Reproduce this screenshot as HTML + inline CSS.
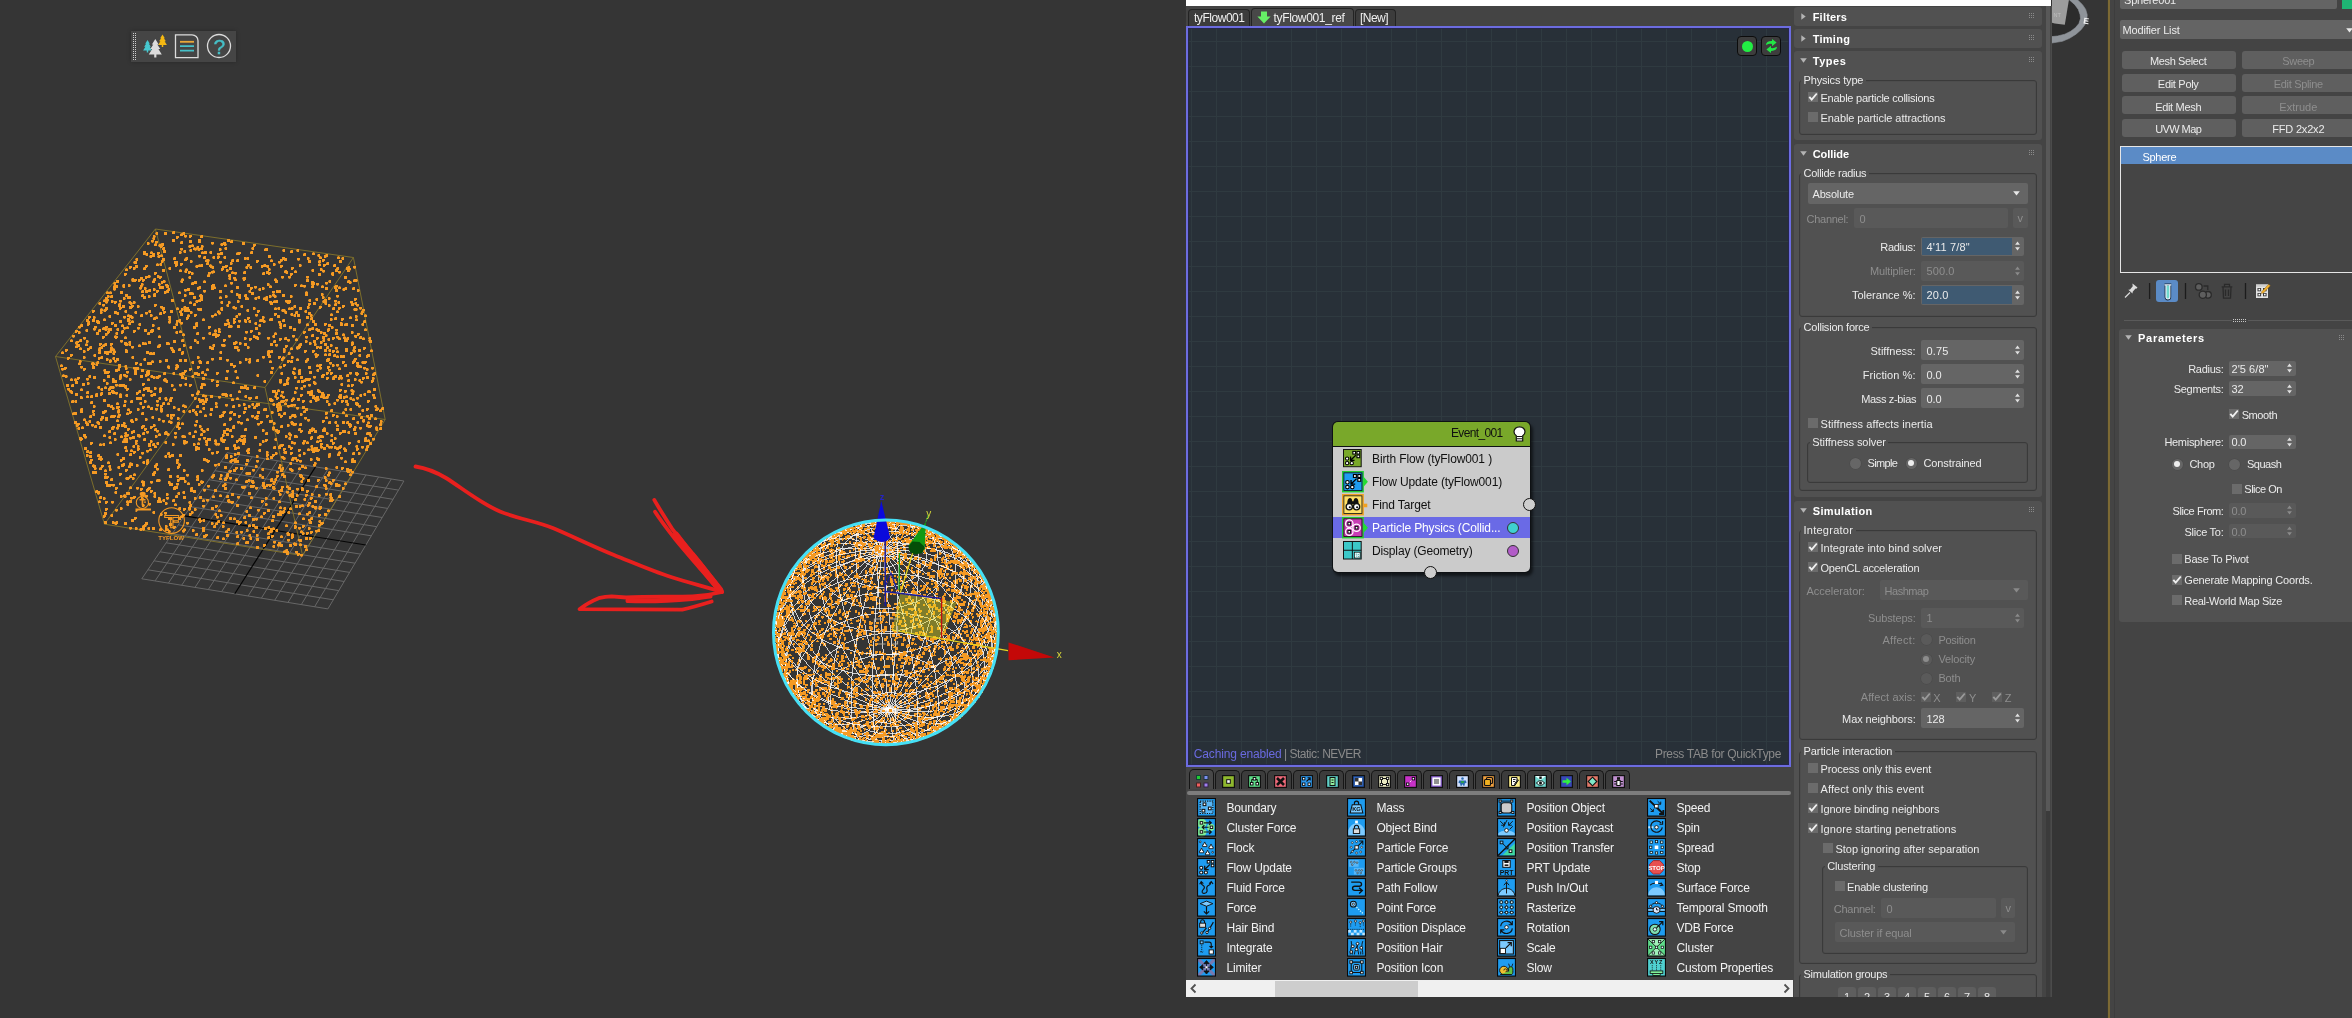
<!DOCTYPE html>
<html><head><meta charset="utf-8"><title>tyFlow</title>
<style>
html,body{margin:0;padding:0}
body{width:2352px;height:1018px;background:#353535;position:relative;overflow:hidden;font-family:"Liberation Sans",sans-serif}
body div,body span.t,body svg{position:absolute}
span.t{white-space:pre;display:block}
#w{left:0;top:0;width:2352px;height:1018px;will-change:transform}
svg{overflow:visible}
</style></head><body><div id="w">
<svg style="left:0;top:0" width="1186" height="1018" viewBox="0 0 1186 1018"><path d="M227.1 452.7L141.8 578.8M227.1 452.7L403.9 481.0M239.7 454.7L155.1 580.9M221.0 461.7L398.5 490.1M252.4 456.7L168.4 583.1M214.9 470.7L393.0 499.3M265.0 458.8L181.7 585.2M208.8 479.7L387.6 508.4M277.6 460.8L195.0 587.4M202.7 488.7L382.2 517.5M290.2 462.8L208.3 589.5M196.6 497.7L376.8 526.7M302.9 464.8L221.6 591.7M190.5 506.7L371.3 535.8M328.1 468.9L248.1 596.0M178.4 524.8L360.5 554.1M340.8 470.9L261.4 598.1M172.3 533.8L355.0 563.2M353.4 472.9L274.7 600.3M166.2 542.8L349.6 572.4M366.0 474.9L288.0 602.4M160.1 551.8L344.2 581.5M378.6 477.0L301.3 604.6M154.0 560.8L338.8 590.6M391.3 479.0L314.6 606.8M147.9 569.8L333.3 599.8M403.9 481.0L327.9 608.9M141.8 578.8L327.9 608.9" stroke="#676767" stroke-width="1" fill="none"/><path d="M315.5 466.9L234.8 593.8M184.4 515.8L365.9 545.0" stroke="#050505" stroke-width="1.200" fill="none"/><path d="M155.4 229.0L353.4 257.5M353.4 257.5L385.2 419.5M385.2 419.5L302.6 555.6M302.6 555.6L104.5 524.2M104.5 524.2L55.5 356.5M55.5 356.5L155.4 229.0M155.4 229.0L198.6 394.1M385.2 419.5L198.6 394.1M104.5 524.2L198.6 394.1M353.4 257.5L265.0 387.5M55.5 356.5L265.0 387.5M302.6 555.6L265.0 387.5" stroke="#85752a" stroke-width=".9" fill="none"/><path d="M307 306h2l1 1.500-1 1.500h-2zM181 376h3v3h-3zM173 406h2l1 1.500-1 1.500h-2zM254 436h3v3h-3zM156 468h3v2l-1.500 1-1.500-1zM226 534h3v3h-3zM271 399h2l1 1.500-1 1.500h-2zM334 300h3v2l-1.500 1-1.500-1zM191 282m1 0h2v3h-3v-2zM120 459h3v2h-1v1h-2zM317 389h2l1 1.500-1 1.500h-2zM175 264h3v2h-1v1h-2zM251 292h3v3h-3zM243 435h3v2l-1.500 1-1.500-1zM221 393m1 0h2v3h-2l-1-1.500zM265 298m0 1l1.500-1 1.500 1v2h-3zM268 255h3v3h-3zM197 442m0 1l1.500-1 1.500 1v2h-3zM142 481m1 0h2v3h-3v-2zM300 387m1 0h2v3h-2l-1-1.500zM237 325h3v3h-3zM202 407m1 0h2v3h-2l-1-1.500zM322 420h3v2h-1v1h-2zM146 462h3v2h-1v1h-2zM216 451h3v2h-1v1h-2zM113 288h3v2l-1.500 1-1.500-1zM180 241m1 0h2v3h-3v-2zM156 263m0 1l1.500-1 1.500 1v2h-3zM171 454h3v3h-3zM256 359m1 0h2v3h-3v-2zM226 304m1 0h2v3h-2l-1-1.500zM277 544h3v2l-1.500 1-1.500-1zM139 287h3v2l-1.500 1-1.500-1zM118 384m1 0h2v3h-2l-1-1.500zM113 282m1 0h2v3h-2l-1-1.500zM302 400h3v2h-1v1h-2zM364 361h3v2h-1v1h-2zM89 415m1 0h2v3h-3v-2zM237 446m0 1l1.500-1 1.500 1v2h-3zM158 479h2l1 1.500-1 1.500h-2zM336 295h3v2l-1.500 1-1.500-1zM164 291h2l1 1.500-1 1.500h-2zM189 249m1 0h2v3h-2l-1-1.500zM197 373h3v3h-3zM202 430m1 0h2v3h-2l-1-1.500zM231 259m1 0h2v3h-3v-2zM344 482m0 1l1.500-1 1.500 1v2h-3zM161 243m1 0h2v3h-2l-1-1.500zM148 503h3v2l-1.500 1-1.500-1zM200 386h3v3h-3zM130 302h2l1 1.500-1 1.500h-2zM239 342h2l1 1.500-1 1.500h-2zM252 469h3v2l-1.500 1-1.500-1zM259 319m1 0h2v3h-3v-2zM228 274m1 0h2v3h-3v-2zM310 497h3v2h-1v1h-2zM316 354h3v2h-1v1h-2zM123 494m0 1l1.500-1 1.500 1v2h-3zM134 311m1 0h2v3h-2l-1-1.500zM287 511m1 0h2v3h-2l-1-1.500zM160 243m0 1l1.500-1 1.500 1v2h-3zM321 375h3v3h-3zM112 391m1 0h2v3h-3v-2zM104 469m0 1l1.500-1 1.500 1v2h-3zM231 459h3v2l-1.500 1-1.500-1zM317 458m1 0h2v3h-3v-2zM155 435h2l1 1.500-1 1.500h-2zM135 527h2l1 1.500-1 1.500h-2zM332 414h3v2h-1v1h-2zM321 435m0 1l1.500-1 1.500 1v2h-3zM257 411h3v3h-3zM283 364h3v2h-1v1h-2zM112 484h3v2l-1.500 1-1.500-1zM366 445m1 0h2v3h-3v-2zM335 289h3v3h-3zM349 424h3v3h-3zM348 423h3v2h-1v1h-2zM273 340m1 0h2v3h-3v-2zM273 390h3v3h-3zM325 412h2l1 1.500-1 1.500h-2zM291 495m1 0h2v3h-3v-2zM316 346h3v2h-1v1h-2zM147 362h3v3h-3zM293 372h2l1 1.500-1 1.500h-2zM174 261h2l1 1.500-1 1.500h-2zM122 384m1 0h2v3h-3v-2zM114 380h3v3h-3zM282 356m0 1l1.500-1 1.500 1v2h-3zM278 321h3v2l-1.500 1-1.500-1zM202 519m1 0h2v3h-2l-1-1.500zM338 286m0 1l1.500-1 1.500 1v2h-3zM332 376m1 0h2v3h-2l-1-1.500zM142 394h3v2l-1.500 1-1.500-1zM124 385m1 0h2v3h-3v-2zM329 496m1 0h2v3h-2l-1-1.500zM349 316m0 1l1.500-1 1.500 1v2h-3zM368 390m0 1l1.500-1 1.500 1v2h-3zM315 530h3v2l-1.500 1-1.500-1zM168 455m1 0h2v3h-2l-1-1.500zM205 440h3v2h-1v1h-2zM103 299m0 1l1.500-1 1.500 1v2h-3zM74 412h3v3h-3zM250 251m1 0h2v3h-3v-2zM375 428m1 0h2v3h-2l-1-1.500zM85 329m1 0h2v3h-2l-1-1.500zM307 504h3v2h-1v1h-2zM184 309h3v3h-3zM265 296m1 0h2v3h-2l-1-1.500zM171 384h2l1 1.500-1 1.500h-2zM284 337m1 0h2v3h-3v-2zM86 340h2l1 1.500-1 1.500h-2zM284 311m1 0h2v3h-2l-1-1.500zM272 390h3v3h-3zM291 356h2l1 1.500-1 1.500h-2zM345 323m1 0h2v3h-2l-1-1.500zM153 492m1 0h2v3h-2l-1-1.500zM275 429m1 0h2v3h-2l-1-1.500zM194 397h2l1 1.500-1 1.500h-2zM203 535h3v3h-3zM203 458h3v2h-1v1h-2zM167 452m1 0h2v3h-3v-2zM353 460h3v2l-1.500 1-1.500-1zM291 422h3v2h-1v1h-2zM205 443m1 0h2v3h-2l-1-1.500zM189 368h3v2h-1v1h-2zM256 455h2l1 1.500-1 1.500h-2zM147 387h3v3h-3zM281 486h3v2h-1v1h-2zM145 253m1 0h2v3h-2l-1-1.500zM164 441m1 0h2v3h-2l-1-1.500zM220 243m1 0h2v3h-2l-1-1.500zM364 314m0 1l1.500-1 1.500 1v2h-3zM126 371h3v2l-1.500 1-1.500-1zM368 339m1 0h2v3h-2l-1-1.500zM102 327m0 1l1.500-1 1.500 1v2h-3zM106 358h2l1 1.500-1 1.500h-2zM372 394h3v2l-1.500 1-1.500-1zM272 515h3v3h-3zM279 510m0 1l1.500-1 1.500 1v2h-3zM308 384h3v2l-1.500 1-1.500-1zM122 457h3v3h-3zM175 486h3v3h-3zM319 506h3v3h-3zM135 440h3v2h-1v1h-2zM279 493h2l1 1.500-1 1.500h-2zM93 316h2l1 1.500-1 1.500h-2zM306 490h3v2h-1v1h-2zM116 419m0 1l1.500-1 1.500 1v2h-3zM75 330h3v2h-1v1h-2zM335 269h3v3h-3zM141 412m1 0h2v3h-3v-2zM169 398m1 0h2v3h-3v-2zM303 379m0 1l1.500-1 1.500 1v2h-3zM349 425h3v2h-1v1h-2zM250 330h3v2h-1v1h-2zM342 288m1 0h2v3h-2l-1-1.500zM223 430h3v3h-3zM347 266m1 0h2v3h-2l-1-1.500zM86 395m0 1l1.500-1 1.500 1v2h-3zM269 285m0 1l1.500-1 1.500 1v2h-3zM256 546h3v3h-3zM355 318m0 1l1.500-1 1.500 1v2h-3zM159 286h3v3h-3zM351 471h3v2l-1.500 1-1.500-1zM166 342h3v3h-3zM331 272m1 0h2v3h-3v-2zM199 520h3v2h-1v1h-2zM113 350m0 1l1.500-1 1.500 1v2h-3zM202 394m0 1l1.500-1 1.500 1v2h-3zM162 420h3v2l-1.500 1-1.500-1zM233 444m1 0h2v3h-3v-2zM80 324m1 0h2v3h-3v-2zM134 517h3v2h-1v1h-2zM166 414m1 0h2v3h-2l-1-1.500zM74 421h3v3h-3zM128 343m1 0h2v3h-2l-1-1.500zM161 281h3v2h-1v1h-2zM266 265m1 0h2v3h-2l-1-1.500zM276 431m1 0h2v3h-2l-1-1.500zM294 526h3v2h-1v1h-2zM289 544h3v3h-3zM371 380h3v2h-1v1h-2zM215 505h3v2h-1v1h-2zM165 359h3v3h-3zM322 339m1 0h2v3h-2l-1-1.500zM133 330h3v2h-1v1h-2zM212 270m0 1l1.500-1 1.500 1v2h-3zM291 267h3v2h-1v1h-2zM311 334m1 0h2v3h-3v-2zM261 468m1 0h2v3h-2l-1-1.500zM229 477h3v2l-1.500 1-1.500-1zM107 328m1 0h2v3h-2l-1-1.500zM294 423h3v2l-1.500 1-1.500-1zM147 405m0 1l1.500-1 1.500 1v2h-3zM181 435m1 0h2v3h-2l-1-1.500zM120 384m1 0h2v3h-2l-1-1.500zM330 439m1 0h2v3h-3v-2zM277 389m0 1l1.500-1 1.500 1v2h-3zM281 467m1 0h2v3h-2l-1-1.500zM118 303m1 0h2v3h-3v-2zM338 484h2l1 1.500-1 1.500h-2zM294 543h3v3h-3zM358 452h2l1 1.500-1 1.500h-2zM312 350h3v2h-1v1h-2zM127 477h3v2h-1v1h-2zM141 497h2l1 1.500-1 1.500h-2zM280 415h3v2h-1v1h-2zM124 386m1 0h2v3h-2l-1-1.500zM305 360h2l1 1.500-1 1.500h-2zM105 307h3v3h-3zM345 349h3v3h-3zM125 268m0 1l1.500-1 1.500 1v2h-3zM287 339h3v2l-1.500 1-1.500-1zM248 479h2l1 1.500-1 1.500h-2zM303 452h2l1 1.500-1 1.500h-2zM311 427m0 1l1.500-1 1.500 1v2h-3zM100 356m1 0h2v3h-2l-1-1.500zM309 429h3v2h-1v1h-2zM230 455h2l1 1.500-1 1.500h-2zM255 314h3v2l-1.500 1-1.500-1zM353 460m1 0h2v3h-3v-2zM340 323m1 0h2v3h-3v-2zM114 311h3v3h-3zM341 467h3v2h-1v1h-2zM182 404m0 1l1.500-1 1.500 1v2h-3zM67 388h3v2l-1.500 1-1.500-1zM202 402m0 1l1.500-1 1.500 1v2h-3zM291 536h3v2h-1v1h-2zM110 514m1 0h2v3h-2l-1-1.500zM277 409h3v2h-1v1h-2zM141 480m0 1l1.500-1 1.500 1v2h-3zM310 314h2l1 1.500-1 1.500h-2zM150 251m0 1l1.500-1 1.500 1v2h-3zM105 418m0 1l1.500-1 1.500 1v2h-3zM278 290m1 0h2v3h-3v-2zM148 487h3v2l-1.500 1-1.500-1zM220 301m1 0h2v3h-2l-1-1.500zM257 310h3v2h-1v1h-2zM187 482m0 1l1.500-1 1.500 1v2h-3zM125 350m1 0h2v3h-3v-2zM92 366h3v3h-3zM194 281h3v3h-3zM95 363m1 0h2v3h-2l-1-1.500zM144 329h3v3h-3zM255 396m1 0h2v3h-3v-2zM293 367m0 1l1.500-1 1.500 1v2h-3zM267 536m1 0h2v3h-3v-2zM176 461h2l1 1.500-1 1.500h-2zM150 481h3v2l-1.500 1-1.500-1zM236 376m0 1l1.500-1 1.500 1v2h-3zM255 327h3v3h-3zM351 341m0 1l1.500-1 1.500 1v2h-3zM136 397h3v3h-3zM144 287h2l1 1.500-1 1.500h-2zM158 283h2l1 1.500-1 1.500h-2zM228 500m0 1l1.500-1 1.500 1v2h-3zM324 349h3v3h-3zM129 453m1 0h2v3h-3v-2zM245 510m1 0h2v3h-2l-1-1.500zM184 270m1 0h2v3h-2l-1-1.500zM129 437h3v2l-1.500 1-1.500-1zM335 332h3v3h-3zM329 362h3v2l-1.500 1-1.500-1zM283 349h2l1 1.500-1 1.500h-2zM153 376h2l1 1.500-1 1.500h-2zM343 447m0 1l1.500-1 1.500 1v2h-3zM133 267h2l1 1.500-1 1.500h-2zM66 384h3v3h-3zM351 458m1 0h2v3h-3v-2zM344 364m1 0h2v3h-3v-2zM257 403h3v3h-3zM194 411m1 0h2v3h-2l-1-1.500zM162 258m1 0h2v3h-2l-1-1.500zM117 411h3v2l-1.500 1-1.500-1zM151 416m1 0h2v3h-2l-1-1.500zM366 368h2l1 1.500-1 1.500h-2zM294 415h2l1 1.500-1 1.500h-2zM308 431h3v3h-3zM144 387m1 0h2v3h-2l-1-1.500zM327 509m0 1l1.500-1 1.500 1v2h-3zM112 352m1 0h2v3h-2l-1-1.500zM198 518m1 0h2v3h-3v-2zM246 297m0 1l1.500-1 1.500 1v2h-3zM346 468h3v2l-1.500 1-1.500-1zM210 408h3v3h-3zM230 262h2l1 1.500-1 1.500h-2zM116 402m0 1l1.500-1 1.500 1v2h-3zM90 442h3v2h-1v1h-2zM203 290h3v2l-1.500 1-1.500-1zM191 244m0 1l1.500-1 1.500 1v2h-3zM271 519m1 0h2v3h-3v-2zM289 416h2l1 1.500-1 1.500h-2zM201 481h3v2h-1v1h-2zM147 488h3v2h-1v1h-2zM300 475h3v3h-3zM295 435m0 1l1.500-1 1.500 1v2h-3zM367 354h3v3h-3zM354 335h3v2l-1.500 1-1.500-1zM233 413h3v3h-3zM103 497h2l1 1.500-1 1.500h-2zM262 482h3v2h-1v1h-2zM254 286h3v2l-1.500 1-1.500-1zM237 452h3v3h-3zM231 398m0 1l1.500-1 1.500 1v2h-3zM172 499m1 0h2v3h-3v-2zM285 524m0 1l1.500-1 1.500 1v2h-3zM122 285m1 0h2v3h-2l-1-1.500zM141 426h3v2h-1v1h-2zM143 251h3v2h-1v1h-2zM262 316h2l1 1.500-1 1.500h-2zM353 359m1 0h2v3h-3v-2zM347 269h3v3h-3zM204 395h3v2l-1.500 1-1.500-1zM178 507m1 0h2v3h-3v-2zM313 464h3v2l-1.500 1-1.500-1zM132 445m1 0h2v3h-2l-1-1.500zM310 390m1 0h2v3h-3v-2zM178 463m0 1l1.500-1 1.500 1v2h-3zM319 435h3v2l-1.500 1-1.500-1zM209 264m0 1l1.500-1 1.500 1v2h-3zM349 397m1 0h2v3h-2l-1-1.500zM157 500h2l1 1.500-1 1.500h-2zM201 371m1 0h2v3h-3v-2zM250 485h2l1 1.500-1 1.500h-2zM295 338m0 1l1.500-1 1.500 1v2h-3zM232 425m1 0h2v3h-2l-1-1.500zM197 287h2l1 1.500-1 1.500h-2zM184 480h2l1 1.500-1 1.500h-2zM294 284h3v2h-1v1h-2zM367 400h3v2h-1v1h-2zM165 380m1 0h2v3h-2l-1-1.500zM293 314m1 0h2v3h-2l-1-1.500zM138 279h3v2h-1v1h-2zM155 232m1 0h2v3h-2l-1-1.500zM140 277h3v2l-1.500 1-1.500-1zM255 487h3v2l-1.500 1-1.500-1zM234 307h3v2l-1.500 1-1.500-1zM172 414h3v2l-1.500 1-1.500-1zM156 479m1 0h2v3h-3v-2zM234 447m1 0h2v3h-2l-1-1.500zM75 342m1 0h2v3h-2l-1-1.500zM298 319h3v3h-3zM165 398h2l1 1.500-1 1.500h-2zM155 241h3v2l-1.500 1-1.500-1zM278 402h2l1 1.500-1 1.500h-2zM118 414h3v2l-1.500 1-1.500-1zM321 392h3v2h-1v1h-2zM297 314h3v3h-3zM363 347h3v2h-1v1h-2zM129 486m0 1l1.500-1 1.500 1v2h-3zM183 435m0 1l1.500-1 1.500 1v2h-3zM249 397h3v2h-1v1h-2zM139 528m1 0h2v3h-2l-1-1.500zM362 377h3v2h-1v1h-2zM262 429h2l1 1.500-1 1.500h-2zM217 334h3v2h-1v1h-2zM356 304h3v2l-1.500 1-1.500-1zM191 375m1 0h2v3h-2l-1-1.500zM362 420h3v2l-1.500 1-1.500-1zM254 416m0 1l1.500-1 1.500 1v2h-3zM238 294m1 0h2v3h-3v-2zM285 549m1 0h2v3h-3v-2zM279 379h3v2h-1v1h-2zM150 426h3v2h-1v1h-2zM344 390h3v2l-1.500 1-1.500-1zM307 419h3v2l-1.500 1-1.500-1zM344 276h3v3h-3zM351 331h2l1 1.500-1 1.500h-2zM87 323h3v2h-1v1h-2zM114 438h2l1 1.500-1 1.500h-2zM312 282m1 0h2v3h-3v-2zM333 264m1 0h2v3h-3v-2zM256 403h3v2l-1.500 1-1.500-1zM353 279m1 0h2v3h-3v-2zM109 484h3v2h-1v1h-2zM236 259m1 0h2v3h-3v-2zM112 415m0 1l1.500-1 1.500 1v2h-3zM133 261m1 0h2v3h-2l-1-1.500zM150 394m1 0h2v3h-2l-1-1.500zM286 382h3v3h-3zM81 426m0 1l1.500-1 1.500 1v2h-3zM319 306h3v2h-1v1h-2zM157 345m1 0h2v3h-3v-2zM151 360m0 1l1.500-1 1.500 1v2h-3zM149 352m1 0h2v3h-3v-2zM106 291m0 1l1.500-1 1.500 1v2h-3zM229 411m0 1l1.500-1 1.500 1v2h-3zM256 374m1 0h2v3h-2l-1-1.500zM350 301h3v2l-1.500 1-1.500-1zM111 390h3v2h-1v1h-2zM79 437h3v3h-3zM147 378m0 1l1.500-1 1.500 1v2h-3zM302 517m0 1l1.500-1 1.500 1v2h-3zM70 391m1 0h2v3h-2l-1-1.500zM324 484m0 1l1.500-1 1.500 1v2h-3zM125 440h3v3h-3zM330 372h3v2h-1v1h-2zM137 327h3v2l-1.500 1-1.500-1zM257 509h3v2l-1.500 1-1.500-1zM211 507h3v3h-3zM316 337h3v2h-1v1h-2zM346 374m1 0h2v3h-3v-2zM252 485h3v2h-1v1h-2zM324 513h3v3h-3zM233 277h3v2l-1.500 1-1.500-1zM283 350h2l1 1.500-1 1.500h-2zM375 426m0 1l1.500-1 1.500 1v2h-3zM318 524h3v2h-1v1h-2zM222 266h3v2h-1v1h-2zM80 388m0 1l1.500-1 1.500 1v2h-3zM70 339m0 1l1.500-1 1.500 1v2h-3zM147 527m1 0h2v3h-2l-1-1.500zM178 427h3v2h-1v1h-2zM176 425m1 0h2v3h-3v-2zM278 490h3v2h-1v1h-2zM299 505h3v2h-1v1h-2zM236 520h3v2h-1v1h-2zM334 421m1 0h2v3h-2l-1-1.500zM270 259m0 1l1.500-1 1.500 1v2h-3zM317 479h3v2h-1v1h-2zM324 353m0 1l1.500-1 1.500 1v2h-3zM142 383h3v2h-1v1h-2zM256 415h3v2h-1v1h-2zM273 300m0 1l1.500-1 1.500 1v2h-3zM102 304h3v2l-1.500 1-1.500-1zM256 538h3v3h-3zM118 304h3v3h-3zM332 442h3v2h-1v1h-2zM219 296m0 1l1.500-1 1.500 1v2h-3zM369 442h3v3h-3zM127 428h3v2h-1v1h-2zM128 319h2l1 1.500-1 1.500h-2zM67 357h3v2h-1v1h-2zM220 474h2l1 1.500-1 1.500h-2zM327 358h3v3h-3zM305 548m0 1l1.500-1 1.500 1v2h-3zM276 405h2l1 1.500-1 1.500h-2zM125 469h3v2h-1v1h-2zM366 408h3v2h-1v1h-2zM260 515m0 1l1.500-1 1.500 1v2h-3zM321 522h3v2h-1v1h-2zM338 446m1 0h2v3h-3v-2zM328 349m1 0h2v3h-2l-1-1.500zM283 475m1 0h2v3h-3v-2zM236 440h3v2h-1v1h-2zM171 299h3v3h-3zM115 509h3v2l-1.500 1-1.500-1zM318 260m1 0h2v3h-3v-2zM360 381h3v2l-1.500 1-1.500-1zM340 355h2l1 1.500-1 1.500h-2zM103 515h3v2h-1v1h-2zM194 248h3v2l-1.500 1-1.500-1zM319 346m1 0h2v3h-3v-2zM324 343h3v3h-3zM313 447m1 0h2v3h-3v-2zM97 454m1 0h2v3h-3v-2zM238 415h3v2h-1v1h-2zM306 441m0 1l1.500-1 1.500 1v2h-3zM261 476m1 0h2v3h-2l-1-1.500zM229 417m0 1l1.500-1 1.500 1v2h-3zM186 307h3v2l-1.500 1-1.500-1zM179 454h3v3h-3zM325 254m1 0h2v3h-3v-2zM194 314h3v2h-1v1h-2zM287 301m0 1l1.500-1 1.500 1v2h-3zM101 465h3v2h-1v1h-2zM90 459h3v2h-1v1h-2zM262 440h2l1 1.500-1 1.500h-2zM279 366h3v2l-1.500 1-1.500-1zM123 316h3v2l-1.500 1-1.500-1zM108 315m1 0h2v3h-2l-1-1.500zM296 488h3v2l-1.500 1-1.500-1zM200 295h3v3h-3zM162 402m1 0h2v3h-3v-2zM228 470m1 0h2v3h-2l-1-1.500zM231 271m0 1l1.500-1 1.500 1v2h-3zM138 323m1 0h2v3h-2l-1-1.500zM317 436m1 0h2v3h-3v-2zM118 365m0 1l1.500-1 1.500 1v2h-3zM283 309h2l1 1.500-1 1.500h-2zM75 341m0 1l1.500-1 1.500 1v2h-3zM308 260h3v3h-3zM298 346h3v2h-1v1h-2zM225 477h3v2h-1v1h-2zM98 348m0 1l1.500-1 1.500 1v2h-3zM218 396h3v2l-1.500 1-1.500-1zM163 311h3v2h-1v1h-2zM90 395m1 0h2v3h-3v-2zM242 277m1 0h2v3h-2l-1-1.500zM338 367m0 1l1.500-1 1.500 1v2h-3zM315 399h2l1 1.500-1 1.500h-2zM300 413h2l1 1.500-1 1.500h-2zM225 530m0 1l1.500-1 1.500 1v2h-3zM116 280h3v3h-3zM278 466m0 1l1.500-1 1.500 1v2h-3zM202 337h3v2l-1.500 1-1.500-1zM336 415h2l1 1.500-1 1.500h-2zM236 542m1 0h2v3h-3v-2zM152 280m0 1l1.500-1 1.500 1v2h-3zM110 346m0 1l1.500-1 1.500 1v2h-3zM248 534m1 0h2v3h-2l-1-1.500zM239 521h3v2h-1v1h-2zM112 348m0 1l1.500-1 1.500 1v2h-3zM246 529h2l1 1.500-1 1.500h-2zM64 367h3v2h-1v1h-2zM229 394m1 0h2v3h-2l-1-1.500zM284 270m1 0h2v3h-3v-2zM284 451h3v3h-3zM176 483h3v2l-1.500 1-1.500-1zM107 371h3v2h-1v1h-2zM218 509m0 1l1.500-1 1.500 1v2h-3zM258 324m1 0h2v3h-2l-1-1.500zM70 354h3v2h-1v1h-2zM244 337h2l1 1.500-1 1.500h-2zM345 395m0 1l1.500-1 1.500 1v2h-3zM305 408h3v3h-3zM354 426h2l1 1.500-1 1.500h-2zM166 290h3v3h-3zM153 294m1 0h2v3h-3v-2zM224 393m1 0h2v3h-3v-2zM322 396m1 0h2v3h-2l-1-1.500zM195 322m1 0h2v3h-3v-2zM166 497h3v2l-1.500 1-1.500-1zM212 333m0 1l1.500-1 1.500 1v2h-3zM110 405m1 0h2v3h-3v-2zM145 418h2l1 1.500-1 1.500h-2zM340 377h3v2l-1.500 1-1.500-1zM227 528m1 0h2v3h-3v-2zM238 320h3v2l-1.500 1-1.500-1zM351 303m1 0h2v3h-3v-2zM142 461m1 0h2v3h-2l-1-1.500zM270 528h3v2l-1.500 1-1.500-1zM148 444m1 0h2v3h-3v-2zM125 349h2l1 1.500-1 1.500h-2zM360 312m1 0h2v3h-2l-1-1.500zM278 261h3v2l-1.500 1-1.500-1zM272 335m1 0h2v3h-2l-1-1.500zM149 362m1 0h2v3h-3v-2zM349 408m1 0h2v3h-2l-1-1.500zM72 412m0 1l1.500-1 1.500 1v2h-3zM152 237m1 0h2v3h-2l-1-1.500zM192 529h2l1 1.500-1 1.500h-2zM314 397h3v2h-1v1h-2zM110 343h3v2h-1v1h-2zM133 473m0 1l1.500-1 1.500 1v2h-3zM353 350h3v2l-1.500 1-1.500-1zM103 369m1 0h2v3h-2l-1-1.500zM111 300h2l1 1.500-1 1.500h-2zM115 336h3v2h-1v1h-2zM234 460h2l1 1.500-1 1.500h-2zM362 309h3v2l-1.500 1-1.500-1zM235 478m0 1l1.500-1 1.500 1v2h-3zM92 413m1 0h2v3h-2l-1-1.500zM176 459h3v2l-1.500 1-1.500-1zM229 418h3v2h-1v1h-2zM86 423m1 0h2v3h-3v-2zM79 360h2l1 1.500-1 1.500h-2zM356 397h3v2l-1.500 1-1.500-1zM299 543m0 1l1.500-1 1.500 1v2h-3zM138 390m1 0h2v3h-2l-1-1.500zM274 313h3v2h-1v1h-2zM161 260h2l1 1.500-1 1.500h-2zM328 446h3v2l-1.500 1-1.500-1zM338 451m0 1l1.500-1 1.500 1v2h-3zM334 317m1 0h2v3h-3v-2zM205 259m0 1l1.500-1 1.500 1v2h-3zM80 396h2l1 1.500-1 1.500h-2zM379 423m1 0h2v3h-3v-2zM270 478m1 0h2v3h-3v-2zM104 328m1 0h2v3h-2l-1-1.500zM300 554h3v2l-1.500 1-1.500-1zM131 346h3v2l-1.500 1-1.500-1zM97 492h3v2l-1.500 1-1.500-1zM97 491m1 0h2v3h-2l-1-1.500zM182 232m1 0h2v3h-3v-2zM225 295h2l1 1.500-1 1.500h-2zM186 474h3v2l-1.500 1-1.500-1zM349 372h3v2l-1.500 1-1.500-1zM301 465h3v3h-3zM170 417h3v2l-1.500 1-1.500-1zM312 450m1 0h2v3h-3v-2zM354 378h2l1 1.500-1 1.500h-2zM225 447h3v2h-1v1h-2zM143 358m1 0h2v3h-2l-1-1.500zM255 465h2l1 1.500-1 1.500h-2zM328 481m1 0h2v3h-3v-2zM119 395m1 0h2v3h-3v-2zM92 319h3v3h-3zM336 310m0 1l1.500-1 1.500 1v2h-3zM184 289h3v2l-1.500 1-1.500-1zM230 363h3v3h-3zM156 290h3v2h-1v1h-2zM279 408m1 0h2v3h-3v-2zM191 272h2l1 1.500-1 1.500h-2zM358 379m1 0h2v3h-2l-1-1.500zM175 367h2l1 1.500-1 1.500h-2zM125 477m1 0h2v3h-2l-1-1.500zM130 449m0 1l1.500-1 1.500 1v2h-3zM220 308m1 0h2v3h-2l-1-1.500zM181 352h2l1 1.500-1 1.500h-2zM245 472m1 0h2v3h-2l-1-1.500zM119 300h3v2l-1.500 1-1.500-1zM303 385h3v2l-1.500 1-1.500-1zM206 499h3v2l-1.500 1-1.500-1zM158 433m0 1l1.500-1 1.500 1v2h-3zM338 337m0 1l1.500-1 1.500 1v2h-3zM156 400h3v2l-1.500 1-1.500-1zM219 357h3v3h-3zM239 361h2l1 1.500-1 1.500h-2zM167 366m1 0h2v3h-2l-1-1.500zM325 487h2l1 1.500-1 1.500h-2zM157 255m1 0h2v3h-2l-1-1.500zM174 486h3v2l-1.500 1-1.500-1zM332 377m0 1l1.500-1 1.500 1v2h-3zM112 521h2l1 1.500-1 1.500h-2zM133 451h3v2h-1v1h-2zM230 325h2l1 1.500-1 1.500h-2zM179 251h2l1 1.500-1 1.500h-2zM238 404h2l1 1.500-1 1.500h-2zM207 259h2l1 1.500-1 1.500h-2zM374 405m1 0h2v3h-2l-1-1.500zM123 374h3v2l-1.500 1-1.500-1zM209 413m1 0h2v3h-2l-1-1.500zM281 444h3v2h-1v1h-2zM159 387m0 1l1.500-1 1.500 1v2h-3zM300 284m0 1l1.500-1 1.500 1v2h-3zM339 394h3v3h-3zM232 306m1 0h2v3h-2l-1-1.500zM143 296h3v3h-3zM253 335h2l1 1.500-1 1.500h-2zM93 354m1 0h2v3h-2l-1-1.500zM230 282h3v2l-1.500 1-1.500-1zM164 232h3v3h-3zM147 373h3v2h-1v1h-2zM96 421m1 0h2v3h-2l-1-1.500zM235 467h3v2h-1v1h-2zM266 454h3v2h-1v1h-2zM162 258h3v3h-3zM270 318h3v2h-1v1h-2zM286 551m1 0h2v3h-2l-1-1.500zM240 531h3v2l-1.500 1-1.500-1zM360 416m1 0h2v3h-3v-2zM289 326h3v3h-3zM298 428m1 0h2v3h-3v-2zM288 307m0 1l1.500-1 1.500 1v2h-3zM182 491m1 0h2v3h-2l-1-1.500zM179 310m0 1l1.500-1 1.500 1v2h-3zM158 498m1 0h2v3h-3v-2zM242 442h3v3h-3zM274 307m0 1l1.500-1 1.500 1v2h-3zM234 370m1 0h2v3h-2l-1-1.500zM292 335h3v2l-1.500 1-1.500-1zM153 288h2l1 1.500-1 1.500h-2zM100 308m0 1l1.500-1 1.500 1v2h-3zM268 355h3v3h-3zM369 340h3v3h-3zM214 442m1 0h2v3h-2l-1-1.500zM146 371h2l1 1.500-1 1.500h-2zM80 396m0 1l1.500-1 1.500 1v2h-3zM193 326h3v3h-3zM300 530m0 1l1.500-1 1.500 1v2h-3zM224 487h3v3h-3zM223 344h2l1 1.500-1 1.500h-2zM332 364h2l1 1.500-1 1.500h-2zM246 257m1 0h2v3h-2l-1-1.500zM169 523h3v3h-3zM270 479m1 0h2v3h-3v-2zM232 381m0 1l1.500-1 1.500 1v2h-3zM305 340h2l1 1.500-1 1.500h-2zM208 326h3v2h-1v1h-2zM183 344h2l1 1.500-1 1.500h-2zM244 320m1 0h2v3h-2l-1-1.500zM305 494h3v2h-1v1h-2zM114 324h3v3h-3zM233 342h3v3h-3zM370 349m0 1l1.500-1 1.500 1v2h-3zM185 257m1 0h2v3h-3v-2zM180 248h3v2l-1.500 1-1.500-1zM269 318m0 1l1.500-1 1.500 1v2h-3zM117 424h3v3h-3zM159 263m1 0h2v3h-2l-1-1.500zM298 344m1 0h2v3h-3v-2zM175 261h3v3h-3zM181 422m0 1l1.500-1 1.500 1v2h-3zM307 257h2l1 1.500-1 1.500h-2zM211 271h3v2l-1.500 1-1.500-1zM334 303m1 0h2v3h-3v-2zM200 480m0 1l1.500-1 1.500 1v2h-3zM127 318h3v2h-1v1h-2zM211 285h3v2h-1v1h-2zM120 507h2l1 1.500-1 1.500h-2zM325 334h2l1 1.500-1 1.500h-2zM198 286m1 0h2v3h-2l-1-1.500zM338 307h3v2h-1v1h-2zM156 442m1 0h2v3h-2l-1-1.500zM211 266m1 0h2v3h-2l-1-1.500zM198 239h3v2h-1v1h-2zM154 304h3v2h-1v1h-2zM332 307m1 0h2v3h-3v-2zM330 409m1 0h2v3h-3v-2zM327 329h3v2h-1v1h-2zM182 530h3v2l-1.500 1-1.500-1zM298 321h3v2l-1.500 1-1.500-1zM242 537m1 0h2v3h-2l-1-1.500zM352 349m1 0h2v3h-2l-1-1.500zM228 335h3v2l-1.500 1-1.500-1zM370 414h3v3h-3zM152 352m1 0h2v3h-3v-2zM136 487h3v2l-1.500 1-1.500-1zM86 319h3v2h-1v1h-2zM358 413h3v2l-1.500 1-1.500-1zM244 395m1 0h2v3h-2l-1-1.500zM311 281h3v2h-1v1h-2zM143 267m1 0h2v3h-3v-2zM154 428m1 0h2v3h-3v-2zM267 532m1 0h2v3h-3v-2zM368 432m1 0h2v3h-2l-1-1.500zM250 496m0 1l1.500-1 1.500 1v2h-3zM116 427h3v2l-1.500 1-1.500-1zM207 485h3v2l-1.500 1-1.500-1zM87 348h3v2h-1v1h-2zM372 377h2l1 1.500-1 1.500h-2zM195 265m1 0h2v3h-2l-1-1.500zM361 323m1 0h2v3h-2l-1-1.500zM196 405m1 0h2v3h-3v-2zM310 445m1 0h2v3h-2l-1-1.500zM273 487h2l1 1.500-1 1.500h-2zM117 466m1 0h2v3h-2l-1-1.500zM137 448h3v2h-1v1h-2zM132 477h2l1 1.500-1 1.500h-2zM107 351h3v2h-1v1h-2zM100 393h3v2h-1v1h-2zM328 297h2l1 1.500-1 1.500h-2zM304 310m1 0h2v3h-2l-1-1.500zM190 487m1 0h2v3h-3v-2zM207 460h3v2h-1v1h-2zM129 475m1 0h2v3h-3v-2zM352 361h3v2h-1v1h-2zM228 325m1 0h2v3h-3v-2zM116 406h2l1 1.500-1 1.500h-2zM328 369h3v2l-1.500 1-1.500-1zM126 388h3v2h-1v1h-2zM302 442h3v2l-1.500 1-1.500-1zM134 370h3v2h-1v1h-2zM280 265h3v2h-1v1h-2zM351 384h3v2h-1v1h-2zM105 417h3v2l-1.500 1-1.500-1zM219 477m0 1l1.500-1 1.500 1v2h-3zM343 430m1 0h2v3h-2l-1-1.500zM150 314h2l1 1.500-1 1.500h-2zM204 251m1 0h2v3h-2l-1-1.500zM364 439m0 1l1.500-1 1.500 1v2h-3zM278 446h3v3h-3zM110 295m1 0h2v3h-3v-2zM146 489h3v2h-1v1h-2zM233 342m0 1l1.500-1 1.500 1v2h-3zM183 469h2l1 1.500-1 1.500h-2zM279 338h3v2h-1v1h-2zM361 361m1 0h2v3h-2l-1-1.500zM112 386h2l1 1.500-1 1.500h-2zM108 465m1 0h2v3h-2l-1-1.500zM129 315m1 0h2v3h-3v-2zM127 492m1 0h2v3h-3v-2zM272 291h3v2l-1.500 1-1.500-1zM240 435m1 0h2v3h-2l-1-1.500zM338 395m1 0h2v3h-3v-2zM198 240h3v3h-3zM286 552m0 1l1.500-1 1.500 1v2h-3zM149 448m0 1l1.500-1 1.500 1v2h-3zM102 411h3v3h-3zM104 473h3v2l-1.500 1-1.500-1zM283 457h2l1 1.500-1 1.500h-2zM146 431h3v2l-1.500 1-1.500-1zM134 372h3v3h-3zM250 287h3v2h-1v1h-2zM136 367m1 0h2v3h-2l-1-1.500zM109 386m1 0h2v3h-3v-2zM367 425m1 0h2v3h-2l-1-1.500zM119 374m1 0h2v3h-2l-1-1.500zM197 248m1 0h2v3h-2l-1-1.500zM282 400h3v2h-1v1h-2zM304 545h3v3h-3zM184 370h3v2h-1v1h-2zM247 284h3v3h-3zM335 483h3v2h-1v1h-2zM332 350h3v2h-1v1h-2zM170 397h3v2h-1v1h-2zM314 430h3v3h-3zM176 365m1 0h2v3h-2l-1-1.500zM220 307m1 0h2v3h-2l-1-1.500zM69 390h3v2l-1.500 1-1.500-1zM311 285m1 0h2v3h-3v-2zM266 271h3v2h-1v1h-2zM274 278m0 1l1.500-1 1.500 1v2h-3zM310 437h3v2h-1v1h-2zM353 346m1 0h2v3h-3v-2zM255 518h3v2l-1.500 1-1.500-1zM290 360m1 0h2v3h-3v-2zM89 455h3v3h-3zM108 392h3v3h-3zM367 439m0 1l1.500-1 1.500 1v2h-3zM83 350h2l1 1.500-1 1.500h-2zM208 448h2l1 1.500-1 1.500h-2zM188 410m1 0h2v3h-2l-1-1.500zM144 400h2l1 1.500-1 1.500h-2zM357 289h2l1 1.500-1 1.500h-2zM243 411h3v2h-1v1h-2zM247 346h2l1 1.500-1 1.500h-2zM142 279h3v2h-1v1h-2zM365 372h2l1 1.500-1 1.500h-2zM238 296m1 0h2v3h-2l-1-1.500zM216 384h3v2h-1v1h-2zM344 323m0 1l1.500-1 1.500 1v2h-3zM135 442h2l1 1.500-1 1.500h-2zM168 318m1 0h2v3h-2l-1-1.500zM276 403m1 0h2v3h-3v-2zM229 517h3v3h-3zM196 332m1 0h2v3h-3v-2zM341 257m1 0h2v3h-2l-1-1.500zM326 400h2l1 1.500-1 1.500h-2zM96 320h3v2h-1v1h-2zM216 516h3v2l-1.500 1-1.500-1zM247 448m1 0h2v3h-3v-2zM270 302h3v3h-3zM351 324h3v3h-3zM83 368h3v2h-1v1h-2zM217 463m1 0h2v3h-2l-1-1.500zM98 302m1 0h2v3h-2l-1-1.500zM312 320h3v3h-3zM112 426h3v2l-1.500 1-1.500-1zM224 247m1 0h2v3h-2l-1-1.500zM218 312h3v2l-1.500 1-1.500-1zM89 451m1 0h2v3h-3v-2zM119 473h3v2h-1v1h-2zM293 305m1 0h2v3h-2l-1-1.500zM302 525h3v2h-1v1h-2zM93 376h3v2h-1v1h-2zM195 324m1 0h2v3h-2l-1-1.500zM308 303h3v2h-1v1h-2zM206 361m1 0h2v3h-3v-2zM213 525m1 0h2v3h-3v-2zM372 438h3v2l-1.500 1-1.500-1zM129 462m0 1l1.500-1 1.500 1v2h-3zM202 505h3v2l-1.500 1-1.500-1zM180 280m1 0h2v3h-2l-1-1.500zM248 320m1 0h2v3h-2l-1-1.500zM139 456h2l1 1.500-1 1.500h-2zM214 329m0 1l1.500-1 1.500 1v2h-3zM285 345h3v2h-1v1h-2zM160 408h3v2l-1.500 1-1.500-1zM283 324m1 0h2v3h-3v-2zM352 390h2l1 1.500-1 1.500h-2zM314 323h3v3h-3zM267 337h3v2l-1.500 1-1.500-1zM295 505h3v3h-3zM77 344h3v3h-3zM296 249m1 0h2v3h-2l-1-1.500zM282 249m1 0h2v3h-2l-1-1.500zM131 305h3v2h-1v1h-2zM143 388h3v2h-1v1h-2zM104 343m1 0h2v3h-3v-2zM97 321m1 0h2v3h-3v-2zM349 473m0 1l1.500-1 1.500 1v2h-3zM124 273h3v2h-1v1h-2zM105 308h3v2h-1v1h-2zM184 235h3v2l-1.500 1-1.500-1zM298 454m1 0h2v3h-2l-1-1.500zM187 309h3v3h-3zM225 394h3v3h-3zM140 314m1 0h2v3h-3v-2zM156 376h3v2h-1v1h-2zM233 318h3v2h-1v1h-2zM270 456h3v3h-3zM180 233m0 1l1.500-1 1.500 1v2h-3zM108 436m1 0h2v3h-2l-1-1.500zM365 448m1 0h2v3h-3v-2zM136 464h2l1 1.500-1 1.500h-2zM158 344m1 0h2v3h-3v-2zM308 378h3v2h-1v1h-2zM309 521m1 0h2v3h-3v-2zM339 389h3v2h-1v1h-2zM293 442h3v2l-1.500 1-1.500-1zM280 535m0 1l1.500-1 1.500 1v2h-3zM165 502h2l1 1.500-1 1.500h-2zM181 339m1 0h2v3h-3v-2zM272 497m1 0h2v3h-2l-1-1.500zM127 314m0 1l1.500-1 1.500 1v2h-3zM195 413m1 0h2v3h-2l-1-1.500zM123 327h3v2l-1.500 1-1.500-1zM121 331h3v2h-1v1h-2zM118 364h3v2l-1.500 1-1.500-1zM327 328m1 0h2v3h-3v-2zM331 273m1 0h2v3h-2l-1-1.500zM172 231m1 0h2v3h-3v-2zM298 372h3v3h-3zM232 405m1 0h2v3h-3v-2zM318 494h2l1 1.500-1 1.500h-2zM152 511m1 0h2v3h-2l-1-1.500zM65 375h2l1 1.500-1 1.500h-2zM369 425h3v2h-1v1h-2zM157 252h3v2h-1v1h-2zM183 440h3v2h-1v1h-2zM153 424h2l1 1.500-1 1.500h-2zM233 365h3v2h-1v1h-2zM106 299h3v2l-1.500 1-1.500-1zM244 257h2l1 1.500-1 1.500h-2zM167 433h2l1 1.500-1 1.500h-2zM104 512h3v3h-3zM177 422h3v3h-3zM326 432h2l1 1.500-1 1.500h-2zM244 319h2l1 1.500-1 1.500h-2zM271 367h3v2l-1.500 1-1.500-1zM104 476h2l1 1.500-1 1.500h-2zM114 360h3v2l-1.500 1-1.500-1zM198 360m1 0h2v3h-2l-1-1.500zM88 316h3v2h-1v1h-2zM251 480h3v2h-1v1h-2zM309 537h3v2h-1v1h-2zM203 280m0 1l1.500-1 1.500 1v2h-3zM347 470m0 1l1.500-1 1.500 1v2h-3zM271 535h3v2h-1v1h-2zM115 332m1 0h2v3h-2l-1-1.500zM198 438h3v2l-1.500 1-1.500-1zM366 376h3v3h-3zM189 384h3v2h-1v1h-2zM244 343h3v3h-3zM165 528h2l1 1.500-1 1.500h-2zM264 527h3v3h-3zM179 373h3v2l-1.500 1-1.500-1zM255 526m1 0h2v3h-2l-1-1.500zM115 521m1 0h2v3h-2l-1-1.500zM314 382h2l1 1.500-1 1.500h-2zM248 492h3v3h-3zM125 343m1 0h2v3h-3v-2zM154 465h3v3h-3zM379 427m1 0h2v3h-3v-2zM234 272h3v2l-1.500 1-1.500-1zM185 257m1 0h2v3h-3v-2zM179 477m1 0h2v3h-3v-2zM238 390m0 1l1.500-1 1.500 1v2h-3zM245 358h2l1 1.500-1 1.500h-2zM203 430h2l1 1.500-1 1.500h-2zM148 341h3v3h-3zM236 252m0 1l1.500-1 1.500 1v2h-3zM290 347m0 1l1.500-1 1.500 1v2h-3zM189 504m1 0h2v3h-3v-2zM212 344m1 0h2v3h-2l-1-1.500zM274 438m1 0h2v3h-2l-1-1.500zM237 300h2l1 1.500-1 1.500h-2zM218 328h2l1 1.500-1 1.500h-2zM219 351m1 0h2v3h-2l-1-1.500zM179 269m0 1l1.500-1 1.500 1v2h-3zM129 378h2l1 1.500-1 1.500h-2zM272 403m1 0h2v3h-2l-1-1.500zM341 400h3v2h-1v1h-2zM264 408m1 0h2v3h-3v-2zM308 312h3v3h-3zM187 288h3v3h-3zM366 432m1 0h2v3h-3v-2zM179 384h3v2l-1.500 1-1.500-1zM318 263m0 1l1.500-1 1.500 1v2h-3zM234 458h3v2h-1v1h-2zM103 318m0 1l1.500-1 1.500 1v2h-3zM247 451m0 1l1.500-1 1.500 1v2h-3zM344 460m0 1l1.500-1 1.500 1v2h-3zM298 449h3v2h-1v1h-2zM342 430h2l1 1.500-1 1.500h-2zM131 420m0 1l1.500-1 1.500 1v2h-3zM199 425h2l1 1.500-1 1.500h-2zM320 268h2l1 1.500-1 1.500h-2zM366 355h3v2h-1v1h-2zM334 437h2l1 1.500-1 1.500h-2zM306 316h3v3h-3zM317 529m1 0h2v3h-3v-2zM101 416h3v3h-3zM109 328h3v3h-3zM134 279h3v2h-1v1h-2zM217 310m0 1l1.500-1 1.500 1v2h-3zM80 408m1 0h2v3h-3v-2zM275 529m1 0h2v3h-2l-1-1.500zM189 240h3v3h-3zM154 445m0 1l1.500-1 1.500 1v2h-3zM192 435m1 0h2v3h-3v-2zM104 351h3v3h-3zM80 410h3v3h-3zM117 368m1 0h2v3h-2l-1-1.500zM88 375m1 0h2v3h-2l-1-1.500zM307 479h3v3h-3zM280 394m0 1l1.500-1 1.500 1v2h-3zM376 407m0 1l1.500-1 1.500 1v2h-3zM87 382h2l1 1.500-1 1.500h-2zM253 244h3v2h-1v1h-2zM306 276h3v2l-1.500 1-1.500-1zM236 504m1 0h2v3h-3v-2zM356 364m1 0h2v3h-3v-2zM103 379h2l1 1.500-1 1.500h-2zM298 512m0 1l1.500-1 1.500 1v2h-3zM352 398m0 1l1.500-1 1.500 1v2h-3zM182 514h3v2h-1v1h-2zM280 372m1 0h2v3h-2l-1-1.500zM314 506h3v2h-1v1h-2zM308 299m1 0h2v3h-2l-1-1.500zM243 271m1 0h2v3h-3v-2zM275 452h2l1 1.500-1 1.500h-2zM168 321h3v2l-1.500 1-1.500-1zM173 388m0 1l1.500-1 1.500 1v2h-3zM339 432h3v2h-1v1h-2zM142 504h2l1 1.500-1 1.500h-2zM286 552h3v3h-3zM190 311h2l1 1.500-1 1.500h-2zM287 539h3v2l-1.500 1-1.500-1zM222 440h3v3h-3zM311 282m0 1l1.500-1 1.500 1v2h-3zM237 349h3v2l-1.500 1-1.500-1zM339 260h3v3h-3zM164 432h3v2l-1.500 1-1.500-1zM125 394m1 0h2v3h-2l-1-1.500zM258 449m1 0h2v3h-2l-1-1.500zM283 383m1 0h2v3h-3v-2zM142 406h3v2h-1v1h-2zM184 258m0 1l1.500-1 1.500 1v2h-3zM201 399h3v3h-3zM104 386m0 1l1.500-1 1.500 1v2h-3zM323 264h3v2h-1v1h-2zM223 439h3v2h-1v1h-2zM86 391m1 0h2v3h-3v-2zM231 435h2l1 1.500-1 1.500h-2zM313 340h3v3h-3zM197 308h3v2l-1.500 1-1.500-1zM279 326m1 0h2v3h-2l-1-1.500zM313 376h3v2l-1.500 1-1.500-1zM330 446h3v2l-1.500 1-1.500-1zM61 351m0 1l1.500-1 1.500 1v2h-3zM203 489h3v2l-1.500 1-1.500-1zM172 372m1 0h2v3h-2l-1-1.500zM112 378h2l1 1.500-1 1.500h-2zM256 260h3v2h-1v1h-2zM207 274m1 0h2v3h-3v-2zM297 258h3v2l-1.500 1-1.500-1zM86 454h2l1 1.500-1 1.500h-2zM313 449m1 0h2v3h-3v-2zM144 342m0 1l1.500-1 1.500 1v2h-3zM337 256m0 1l1.500-1 1.500 1v2h-3zM130 497h3v2l-1.500 1-1.500-1zM169 399m1 0h2v3h-3v-2zM288 276h3v2l-1.500 1-1.500-1zM168 530h2l1 1.500-1 1.500h-2zM155 463m1 0h2v3h-2l-1-1.500zM126 434h3v2l-1.500 1-1.500-1zM83 418m0 1l1.500-1 1.500 1v2h-3zM89 461h3v3h-3zM337 453m1 0h2v3h-3v-2zM170 414h3v2h-1v1h-2zM267 350m1 0h2v3h-3v-2zM197 447m1 0h2v3h-3v-2zM254 526m1 0h2v3h-2l-1-1.500zM276 475h3v2h-1v1h-2zM79 339m1 0h2v3h-3v-2zM226 359h3v2l-1.500 1-1.500-1zM323 427m0 1l1.500-1 1.500 1v2h-3zM357 365h3v2h-1v1h-2zM95 393m1 0h2v3h-3v-2zM236 535m1 0h2v3h-3v-2zM266 415h3v2h-1v1h-2zM243 438h3v3h-3zM345 414m0 1l1.500-1 1.500 1v2h-3zM162 247m1 0h2v3h-3v-2zM222 484m0 1l1.500-1 1.500 1v2h-3zM345 339m1 0h2v3h-2l-1-1.500zM303 498m1 0h2v3h-2l-1-1.500zM145 265h3v2h-1v1h-2zM226 475h3v2l-1.500 1-1.500-1zM102 344m0 1l1.500-1 1.500 1v2h-3zM336 364h3v2l-1.500 1-1.500-1zM153 278m1 0h2v3h-3v-2zM361 409m1 0h2v3h-2l-1-1.500zM178 517m1 0h2v3h-3v-2zM226 370h3v2l-1.500 1-1.500-1zM296 407h3v2l-1.500 1-1.500-1zM152 443m1 0h2v3h-3v-2zM123 422h2l1 1.500-1 1.500h-2zM326 372h3v2h-1v1h-2zM153 495m1 0h2v3h-2l-1-1.500zM164 455m1 0h2v3h-2l-1-1.500zM220 439m1 0h2v3h-2l-1-1.500zM231 493h3v3h-3zM99 467m0 1l1.500-1 1.500 1v2h-3zM290 250m1 0h2v3h-3v-2zM97 422m1 0h2v3h-2l-1-1.500zM355 372h3v2h-1v1h-2zM174 436h3v2l-1.500 1-1.500-1zM111 501h3v2l-1.500 1-1.500-1zM322 429h2l1 1.500-1 1.500h-2zM176 475m1 0h2v3h-2l-1-1.500zM226 428h3v3h-3zM77 423h3v2h-1v1h-2zM125 449m0 1l1.500-1 1.500 1v2h-3zM318 514h3v2h-1v1h-2zM138 344m0 1l1.500-1 1.500 1v2h-3zM156 404h3v2l-1.500 1-1.500-1zM294 457h3v2l-1.500 1-1.500-1zM285 271m1 0h2v3h-2l-1-1.500zM86 450m1 0h2v3h-3v-2zM328 280m1 0h2v3h-2l-1-1.500zM205 440m0 1l1.500-1 1.500 1v2h-3zM194 430m0 1l1.500-1 1.500 1v2h-3zM139 363m1 0h2v3h-2l-1-1.500zM74 378m0 1l1.500-1 1.500 1v2h-3zM342 355m1 0h2v3h-3v-2zM135 265h3v3h-3zM248 524m0 1l1.500-1 1.500 1v2h-3zM131 320m0 1l1.500-1 1.500 1v2h-3zM344 390h2l1 1.500-1 1.500h-2zM242 242h3v3h-3zM188 432m1 0h2v3h-2l-1-1.500zM270 371h3v3h-3zM122 440m0 1l1.500-1 1.500 1v2h-3zM92 410h3v2h-1v1h-2zM331 499h3v2h-1v1h-2zM150 407m1 0h2v3h-3v-2zM246 449m0 1l1.500-1 1.500 1v2h-3zM206 262m1 0h2v3h-3v-2zM325 412h3v2h-1v1h-2zM148 275h2l1 1.500-1 1.500h-2zM210 395h3v3h-3zM124 435h3v2l-1.500 1-1.500-1zM326 377h3v2h-1v1h-2zM298 369m1 0h2v3h-3v-2zM292 457h2l1 1.500-1 1.500h-2zM293 542m0 1l1.500-1 1.500 1v2h-3zM111 322h3v2h-1v1h-2zM288 445h2l1 1.500-1 1.500h-2zM293 328h3v3h-3zM355 445m1 0h2v3h-2l-1-1.500zM211 522h2l1 1.500-1 1.500h-2zM107 295h2l1 1.500-1 1.500h-2zM153 293m1 0h2v3h-3v-2zM323 396m0 1l1.500-1 1.500 1v2h-3zM294 376h2l1 1.500-1 1.500h-2zM322 270h3v2l-1.500 1-1.500-1zM248 290m1 0h2v3h-2l-1-1.500zM275 280m1 0h2v3h-3v-2zM277 430h3v3h-3zM303 285h3v2l-1.500 1-1.500-1zM164 397m1 0h2v3h-2l-1-1.500zM170 421h2l1 1.500-1 1.500h-2zM193 296h3v3h-3zM160 513h2l1 1.500-1 1.500h-2zM315 298m1 0h2v3h-2l-1-1.500zM127 408m0 1l1.500-1 1.500 1v2h-3zM305 537h3v3h-3zM177 479h2l1 1.500-1 1.500h-2zM158 497h2l1 1.500-1 1.500h-2zM243 386m1 0h2v3h-3v-2zM315 485m1 0h2v3h-3v-2zM121 330m1 0h2v3h-3v-2zM216 372h3v2h-1v1h-2zM184 377m1 0h2v3h-2l-1-1.500zM294 435h3v2h-1v1h-2zM233 469h3v3h-3zM226 319m1 0h2v3h-2l-1-1.500zM211 242h3v2l-1.500 1-1.500-1zM169 517m1 0h2v3h-3v-2zM154 387h2l1 1.500-1 1.500h-2zM288 432m0 1l1.500-1 1.500 1v2h-3zM119 482m0 1l1.500-1 1.500 1v2h-3zM335 466m1 0h2v3h-2l-1-1.500zM245 297h3v2h-1v1h-2zM177 408m1 0h2v3h-2l-1-1.500zM269 360m0 1l1.500-1 1.500 1v2h-3zM308 502h3v2l-1.500 1-1.500-1zM334 286h3v3h-3zM230 240m1 0h2v3h-3v-2zM170 310h3v3h-3zM363 393m1 0h2v3h-2l-1-1.500zM282 319m1 0h2v3h-3v-2zM244 385h3v2l-1.500 1-1.500-1zM220 252h3v3h-3zM346 469h3v3h-3zM359 365m0 1l1.500-1 1.500 1v2h-3zM110 415m1 0h2v3h-3v-2zM169 483m1 0h2v3h-3v-2zM289 507m0 1l1.500-1 1.500 1v2h-3zM263 485h2l1 1.500-1 1.500h-2zM304 417h3v2l-1.500 1-1.500-1zM303 331h3v2h-1v1h-2zM310 458h2l1 1.500-1 1.500h-2zM270 399m1 0h2v3h-3v-2zM151 240h3v2l-1.500 1-1.500-1zM373 388h3v3h-3zM193 443h2l1 1.500-1 1.500h-2zM326 396h2l1 1.500-1 1.500h-2zM82 383h3v3h-3zM345 400h3v3h-3zM368 417m1 0h2v3h-3v-2zM99 426h3v3h-3zM299 343m1 0h2v3h-3v-2zM172 239h3v3h-3zM228 301h2l1 1.500-1 1.500h-2zM303 253m1 0h2v3h-3v-2zM331 326h2l1 1.500-1 1.500h-2zM199 410m0 1l1.500-1 1.500 1v2h-3zM173 340h3v3h-3zM280 259h3v2l-1.500 1-1.500-1zM131 278m1 0h2v3h-2l-1-1.500zM124 310m1 0h2v3h-2l-1-1.500zM346 267h2l1 1.500-1 1.500h-2zM224 478h3v3h-3zM246 459h3v3h-3zM316 396h3v2h-1v1h-2zM115 487h3v2h-1v1h-2zM94 471m1 0h2v3h-3v-2zM342 421h3v3h-3zM175 331m1 0h2v3h-2l-1-1.500zM319 256m0 1l1.500-1 1.500 1v2h-3zM145 276h3v2h-1v1h-2zM279 513m1 0h2v3h-3v-2zM185 268m0 1l1.500-1 1.500 1v2h-3zM168 267m1 0h2v3h-2l-1-1.500zM78 326h3v2l-1.500 1-1.500-1zM263 320h2l1 1.500-1 1.500h-2zM160 405h3v2h-1v1h-2zM176 307m0 1l1.500-1 1.500 1v2h-3zM354 298h3v2h-1v1h-2zM240 386h3v3h-3zM243 486h3v2h-1v1h-2zM294 391h2l1 1.500-1 1.500h-2zM142 484h3v2l-1.500 1-1.500-1zM267 353h3v2h-1v1h-2zM132 430m1 0h2v3h-2l-1-1.500zM336 267m1 0h2v3h-3v-2zM320 443h3v2h-1v1h-2zM215 402h2l1 1.500-1 1.500h-2zM184 294h2l1 1.500-1 1.500h-2zM135 418h2l1 1.500-1 1.500h-2zM114 301h3v2h-1v1h-2zM274 478m1 0h2v3h-2l-1-1.500zM222 411m1 0h2v3h-2l-1-1.500zM212 495m0 1l1.500-1 1.500 1v2h-3zM272 527m0 1l1.500-1 1.500 1v2h-3zM198 264m0 1l1.500-1 1.500 1v2h-3zM337 301m1 0h2v3h-2l-1-1.500zM153 471m1 0h2v3h-3v-2zM347 280m1 0h2v3h-3v-2zM206 428m1 0h2v3h-2l-1-1.500zM311 327m1 0h2v3h-3v-2zM107 375h3v3h-3zM201 245h2l1 1.500-1 1.500h-2zM311 269m1 0h2v3h-2l-1-1.500zM245 266m1 0h2v3h-2l-1-1.500zM124 425h3v3h-3zM90 401m1 0h2v3h-3v-2zM328 353m1 0h2v3h-3v-2zM145 290h3v2l-1.500 1-1.500-1zM336 447m0 1l1.500-1 1.500 1v2h-3zM322 259h3v2h-1v1h-2zM334 446h2l1 1.500-1 1.500h-2zM269 420m0 1l1.500-1 1.500 1v2h-3zM299 264h2l1 1.500-1 1.500h-2zM272 428h3v2l-1.500 1-1.500-1zM269 420h2l1 1.500-1 1.500h-2zM181 299m1 0h2v3h-2l-1-1.500zM187 314m0 1l1.500-1 1.500 1v2h-3zM128 465m1 0h2v3h-3v-2zM131 519h3v3h-3zM148 289m1 0h2v3h-3v-2zM188 245m1 0h2v3h-2l-1-1.500zM332 479h3v2h-1v1h-2zM315 328m1 0h2v3h-2l-1-1.500zM98 347m1 0h2v3h-2l-1-1.500zM62 374m0 1l1.500-1 1.500 1v2h-3zM189 235h3v2h-1v1h-2zM354 358h3v2h-1v1h-2zM93 465m1 0h2v3h-3v-2zM310 429m1 0h2v3h-2l-1-1.500zM288 437m1 0h2v3h-2l-1-1.500zM105 501h3v2h-1v1h-2zM103 399h3v3h-3zM359 427h3v2l-1.500 1-1.500-1zM71 400m1 0h2v3h-3v-2zM335 347h3v2l-1.500 1-1.500-1zM106 382h2l1 1.500-1 1.500h-2zM321 285m0 1l1.500-1 1.500 1v2h-3zM167 365m0 1l1.500-1 1.500 1v2h-3zM286 491h3v2l-1.500 1-1.500-1zM362 419m1 0h2v3h-3v-2zM159 528m1 0h2v3h-3v-2zM143 252m0 1l1.500-1 1.500 1v2h-3zM226 473m1 0h2v3h-3v-2zM287 405h3v2l-1.500 1-1.500-1zM336 350m0 1l1.500-1 1.500 1v2h-3zM277 307m1 0h2v3h-2l-1-1.500zM347 384m0 1l1.500-1 1.500 1v2h-3zM298 539h3v2l-1.500 1-1.500-1zM248 361h3v2l-1.500 1-1.500-1zM359 336m1 0h2v3h-3v-2zM323 447h3v3h-3zM108 388h3v2h-1v1h-2zM283 348h2l1 1.500-1 1.500h-2zM93 405h2l1 1.500-1 1.500h-2zM94 326h3v2l-1.500 1-1.500-1zM320 395m1 0h2v3h-3v-2zM255 336h3v3h-3zM188 271h3v2h-1v1h-2zM300 376h3v3h-3zM196 246m1 0h2v3h-2l-1-1.500zM263 380m1 0h2v3h-2l-1-1.500zM121 424h3v3h-3zM282 257h3v2h-1v1h-2zM136 392h3v2h-1v1h-2zM312 252m0 1l1.500-1 1.500 1v2h-3zM223 339h3v2h-1v1h-2zM339 375h3v2l-1.500 1-1.500-1zM124 522h3v3h-3zM260 421h3v2h-1v1h-2zM303 410m0 1l1.500-1 1.500 1v2h-3zM174 432h3v2l-1.500 1-1.500-1zM112 407h2l1 1.500-1 1.500h-2zM198 299m0 1l1.500-1 1.500 1v2h-3zM99 456m1 0h2v3h-2l-1-1.500zM275 300m1 0h2v3h-3v-2zM183 508h3v2h-1v1h-2zM109 441m0 1l1.500-1 1.500 1v2h-3zM116 312m1 0h2v3h-2l-1-1.500zM304 350h3v2h-1v1h-2zM352 287m1 0h2v3h-3v-2zM268 268h2l1 1.500-1 1.500h-2zM270 350m1 0h2v3h-3v-2zM202 377h3v3h-3zM258 332h2l1 1.500-1 1.500h-2zM109 468h2l1 1.500-1 1.500h-2zM115 392h3v2l-1.500 1-1.500-1zM262 356h3v2l-1.500 1-1.500-1zM147 242h2l1 1.500-1 1.500h-2zM328 324h3v3h-3zM178 291m0 1l1.500-1 1.500 1v2h-3zM131 356m1 0h2v3h-2l-1-1.500zM355 308h2l1 1.500-1 1.500h-2zM263 408m1 0h2v3h-3v-2zM146 450h3v2l-1.500 1-1.500-1zM288 487m1 0h2v3h-3v-2zM107 461m0 1l1.500-1 1.500 1v2h-3zM251 403m1 0h2v3h-2l-1-1.500zM180 373h3v3h-3zM297 380m1 0h2v3h-3v-2zM326 444h2l1 1.500-1 1.500h-2zM172 443h2l1 1.500-1 1.500h-2zM364 437m1 0h2v3h-3v-2zM183 496h3v3h-3zM266 451h2l1 1.500-1 1.500h-2zM162 269h3v3h-3zM126 326m0 1l1.500-1 1.500 1v2h-3zM200 264m1 0h2v3h-2l-1-1.500zM248 405h2l1 1.500-1 1.500h-2zM338 377h3v2h-1v1h-2zM226 495m1 0h2v3h-3v-2zM183 306m1 0h2v3h-2l-1-1.500zM158 397m1 0h2v3h-2l-1-1.500zM145 312h3v2l-1.500 1-1.500-1zM256 460h3v2l-1.500 1-1.500-1zM128 296h3v3h-3zM246 309m1 0h2v3h-2l-1-1.500zM152 254m0 1l1.500-1 1.500 1v2h-3zM265 439h3v2h-1v1h-2zM211 287m0 1l1.500-1 1.500 1v2h-3zM173 487h3v3h-3zM281 511m1 0h2v3h-2l-1-1.500zM197 356h2l1 1.500-1 1.500h-2zM253 406m1 0h2v3h-3v-2zM199 308h3v3h-3zM161 286m1 0h2v3h-3v-2zM234 453h2l1 1.500-1 1.500h-2zM357 333h3v2h-1v1h-2zM65 349h3v2h-1v1h-2zM310 436m1 0h2v3h-2l-1-1.500zM328 471m0 1l1.500-1 1.500 1v2h-3zM326 346m1 0h2v3h-3v-2zM299 460h3v2l-1.500 1-1.500-1zM369 434m1 0h2v3h-2l-1-1.500zM279 506m0 1l1.500-1 1.500 1v2h-3zM223 423m1 0h2v3h-3v-2zM269 301h3v2l-1.500 1-1.500-1zM249 506m0 1l1.500-1 1.500 1v2h-3zM143 438m1 0h2v3h-3v-2zM308 328m1 0h2v3h-3v-2zM126 503m1 0h2v3h-2l-1-1.500zM116 328m1 0h2v3h-2l-1-1.500zM113 432m1 0h2v3h-3v-2zM137 445h2l1 1.500-1 1.500h-2zM191 361m1 0h2v3h-2l-1-1.500zM311 505m1 0h2v3h-2l-1-1.500zM155 316m0 1l1.500-1 1.500 1v2h-3zM165 525h2l1 1.500-1 1.500h-2zM169 475h3v3h-3zM324 476h2l1 1.500-1 1.500h-2zM97 386m1 0h2v3h-2l-1-1.500zM224 284m0 1l1.500-1 1.500 1v2h-3zM128 301m1 0h2v3h-2l-1-1.500zM240 439m1 0h2v3h-3v-2zM306 513h3v2l-1.500 1-1.500-1zM259 474h2l1 1.500-1 1.500h-2zM379 409m0 1l1.500-1 1.500 1v2h-3zM270 530h3v2l-1.500 1-1.500-1zM137 408h2l1 1.500-1 1.500h-2zM166 285m1 0h2v3h-3v-2zM157 275h2l1 1.500-1 1.500h-2zM319 439m0 1l1.500-1 1.500 1v2h-3zM174 503m0 1l1.500-1 1.500 1v2h-3zM199 361h3v3h-3zM226 447m1 0h2v3h-3v-2zM269 295h2l1 1.500-1 1.500h-2zM301 380h3v3h-3zM135 362h3v2h-1v1h-2zM327 338m1 0h2v3h-2l-1-1.500zM205 398h3v3h-3zM119 377h2l1 1.500-1 1.500h-2zM129 527h3v2l-1.500 1-1.500-1zM233 321h3v2h-1v1h-2zM96 332h3v3h-3zM77 377h3v2h-1v1h-2zM168 481h2l1 1.500-1 1.500h-2zM208 438m1 0h2v3h-2l-1-1.500zM306 279h3v3h-3zM194 372h3v3h-3zM338 495m1 0h2v3h-3v-2zM279 406h3v3h-3zM158 418h2l1 1.500-1 1.500h-2zM291 458m1 0h2v3h-3v-2zM280 544h3v3h-3zM325 493h3v2l-1.500 1-1.500-1zM304 466m0 1l1.500-1 1.500 1v2h-3zM350 389m1 0h2v3h-2l-1-1.500zM322 393m0 1l1.500-1 1.500 1v2h-3zM158 244m1 0h2v3h-2l-1-1.500zM126 492h3v3h-3zM120 340h3v2l-1.500 1-1.500-1zM225 377h3v3h-3zM236 504h3v2h-1v1h-2zM305 293m1 0h2v3h-3v-2zM366 424h2l1 1.500-1 1.500h-2zM287 533m1 0h2v3h-3v-2zM294 270m0 1l1.500-1 1.500 1v2h-3zM288 494m1 0h2v3h-2l-1-1.500zM320 446h3v2l-1.500 1-1.500-1zM322 336h3v3h-3zM240 422h3v2l-1.500 1-1.500-1zM195 420m1 0h2v3h-2l-1-1.500zM158 335m0 1l1.500-1 1.500 1v2h-3zM291 492m0 1l1.500-1 1.500 1v2h-3zM229 267h3v3h-3zM190 260h2l1 1.500-1 1.500h-2zM204 373m0 1l1.500-1 1.500 1v2h-3zM128 341m1 0h2v3h-2l-1-1.500zM215 443h3v2l-1.500 1-1.500-1zM311 493h2l1 1.500-1 1.500h-2zM122 463m1 0h2v3h-2l-1-1.500zM312 396m0 1l1.500-1 1.500 1v2h-3zM300 430h3v2h-1v1h-2zM211 379h3v2h-1v1h-2zM315 449m0 1l1.500-1 1.500 1v2h-3zM208 332m1 0h2v3h-2l-1-1.500zM336 399h3v2l-1.500 1-1.500-1zM89 346m1 0h2v3h-3v-2zM103 434m0 1l1.500-1 1.500 1v2h-3zM201 469h2l1 1.500-1 1.500h-2zM189 346m1 0h2v3h-2l-1-1.500zM255 404m1 0h2v3h-2l-1-1.500zM262 484m1 0h2v3h-3v-2zM78 331h2l1 1.500-1 1.500h-2zM258 332h2l1 1.500-1 1.500h-2zM305 291m0 1l1.500-1 1.500 1v2h-3zM351 460h2l1 1.500-1 1.500h-2zM295 387h3v2l-1.500 1-1.500-1zM343 336m0 1l1.500-1 1.500 1v2h-3zM83 356h2l1 1.500-1 1.500h-2zM291 469h2l1 1.500-1 1.500h-2zM350 352h3v2h-1v1h-2zM325 467h2l1 1.500-1 1.500h-2zM267 509h3v3h-3zM380 420h2l1 1.500-1 1.500h-2zM354 279h3v2h-1v1h-2zM191 394h3v2l-1.500 1-1.500-1zM102 336h3v2h-1v1h-2zM279 444m0 1l1.500-1 1.500 1v2h-3zM208 272h3v2l-1.500 1-1.500-1zM297 553h3v2h-1v1h-2zM280 400m1 0h2v3h-3v-2zM218 330m0 1l1.500-1 1.500 1v2h-3zM310 393m1 0h2v3h-3v-2zM222 525h2l1 1.500-1 1.500h-2zM277 407h3v2h-1v1h-2zM238 313h3v2l-1.500 1-1.500-1zM141 452h3v2l-1.500 1-1.500-1zM195 448h3v2h-1v1h-2zM95 490m1 0h2v3h-3v-2zM163 372m1 0h2v3h-3v-2zM173 326h3v3h-3zM298 467m0 1l1.500-1 1.500 1v2h-3zM358 354m1 0h2v3h-2l-1-1.500zM142 528h3v2l-1.500 1-1.500-1zM252 518h3v3h-3zM152 473h3v3h-3zM282 294h3v3h-3zM262 287h2l1 1.500-1 1.500h-2zM308 519h3v2l-1.500 1-1.500-1zM291 490m1 0h2v3h-2l-1-1.500zM281 358h2l1 1.500-1 1.500h-2zM167 342m0 1l1.500-1 1.500 1v2h-3zM274 332m0 1l1.500-1 1.500 1v2h-3zM294 525h2l1 1.500-1 1.500h-2zM165 431h2l1 1.500-1 1.500h-2zM328 455h2l1 1.500-1 1.500h-2zM145 495h3v2l-1.500 1-1.500-1zM374 417m0 1l1.500-1 1.500 1v2h-3zM314 353m1 0h2v3h-2l-1-1.500zM290 452h3v2h-1v1h-2zM159 390h3v2h-1v1h-2zM353 428h3v3h-3zM333 402m1 0h2v3h-2l-1-1.500zM267 526m1 0h2v3h-2l-1-1.500zM181 308h2l1 1.500-1 1.500h-2zM106 484h2l1 1.500-1 1.500h-2zM327 394h3v2h-1v1h-2zM153 393h3v3h-3zM329 499m1 0h2v3h-3v-2zM102 443m1 0h2v3h-2l-1-1.500zM98 349h3v2l-1.500 1-1.500-1zM339 445m1 0h2v3h-2l-1-1.500zM75 381h3v3h-3zM278 356h3v2h-1v1h-2zM222 521m0 1l1.500-1 1.500 1v2h-3zM275 392m1 0h2v3h-3v-2zM221 344h3v2l-1.500 1-1.500-1zM188 508h3v2l-1.500 1-1.500-1zM119 320h3v3h-3zM219 261h3v2l-1.500 1-1.500-1zM202 529h3v3h-3zM125 294h3v3h-3zM100 346m1 0h2v3h-2l-1-1.500zM295 551h3v2l-1.500 1-1.500-1zM222 537m0 1l1.500-1 1.500 1v2h-3zM274 295h2l1 1.500-1 1.500h-2zM183 250m1 0h2v3h-2l-1-1.500zM266 484h3v2h-1v1h-2zM173 526h3v2h-1v1h-2zM296 459h3v2h-1v1h-2zM312 395m1 0h2v3h-2l-1-1.500zM325 287h3v3h-3zM152 324h2l1 1.500-1 1.500h-2zM312 428m1 0h2v3h-3v-2zM316 457h2l1 1.500-1 1.500h-2zM314 462h2l1 1.500-1 1.500h-2zM122 284m1 0h2v3h-2l-1-1.500zM270 343h3v3h-3zM199 496h3v3h-3zM335 285h3v2l-1.500 1-1.500-1zM274 395m1 0h2v3h-2l-1-1.500zM346 337m1 0h2v3h-2l-1-1.500zM272 454h3v2h-1v1h-2zM75 345m0 1l1.500-1 1.500 1v2h-3zM105 481h3v3h-3zM291 441h2l1 1.500-1 1.500h-2zM104 521h3v3h-3zM290 273h3v2h-1v1h-2zM230 290m1 0h2v3h-2l-1-1.500zM247 264h3v2l-1.500 1-1.500-1zM286 379h2l1 1.500-1 1.500h-2zM313 381h2l1 1.500-1 1.500h-2zM270 318m1 0h2v3h-3v-2zM163 379h3v2l-1.500 1-1.500-1zM381 407m1 0h2v3h-3v-2zM193 247m0 1l1.500-1 1.500 1v2h-3zM244 294m1 0h2v3h-3v-2zM98 351m1 0h2v3h-3v-2zM125 367h2l1 1.500-1 1.500h-2zM344 287m1 0h2v3h-2l-1-1.500zM116 453m1 0h2v3h-2l-1-1.500zM107 484h2l1 1.500-1 1.500h-2zM324 323h3v2h-1v1h-2zM320 341h2l1 1.500-1 1.500h-2zM202 527h3v3h-3zM80 438h3v2h-1v1h-2zM243 516m1 0h2v3h-3v-2zM163 280h2l1 1.500-1 1.500h-2zM104 410h3v2l-1.500 1-1.500-1zM243 277h3v2l-1.500 1-1.500-1zM205 459h3v2l-1.500 1-1.500-1zM177 422m0 1l1.500-1 1.500 1v2h-3zM154 272h3v2h-1v1h-2zM322 300m1 0h2v3h-2l-1-1.500zM204 414m0 1l1.500-1 1.500 1v2h-3zM289 468h3v2l-1.500 1-1.500-1zM103 309m1 0h2v3h-2l-1-1.500zM99 443m0 1l1.500-1 1.500 1v2h-3zM127 319m0 1l1.500-1 1.500 1v2h-3zM324 299h3v3h-3zM215 405m0 1l1.500-1 1.500 1v2h-3zM371 367h3v2l-1.500 1-1.500-1zM372 373m1 0h2v3h-3v-2zM223 393m1 0h2v3h-3v-2zM180 263h3v2h-1v1h-2zM157 327m1 0h2v3h-2l-1-1.500zM307 448m0 1l1.500-1 1.500 1v2h-3zM219 415h3v3h-3zM155 408h3v2l-1.500 1-1.500-1zM265 503h2l1 1.500-1 1.500h-2zM194 424h3v2l-1.500 1-1.500-1zM184 383m1 0h2v3h-2l-1-1.500zM253 386m1 0h2v3h-3v-2zM345 348h3v2h-1v1h-2zM272 294h3v2l-1.500 1-1.500-1zM323 429m1 0h2v3h-2l-1-1.500zM302 406h3v3h-3zM273 263h2l1 1.500-1 1.500h-2zM224 483h2l1 1.500-1 1.500h-2zM217 256h3v2h-1v1h-2zM164 432m0 1l1.500-1 1.500 1v2h-3zM301 488h3v3h-3zM273 446m1 0h2v3h-3v-2zM74 400m1 0h2v3h-2l-1-1.500zM227 499m1 0h2v3h-3v-2zM253 307h2l1 1.500-1 1.500h-2zM281 276h3v2l-1.500 1-1.500-1zM261 500h3v2h-1v1h-2zM267 283h2l1 1.500-1 1.500h-2zM223 242h3v3h-3zM359 394m1 0h2v3h-2l-1-1.500zM322 374h3v2h-1v1h-2zM229 460m1 0h2v3h-2l-1-1.500zM319 364h3v2h-1v1h-2zM310 517m1 0h2v3h-3v-2zM237 421h3v2l-1.500 1-1.500-1zM100 388m1 0h2v3h-2l-1-1.500zM114 491m1 0h2v3h-2l-1-1.500zM107 484m0 1l1.500-1 1.500 1v2h-3zM162 499m1 0h2v3h-2l-1-1.500zM216 380m0 1l1.500-1 1.500 1v2h-3zM256 337m1 0h2v3h-2l-1-1.500zM153 317m1 0h2v3h-3v-2zM175 364m1 0h2v3h-2l-1-1.500zM176 236h3v2h-1v1h-2zM308 366h3v3h-3zM204 251h3v2h-1v1h-2zM309 371h3v3h-3zM122 305h3v3h-3zM236 397m0 1l1.500-1 1.500 1v2h-3zM121 324m0 1l1.500-1 1.500 1v2h-3zM135 258m1 0h2v3h-2l-1-1.500zM164 512h3v2l-1.500 1-1.500-1zM236 293h2l1 1.500-1 1.500h-2zM340 383m1 0h2v3h-2l-1-1.500zM302 477h2l1 1.500-1 1.500h-2zM139 397h3v3h-3zM214 332m0 1l1.500-1 1.500 1v2h-3zM349 281h2l1 1.500-1 1.500h-2zM236 346h2l1 1.500-1 1.500h-2zM226 269h2l1 1.500-1 1.500h-2zM149 255m1 0h2v3h-2l-1-1.500zM124 365m1 0h2v3h-2l-1-1.500zM144 428h3v2h-1v1h-2zM309 342h2l1 1.500-1 1.500h-2zM160 306h3v2l-1.500 1-1.500-1zM234 447h3v3h-3zM276 290h2l1 1.500-1 1.500h-2zM355 315h2l1 1.500-1 1.500h-2zM235 315m1 0h2v3h-2l-1-1.500zM290 421m1 0h2v3h-2l-1-1.500zM283 451m1 0h2v3h-2l-1-1.500zM351 343h3v2h-1v1h-2zM336 424m0 1l1.500-1 1.500 1v2h-3zM124 336m0 1l1.500-1 1.500 1v2h-3zM348 442h3v2h-1v1h-2zM134 261m1 0h2v3h-2l-1-1.500zM140 375h3v3h-3zM301 487h2l1 1.500-1 1.500h-2zM100 392m1 0h2v3h-3v-2zM190 489m1 0h2v3h-3v-2zM300 480m1 0h2v3h-2l-1-1.500zM287 360h3v2h-1v1h-2zM188 276m1 0h2v3h-2l-1-1.500zM142 525m1 0h2v3h-3v-2zM342 361h3v2h-1v1h-2zM196 341m1 0h2v3h-2l-1-1.500zM195 533m1 0h2v3h-3v-2zM172 350h3v3h-3zM201 383h3v3h-3zM124 495h2l1 1.500-1 1.500h-2zM302 532h2l1 1.500-1 1.500h-2zM159 360h2l1 1.500-1 1.500h-2zM160 410h3v2l-1.500 1-1.500-1zM307 391h3v3h-3zM123 297h2l1 1.500-1 1.500h-2zM170 347h3v2l-1.500 1-1.500-1zM129 411h3v2h-1v1h-2zM98 500m0 1l1.500-1 1.500 1v2h-3zM322 296h2l1 1.500-1 1.500h-2zM164 378h2l1 1.500-1 1.500h-2zM196 475m1 0h2v3h-3v-2zM318 390m0 1l1.500-1 1.500 1v2h-3zM273 541h3v2l-1.500 1-1.500-1zM116 358h3v3h-3zM330 318h2l1 1.500-1 1.500h-2zM317 329m1 0h2v3h-3v-2zM213 286m0 1l1.500-1 1.500 1v2h-3zM108 430m1 0h2v3h-3v-2zM139 402m1 0h2v3h-2l-1-1.500zM278 500m0 1l1.500-1 1.500 1v2h-3zM356 362h3v2l-1.500 1-1.500-1zM361 446h3v2l-1.500 1-1.500-1zM220 437m1 0h2v3h-3v-2zM131 316h2l1 1.500-1 1.500h-2zM196 478m1 0h2v3h-3v-2zM293 414m1 0h2v3h-3v-2zM124 342h3v3h-3zM296 347h3v2l-1.500 1-1.500-1zM229 429m1 0h2v3h-3v-2zM124 446m1 0h2v3h-3v-2zM219 494m0 1l1.500-1 1.500 1v2h-3zM366 415h3v2l-1.500 1-1.500-1zM342 305h3v2h-1v1h-2zM257 423h3v2l-1.500 1-1.500-1zM184 405m0 1l1.500-1 1.500 1v2h-3zM277 315h3v3h-3zM352 417m1 0h2v3h-3v-2zM290 447h3v2h-1v1h-2zM193 303m1 0h2v3h-3v-2zM224 323h3v3h-3zM342 411m0 1l1.500-1 1.500 1v2h-3zM182 410m1 0h2v3h-2l-1-1.500zM290 404m1 0h2v3h-3v-2zM100 311h2l1 1.500-1 1.500h-2zM353 308m1 0h2v3h-2l-1-1.500zM148 295h2l1 1.500-1 1.500h-2zM316 283h3v2l-1.500 1-1.500-1zM175 495m1 0h2v3h-3v-2zM85 343m0 1l1.500-1 1.500 1v2h-3zM158 375h3v2l-1.500 1-1.500-1zM336 355m0 1l1.500-1 1.500 1v2h-3zM273 481h3v2l-1.500 1-1.500-1zM178 319m1 0h2v3h-3v-2zM326 359h3v3h-3zM335 329h3v2l-1.500 1-1.500-1zM298 527h3v2l-1.500 1-1.500-1zM75 393h3v3h-3zM342 487h2l1 1.500-1 1.500h-2zM98 457m0 1l1.500-1 1.500 1v2h-3zM92 310h3v2h-1v1h-2zM340 457h3v2l-1.500 1-1.500-1zM180 322h3v2l-1.500 1-1.500-1zM317 449h3v2h-1v1h-2zM115 285m1 0h2v3h-2l-1-1.500zM285 300h3v2l-1.500 1-1.500-1zM156 376m1 0h2v3h-3v-2zM162 307m1 0h2v3h-3v-2zM292 371h2l1 1.500-1 1.500h-2zM87 321m1 0h2v3h-2l-1-1.500zM111 427h3v3h-3zM147 389h3v3h-3zM166 528m0 1l1.500-1 1.500 1v2h-3zM151 329h3v2l-1.500 1-1.500-1zM182 333m0 1l1.500-1 1.500 1v2h-3zM245 480m1 0h2v3h-3v-2zM117 409m1 0h2v3h-2l-1-1.500zM323 332h3v3h-3zM168 316h3v2l-1.500 1-1.500-1zM200 433m1 0h2v3h-3v-2zM355 279h2l1 1.500-1 1.500h-2zM117 415m1 0h2v3h-3v-2zM295 311m1 0h2v3h-3v-2zM79 347m0 1l1.500-1 1.500 1v2h-3zM178 348m1 0h2v3h-3v-2zM194 508h2l1 1.500-1 1.500h-2zM105 297h3v2h-1v1h-2zM137 434h3v3h-3zM181 278m0 1l1.500-1 1.500 1v2h-3zM223 431m1 0h2v3h-3v-2zM84 447h3v3h-3zM167 468m1 0h2v3h-3v-2zM152 253h3v2h-1v1h-2zM310 448m1 0h2v3h-2l-1-1.500zM167 402m0 1l1.500-1 1.500 1v2h-3zM109 350m1 0h2v3h-2l-1-1.500zM235 341h2l1 1.500-1 1.500h-2zM142 425h3v2l-1.500 1-1.500-1zM127 296h3v3h-3zM263 297m0 1l1.500-1 1.500 1v2h-3zM248 397h3v2l-1.500 1-1.500-1zM352 452m1 0h2v3h-3v-2zM318 273h3v3h-3zM120 495h2l1 1.500-1 1.500h-2zM96 361m1 0h2v3h-2l-1-1.500zM206 368m0 1l1.500-1 1.500 1v2h-3zM170 483m1 0h2v3h-2l-1-1.500zM230 411h3v2h-1v1h-2zM183 442h3v2l-1.500 1-1.500-1zM233 459m1 0h2v3h-2l-1-1.500zM231 501h3v2h-1v1h-2zM180 313h3v3h-3zM145 522h3v3h-3zM310 317m1 0h2v3h-3v-2zM92 363h3v2h-1v1h-2zM367 390m1 0h2v3h-3v-2zM290 313m1 0h2v3h-2l-1-1.500zM182 372m1 0h2v3h-3v-2zM323 484h3v2l-1.500 1-1.500-1zM105 326h3v2l-1.500 1-1.500-1zM251 415h3v2l-1.500 1-1.500-1zM356 403m1 0h2v3h-3v-2zM321 293h2l1 1.500-1 1.500h-2zM106 352m0 1l1.500-1 1.500 1v2h-3zM363 320m1 0h2v3h-3v-2zM133 367h3v2l-1.500 1-1.500-1zM243 403h2l1 1.500-1 1.500h-2zM280 489h3v3h-3zM137 305h2l1 1.500-1 1.500h-2zM265 248m1 0h2v3h-3v-2zM131 431h3v2h-1v1h-2zM215 522m0 1l1.500-1 1.500 1v2h-3zM200 298h3v3h-3zM211 452h3v2l-1.500 1-1.500-1zM130 419m1 0h2v3h-3v-2zM211 476h3v2l-1.500 1-1.500-1zM236 286h3v3h-3zM251 247m1 0h2v3h-2l-1-1.500zM249 537m1 0h2v3h-2l-1-1.500zM132 436h3v3h-3zM240 467h3v3h-3zM275 344h3v2l-1.500 1-1.500-1zM98 357h3v2h-1v1h-2zM341 318h3v2h-1v1h-2zM159 276h3v2h-1v1h-2zM283 412m1 0h2v3h-3v-2zM373 396m0 1l1.500-1 1.500 1v2h-3zM154 243m0 1l1.500-1 1.500 1v2h-3zM183 528m0 1l1.500-1 1.500 1v2h-3zM314 500h3v3h-3zM214 439m0 1l1.500-1 1.500 1v2h-3zM214 489h3v3h-3zM109 359m0 1l1.500-1 1.500 1v2h-3zM273 422h2l1 1.500-1 1.500h-2zM110 478m1 0h2v3h-3v-2zM245 541m1 0h2v3h-3v-2zM124 400h2l1 1.500-1 1.500h-2zM279 464h2l1 1.500-1 1.500h-2zM266 457m0 1l1.500-1 1.500 1v2h-3zM162 308h3v2h-1v1h-2zM296 494h2l1 1.500-1 1.500h-2zM217 520m1 0h2v3h-3v-2zM76 341h3v2h-1v1h-2zM246 387m1 0h2v3h-3v-2zM344 449h3v3h-3zM242 442m1 0h2v3h-3v-2zM288 300h3v3h-3zM335 484h3v3h-3zM83 434h3v3h-3zM246 541h3v3h-3zM182 477h3v3h-3zM94 467h2l1 1.500-1 1.500h-2zM287 424h2l1 1.500-1 1.500h-2zM296 346m1 0h2v3h-3v-2zM165 284h3v2l-1.500 1-1.500-1zM224 466h3v3h-3zM263 264m1 0h2v3h-3v-2zM114 335m0 1l1.500-1 1.500 1v2h-3zM141 290m1 0h2v3h-3v-2zM354 302m1 0h2v3h-2l-1-1.500zM100 418h2l1 1.500-1 1.500h-2zM78 362m0 1l1.500-1 1.500 1v2h-3zM316 369m1 0h2v3h-2l-1-1.500zM131 279m1 0h2v3h-2l-1-1.500zM314 343h2l1 1.500-1 1.500h-2zM280 425m1 0h2v3h-3v-2zM71 384m1 0h2v3h-3v-2zM200 235m1 0h2v3h-3v-2zM98 329m1 0h2v3h-3v-2zM244 521m1 0h2v3h-2l-1-1.500zM356 448h3v2h-1v1h-2zM252 524h3v3h-3zM226 433h3v3h-3zM281 391h3v2l-1.500 1-1.500-1zM373 372m1 0h2v3h-3v-2zM133 301h2l1 1.500-1 1.500h-2zM147 332m1 0h2v3h-3v-2zM188 507h3v2l-1.500 1-1.500-1zM185 441h3v2l-1.500 1-1.500-1zM278 413h2l1 1.500-1 1.500h-2zM156 430h3v2l-1.500 1-1.500-1zM362 337m0 1l1.500-1 1.500 1v2h-3zM150 375m1 0h2v3h-2l-1-1.500zM291 399h3v2h-1v1h-2zM261 319h3v2h-1v1h-2zM375 408m0 1l1.500-1 1.500 1v2h-3zM201 251m0 1l1.500-1 1.500 1v2h-3zM225 265h3v2h-1v1h-2zM198 483h2l1 1.500-1 1.500h-2zM119 375m1 0h2v3h-3v-2zM222 434h2l1 1.500-1 1.500h-2zM303 440h3v2l-1.500 1-1.500-1zM278 403m0 1l1.500-1 1.500 1v2h-3zM272 545m1 0h2v3h-2l-1-1.500zM269 484h3v2h-1v1h-2zM91 424h3v2l-1.500 1-1.500-1zM223 256m1 0h2v3h-2l-1-1.500zM328 453m1 0h2v3h-3v-2zM285 399h3v2l-1.500 1-1.500-1zM329 493m1 0h2v3h-3v-2zM76 424h2l1 1.500-1 1.500h-2zM248 358m1 0h2v3h-2l-1-1.500zM364 328m0 1l1.500-1 1.500 1v2h-3zM133 496h3v2h-1v1h-2zM61 368h3v2l-1.500 1-1.500-1zM189 292h3v3h-3zM278 542h3v2h-1v1h-2zM256 417h2l1 1.500-1 1.500h-2zM202 318m0 1l1.500-1 1.500 1v2h-3zM272 486h3v2h-1v1h-2zM305 378h3v3h-3zM361 310m0 1l1.500-1 1.500 1v2h-3zM288 352h2l1 1.500-1 1.500h-2zM285 435h2l1 1.500-1 1.500h-2zM328 304h2l1 1.500-1 1.500h-2zM292 397m0 1l1.500-1 1.500 1v2h-3zM238 252h3v2h-1v1h-2zM141 283h2l1 1.500-1 1.500h-2zM177 466h3v2h-1v1h-2zM212 256m1 0h2v3h-2l-1-1.500zM150 390h2l1 1.500-1 1.500h-2zM180 515m0 1l1.500-1 1.500 1v2h-3zM222 440h3v2l-1.500 1-1.500-1zM173 257m1 0h2v3h-3v-2zM299 539m1 0h2v3h-3v-2zM316 440m0 1l1.500-1 1.500 1v2h-3zM180 280m1 0h2v3h-2l-1-1.500zM123 404m1 0h2v3h-3v-2zM141 369h3v3h-3zM113 285m1 0h2v3h-3v-2zM282 510m1 0h2v3h-2l-1-1.500zM177 492m1 0h2v3h-2l-1-1.500zM346 421m1 0h2v3h-3v-2zM233 517m0 1l1.500-1 1.500 1v2h-3zM196 392m1 0h2v3h-3v-2zM113 415h3v2h-1v1h-2zM130 400m1 0h2v3h-3v-2zM202 499m0 1l1.500-1 1.500 1v2h-3zM88 420m1 0h2v3h-2l-1-1.500zM283 507m1 0h2v3h-2l-1-1.500zM204 400m1 0h2v3h-3v-2zM294 498m1 0h2v3h-3v-2zM319 367h3v2l-1.500 1-1.500-1zM283 550m0 1l1.500-1 1.500 1v2h-3zM129 266h3v2h-1v1h-2zM356 373h3v2h-1v1h-2zM103 327h3v2l-1.500 1-1.500-1zM93 376m0 1l1.500-1 1.500 1v2h-3zM240 305m1 0h2v3h-2l-1-1.500zM235 531m1 0h2v3h-2l-1-1.500zM195 372h3v2h-1v1h-2zM141 294m1 0h2v3h-3v-2zM356 421m1 0h2v3h-2l-1-1.500zM124 432m1 0h2v3h-2l-1-1.500zM84 436h3v2l-1.500 1-1.500-1zM309 400m1 0h2v3h-2l-1-1.500zM135 367h2l1 1.500-1 1.500h-2zM354 335m1 0h2v3h-2l-1-1.500zM287 377h2l1 1.500-1 1.500h-2zM178 320m1 0h2v3h-2l-1-1.500zM211 315h3v2l-1.500 1-1.500-1zM330 482h2l1 1.500-1 1.500h-2zM308 527h2l1 1.500-1 1.500h-2zM355 402h3v3h-3zM243 440m0 1l1.500-1 1.500 1v2h-3zM268 272h3v2h-1v1h-2zM281 456h3v2l-1.500 1-1.500-1zM181 351m1 0h2v3h-2l-1-1.500zM163 250h3v3h-3zM330 497h3v3h-3zM199 294m1 0h2v3h-2l-1-1.500zM343 396h2l1 1.500-1 1.500h-2zM225 454m1 0h2v3h-3v-2zM109 291m0 1l1.500-1 1.500 1v2h-3zM315 355h2l1 1.500-1 1.500h-2zM263 512h3v2h-1v1h-2zM363 367h3v2l-1.500 1-1.500-1zM107 331h3v2h-1v1h-2zM219 248h2l1 1.500-1 1.500h-2zM203 383m0 1l1.500-1 1.500 1v2h-3zM214 513m1 0h2v3h-2l-1-1.500zM325 282h3v2l-1.500 1-1.500-1zM129 306h3v3h-3zM166 493h2l1 1.500-1 1.500h-2zM106 476h3v2h-1v1h-2zM179 330m0 1l1.500-1 1.500 1v2h-3zM318 507m1 0h2v3h-2l-1-1.500zM299 307h3v3h-3zM234 278m0 1l1.500-1 1.500 1v2h-3zM358 405h3v2l-1.500 1-1.500-1zM130 463h3v3h-3zM140 285h2l1 1.500-1 1.500h-2zM271 411h2l1 1.500-1 1.500h-2zM306 532h3v2h-1v1h-2zM159 312m1 0h2v3h-3v-2zM159 500m0 1l1.500-1 1.500 1v2h-3zM289 462m1 0h2v3h-2l-1-1.500zM160 245h3v2h-1v1h-2zM184 359h3v3h-3zM293 404h3v2l-1.500 1-1.500-1zM324 302m1 0h2v3h-2l-1-1.500zM320 331h2l1 1.500-1 1.500h-2zM148 443h3v2h-1v1h-2zM246 418m0 1l1.500-1 1.500 1v2h-3zM245 331h3v2l-1.500 1-1.500-1zM306 323m0 1l1.500-1 1.500 1v2h-3zM305 336h3v2l-1.500 1-1.500-1zM338 271h3v2l-1.500 1-1.500-1zM150 490h3v2h-1v1h-2zM211 347h3v3h-3zM300 394h3v2h-1v1h-2zM126 412m0 1l1.500-1 1.500 1v2h-3zM324 343h3v2l-1.500 1-1.500-1zM199 294m0 1l1.500-1 1.500 1v2h-3zM339 396m0 1l1.500-1 1.500 1v2h-3zM334 375h3v3h-3zM142 342h2l1 1.500-1 1.500h-2zM275 429h2l1 1.500-1 1.500h-2zM105 301h3v2l-1.500 1-1.500-1zM168 420m0 1l1.500-1 1.500 1v2h-3zM125 375h3v2l-1.500 1-1.500-1zM117 406h3v2h-1v1h-2zM270 420h3v2l-1.500 1-1.500-1zM119 307h3v2h-1v1h-2zM256 534h2l1 1.500-1 1.500h-2zM328 421m1 0h2v3h-3v-2zM281 473m1 0h2v3h-3v-2zM209 346h2l1 1.500-1 1.500h-2zM229 470h3v2h-1v1h-2zM286 485m0 1l1.500-1 1.500 1v2h-3zM110 349h2l1 1.500-1 1.500h-2zM238 522h3v2h-1v1h-2zM205 534h3v2h-1v1h-2zM109 360h2l1 1.500-1 1.500h-2zM176 320h3v2h-1v1h-2zM224 243h2l1 1.500-1 1.500h-2zM249 266m1 0h2v3h-2l-1-1.500zM309 393h3v3h-3zM148 310m1 0h2v3h-2l-1-1.500zM330 434m1 0h2v3h-2l-1-1.500zM186 522h3v2l-1.500 1-1.500-1zM198 255h3v2l-1.500 1-1.500-1zM142 432m1 0h2v3h-3v-2zM189 301m0 1l1.500-1 1.500 1v2h-3zM301 504m0 1l1.500-1 1.500 1v2h-3zM152 527h3v3h-3zM254 297m1 0h2v3h-2l-1-1.500zM276 397h3v2h-1v1h-2zM241 486h3v2l-1.500 1-1.500-1zM290 493m1 0h2v3h-3v-2zM234 346h3v2h-1v1h-2zM144 524h2l1 1.500-1 1.500h-2zM330 313m0 1l1.500-1 1.500 1v2h-3zM181 372m1 0h2v3h-3v-2zM249 338h3v2h-1v1h-2zM100 458h3v2h-1v1h-2zM80 366h3v2l-1.500 1-1.500-1zM227 322m1 0h2v3h-3v-2zM195 446h3v2l-1.500 1-1.500-1zM318 520m1 0h2v3h-2l-1-1.500zM114 522m1 0h2v3h-2l-1-1.500zM95 394m1 0h2v3h-3v-2zM217 253h3v2l-1.500 1-1.500-1zM306 358m1 0h2v3h-2l-1-1.500zM200 247m1 0h2v3h-3v-2zM120 291h3v3h-3zM344 408m1 0h2v3h-2l-1-1.500zM299 474h3v2h-1v1h-2zM262 272m1 0h2v3h-3v-2zM175 323m1 0h2v3h-2l-1-1.500zM261 265h3v2h-1v1h-2zM325 479h2l1 1.500-1 1.500h-2zM317 254m1 0h2v3h-2l-1-1.500zM348 268h3v2l-1.500 1-1.500-1zM291 414m1 0h2v3h-3v-2zM276 471h3v2l-1.500 1-1.500-1zM272 482m1 0h2v3h-2l-1-1.500zM145 290m0 1l1.500-1 1.500 1v2h-3zM203 437h3v2l-1.500 1-1.500-1zM228 277m1 0h2v3h-2l-1-1.500zM119 393m0 1l1.500-1 1.500 1v2h-3zM277 513h3v3h-3zM330 344h2l1 1.500-1 1.500h-2zM209 251m1 0h2v3h-2l-1-1.500zM324 255h2l1 1.500-1 1.500h-2zM70 378m0 1l1.500-1 1.500 1v2h-3zM203 256m1 0h2v3h-3v-2zM257 296m1 0h2v3h-2l-1-1.500zM126 500m0 1l1.500-1 1.500 1v2h-3zM238 438m1 0h2v3h-2l-1-1.500zM194 497h2l1 1.500-1 1.500h-2zM247 317h3v2h-1v1h-2zM254 322m1 0h2v3h-2l-1-1.500zM168 517m1 0h2v3h-3v-2zM215 335h3v2h-1v1h-2zM129 500h3v3h-3zM214 313m0 1l1.500-1 1.500 1v2h-3zM266 265h3v2l-1.500 1-1.500-1zM92 464m0 1l1.500-1 1.500 1v2h-3zM220 514h2l1 1.500-1 1.500h-2zM353 266h3v2l-1.500 1-1.500-1zM289 434h3v2l-1.500 1-1.500-1zM308 511m1 0h2v3h-3v-2zM216 536m1 0h2v3h-3v-2zM72 335h3v2l-1.500 1-1.500-1zM146 459m1 0h2v3h-3v-2zM367 421m0 1l1.500-1 1.500 1v2h-3zM336 428h3v3h-3zM332 337h3v2h-1v1h-2zM92 471h3v2h-1v1h-2zM252 481h2l1 1.500-1 1.500h-2zM171 348m0 1l1.500-1 1.500 1v2h-3zM264 248m0 1l1.500-1 1.500 1v2h-3zM150 440h2l1 1.500-1 1.500h-2zM243 278h3v2h-1v1h-2zM280 469h3v3h-3zM358 349h3v3h-3zM279 323m1 0h2v3h-3v-2zM120 435m0 1l1.500-1 1.500 1v2h-3zM107 404h3v3h-3zM314 507h3v2l-1.500 1-1.500-1zM340 322h2l1 1.500-1 1.500h-2zM244 407h3v3h-3zM193 490h3v3h-3zM283 448h3v2h-1v1h-2zM316 364m0 1l1.500-1 1.500 1v2h-3zM259 443h2l1 1.500-1 1.500h-2zM115 384h3v2l-1.500 1-1.500-1zM269 530m1 0h2v3h-3v-2zM245 463h3v2l-1.500 1-1.500-1zM297 398h3v3h-3zM112 357m1 0h2v3h-2l-1-1.500zM299 423m1 0h2v3h-3v-2zM151 329m1 0h2v3h-3v-2zM105 333h2l1 1.500-1 1.500h-2zM351 392m0 1l1.500-1 1.500 1v2h-3zM359 307h3v2l-1.500 1-1.500-1zM191 292m0 1l1.500-1 1.500 1v2h-3zM219 290h3v3h-3zM105 308h3v2h-1v1h-2zM284 258h3v3h-3zM286 532m1 0h2v3h-2l-1-1.500zM167 288m1 0h2v3h-2l-1-1.500zM153 235h2l1 1.500-1 1.500h-2zM325 416m0 1l1.500-1 1.500 1v2h-3zM147 370h3v3h-3zM112 380h2l1 1.500-1 1.500h-2zM294 521m0 1l1.500-1 1.500 1v2h-3zM263 544h3v2h-1v1h-2zM346 403m1 0h2v3h-2l-1-1.500zM188 501m1 0h2v3h-2l-1-1.500zM263 486m1 0h2v3h-3v-2zM269 398h3v3h-3zM326 262m1 0h2v3h-3v-2zM225 456m1 0h2v3h-3v-2zM221 268h3v2h-1v1h-2zM138 435h3v2l-1.500 1-1.500-1zM186 317h3v2h-1v1h-2zM91 362m1 0h2v3h-3v-2zM145 374h2l1 1.500-1 1.500h-2zM150 330h3v3h-3zM177 417h2l1 1.500-1 1.500h-2zM204 395h3v2l-1.500 1-1.500-1zM77 427m1 0h2v3h-2l-1-1.500zM214 464h3v2l-1.500 1-1.500-1zM272 426m0 1l1.500-1 1.500 1v2h-3zM223 411h3v2h-1v1h-2zM85 421h2l1 1.500-1 1.500h-2zM123 438m1 0h2v3h-2l-1-1.500zM296 358m0 1l1.500-1 1.500 1v2h-3zM349 469h3v2l-1.500 1-1.500-1zM342 333m0 1l1.500-1 1.500 1v2h-3zM179 359h3v3h-3zM344 339h3v2h-1v1h-2zM125 438m1 0h2v3h-3v-2zM248 472h3v3h-3zM225 404h3v2l-1.500 1-1.500-1zM290 295h2l1 1.500-1 1.500h-2zM160 254m0 1l1.500-1 1.500 1v2h-3zM291 533m0 1l1.500-1 1.500 1v2h-3zM115 369h3v3h-3zM142 527h3v2h-1v1h-2zM284 402m0 1l1.500-1 1.500 1v2h-3zM313 302h3v3h-3zM347 379m1 0h2v3h-3v-2zM105 508h3v2h-1v1h-2zM194 339h2l1 1.500-1 1.500h-2zM328 403h2l1 1.500-1 1.500h-2zM310 531h3v2h-1v1h-2zM189 513h2l1 1.500-1 1.500h-2zM237 496h3v2l-1.500 1-1.500-1zM197 366h3v2h-1v1h-2zM200 428m1 0h2v3h-2l-1-1.500zM258 288m1 0h2v3h-2l-1-1.500zM60 364m0 1l1.500-1 1.500 1v2h-3zM94 425m1 0h2v3h-3v-2zM191 511h2l1 1.500-1 1.500h-2zM128 322m1 0h2v3h-3v-2zM336 336h3v2l-1.500 1-1.500-1zM347 431m1 0h2v3h-2l-1-1.500zM197 390m0 1l1.500-1 1.500 1v2h-3zM248 514h3v3h-3zM320 522h3v2h-1v1h-2zM83 337h3v2l-1.500 1-1.500-1zM333 354m1 0h2v3h-3v-2zM104 371h3v3h-3zM207 438h2l1 1.500-1 1.500h-2zM327 366h3v2h-1v1h-2zM252 530m1 0h2v3h-2l-1-1.500zM121 464h3v3h-3zM317 398h2l1 1.500-1 1.500h-2zM128 284h2l1 1.500-1 1.500h-2zM140 488h3v2h-1v1h-2zM192 409h3v2h-1v1h-2zM327 474h3v2l-1.500 1-1.500-1zM281 309m1 0h2v3h-2l-1-1.500zM99 343h3v2h-1v1h-2zM357 440m1 0h2v3h-2l-1-1.500zM279 381h3v2l-1.500 1-1.500-1zM212 284h3v3h-3zM212 474m1 0h2v3h-3v-2zM227 239h3v3h-3zM86 378h3v2l-1.500 1-1.500-1zM198 398h2l1 1.500-1 1.500h-2zM368 337m1 0h2v3h-2l-1-1.500zM210 265h2l1 1.500-1 1.500h-2zM211 358h3v2l-1.500 1-1.500-1zM217 443h3v2l-1.500 1-1.500-1zM146 351h3v3h-3zM265 497h2l1 1.500-1 1.500h-2zM265 432m1 0h2v3h-3v-2zM354 432h3v3h-3zM292 423m1 0h2v3h-2l-1-1.500zM315 447h3v2h-1v1h-2zM291 307h2l1 1.500-1 1.500h-2zM99 496m1 0h2v3h-3v-2zM93 328h3v2l-1.500 1-1.500-1zM244 428m1 0h2v3h-3v-2zM232 426m0 1l1.500-1 1.500 1v2h-3zM195 300m1 0h2v3h-2l-1-1.500zM236 460h3v3h-3zM282 396h3v2l-1.500 1-1.500-1zM199 400m1 0h2v3h-3v-2zM221 414h3v3h-3z" fill="#f59a23"/><g fill="none" stroke="#f59a23" stroke-width="1.100"><circle cx="171.600" cy="520.600" r="12.800"/><path d="M164.700 515.500h14v2h-5.800v10.300h-2.200v-10.300h-6zM173.800 520.700h4.600v1.500h-4.600z"/><circle cx="142.400" cy="502.400" r="6.100"/></g><path d="M139.500 499h6v1.600h-2.200v4.800h-1.700v-4.800h-2.100zM144 501.500h2v1.200h-2z" fill="#f59a23"/><ellipse cx="142.700" cy="494" rx="3" ry="2.300" fill="#f59a23"/><path d="M135.500 508.500h15.500v2h-13l-1.500 1.500h-1z" fill="#f59a23"/><text x="158.200" y="539.900" font-family="Liberation Sans,sans-serif" font-size="6" font-weight="bold" fill="#f59a23" textLength="25.800" lengthAdjust="spacingAndGlyphs">TYFLOW</text><g fill="none" stroke="#e8201e" stroke-width="3.800" stroke-linecap="round" stroke-linejoin="round"><path d="M415.500 466.500C425 468 436 472 446 478C462 488 480 503 500 511.500C518 519 536 521 554 528.500C574 537 594 547 614 555C634 563 652 571 671 577C690 583 706 587 722 592"/><path d="M654.300 499.900C660 510 666 519 672 528.600C679 538 686 546 692.600 553.600C699 561 705 569 710.200 575.700C715 582 719 587 722 592"/><path d="M655 511.700C661 521 668 530 674.900 538.900C683 549 692 559 700 568.400C707 576 713 584 719 590.500"/><path d="M722 592C712 594.500 702 596 692.600 596.400C670 597 648 596 626 597.500L611.600 596.400C607 596.500 603 597 599.800 597.800C592 601 585 605 579.500 609.200L682.300 609.600C692 607.500 702 604.500 711.700 601.500"/><path d="M628 600.500C650 601.500 670 600.500 692 598.500C700 597.500 706 596.500 710 596" stroke-width="5"/><path d="M676 535C688 551 700 565 708 575C713 581 717 586 720 590" stroke-width="6.500"/></g><path d="M854 732m1 0h1v1h1v1h-3v-1h1zM981 618h3v3h-3zM983 628h3v3h-3zM995 616h3v2h-3zM859 552h2v2h-2zM902 610h2v3h-2zM898 658h3v3h-3zM984 587h3v3h-3zM838 611h3v2h-1v1h-2zM844 704h2v2h-2zM843 560h2v2h-1v1h-1zM962 704h2v2h-2zM878 589h3v2h-1v1h-2zM937 627h2v3h-2zM843 735h3v2h-3zM787 610h2v2h-2zM932 548m1 0h1v1h1v1h-3v-1h1zM950 649h2v2h-2zM840 597h2v2h-1v1h-1zM794 683h3v2h-3zM906 566h2v3h-2zM960 566h2v2h-1v1h-1zM939 657m1 0h1v1h1v1h-3v-1h1zM941 641h3v2h-1v1h-2zM865 575h2v3h-2zM950 554h2v2h-1v1h-1zM919 675h3v2h-3zM960 553m1 0h1v1h1v1h-3v-1h1zM842 729h3v3h-3zM928 717h2v2h-2zM840 553h2v2h-2zM849 702h2v2h-2zM931 533h2v2h-2zM809 639h2v2h-2zM940 608h3v2h-1v1h-2zM830 658h2v2h-2zM936 586m1 0h1v1h1v1h-3v-1h1zM834 624h2v2h-2zM873 596h3v3h-3zM991 663h3v3h-3zM927 546h3v2h-1v1h-2zM937 723h3v2h-3zM958 712h2v2h-1v1h-1zM884 598h2v2h-2zM967 706h3v2h-1v1h-2zM903 740h2v2h-1v1h-1zM824 609h3v2h-1v1h-2zM990 665h2v2h-2zM996 630m1 0h1v1h1v1h-3v-1h1zM989 596h3v2h-1v1h-2zM828 673h3v2h-3zM932 536h2v2h-2zM902 630h3v2h-3zM925 665h3v3h-3zM985 668h3v2h-3zM870 521h3v2h-3zM831 600h2v3h-2zM981 651h2v2h-1v1h-1zM972 654h2v2h-2zM893 520h2v2h-2zM837 575h2v3h-2zM857 626h3v2h-3zM965 709h3v2h-1v1h-2zM784 629h2v2h-2zM884 728h2v2h-2zM816 709h2v2h-2zM876 700h3v3h-3zM960 704h2v2h-1v1h-1zM968 603h2v2h-2zM948 555h2v2h-1v1h-1zM973 634h2v2h-2zM800 599m1 0h1v1h1v1h-3v-1h1zM990 658h2v2h-2zM869 622h3v2h-1v1h-2zM830 614h3v2h-3zM786 580h3v2h-3zM899 554h2v2h-2zM948 588h2v3h-2zM778 665h2v2h-1v1h-1zM972 600h2v2h-2zM866 708h2v3h-2zM964 553h2v3h-2zM859 670h3v2h-1v1h-2zM906 522h3v2h-3zM831 701h3v2h-1v1h-2zM842 723h2v2h-2zM956 591h2v3h-2zM911 534h3v2h-3zM912 721m1 0h1v1h1v1h-3v-1h1zM934 651h2v2h-1v1h-1zM991 621h2v2h-2zM888 523h3v3h-3zM900 636h2v2h-2zM800 693h3v2h-1v1h-2zM979 572h2v2h-1v1h-1zM844 528h3v2h-1v1h-2zM864 711h2v2h-2zM890 578h3v3h-3zM867 725h2v2h-2zM791 683h2v2h-2zM808 589h2v2h-2zM975 695h2v2h-2zM922 712h3v2h-3zM959 592h3v3h-3zM829 593h3v2h-1v1h-2zM836 732h2v2h-1v1h-1zM789 666h3v2h-3zM972 676h2v3h-2zM850 652h2v2h-2zM828 684h2v2h-1v1h-1zM865 723h3v2h-1v1h-2zM970 580h2v2h-2zM930 625m1 0h1v1h1v1h-3v-1h1zM816 547h2v2h-2zM919 713m1 0h1v1h1v1h-3v-1h1zM958 607h2v2h-1v1h-1zM895 687h3v3h-3zM981 594h2v2h-1v1h-1zM783 673h3v2h-1v1h-2zM803 588h2v2h-2zM795 648h2v2h-2zM932 535h3v2h-1v1h-2zM886 636h2v3h-2zM902 522m1 0h1v1h1v1h-3v-1h1zM834 536h3v3h-3zM777 614h2v2h-1v1h-1zM846 735h2v2h-1v1h-1zM785 600h2v2h-2zM794 695m1 0h1v1h1v1h-3v-1h1zM843 592h3v2h-1v1h-2zM799 563h2v3h-2zM932 536h2v2h-2zM926 717h2v3h-2zM962 708m1 0h1v1h1v1h-3v-1h1zM940 537h2v2h-2zM878 546m1 0h1v1h1v1h-3v-1h1zM867 580m1 0h1v1h1v1h-3v-1h1zM836 706h2v2h-1v1h-1zM862 586h3v2h-3zM837 533h2v2h-2zM842 732m1 0h1v1h1v1h-3v-1h1zM861 542h3v2h-1v1h-2zM922 529m1 0h1v1h1v1h-3v-1h1zM862 638h2v2h-2zM779 665h2v2h-2zM963 639h2v2h-2zM911 570h2v2h-1v1h-1zM893 520h2v3h-2zM788 595h2v2h-2zM841 561h2v2h-2zM842 530h2v2h-2zM863 724h2v3h-2zM973 563h3v2h-3zM932 601h2v2h-2zM890 580h3v3h-3zM887 521h3v2h-3zM805 694h3v2h-3zM904 681m1 0h1v1h1v1h-3v-1h1zM989 665h2v3h-2zM994 643h2v2h-2zM879 735h3v3h-3zM810 550h2v2h-2zM851 687h2v2h-2zM983 608h3v2h-1v1h-2zM947 540m1 0h1v1h1v1h-3v-1h1zM824 718h3v2h-1v1h-2zM804 707h2v3h-2zM984 666h2v3h-2zM812 632h3v2h-3zM825 673h3v3h-3zM952 718h3v2h-3zM869 653h2v2h-1v1h-1zM880 553h3v3h-3zM895 651h2v2h-2zM951 548h2v2h-2zM973 572m1 0h1v1h1v1h-3v-1h1zM989 640h3v2h-3zM857 547h2v2h-2zM838 676h2v2h-2zM821 682m1 0h1v1h1v1h-3v-1h1zM931 580h3v2h-3zM777 649h2v2h-1v1h-1zM985 629h2v2h-2zM885 586h3v2h-1v1h-2zM813 553h3v2h-1v1h-2zM900 700h2v3h-2zM791 594h3v3h-3zM785 582h3v2h-3zM976 642h3v3h-3zM827 630h2v2h-2zM873 561h3v2h-3zM791 591h3v2h-1v1h-2zM822 593h2v2h-2zM841 655h3v3h-3zM868 661m1 0h1v1h1v1h-3v-1h1zM908 602m1 0h1v1h1v1h-3v-1h1zM950 606h2v3h-2zM813 707h2v2h-1v1h-1zM787 681h2v3h-2zM841 529h2v3h-2zM834 729h2v2h-2zM842 538h2v2h-2zM969 703h2v2h-1v1h-1zM820 674h2v2h-1v1h-1zM900 669m1 0h1v1h1v1h-3v-1h1zM878 540m1 0h1v1h1v1h-3v-1h1zM979 572h3v2h-1v1h-2zM871 722h3v3h-3zM962 576h3v2h-3zM996 625h2v2h-2zM906 541h3v3h-3zM777 616h3v2h-3zM825 630m1 0h1v1h1v1h-3v-1h1zM860 548m1 0h1v1h1v1h-3v-1h1zM843 667h2v2h-1v1h-1zM948 668h2v3h-2zM925 541h2v2h-1v1h-1zM873 714m1 0h1v1h1v1h-3v-1h1zM784 586h2v2h-1v1h-1zM944 593h2v3h-2zM973 635h2v2h-1v1h-1zM942 707h3v2h-3zM901 741h3v2h-3zM810 550h2v2h-2zM961 662h3v2h-3zM891 551h2v2h-2zM968 706h2v2h-1v1h-1zM989 657h2v2h-2zM884 741m1 0h1v1h1v1h-3v-1h1zM905 581m1 0h1v1h1v1h-3v-1h1zM916 655h3v2h-1v1h-2zM816 714m1 0h1v1h1v1h-3v-1h1zM790 689h2v2h-2zM788 661h2v3h-2zM928 650h3v2h-3zM796 679m1 0h1v1h1v1h-3v-1h1zM802 613h3v2h-1v1h-2zM812 660h3v2h-1v1h-2zM813 562h2v3h-2zM929 534m1 0h1v1h1v1h-3v-1h1zM960 593h2v2h-2zM814 566h2v2h-1v1h-1zM912 638h3v2h-1v1h-2zM955 634h3v2h-1v1h-2zM989 592m1 0h1v1h1v1h-3v-1h1zM878 602m1 0h1v1h1v1h-3v-1h1zM804 561h3v3h-3zM974 578h2v2h-2zM788 614m1 0h1v1h1v1h-3v-1h1zM824 542h2v2h-2zM967 679h3v2h-3zM882 742h3v2h-3zM873 733h3v2h-3zM820 718h2v2h-2zM935 533h2v2h-2zM819 543m1 0h1v1h1v1h-3v-1h1zM777 612h3v3h-3zM932 706h2v3h-2zM923 713h3v2h-1v1h-2zM903 558h2v3h-2zM798 659h3v2h-1v1h-2zM889 739h2v2h-2zM883 592m1 0h1v1h1v1h-3v-1h1zM861 652h3v2h-1v1h-2zM995 626h2v2h-2zM786 647h2v2h-2zM917 623h2v2h-2zM875 548h2v3h-2zM943 577m1 0h1v1h1v1h-3v-1h1zM961 562m1 0h1v1h1v1h-3v-1h1zM970 578h3v3h-3zM884 545h2v2h-2zM850 619h2v2h-2zM914 582h3v2h-1v1h-2zM858 542h2v2h-2zM808 600h3v2h-1v1h-2zM844 731h2v2h-1v1h-1zM953 658h2v2h-1v1h-1zM855 687h3v2h-3zM868 734h2v2h-2zM845 584h3v2h-1v1h-2zM938 542m1 0h1v1h1v1h-3v-1h1zM989 666h2v2h-1v1h-1zM915 538h3v2h-3zM869 521h2v2h-1v1h-1zM789 576h2v2h-2zM854 717h3v2h-3zM806 708h3v3h-3zM791 618h2v2h-2zM835 539h2v2h-2zM858 531h2v2h-1v1h-1zM961 553h2v2h-2zM959 697h3v2h-1v1h-2zM988 672h3v3h-3zM781 592h3v2h-3zM955 590h2v3h-2zM951 589h3v2h-1v1h-2zM950 560h2v2h-2zM860 526h3v3h-3zM931 716h3v3h-3zM991 651h2v3h-2zM873 548h2v2h-2zM781 609h3v3h-3zM839 720m1 0h1v1h1v1h-3v-1h1zM931 665h3v2h-1v1h-2zM968 669h2v2h-2zM892 630h3v2h-3zM885 593h3v2h-3zM963 626m1 0h1v1h1v1h-3v-1h1zM813 712h3v2h-3zM795 569h2v2h-2zM806 674h3v2h-1v1h-2zM883 535h2v2h-1v1h-1zM953 546h2v2h-2zM854 730h3v2h-3zM956 615h2v2h-1v1h-1zM780 657h2v3h-2zM791 627h2v3h-2zM778 606h3v3h-3zM847 594h2v3h-2zM844 735h3v2h-1v1h-2zM932 570m1 0h1v1h1v1h-3v-1h1zM905 662h2v2h-1v1h-1zM782 673h2v2h-2zM861 719h2v2h-1v1h-1zM782 654h2v2h-2zM819 662h2v2h-1v1h-1zM805 569h2v2h-1v1h-1zM850 728h2v2h-2zM816 594h2v2h-2zM812 699m1 0h1v1h1v1h-3v-1h1zM840 599h3v2h-3zM787 637h2v3h-2zM976 586h2v2h-2zM806 652h2v2h-2zM957 692h3v2h-1v1h-2zM995 651h2v2h-2zM786 605h2v3h-2zM918 529h2v2h-2zM942 714m1 0h1v1h1v1h-3v-1h1zM932 708h2v2h-2zM938 570h3v2h-1v1h-2zM832 698h2v2h-2zM946 638h2v2h-2zM964 639h2v2h-2zM929 606h2v2h-2zM799 702h2v2h-2zM871 664h2v2h-2zM838 595h3v2h-3zM874 532h2v2h-1v1h-1zM847 686h2v2h-1v1h-1zM989 636m1 0h1v1h1v1h-3v-1h1zM779 598h2v3h-2zM808 712h2v2h-2zM824 713h3v2h-3zM990 612h2v2h-2zM945 724h3v3h-3zM952 637h3v2h-1v1h-2zM821 688h2v2h-2zM789 688h2v2h-2zM991 613h2v3h-2zM927 725h2v2h-2zM786 678m1 0h1v1h1v1h-3v-1h1zM823 633h2v2h-2zM876 554h3v2h-1v1h-2zM798 695h2v2h-2zM867 525m1 0h1v1h1v1h-3v-1h1zM811 711h2v3h-2zM810 556h2v3h-2zM843 645h2v2h-2zM872 562h2v3h-2zM881 671h3v2h-1v1h-2zM971 700h2v2h-1v1h-1zM897 634h3v2h-3zM980 682h2v2h-1v1h-1zM873 741h2v2h-2zM875 658h2v2h-2zM939 677h3v2h-1v1h-2zM964 699h2v2h-1v1h-1zM908 695h3v2h-1v1h-2zM869 675h2v2h-2zM921 722h3v3h-3zM782 602h2v2h-1v1h-1zM796 576h3v3h-3zM783 659h3v2h-3zM947 668h3v3h-3zM987 598m1 0h1v1h1v1h-3v-1h1zM802 573h3v3h-3zM979 680h2v3h-2zM849 737m1 0h1v1h1v1h-3v-1h1zM822 658h3v3h-3zM825 538h3v3h-3zM829 665m1 0h1v1h1v1h-3v-1h1zM939 534h2v2h-2zM986 586h3v3h-3zM894 712h3v2h-1v1h-2zM875 586h3v2h-1v1h-2zM917 736h2v2h-1v1h-1zM843 578h2v3h-2zM805 562h2v2h-2zM964 563h2v2h-2zM891 529h2v2h-2zM868 536h3v3h-3zM859 736m1 0h1v1h1v1h-3v-1h1zM842 530h2v2h-2zM971 639h2v2h-2zM846 731h2v3h-2zM804 577h3v2h-3zM941 709h2v3h-2zM859 693m1 0h1v1h1v1h-3v-1h1zM824 622h2v2h-2zM778 617h3v2h-1v1h-2zM927 540h2v3h-2zM934 727h3v3h-3zM947 723h3v2h-1v1h-2zM949 691h2v3h-2zM913 731h2v2h-2zM800 561m1 0h1v1h1v1h-3v-1h1zM882 720h3v2h-3zM984 582h2v2h-2zM960 633h2v2h-2zM835 574h3v2h-1v1h-2zM909 557h2v2h-2zM866 647m1 0h1v1h1v1h-3v-1h1zM857 683m1 0h1v1h1v1h-3v-1h1zM844 532h3v2h-1v1h-2zM895 520h3v2h-3zM800 687h2v2h-2zM795 685h2v2h-2zM894 526h3v3h-3zM816 700m1 0h1v1h1v1h-3v-1h1zM922 561h3v2h-1v1h-2zM849 550h2v2h-2zM906 523h2v2h-2zM918 526h2v2h-1v1h-1zM797 683h2v3h-2zM811 641h2v2h-1v1h-1zM886 526h3v3h-3zM977 688h3v2h-1v1h-2zM876 546h2v3h-2zM953 585h3v3h-3zM800 605h3v3h-3zM797 689h2v3h-2zM910 716h2v2h-2zM903 738m1 0h1v1h1v1h-3v-1h1zM831 560m1 0h1v1h1v1h-3v-1h1zM806 677h3v2h-1v1h-2zM892 717h2v2h-2zM870 627h3v3h-3zM878 637h2v2h-1v1h-1zM786 664h2v2h-2zM949 715m1 0h1v1h1v1h-3v-1h1zM818 614h2v2h-2zM955 667h2v2h-2zM865 572h2v2h-2zM945 723h3v2h-1v1h-2zM989 613h2v2h-2zM797 634h2v2h-2zM876 739h2v2h-1v1h-1zM970 595h2v2h-2zM878 720h2v3h-2zM963 563h3v2h-1v1h-2zM776 640h3v3h-3zM857 567h2v2h-2zM790 689h2v2h-2zM895 740h3v3h-3zM813 546h3v3h-3zM826 696m1 0h1v1h1v1h-3v-1h1zM902 609h2v2h-2zM962 653h2v2h-1v1h-1zM835 556h2v3h-2zM815 661h3v3h-3zM877 667h3v2h-1v1h-2zM892 722h2v3h-2zM989 599h2v2h-2zM916 678h3v2h-3zM855 525h2v2h-2zM899 655h3v2h-3zM993 606h3v2h-1v1h-2zM929 599h3v2h-1v1h-2zM846 615h3v2h-1v1h-2zM933 544h2v3h-2zM889 687h3v3h-3zM910 725h2v2h-2zM971 566h3v2h-3zM887 604m1 0h1v1h1v1h-3v-1h1zM813 597h3v2h-3zM942 675h3v2h-1v1h-2zM941 565h3v2h-3zM820 711h2v2h-2zM907 740h3v2h-3zM881 583h2v2h-2zM812 697h3v2h-3zM935 686h2v2h-1v1h-1zM892 539h2v3h-2zM984 580m1 0h1v1h1v1h-3v-1h1zM883 708h3v2h-1v1h-2zM891 524h3v2h-3zM927 675h2v2h-2zM817 557h2v2h-2zM822 597h2v3h-2zM791 687h2v2h-2zM821 709h2v3h-2zM870 666h2v2h-2zM922 529h3v2h-3zM859 556h3v2h-3zM939 627h2v3h-2zM810 713m1 0h1v1h1v1h-3v-1h1zM962 555h2v2h-2zM826 536h2v3h-2zM896 736h3v2h-3zM882 678m1 0h1v1h1v1h-3v-1h1zM895 654h2v2h-1v1h-1zM854 667h2v2h-2zM982 646h3v2h-3zM943 668h3v2h-1v1h-2zM789 659h2v2h-2zM834 550m1 0h1v1h1v1h-3v-1h1zM812 562h2v2h-2zM777 653h2v3h-2zM911 581m1 0h1v1h1v1h-3v-1h1zM865 667h3v3h-3zM930 655h3v2h-3zM996 630m1 0h1v1h1v1h-3v-1h1zM839 573h2v3h-2zM941 723h2v2h-2zM782 592h3v3h-3zM915 525h2v3h-2zM975 677h2v2h-2zM834 684h2v2h-2zM878 712h2v2h-2zM779 663m1 0h1v1h1v1h-3v-1h1zM774 621m1 0h1v1h1v1h-3v-1h1zM985 608h2v2h-2zM852 724h3v3h-3zM877 572h2v2h-2zM932 575h3v3h-3zM906 584h2v2h-2zM939 681h2v2h-2zM804 554h3v2h-3zM850 578h2v2h-1v1h-1zM876 602h2v3h-2zM979 687h2v2h-2zM917 733h2v3h-2zM858 548h2v3h-2zM956 646h3v2h-1v1h-2zM812 557h2v2h-2zM858 738h3v3h-3zM970 564h3v3h-3zM877 636h2v2h-2zM781 673h2v2h-2zM965 707h3v2h-1v1h-2zM843 530h3v2h-1v1h-2zM917 712m1 0h1v1h1v1h-3v-1h1zM960 710h2v2h-1v1h-1zM819 675h2v2h-2zM914 660m1 0h1v1h1v1h-3v-1h1zM783 600h2v2h-2zM892 711m1 0h1v1h1v1h-3v-1h1zM990 599h3v3h-3zM902 617h3v2h-3zM996 621h2v3h-2zM967 582h2v2h-1v1h-1zM975 697h3v2h-3zM899 739h2v2h-2zM934 704h3v2h-3zM977 656h2v2h-1v1h-1zM891 695m1 0h1v1h1v1h-3v-1h1zM933 713h3v2h-1v1h-2zM901 730h3v2h-3zM910 620h2v3h-2zM845 537h3v2h-1v1h-2zM854 542h3v3h-3zM919 725h2v2h-1v1h-1zM902 715h3v2h-3zM949 547h3v2h-3zM969 558h3v2h-3zM958 552h2v2h-2zM942 700h2v2h-1v1h-1zM895 676h3v2h-3zM971 562h3v2h-1v1h-2zM777 606h3v2h-3zM975 626h2v2h-2zM929 588h2v2h-2zM808 594h3v2h-1v1h-2zM871 742h2v2h-2zM930 550h2v2h-2zM965 706h2v3h-2zM840 632h3v2h-3zM828 700h3v2h-3zM987 640h2v3h-2zM837 629h3v2h-3zM922 651m1 0h1v1h1v1h-3v-1h1zM950 569h3v2h-3zM794 696h2v3h-2zM789 610h3v3h-3zM930 717h2v3h-2zM848 526h3v3h-3zM908 717h3v2h-3zM777 608h3v2h-1v1h-2zM937 730h3v2h-1v1h-2zM825 599h2v3h-2zM919 614h2v2h-1v1h-1zM913 551h3v2h-3zM856 678h2v2h-2zM806 708h2v2h-2zM891 718h3v3h-3zM845 693h2v2h-2zM799 694h2v2h-2zM973 644h3v2h-1v1h-2zM826 726h3v2h-1v1h-2zM907 558h2v2h-1v1h-1zM873 524m1 0h1v1h1v1h-3v-1h1zM933 649h2v2h-1v1h-1zM976 696h2v3h-2zM928 696m1 0h1v1h1v1h-3v-1h1zM855 688h3v2h-1v1h-2zM801 643h2v3h-2zM967 572h2v2h-1v1h-1zM957 622h2v2h-2zM788 672h2v2h-1v1h-1zM807 698h3v2h-1v1h-2zM995 620h2v2h-2zM851 738h2v3h-2zM823 703h2v2h-2zM966 645h2v3h-2zM820 678h2v2h-2zM820 583m1 0h1v1h1v1h-3v-1h1zM777 639h3v2h-1v1h-2zM888 699h2v3h-2zM829 633h3v2h-3zM994 648h3v2h-1v1h-2zM973 571h2v3h-2zM847 672h2v2h-2zM821 687h3v2h-3zM875 521h2v2h-1v1h-1zM892 730h2v2h-2zM807 701h3v3h-3zM820 635h2v2h-1v1h-1zM949 719m1 0h1v1h1v1h-3v-1h1zM780 665h2v2h-2zM867 703h3v3h-3zM970 585h3v2h-1v1h-2zM947 707h2v2h-2zM907 635h3v3h-3zM891 550h2v3h-2zM889 689h3v3h-3zM782 674h3v3h-3zM991 598h3v2h-1v1h-2zM919 646h2v3h-2zM800 569h2v3h-2zM804 613h2v2h-2zM933 665h3v3h-3zM958 703h3v2h-1v1h-2zM980 643h2v3h-2zM835 632m1 0h1v1h1v1h-3v-1h1zM798 653h2v2h-2zM970 657h2v3h-2zM773 632h2v2h-1v1h-1zM844 570h2v2h-2zM872 549h2v2h-1v1h-1zM996 641h2v3h-2zM907 525m1 0h1v1h1v1h-3v-1h1zM881 615h3v2h-3zM949 722m1 0h1v1h1v1h-3v-1h1zM928 662m1 0h1v1h1v1h-3v-1h1zM959 572h3v2h-1v1h-2zM858 576h3v2h-1v1h-2zM845 692h2v2h-1v1h-1zM897 724h2v2h-1v1h-1zM925 695h2v3h-2zM893 682h2v2h-1v1h-1zM919 590h2v2h-2zM988 634m1 0h1v1h1v1h-3v-1h1zM932 549h2v2h-1v1h-1zM894 579h2v2h-2zM892 521h2v2h-1v1h-1zM972 682h3v3h-3zM895 526h2v2h-2zM903 741m1 0h1v1h1v1h-3v-1h1zM926 534h2v2h-1v1h-1zM991 657h3v3h-3zM791 692h2v2h-2zM932 694h2v3h-2zM944 652h2v3h-2zM840 698m1 0h1v1h1v1h-3v-1h1zM778 645h3v2h-3zM839 617h2v2h-1v1h-1zM913 665h2v3h-2zM988 601h3v2h-3zM780 594h2v3h-2zM879 542h3v2h-1v1h-2zM781 665m1 0h1v1h1v1h-3v-1h1zM829 721m1 0h1v1h1v1h-3v-1h1zM982 620h3v2h-3zM898 623h3v2h-3zM776 613h3v2h-3zM951 602h2v2h-2zM796 688h2v2h-1v1h-1zM908 637h3v2h-3zM994 623h2v2h-1v1h-1zM944 547h2v2h-2zM851 718h2v3h-2zM797 586h2v2h-1v1h-1zM866 693m1 0h1v1h1v1h-3v-1h1zM995 647h2v3h-2zM852 735h2v3h-2zM937 546h3v2h-3zM801 667h3v3h-3zM986 659h2v2h-1v1h-1zM798 650h3v3h-3zM856 542h2v2h-2zM796 647h3v2h-1v1h-2zM894 581h2v2h-1v1h-1zM916 701h3v2h-1v1h-2zM827 578h2v3h-2zM957 560h2v2h-2zM930 558h2v2h-1v1h-1zM843 652m1 0h1v1h1v1h-3v-1h1zM918 667h2v2h-2zM884 573m1 0h1v1h1v1h-3v-1h1zM836 561h2v2h-2zM845 656h2v2h-2zM973 671h2v2h-1v1h-1zM963 691h2v2h-2zM864 612m1 0h1v1h1v1h-3v-1h1zM892 652h3v3h-3zM944 700h3v2h-1v1h-2zM933 731h2v2h-2zM913 732h2v2h-2zM925 706h2v2h-1v1h-1zM787 587h3v2h-1v1h-2zM925 535h2v2h-2zM866 599h2v2h-1v1h-1zM859 537m1 0h1v1h1v1h-3v-1h1zM830 538h3v3h-3zM852 683h2v3h-2zM877 628m1 0h1v1h1v1h-3v-1h1zM826 689h2v3h-2zM854 678m1 0h1v1h1v1h-3v-1h1zM821 559h3v3h-3zM946 573h3v2h-1v1h-2zM914 663h3v3h-3zM927 678h2v3h-2zM784 667h2v3h-2zM911 727h2v2h-1v1h-1zM914 713h2v2h-1v1h-1zM797 578h3v2h-3zM897 728h2v2h-2zM863 530h2v2h-2zM814 628h2v2h-2zM941 573h3v2h-3zM839 733h3v2h-1v1h-2zM826 718h2v2h-2zM826 615h2v2h-2zM897 537h2v3h-2zM961 551h2v2h-2zM896 523h3v3h-3zM961 678h3v2h-1v1h-2zM888 680h2v2h-2zM777 620h3v3h-3zM808 561h2v3h-2zM885 693m1 0h1v1h1v1h-3v-1h1zM967 698h3v3h-3zM926 582h3v2h-1v1h-2zM776 653h2v3h-2zM892 656h2v2h-2zM920 616h3v2h-3zM907 739m1 0h1v1h1v1h-3v-1h1zM816 719h2v3h-2zM955 606h2v2h-2zM967 559h2v2h-2zM992 659h2v3h-2zM947 566h2v2h-2zM816 654h3v2h-1v1h-2zM959 619h3v2h-1v1h-2zM975 685h3v2h-3zM812 553h2v2h-2zM805 565h2v2h-2zM936 686h2v2h-2zM858 721h2v3h-2zM873 727h3v3h-3zM815 545h3v2h-1v1h-2zM878 589h2v2h-2zM901 643h3v3h-3zM817 548h3v3h-3zM796 681h2v2h-2zM935 710h2v3h-2zM828 564h2v2h-2zM854 736h2v3h-2zM982 686h2v2h-1v1h-1zM949 594h2v3h-2zM895 614h2v3h-2zM879 720h2v2h-1v1h-1zM849 542h2v2h-2zM858 665m1 0h1v1h1v1h-3v-1h1zM905 660h3v2h-3zM811 599h2v2h-1v1h-1zM912 587m1 0h1v1h1v1h-3v-1h1zM856 739h2v2h-2zM933 722h2v2h-1v1h-1zM962 572h3v2h-1v1h-2zM854 595h3v3h-3zM883 739h2v2h-1v1h-1zM830 550h3v3h-3zM931 541m1 0h1v1h1v1h-3v-1h1zM854 688h2v2h-2zM980 610h2v3h-2zM978 588h2v2h-2zM984 628h3v2h-3zM903 739m1 0h1v1h1v1h-3v-1h1zM954 657h3v2h-1v1h-2zM799 620h3v2h-1v1h-2zM804 666h2v3h-2zM908 662h3v2h-1v1h-2zM830 588h2v2h-2zM793 681h2v3h-2zM953 620h3v2h-1v1h-2zM815 615h3v3h-3zM896 543h2v3h-2zM930 710h2v2h-1v1h-1zM914 643m1 0h1v1h1v1h-3v-1h1zM928 669h2v2h-2zM927 596h3v3h-3zM885 665h3v3h-3zM871 553h2v2h-2zM801 705h3v3h-3zM847 722h3v3h-3zM884 596h3v2h-3zM903 544h3v2h-1v1h-2zM884 722h3v2h-3zM961 603h2v3h-2zM996 621m1 0h1v1h1v1h-3v-1h1zM972 697h2v2h-1v1h-1zM953 549h3v3h-3zM961 647m1 0h1v1h1v1h-3v-1h1zM950 565h2v2h-1v1h-1zM818 707h2v2h-2zM804 676h3v2h-1v1h-2zM974 630h2v2h-2zM854 554h2v2h-2zM873 666h3v3h-3zM990 637h2v2h-1v1h-1zM966 656h3v3h-3zM818 620h3v2h-1v1h-2zM909 561h2v2h-2zM987 593h2v3h-2zM969 698h2v2h-2zM927 573h2v3h-2zM913 692h3v3h-3zM788 617h2v2h-1v1h-1zM847 647h2v2h-2zM783 676m1 0h1v1h1v1h-3v-1h1zM892 711h2v2h-2zM782 654h3v3h-3zM995 639m1 0h1v1h1v1h-3v-1h1zM924 718h2v2h-1v1h-1zM900 562h2v3h-2zM861 630h3v2h-3zM955 561h2v3h-2zM990 669h2v2h-2zM981 642h2v2h-1v1h-1zM835 731h3v3h-3zM915 672h2v2h-2zM776 607h2v2h-1v1h-1zM949 661h3v2h-1v1h-2zM908 530h2v2h-1v1h-1zM821 718h2v3h-2zM816 640m1 0h1v1h1v1h-3v-1h1zM800 689h2v2h-1v1h-1zM936 726h3v2h-1v1h-2zM964 704h3v2h-1v1h-2zM870 742h2v2h-2zM861 522h3v2h-1v1h-2zM958 610h2v2h-2zM883 568h3v2h-1v1h-2zM819 720h3v2h-1v1h-2zM897 686h2v2h-1v1h-1zM826 726m1 0h1v1h1v1h-3v-1h1zM826 691h2v2h-1v1h-1zM782 673h2v2h-2zM804 558h3v2h-1v1h-2zM788 683h2v2h-1v1h-1zM983 585m1 0h1v1h1v1h-3v-1h1zM880 697h3v3h-3zM912 571h3v2h-1v1h-2zM970 631h2v2h-2zM888 738m1 0h1v1h1v1h-3v-1h1zM821 682h3v2h-3zM922 549h3v3h-3zM869 725h2v2h-2zM811 588h2v2h-2zM776 649m1 0h1v1h1v1h-3v-1h1zM925 706h2v3h-2zM959 551h3v2h-1v1h-2zM778 662h2v2h-1v1h-1zM788 654h3v2h-3zM785 596h3v3h-3zM961 585h2v3h-2zM956 716h3v3h-3zM865 593h2v2h-1v1h-1zM994 637h3v3h-3zM886 740h3v3h-3zM848 735h2v2h-1v1h-1zM881 718h2v3h-2zM784 639h2v2h-2zM949 613h2v2h-1v1h-1zM987 602h2v2h-1v1h-1zM843 660h2v2h-2zM847 662h2v2h-2zM872 556h3v2h-3zM786 609h3v2h-3zM838 531h3v2h-1v1h-2zM988 636h2v2h-1v1h-1zM815 560h3v2h-3zM980 644h3v2h-3zM839 551h3v2h-3zM879 539h2v3h-2zM961 599h2v2h-2zM878 632h2v2h-2zM862 738h2v3h-2zM856 694m1 0h1v1h1v1h-3v-1h1zM981 626h2v2h-2zM850 729h3v3h-3zM833 724h3v3h-3zM808 689h2v2h-2zM954 559m1 0h1v1h1v1h-3v-1h1zM935 581h2v3h-2zM874 599m1 0h1v1h1v1h-3v-1h1zM773 625h2v3h-2zM854 702h2v3h-2zM923 529h3v2h-1v1h-2zM905 674h3v2h-3zM946 564h2v2h-1v1h-1zM915 662h2v3h-2zM914 591h3v3h-3zM884 638h3v3h-3zM877 733h2v2h-2zM835 683m1 0h1v1h1v1h-3v-1h1zM964 653h3v2h-3zM820 634h2v3h-2zM973 576h3v2h-1v1h-2zM931 655h2v2h-2zM920 735h2v2h-2zM850 629h3v2h-1v1h-2zM783 663m1 0h1v1h1v1h-3v-1h1zM870 698h2v2h-2zM944 629h2v2h-1v1h-1zM984 635h3v3h-3zM874 705h3v2h-3zM927 735h2v2h-1v1h-1zM858 556h2v2h-1v1h-1zM994 608h2v2h-2zM897 633h2v3h-2zM892 557h3v3h-3zM870 735h3v2h-3zM823 643h3v3h-3zM816 566h3v2h-3zM886 568h2v2h-2zM961 695h2v2h-2zM915 670h3v2h-3zM783 677m1 0h1v1h1v1h-3v-1h1zM804 555h3v3h-3zM842 556h3v2h-3zM792 678m1 0h1v1h1v1h-3v-1h1zM933 648h3v2h-3zM891 743h3v2h-3zM819 713h2v2h-1v1h-1zM851 570h2v2h-1v1h-1zM945 679h2v3h-2zM776 609h2v2h-2zM995 648h2v2h-2zM781 642h3v3h-3zM985 594h2v3h-2zM949 674m1 0h1v1h1v1h-3v-1h1zM946 674h3v2h-3zM778 657m1 0h1v1h1v1h-3v-1h1zM934 712m1 0h1v1h1v1h-3v-1h1zM806 556h2v3h-2zM925 533m1 0h1v1h1v1h-3v-1h1zM800 687h3v2h-1v1h-2zM851 598h3v2h-3zM803 706h3v3h-3zM818 606h3v2h-3zM892 612h3v3h-3zM817 652m1 0h1v1h1v1h-3v-1h1zM897 671h2v2h-2zM843 552h3v2h-1v1h-2zM833 533h3v2h-1v1h-2zM819 570m1 0h1v1h1v1h-3v-1h1zM916 564h3v2h-1v1h-2zM774 624h3v2h-1v1h-2zM991 667m1 0h1v1h1v1h-3v-1h1zM985 626h3v2h-1v1h-2zM830 614h2v2h-1v1h-1zM812 715h2v2h-2zM846 630m1 0h1v1h1v1h-3v-1h1zM905 628h3v2h-3zM926 588h2v2h-1v1h-1zM888 521h3v3h-3zM907 644h3v2h-1v1h-2zM843 564h2v2h-1v1h-1zM813 626h2v2h-2zM909 690h2v2h-1v1h-1zM893 520h2v2h-1v1h-1zM828 726h3v2h-1v1h-2zM886 522h2v3h-2zM869 546h3v3h-3zM944 666h2v2h-1v1h-1zM817 680h3v2h-1v1h-2zM833 590h2v2h-2zM938 536h2v2h-2zM819 688h2v3h-2zM897 707h2v2h-2zM779 605h3v2h-1v1h-2zM947 566h2v3h-2zM912 599h2v3h-2zM856 635h3v2h-3zM966 663h3v2h-3zM981 640h3v2h-1v1h-2zM832 728m1 0h1v1h1v1h-3v-1h1zM813 680h2v2h-1v1h-1zM839 661h2v2h-1v1h-1zM825 560h3v2h-3zM789 576h2v2h-2zM904 701h2v3h-2zM787 685h3v2h-3zM808 704m1 0h1v1h1v1h-3v-1h1zM900 580h3v2h-3zM780 619h2v2h-2zM917 738h2v2h-2zM905 592h2v2h-1v1h-1zM978 685h2v2h-1v1h-1zM915 539h3v3h-3zM779 621m1 0h1v1h1v1h-3v-1h1zM880 540h2v3h-2zM935 726m1 0h1v1h1v1h-3v-1h1zM925 692h3v2h-3zM962 702h2v2h-2zM818 606h2v2h-2zM954 581h2v2h-1v1h-1zM956 589h2v3h-2zM885 674h3v2h-3zM922 723h3v3h-3zM907 714h3v2h-1v1h-2zM785 636h2v3h-2zM774 620h3v2h-3zM880 553h3v3h-3zM967 565h3v3h-3zM971 602h2v3h-2zM930 675m1 0h1v1h1v1h-3v-1h1zM918 736h3v3h-3zM961 557h3v2h-3zM989 617h2v3h-2zM843 713h2v3h-2zM792 669h2v2h-2zM946 539h3v3h-3zM943 723m1 0h1v1h1v1h-3v-1h1zM900 705h2v3h-2zM882 543h2v2h-1v1h-1zM795 651m1 0h1v1h1v1h-3v-1h1zM926 591h2v2h-2zM943 566h2v2h-2zM894 575h2v2h-2zM932 538h2v2h-1v1h-1zM821 642h2v2h-2zM913 626h3v3h-3zM852 738h3v2h-3zM889 680h2v2h-2zM809 554h3v2h-3zM901 562h2v3h-2zM774 638h2v2h-2zM951 608m1 0h1v1h1v1h-3v-1h1zM968 701h3v2h-1v1h-2zM890 658m1 0h1v1h1v1h-3v-1h1zM899 576h3v3h-3zM778 635h3v3h-3zM799 676h3v2h-3zM874 742h2v2h-2zM839 550h2v2h-1v1h-1zM923 585h3v3h-3zM853 701h2v2h-2zM835 571h2v2h-1v1h-1zM821 718h2v2h-1v1h-1zM886 674h2v2h-2zM917 573h2v2h-1v1h-1zM958 552h2v2h-1v1h-1zM775 620h2v2h-2zM834 533h2v2h-1v1h-1zM777 618h2v2h-2zM910 740h2v2h-1v1h-1zM881 731h2v2h-2zM948 542h3v2h-3zM934 549h2v3h-2zM918 708h3v3h-3zM922 534h3v2h-3zM931 626h2v2h-2zM865 614h3v2h-3zM943 647h2v2h-1v1h-1zM896 522h3v3h-3zM946 589h2v2h-1v1h-1zM980 621h3v2h-1v1h-2zM976 686h3v3h-3zM973 657h2v2h-2zM960 662h2v2h-2zM884 535h2v3h-2zM781 652h2v3h-2zM911 697m1 0h1v1h1v1h-3v-1h1zM892 719h3v2h-3zM967 610h2v3h-2zM857 725h3v3h-3zM803 691h3v2h-1v1h-2zM834 621h2v2h-2zM806 558m1 0h1v1h1v1h-3v-1h1zM926 648h2v2h-1v1h-1zM898 532h2v2h-2zM797 572h3v3h-3zM894 581h3v2h-3zM843 732h2v2h-2zM863 536h3v2h-3zM991 648h3v3h-3zM904 538h2v3h-2zM983 629h2v2h-1v1h-1zM992 649h3v2h-1v1h-2zM914 607h2v2h-1v1h-1zM838 703h2v2h-2zM894 738h2v2h-2zM788 611h2v3h-2zM924 534h2v2h-2zM790 634h2v2h-2zM815 677m1 0h1v1h1v1h-3v-1h1zM979 587h2v3h-2zM901 657m1 0h1v1h1v1h-3v-1h1zM972 564h2v2h-1v1h-1zM884 587m1 0h1v1h1v1h-3v-1h1zM852 665h2v2h-2zM804 686m1 0h1v1h1v1h-3v-1h1zM792 590m1 0h1v1h1v1h-3v-1h1zM883 534h2v2h-2zM797 694h3v3h-3zM910 734h3v2h-1v1h-2zM882 731h2v2h-2zM798 647h3v3h-3zM936 723h2v2h-2zM977 686h3v3h-3zM913 524h2v2h-1v1h-1zM993 610h2v2h-2zM855 545h2v2h-2zM933 706h2v2h-2zM890 520h3v2h-3zM953 571h3v2h-1v1h-2zM906 682h2v2h-1v1h-1zM870 597h3v2h-1v1h-2zM898 651h2v2h-2zM963 657h3v2h-1v1h-2zM924 535h2v2h-2zM791 580h2v2h-2zM988 669h3v2h-1v1h-2zM948 616h3v2h-1v1h-2zM855 661h3v2h-3zM956 613h2v2h-1v1h-1zM881 670h3v3h-3zM912 624h2v2h-1v1h-1zM923 542m1 0h1v1h1v1h-3v-1h1zM984 641m1 0h1v1h1v1h-3v-1h1zM983 580h3v3h-3zM989 654h3v3h-3zM840 573h3v2h-1v1h-2zM804 606h2v3h-2zM802 609h3v2h-1v1h-2zM832 606h3v2h-3zM932 534h2v3h-2zM794 624m1 0h1v1h1v1h-3v-1h1zM916 633h2v2h-2zM776 624h2v2h-1v1h-1zM822 717h3v3h-3zM989 605h3v2h-3zM779 661h3v2h-1v1h-2zM957 684h2v3h-2zM993 628m1 0h1v1h1v1h-3v-1h1zM921 705h3v2h-1v1h-2zM961 637h2v2h-1v1h-1zM876 629h3v3h-3zM978 643m1 0h1v1h1v1h-3v-1h1zM836 532h3v2h-1v1h-2zM969 559h2v2h-2zM893 632m1 0h1v1h1v1h-3v-1h1zM979 689h2v3h-2zM987 619h2v2h-1v1h-1zM791 633h2v3h-2zM931 628h2v3h-2zM837 655h2v2h-2zM971 613h2v2h-1v1h-1zM980 691h3v2h-3zM872 725h3v2h-1v1h-2zM846 693m1 0h1v1h1v1h-3v-1h1zM902 730h2v3h-2zM789 687h2v2h-1v1h-1zM774 623h2v2h-2zM979 638h3v2h-1v1h-2zM881 686h3v2h-3zM798 697h2v2h-2zM989 597h3v3h-3zM893 552h3v2h-3zM901 540h2v2h-2zM944 561h2v3h-2zM940 706h3v3h-3zM873 523m1 0h1v1h1v1h-3v-1h1zM928 684h3v3h-3zM893 681h3v3h-3zM982 674h2v3h-2zM980 659h3v2h-3zM788 638h2v3h-2zM886 571h3v2h-1v1h-2zM779 618h3v3h-3zM814 617h2v2h-2zM949 708h2v3h-2zM907 740h2v3h-2zM833 536h2v3h-2zM789 589m1 0h1v1h1v1h-3v-1h1zM823 723h2v3h-2zM940 568h3v2h-1v1h-2zM849 529h2v3h-2zM797 628h3v2h-3zM963 710h3v2h-1v1h-2zM879 732h2v3h-2zM894 684h2v2h-2zM917 661h3v3h-3zM811 569h3v3h-3zM976 691m1 0h1v1h1v1h-3v-1h1zM956 714h2v2h-1v1h-1zM885 594h3v2h-1v1h-2zM875 568h2v3h-2zM968 690h2v2h-2zM892 659h2v2h-2zM946 640h2v2h-2zM839 584h2v3h-2zM870 628h3v2h-1v1h-2zM943 720h3v3h-3zM941 681m1 0h1v1h1v1h-3v-1h1zM829 584h2v2h-2zM942 632h3v3h-3zM871 572h2v2h-1v1h-1zM913 623h2v2h-2zM948 615h2v3h-2zM797 680h2v2h-1v1h-1zM865 550h2v2h-1v1h-1zM971 690h2v2h-1v1h-1zM947 539h2v2h-2zM990 650h2v2h-2zM812 554h2v2h-2zM957 674h3v3h-3zM847 596h3v2h-1v1h-2zM915 604h2v3h-2zM821 722h3v2h-1v1h-2zM988 638h2v2h-2zM947 539h3v3h-3zM821 709h3v2h-1v1h-2zM887 735h2v2h-1v1h-1zM921 736h2v2h-1v1h-1zM974 650h2v2h-2zM804 707h2v2h-1v1h-1zM898 678h2v2h-2zM886 708h2v3h-2zM864 599m1 0h1v1h1v1h-3v-1h1zM863 553h2v2h-2zM923 604h2v2h-2zM965 706h2v2h-2zM807 709h3v2h-3zM930 681h2v2h-2zM782 592h2v2h-2zM962 708h2v3h-2zM873 583m1 0h1v1h1v1h-3v-1h1zM881 652m1 0h1v1h1v1h-3v-1h1zM820 590h2v2h-1v1h-1zM886 742h2v3h-2zM809 707h2v3h-2zM913 538h2v2h-2zM907 637h2v2h-2zM885 734h2v2h-2zM815 679h2v2h-1v1h-1zM846 611h3v3h-3zM831 706h2v2h-2zM888 534h2v2h-1v1h-1zM826 537h2v2h-2zM857 619m1 0h1v1h1v1h-3v-1h1zM837 535h2v2h-2zM988 663h3v2h-3zM934 539h3v3h-3zM820 541h2v3h-2zM964 675h2v3h-2zM825 724h2v2h-1v1h-1zM776 649m1 0h1v1h1v1h-3v-1h1zM941 545h2v3h-2zM822 552h2v2h-2zM816 606h3v2h-1v1h-2zM965 616h2v2h-1v1h-1zM841 704m1 0h1v1h1v1h-3v-1h1zM975 639h2v2h-2zM777 656h2v3h-2zM788 576h2v2h-1v1h-1zM839 665h2v2h-2zM881 683h3v2h-3zM920 667h2v2h-1v1h-1zM794 592m1 0h1v1h1v1h-3v-1h1zM814 588h3v2h-1v1h-2zM803 678h3v2h-1v1h-2zM868 531m1 0h1v1h1v1h-3v-1h1zM824 694h2v3h-2zM993 627h2v2h-2zM899 741h2v2h-1v1h-1zM960 621h2v2h-1v1h-1zM812 657h3v2h-1v1h-2zM782 633h3v2h-3zM844 701h3v3h-3zM977 570h2v3h-2zM805 675h3v2h-3zM823 575h3v3h-3zM952 674h3v2h-1v1h-2zM991 636h2v2h-2zM802 641h3v2h-3zM808 674h2v2h-2zM878 674h2v3h-2zM990 608h2v2h-2zM827 620h2v2h-1v1h-1zM858 722h2v3h-2zM818 703h3v2h-1v1h-2zM819 679h3v3h-3zM977 645h2v2h-1v1h-1zM840 584m1 0h1v1h1v1h-3v-1h1zM830 625h2v2h-1v1h-1zM982 579h2v2h-1v1h-1zM965 592h2v2h-2zM980 624h3v3h-3zM836 670h2v2h-2zM773 625h2v2h-2zM821 719h3v3h-3zM816 552h2v2h-1v1h-1zM870 577h3v2h-3zM846 556h2v3h-2zM784 677m1 0h1v1h1v1h-3v-1h1zM905 598h3v3h-3zM801 580h3v3h-3zM797 598h2v2h-2zM938 658h3v2h-3zM776 621m1 0h1v1h1v1h-3v-1h1zM971 561h2v3h-2zM825 672h2v2h-1v1h-1zM890 526h3v3h-3zM886 740h2v2h-2zM904 740h3v2h-1v1h-2zM831 628h2v2h-1v1h-1zM844 637h2v2h-2zM884 626h3v3h-3zM778 662h2v2h-2zM825 676h2v2h-2zM817 692h3v3h-3zM954 715h2v2h-2zM774 617h3v2h-1v1h-2zM836 687h3v2h-3zM807 710h2v2h-1v1h-1zM912 729m1 0h1v1h1v1h-3v-1h1zM899 701h3v2h-1v1h-2zM909 676h3v2h-1v1h-2zM951 679h2v2h-2zM918 738h2v2h-2zM987 652m1 0h1v1h1v1h-3v-1h1zM887 684h3v2h-1v1h-2zM991 639h2v3h-2zM959 548h3v3h-3zM806 569h3v3h-3zM845 733h2v3h-2zM849 566h2v3h-2zM845 527h3v2h-1v1h-2zM784 607h3v3h-3zM812 580h3v2h-1v1h-2zM802 698h2v3h-2zM969 620h3v3h-3zM774 645h2v2h-1v1h-1zM939 727h3v2h-3zM836 548h2v2h-2zM911 576h3v2h-1v1h-2zM952 671h3v2h-3zM978 572h2v2h-2zM871 742h3v2h-3zM909 695m1 0h1v1h1v1h-3v-1h1zM899 580m1 0h1v1h1v1h-3v-1h1zM784 632h2v3h-2zM833 621h3v3h-3zM859 634h3v2h-3zM964 586h2v3h-2zM880 658h2v3h-2zM864 724h3v2h-3zM893 521h3v2h-1v1h-2zM909 739h3v2h-3zM876 730h2v2h-2zM852 585h2v2h-2zM946 584h2v3h-2zM795 635h2v3h-2zM800 686h2v2h-1v1h-1zM929 564h3v2h-1v1h-2zM794 579m1 0h1v1h1v1h-3v-1h1zM805 571h3v2h-3zM829 536h2v2h-2zM913 738h2v2h-2zM876 543h2v3h-2zM843 726h2v3h-2zM898 602h2v2h-2zM832 665h3v2h-3zM965 698h2v3h-2zM889 576h2v2h-2zM974 585h2v2h-2zM984 679h3v2h-1v1h-2zM853 560h2v2h-2zM891 644m1 0h1v1h1v1h-3v-1h1zM797 682h3v3h-3zM881 656h3v3h-3zM799 703h2v2h-2zM871 742h3v2h-3zM902 739h3v2h-3zM893 723h3v3h-3zM886 570m1 0h1v1h1v1h-3v-1h1zM882 684m1 0h1v1h1v1h-3v-1h1zM885 701h3v2h-3zM812 560h3v2h-3zM918 541h2v3h-2zM834 701h2v2h-2zM988 673h3v2h-1v1h-2zM836 587h3v3h-3zM792 630h2v2h-1v1h-1zM963 604h2v2h-2zM943 594m1 0h1v1h1v1h-3v-1h1zM857 536h2v2h-2zM919 545h3v3h-3zM849 717m1 0h1v1h1v1h-3v-1h1zM872 533h2v2h-2zM879 540h2v2h-2zM956 547h2v3h-2zM949 696h3v3h-3zM847 531h2v2h-2zM973 697h3v2h-1v1h-2zM993 614h3v2h-1v1h-2zM875 553h2v2h-2zM933 616h2v2h-2zM872 599h2v2h-2zM855 610h2v3h-2zM993 656m1 0h1v1h1v1h-3v-1h1zM786 615h3v2h-1v1h-2zM937 533h3v2h-3zM933 611h2v3h-2zM805 666h2v2h-2zM910 523h2v2h-1v1h-1zM852 738h3v2h-3zM974 591h2v2h-2zM791 665h3v2h-1v1h-2zM995 647h3v2h-1v1h-2zM881 540h3v2h-1v1h-2zM945 642h2v2h-2zM774 631m1 0h1v1h1v1h-3v-1h1zM916 570h3v2h-1v1h-2zM904 736h3v3h-3zM926 528m1 0h1v1h1v1h-3v-1h1zM830 727h2v2h-2zM843 551h2v2h-1v1h-1zM776 622h3v2h-3zM960 683m1 0h1v1h1v1h-3v-1h1zM987 675h2v2h-1v1h-1zM889 540h2v2h-1v1h-1zM977 615m1 0h1v1h1v1h-3v-1h1zM967 705h3v2h-3zM928 604h3v2h-1v1h-2zM812 593h3v2h-3zM869 585m1 0h1v1h1v1h-3v-1h1zM805 677h2v3h-2zM944 581m1 0h1v1h1v1h-3v-1h1zM964 585h3v3h-3zM901 526h2v3h-2zM966 693h2v2h-1v1h-1zM953 547h2v3h-2zM845 735m1 0h1v1h1v1h-3v-1h1zM782 659h2v3h-2zM823 538h2v2h-1v1h-1zM855 710h2v2h-2zM899 652h3v3h-3zM975 620m1 0h1v1h1v1h-3v-1h1zM939 710m1 0h1v1h1v1h-3v-1h1zM850 531h2v2h-2zM796 692h2v2h-1v1h-1zM879 693h2v2h-2zM934 555h3v3h-3zM875 526h2v2h-2zM912 689h3v2h-1v1h-2zM924 539h2v3h-2zM974 696h2v2h-2zM864 528h3v3h-3zM906 532h2v3h-2zM801 632h3v2h-1v1h-2zM895 678h3v2h-3zM919 695h2v2h-1v1h-1zM936 707h2v2h-2zM944 544h3v2h-3zM823 591h2v2h-2zM784 639h2v2h-2zM828 561m1 0h1v1h1v1h-3v-1h1zM783 673h3v2h-1v1h-2zM924 648h3v3h-3zM798 674h3v2h-1v1h-2zM982 595h3v2h-3zM922 718h2v2h-2zM974 569h3v2h-1v1h-2zM801 650h2v2h-2zM867 537h2v3h-2zM910 602h2v3h-2zM971 703m1 0h1v1h1v1h-3v-1h1zM889 546h3v2h-3zM824 709h3v3h-3zM834 682h2v2h-2zM878 576h2v2h-1v1h-1zM789 604h2v3h-2zM864 547h3v2h-1v1h-2zM908 709h2v2h-1v1h-1zM901 523h2v2h-1v1h-1zM983 672h3v2h-3zM920 548h2v3h-2zM847 555h3v2h-3zM787 680h2v2h-2zM898 532m1 0h1v1h1v1h-3v-1h1zM858 530h2v3h-2zM778 616h3v3h-3zM799 667h2v2h-2zM963 676h3v2h-1v1h-2zM910 540h3v3h-3zM830 574h2v2h-1v1h-1zM848 693h2v2h-2zM852 529h2v3h-2zM801 558h3v2h-3zM879 549h3v2h-3zM955 554h2v2h-2zM984 620h2v2h-2zM848 629h3v2h-3zM850 737h3v3h-3zM789 579h2v2h-2zM831 700h3v2h-1v1h-2zM883 574m1 0h1v1h1v1h-3v-1h1zM876 521m1 0h1v1h1v1h-3v-1h1zM779 651h2v2h-2zM874 680h2v2h-2zM897 531h3v3h-3zM822 583h3v2h-1v1h-2zM940 572h2v2h-2zM935 680h3v3h-3zM872 606h2v3h-2zM910 682h2v3h-2zM996 629h2v3h-2zM893 527h2v3h-2zM944 541h3v3h-3zM858 652h3v2h-1v1h-2zM801 667h3v3h-3zM821 616h2v2h-2zM978 595h3v2h-1v1h-2zM815 682h2v2h-2zM971 629h2v2h-1v1h-1zM929 688h2v2h-2zM927 693h3v3h-3zM846 583h2v3h-2zM852 600h3v2h-1v1h-2zM956 700h2v3h-2zM951 600h2v2h-2zM984 683h2v3h-2zM819 555h2v2h-2zM908 608h3v2h-3zM820 553h3v2h-1v1h-2zM777 635m1 0h1v1h1v1h-3v-1h1zM901 738h2v2h-2zM919 549h2v2h-2zM822 576h2v3h-2zM795 690h3v2h-1v1h-2zM900 741h3v2h-3zM838 721h3v3h-3zM961 710h2v3h-2zM808 558h2v2h-1v1h-1zM815 565h2v2h-2zM904 684m1 0h1v1h1v1h-3v-1h1zM854 644h3v2h-1v1h-2zM950 554h2v2h-1v1h-1zM933 713h2v3h-2zM793 568m1 0h1v1h1v1h-3v-1h1zM841 733h3v3h-3zM923 700h2v2h-2zM967 703h2v2h-2zM822 547h3v2h-1v1h-2zM830 548m1 0h1v1h1v1h-3v-1h1zM856 533h3v2h-1v1h-2zM818 719h3v2h-3zM989 664h3v2h-1v1h-2zM926 564h3v2h-3zM862 740h3v2h-3zM854 654h2v2h-1v1h-1zM905 712h2v2h-2zM948 722m1 0h1v1h1v1h-3v-1h1zM856 638h2v3h-2zM874 522h2v2h-2zM822 692h3v2h-1v1h-2zM876 692h2v2h-2zM972 607h2v3h-2zM905 633h2v2h-2zM892 735h3v3h-3zM846 711h2v2h-2zM798 590h3v3h-3zM791 577m1 0h1v1h1v1h-3v-1h1zM778 662h3v3h-3zM833 568h3v3h-3zM987 657h3v2h-3zM787 634h3v2h-3zM882 533h2v2h-1v1h-1zM852 581m1 0h1v1h1v1h-3v-1h1zM925 703h3v2h-1v1h-2zM966 685h3v2h-1v1h-2zM946 567h2v2h-1v1h-1zM780 594h3v2h-1v1h-2zM791 586h3v2h-3zM773 628h2v2h-1v1h-1zM867 741h3v2h-3zM931 559h2v3h-2zM814 699m1 0h1v1h1v1h-3v-1h1zM987 673h2v3h-2zM893 525h2v2h-2zM794 695h2v2h-2zM849 717m1 0h1v1h1v1h-3v-1h1zM942 599h3v2h-1v1h-2zM906 683m1 0h1v1h1v1h-3v-1h1zM993 659h2v3h-2zM834 723h3v2h-3zM885 715m1 0h1v1h1v1h-3v-1h1zM865 674h2v2h-1v1h-1zM802 705m1 0h1v1h1v1h-3v-1h1zM991 621h3v2h-3zM859 739h3v2h-3zM774 644h3v2h-1v1h-2zM836 533h3v2h-1v1h-2zM893 719h3v3h-3zM911 654m1 0h1v1h1v1h-3v-1h1zM811 571h2v2h-2zM931 666h2v2h-2zM884 627m1 0h1v1h1v1h-3v-1h1zM902 714h3v3h-3zM870 592h2v2h-2zM986 612h2v3h-2zM922 596h3v2h-1v1h-2zM880 582h3v2h-3zM911 523h3v2h-1v1h-2zM925 678h2v2h-2zM870 523h3v2h-1v1h-2zM875 734m1 0h1v1h1v1h-3v-1h1zM984 612h2v2h-1v1h-1zM846 598h2v2h-2zM875 736h2v2h-2zM787 664h2v2h-1v1h-1zM956 714h3v2h-1v1h-2zM846 716h3v2h-3zM976 688h2v2h-2zM917 602h3v2h-3zM848 678h2v2h-2zM854 727h2v2h-2zM903 637h2v2h-2zM817 670h2v2h-1v1h-1zM831 553h3v2h-3zM953 615h2v3h-2zM884 611h3v2h-3zM861 530h3v2h-1v1h-2zM983 584h2v2h-2zM927 727h2v2h-1v1h-1zM821 628h3v2h-1v1h-2zM975 682h3v2h-1v1h-2zM979 602h3v3h-3zM787 579h2v3h-2zM884 729m1 0h1v1h1v1h-3v-1h1zM869 650h3v3h-3zM880 520h2v3h-2zM799 579h3v2h-3zM826 576h2v2h-1v1h-1zM980 652h3v2h-1v1h-2zM910 649h3v2h-1v1h-2zM990 659h2v3h-2zM876 725h2v2h-1v1h-1zM789 575h3v2h-1v1h-2zM942 584h3v2h-3zM812 716h2v2h-2zM830 538h2v2h-2zM846 594h3v3h-3zM807 701h3v3h-3zM911 523m1 0h1v1h1v1h-3v-1h1zM956 717h3v2h-3zM798 568m1 0h1v1h1v1h-3v-1h1zM801 586h2v2h-1v1h-1zM868 559h2v3h-2zM925 527h2v2h-2zM873 736h3v2h-3zM801 705h2v2h-2zM880 672h3v2h-3zM964 626h2v2h-2zM782 674h2v2h-2zM826 663h2v2h-1v1h-1zM910 734h2v2h-2zM828 610h2v3h-2zM862 677h3v2h-3zM843 588h2v3h-2zM829 678h3v2h-3zM783 588h3v3h-3zM890 736h2v2h-2zM844 716h2v2h-1v1h-1zM910 737h2v2h-2zM958 716h3v3h-3zM861 715h2v2h-2zM859 704m1 0h1v1h1v1h-3v-1h1zM897 548h2v3h-2zM897 716h2v2h-1v1h-1zM979 572h2v2h-1v1h-1zM865 528h2v2h-2zM955 616h3v2h-1v1h-2zM963 569m1 0h1v1h1v1h-3v-1h1zM807 658m1 0h1v1h1v1h-3v-1h1zM893 520h2v2h-1v1h-1zM812 715h3v3h-3zM945 538m1 0h1v1h1v1h-3v-1h1zM859 631h3v2h-1v1h-2zM939 577h2v2h-2zM951 700h3v2h-3zM791 575h3v2h-3zM996 625h3v2h-3zM996 630h2v3h-2zM928 610h2v3h-2zM774 624h2v2h-2zM902 527h2v2h-2zM877 526h3v2h-1v1h-2zM798 659h2v2h-2zM991 662h2v2h-2zM894 592h3v2h-1v1h-2zM781 662h3v3h-3zM951 687h2v3h-2zM936 730h2v2h-2zM984 625h2v2h-2zM780 597h3v2h-1v1h-2zM776 634h3v2h-1v1h-2zM869 715h2v3h-2zM827 634m1 0h1v1h1v1h-3v-1h1zM983 580h2v2h-2zM875 742h2v2h-2zM873 726h2v2h-2zM928 534h3v2h-1v1h-2zM794 577h2v2h-2zM891 553m1 0h1v1h1v1h-3v-1h1zM818 678h2v2h-2zM871 581h2v3h-2zM933 586m1 0h1v1h1v1h-3v-1h1zM992 600h3v2h-3zM797 632h2v3h-2zM943 602h2v2h-2zM797 639m1 0h1v1h1v1h-3v-1h1zM826 546h3v3h-3zM853 542h2v3h-2zM840 678h3v2h-1v1h-2zM883 737h2v2h-2zM824 681h3v2h-3zM780 634h3v2h-1v1h-2zM854 543h2v2h-1v1h-1zM845 692h3v2h-3zM981 668h2v3h-2zM848 698h2v2h-2zM951 695h2v3h-2zM820 577h2v3h-2zM799 678h3v2h-1v1h-2zM822 669h2v2h-2zM937 598h3v3h-3zM986 589h2v2h-2zM986 600m1 0h1v1h1v1h-3v-1h1zM936 599h3v2h-1v1h-2zM965 594m1 0h1v1h1v1h-3v-1h1zM839 595h2v2h-1v1h-1zM788 580h2v2h-1v1h-1zM803 560h3v3h-3zM894 539h2v2h-2zM861 671m1 0h1v1h1v1h-3v-1h1zM848 736m1 0h1v1h1v1h-3v-1h1zM917 539h2v3h-2zM940 695h2v2h-2zM795 567h3v3h-3zM938 724h2v2h-1v1h-1zM907 728m1 0h1v1h1v1h-3v-1h1zM851 730h2v3h-2zM856 558h2v2h-1v1h-1zM959 563h3v3h-3zM897 551h3v3h-3zM883 539h2v2h-1v1h-1zM837 685h2v2h-1v1h-1zM953 562h2v2h-2zM979 600h2v2h-2zM833 631h3v2h-1v1h-2zM786 649h2v2h-2zM833 705h2v3h-2zM934 731m1 0h1v1h1v1h-3v-1h1zM977 638h3v2h-1v1h-2zM815 710h3v2h-1v1h-2zM992 599h2v2h-2zM985 633m1 0h1v1h1v1h-3v-1h1zM807 702h2v2h-1v1h-1zM962 711h2v2h-2zM841 642h3v2h-3zM928 702h2v2h-2zM876 622h3v2h-3zM907 711m1 0h1v1h1v1h-3v-1h1zM991 629h3v2h-3zM799 702m1 0h1v1h1v1h-3v-1h1zM839 594h3v2h-3zM825 563h2v2h-1v1h-1zM795 669h2v2h-2zM786 610h3v2h-1v1h-2zM847 587h3v3h-3zM786 673h2v2h-2zM918 657h2v3h-2zM963 692h2v2h-2zM977 576h3v2h-1v1h-2zM866 652h2v2h-1v1h-1zM803 683h2v2h-2zM960 571h2v3h-2zM799 591h3v2h-1v1h-2zM933 670m1 0h1v1h1v1h-3v-1h1zM957 562h2v2h-2zM953 597h3v2h-3zM812 691h3v3h-3zM774 624h2v2h-2zM880 528m1 0h1v1h1v1h-3v-1h1zM995 647h2v3h-2zM791 685h2v2h-1v1h-1zM885 543h3v3h-3zM869 633h3v2h-1v1h-2zM966 671h3v3h-3zM973 700h3v3h-3zM828 540m1 0h1v1h1v1h-3v-1h1zM870 540h3v2h-3zM952 720h2v3h-2zM779 651h2v2h-1v1h-1zM788 664h2v2h-1v1h-1zM990 607h3v3h-3zM962 556h2v3h-2zM910 693h3v2h-3zM782 596h2v2h-1v1h-1zM885 704h3v2h-3zM828 682h2v2h-2zM865 665h3v2h-1v1h-2zM844 638h2v2h-1v1h-1zM993 657h3v3h-3zM931 560h2v2h-2zM881 522h2v2h-1v1h-1zM785 664m1 0h1v1h1v1h-3v-1h1zM802 585h2v2h-2zM958 628h2v3h-2zM875 686m1 0h1v1h1v1h-3v-1h1zM976 668h2v3h-2zM943 597h2v2h-2zM828 687h3v2h-1v1h-2zM886 531h2v2h-2zM941 535h3v2h-1v1h-2zM874 708h3v2h-3zM790 586m1 0h1v1h1v1h-3v-1h1zM923 531h3v2h-3zM782 620m1 0h1v1h1v1h-3v-1h1zM773 632h2v2h-1v1h-1zM799 578h2v2h-2zM828 660h2v3h-2zM983 679h3v3h-3zM956 550h3v2h-3zM828 543h2v2h-1v1h-1zM787 579h3v2h-1v1h-2zM885 713h3v2h-1v1h-2zM806 552h2v2h-2zM945 582h3v3h-3zM774 624h3v2h-1v1h-2zM836 601h2v3h-2zM879 570h2v2h-1v1h-1zM823 567h2v3h-2zM884 568h2v3h-2zM902 733h3v2h-3zM834 613h3v3h-3zM834 535h2v2h-1v1h-1zM871 537h3v2h-1v1h-2zM967 594h2v2h-2zM853 532h2v2h-2zM842 552h2v3h-2zM775 614h3v2h-3zM974 654h3v2h-1v1h-2zM829 535h3v2h-1v1h-2zM801 624h2v2h-2zM906 716h3v3h-3zM873 691h3v3h-3zM854 524h3v2h-3zM886 520h2v3h-2zM879 651h2v3h-2zM840 533h3v3h-3zM983 667h3v3h-3zM799 594h3v2h-3zM943 600h2v2h-2zM900 522h2v2h-2zM966 625h2v3h-2zM787 577h2v2h-2zM841 622h2v2h-1v1h-1zM985 619h2v2h-1v1h-1zM816 635h3v2h-3zM850 661m1 0h1v1h1v1h-3v-1h1zM968 679h2v3h-2zM803 556h2v2h-2zM876 697h3v2h-3zM983 657h3v2h-1v1h-2zM930 596h3v2h-3zM885 700h2v3h-2zM813 547m1 0h1v1h1v1h-3v-1h1zM876 520h2v3h-2zM801 568h2v3h-2zM869 621h2v2h-2zM854 585h2v2h-2zM911 702m1 0h1v1h1v1h-3v-1h1zM953 580h2v2h-2zM856 524h3v2h-3zM883 730m1 0h1v1h1v1h-3v-1h1zM780 624h2v3h-2zM866 680h3v2h-1v1h-2zM994 625m1 0h1v1h1v1h-3v-1h1zM866 616h3v2h-3zM857 731h2v2h-1v1h-1zM855 722h2v2h-2zM892 634h3v3h-3zM979 580m1 0h1v1h1v1h-3v-1h1zM929 733m1 0h1v1h1v1h-3v-1h1zM929 576h2v2h-1v1h-1zM828 665h2v3h-2zM808 569h2v2h-1v1h-1zM872 740h3v2h-3zM799 689h2v2h-2zM993 660h2v2h-2zM811 571h2v2h-1v1h-1zM976 678h3v3h-3zM937 690h2v2h-1v1h-1zM875 722h2v2h-1v1h-1zM853 582h2v2h-2zM830 557h3v2h-3zM836 712h3v3h-3zM876 639h3v2h-3zM893 593h2v2h-2zM952 546h2v2h-1v1h-1zM867 670h2v2h-1v1h-1zM792 608h2v3h-2zM951 573h3v2h-1v1h-2zM788 594h3v3h-3zM912 619h2v2h-1v1h-1zM958 690h2v2h-2zM960 682h2v3h-2zM945 555m1 0h1v1h1v1h-3v-1h1zM902 584h2v2h-2zM856 599h2v3h-2zM882 629h2v2h-2zM864 581h3v2h-3zM911 591h3v3h-3zM921 733h3v2h-3zM821 656m1 0h1v1h1v1h-3v-1h1zM989 617m1 0h1v1h1v1h-3v-1h1zM945 577h2v2h-1v1h-1zM841 698h2v2h-2zM802 706m1 0h1v1h1v1h-3v-1h1zM983 622m1 0h1v1h1v1h-3v-1h1zM974 699h2v2h-2zM781 670h2v2h-2zM859 602h2v2h-1v1h-1zM952 545m1 0h1v1h1v1h-3v-1h1zM888 720m1 0h1v1h1v1h-3v-1h1zM791 649h3v2h-3zM811 713h2v2h-1v1h-1zM854 705h2v2h-2zM973 605h3v2h-1v1h-2zM861 530h2v2h-1v1h-1zM831 539h2v2h-2zM985 678h2v2h-2zM871 545h2v2h-1v1h-1zM975 637h2v3h-2zM829 715h2v2h-2zM872 567h2v2h-2zM996 623h2v2h-1v1h-1zM789 582h3v3h-3zM828 587m1 0h1v1h1v1h-3v-1h1zM986 637m1 0h1v1h1v1h-3v-1h1zM848 696m1 0h1v1h1v1h-3v-1h1zM911 567h2v2h-1v1h-1zM940 721h3v2h-1v1h-2zM936 540m1 0h1v1h1v1h-3v-1h1zM943 576h2v3h-2zM951 582h2v2h-2zM884 520h3v2h-3zM794 694h2v2h-1v1h-1zM901 734h3v3h-3zM876 523h3v2h-1v1h-2zM838 693h2v2h-1v1h-1zM792 582h2v2h-2zM866 736h3v2h-1v1h-2zM901 625h3v2h-3zM897 523h2v3h-2zM859 728h2v2h-2zM826 608h3v3h-3zM990 595h2v3h-2zM870 704h3v3h-3zM907 711h2v2h-2zM973 569h2v2h-2zM806 553h3v2h-3zM972 668h3v2h-3zM870 644m1 0h1v1h1v1h-3v-1h1zM885 528h3v3h-3zM839 646h2v2h-1v1h-1zM956 601h3v2h-1v1h-2zM884 557m1 0h1v1h1v1h-3v-1h1zM984 585m1 0h1v1h1v1h-3v-1h1zM948 667m1 0h1v1h1v1h-3v-1h1zM930 638h3v2h-1v1h-2zM961 671h3v2h-1v1h-2zM895 676h3v2h-3zM994 637m1 0h1v1h1v1h-3v-1h1zM871 530m1 0h1v1h1v1h-3v-1h1zM980 671h2v2h-2zM977 596h2v2h-2zM959 701h2v2h-1v1h-1zM938 704h2v2h-2zM808 555h2v2h-2zM817 713h3v3h-3zM816 696h2v3h-2zM835 729m1 0h1v1h1v1h-3v-1h1zM898 616h2v2h-2zM814 553h2v2h-2zM849 528h3v2h-1v1h-2zM852 538h2v2h-2zM836 676h2v2h-1v1h-1zM809 558h3v3h-3zM966 588h2v3h-2zM966 617h3v2h-3zM941 678h2v2h-2zM881 520h3v2h-3zM970 578h2v2h-2zM945 537h2v2h-2zM887 656h3v2h-1v1h-2zM792 569h2v3h-2zM932 730h2v3h-2zM960 650h3v3h-3zM969 699m1 0h1v1h1v1h-3v-1h1zM804 557m1 0h1v1h1v1h-3v-1h1zM859 623h2v3h-2zM963 567h2v2h-1v1h-1zM825 719h2v2h-1v1h-1zM994 654h3v2h-1v1h-2zM957 690h3v2h-1v1h-2zM964 555h2v2h-2zM783 588h2v2h-1v1h-1zM917 736h2v2h-2zM977 571h3v2h-3zM864 740m1 0h1v1h1v1h-3v-1h1zM779 620h3v3h-3zM856 534h3v2h-3zM797 601h3v3h-3zM891 741h3v2h-3zM929 721h2v2h-1v1h-1zM985 680h2v2h-2zM991 655h2v2h-2zM894 546m1 0h1v1h1v1h-3v-1h1zM827 699h2v2h-2zM804 587h2v3h-2zM917 738h3v2h-1v1h-2zM845 543h2v2h-2zM962 619h3v2h-3zM803 692h3v2h-1v1h-2zM791 600h2v2h-1v1h-1zM917 636h2v2h-2zM817 549h2v2h-1v1h-1zM963 663h3v3h-3zM961 695m1 0h1v1h1v1h-3v-1h1zM791 574h2v2h-2zM843 717h3v3h-3zM823 708h2v2h-2zM777 643h3v3h-3zM885 692h2v2h-2zM950 680h2v2h-2zM937 546h3v2h-3zM808 551h2v2h-1v1h-1zM824 687h3v3h-3zM909 658h3v3h-3zM958 604h3v2h-1v1h-2zM865 541h2v3h-2zM878 560h3v2h-3zM880 522h3v3h-3zM958 708h2v2h-2zM852 603h3v3h-3zM915 556h3v2h-3zM985 620m1 0h1v1h1v1h-3v-1h1zM850 536h2v2h-2zM806 626h2v3h-2zM996 641h2v2h-2zM952 701h2v2h-2zM910 616h3v2h-3zM933 542h2v2h-2zM795 696h2v3h-2zM968 573h3v2h-1v1h-2zM844 588h2v2h-2zM977 571h3v2h-3zM800 640m1 0h1v1h1v1h-3v-1h1zM936 536h2v3h-2zM782 663m1 0h1v1h1v1h-3v-1h1zM840 534h3v2h-1v1h-2zM984 683h2v2h-2zM779 657h3v2h-3zM928 732h3v3h-3zM913 527h2v2h-1v1h-1zM969 701h3v2h-3zM875 596m1 0h1v1h1v1h-3v-1h1zM859 666m1 0h1v1h1v1h-3v-1h1zM972 616h2v2h-1v1h-1zM904 624h3v2h-1v1h-2zM840 709m1 0h1v1h1v1h-3v-1h1zM951 721h2v2h-2zM942 585h2v2h-2zM806 561h2v2h-1v1h-1zM963 601h3v2h-1v1h-2zM787 616h2v2h-2zM970 560h3v3h-3zM838 696m1 0h1v1h1v1h-3v-1h1zM805 709h2v3h-2zM978 571h2v2h-1v1h-1zM940 570h2v2h-2zM956 596h3v2h-1v1h-2zM912 614h2v2h-2zM947 642m1 0h1v1h1v1h-3v-1h1zM936 679h3v3h-3zM977 634h2v3h-2zM775 628h2v2h-1v1h-1zM865 715h2v2h-2zM835 621m1 0h1v1h1v1h-3v-1h1zM961 638h2v2h-2zM957 634h2v2h-2zM920 624m1 0h1v1h1v1h-3v-1h1zM790 592h3v2h-1v1h-2zM883 733h3v2h-1v1h-2zM906 732h3v3h-3zM811 677h2v2h-2zM871 622h2v2h-1v1h-1zM844 616h3v2h-3zM800 692h3v2h-1v1h-2zM859 528h3v3h-3zM984 604h3v2h-1v1h-2zM909 541h2v3h-2zM983 674h2v2h-2zM854 701h3v3h-3zM995 620h2v3h-2zM775 648h2v2h-1v1h-1zM965 658h3v2h-1v1h-2zM881 721h2v2h-2zM801 575h2v2h-1v1h-1zM996 638h2v2h-2zM779 639h3v2h-3zM830 569h3v2h-3zM781 668h2v2h-2zM974 599h2v2h-2zM922 632h3v3h-3zM908 685m1 0h1v1h1v1h-3v-1h1zM928 531h3v3h-3zM816 698h2v2h-2zM984 581h2v2h-2zM980 676h2v3h-2zM908 540h2v2h-1v1h-1zM933 636h3v2h-1v1h-2zM985 672h3v3h-3zM875 625h3v2h-1v1h-2zM946 617h3v3h-3zM816 554h3v2h-1v1h-2zM986 666h2v2h-2zM858 663h2v2h-1v1h-1zM932 538h2v3h-2zM868 553m1 0h1v1h1v1h-3v-1h1zM953 632h2v2h-2zM824 666h3v2h-1v1h-2zM992 658h3v3h-3zM780 635h2v2h-1v1h-1zM874 738h2v2h-2zM832 663h3v3h-3zM857 544m1 0h1v1h1v1h-3v-1h1zM959 579h3v3h-3zM938 719m1 0h1v1h1v1h-3v-1h1zM860 546h2v2h-2zM846 705h3v2h-1v1h-2zM875 721h3v2h-1v1h-2zM791 628h2v2h-1v1h-1zM858 542h2v3h-2zM860 661m1 0h1v1h1v1h-3v-1h1zM779 616h2v2h-2zM964 553h2v2h-2zM935 540h2v2h-1v1h-1zM982 627h3v2h-1v1h-2zM939 540h2v3h-2zM953 598h2v2h-2zM894 603h3v2h-3zM883 577h3v3h-3zM840 574h2v2h-2zM827 695m1 0h1v1h1v1h-3v-1h1zM774 627m1 0h1v1h1v1h-3v-1h1zM994 618h3v3h-3zM817 720h3v2h-1v1h-2zM971 639h2v2h-2zM956 579h2v3h-2zM929 727m1 0h1v1h1v1h-3v-1h1zM903 617h2v2h-2zM978 691h2v2h-2zM917 528h2v3h-2zM894 708h2v2h-2zM965 684h2v2h-2zM891 571h2v3h-2zM953 692m1 0h1v1h1v1h-3v-1h1zM805 568h2v2h-2zM994 615h3v2h-3zM840 733h2v3h-2zM774 632h3v2h-3zM903 639h2v2h-1v1h-1zM924 563h3v3h-3zM855 695h3v2h-3zM849 551h2v2h-2zM959 549h3v3h-3zM918 716h2v3h-2zM800 573h3v3h-3zM843 634h2v2h-2zM846 736h2v2h-1v1h-1zM967 702m1 0h1v1h1v1h-3v-1h1zM793 576h2v3h-2zM956 552m1 0h1v1h1v1h-3v-1h1zM807 656h3v3h-3zM944 685h3v3h-3zM915 632h3v3h-3zM824 596h2v2h-2zM858 558h3v3h-3zM841 663h2v3h-2zM866 721h3v2h-1v1h-2zM926 687h2v2h-2zM898 521m1 0h1v1h1v1h-3v-1h1zM841 731h2v3h-2zM887 522h3v2h-1v1h-2zM793 571h2v3h-2zM957 609h2v2h-2zM805 641h2v2h-1v1h-1zM920 656h3v2h-3zM979 679m1 0h1v1h1v1h-3v-1h1zM784 615m1 0h1v1h1v1h-3v-1h1zM937 726m1 0h1v1h1v1h-3v-1h1zM816 589h2v3h-2zM995 617m1 0h1v1h1v1h-3v-1h1zM885 740h3v3h-3zM992 651h2v2h-1v1h-1zM990 613h2v2h-2zM937 572h3v2h-3zM886 541h3v2h-1v1h-2zM781 616h3v2h-3zM880 536h3v2h-1v1h-2zM925 694h3v3h-3zM787 685h3v3h-3zM872 537h2v2h-2zM913 724h2v2h-2zM907 694h3v2h-1v1h-2zM830 545h3v2h-3zM810 628h2v2h-2zM919 620h3v2h-1v1h-2zM865 522h2v2h-2zM987 587h3v2h-1v1h-2zM881 683h2v2h-1v1h-1zM985 666h2v2h-1v1h-1zM823 720h3v3h-3zM824 544h2v2h-2zM906 522h2v2h-2zM932 550h3v2h-3zM846 730h3v2h-3zM932 550h2v2h-2zM774 624h2v2h-2zM965 706h2v2h-1v1h-1zM824 597h3v3h-3zM877 526h3v2h-3z" fill="#f59a23"/><path d="M909.9 709.1L909.1 712.0L907.4 714.8L905.1 717.4L902.2 719.5L898.7 721.3L894.8 722.5L890.7 723.1L886.6 723.1L882.5 722.6L878.7 721.5L875.3 719.8L872.4 717.7L870.2 715.2L868.7 712.4L867.9 709.5L868.0 706.5L868.9 703.6L870.5 700.8L872.9 698.3L875.8 696.2L879.3 694.5L883.1 693.3L887.1 692.7L891.2 692.6L895.3 693.2L899.0 694.3L902.4 695.9L905.3 698.0L907.6 700.4L909.1 703.2L909.9 706.1L909.9 709.1M930.0 706.1L928.4 711.9L925.3 717.4L920.7 722.4L914.9 726.7L908.0 730.1L900.4 732.5L892.3 733.7L884.1 733.8L876.1 732.7L868.6 730.5L861.8 727.2L856.2 723.1L851.8 718.1L848.9 712.7L847.5 706.9L847.7 701.0L849.4 695.3L852.7 689.9L857.3 685.0L863.1 680.8L869.9 677.6L877.4 675.3L885.3 674.1L893.3 674.0L901.1 675.0L908.5 677.2L915.2 680.3L920.8 684.3L925.3 689.1L928.4 694.5L930.0 700.2L930.0 706.1M948.6 700.3L946.3 708.7L941.8 716.8L935.2 724.1L926.7 730.4L916.7 735.4L905.6 738.8L893.7 740.7L881.7 740.8L869.9 739.2L858.9 735.9L849.1 731.1L840.9 725.0L834.5 717.9L830.3 709.9L828.3 701.5L828.7 693.0L831.3 684.6L836.2 676.8L842.9 669.8L851.4 663.8L861.2 659.1L872.0 655.8L883.4 654.1L895.0 654.0L906.4 655.5L917.1 658.5L926.8 663.0L935.0 668.8L941.6 675.7L946.1 683.5L948.5 691.7L948.6 700.3M964.9 691.9L962.1 702.7L956.4 713.0L948.0 722.3L937.1 730.3L924.3 736.7L910.0 741.2L894.8 743.6L879.4 743.7L864.3 741.7L850.2 737.5L837.6 731.3L827.1 723.5L819.0 714.3L813.7 704.2L811.2 693.5L811.8 682.6L815.2 672.0L821.4 662.1L830.1 653.2L840.9 645.7L853.4 639.7L867.1 635.6L881.7 633.4L896.4 633.2L910.9 635.1L924.5 638.9L936.9 644.6L947.4 651.9L955.8 660.7L961.7 670.5L964.8 681.0L964.9 691.9M978.5 681.2L975.2 693.9L968.5 706.0L958.5 717.0L945.7 726.5L930.6 734.1L913.6 739.4L895.6 742.2L877.3 742.4L859.4 739.9L842.7 735.0L827.8 727.7L815.4 718.5L805.9 707.6L799.6 695.7L796.8 683.0L797.5 670.3L801.6 657.9L809.0 646.2L819.3 635.8L832.0 627.0L846.8 620.0L863.0 615.2L880.1 612.7L897.4 612.5L914.5 614.6L930.5 619.1L945.1 625.7L957.6 634.3L967.5 644.5L974.5 656.0L978.2 668.4L978.5 681.2M988.6 668.4L985.0 682.6L977.5 696.1L966.5 708.4L952.1 719.0L935.2 727.4L916.2 733.3L896.0 736.5L875.5 736.7L855.4 733.9L836.7 728.4L820.1 720.3L806.2 710.0L795.6 697.9L788.7 684.6L785.6 670.6L786.4 656.4L791.1 642.6L799.4 629.7L810.9 618.2L825.1 608.4L841.6 600.7L859.7 595.4L878.7 592.6L898.0 592.3L917.0 594.7L934.9 599.7L951.2 607.0L965.1 616.5L976.3 627.8L984.1 640.5L988.3 654.2L988.6 668.4M995.0 654.2L991.1 669.2L983.2 683.5L971.3 696.6L956.0 707.9L937.9 716.9L917.6 723.2L896.0 726.5L874.1 726.8L852.6 723.9L832.6 718.0L814.9 709.3L800.0 698.4L788.7 685.6L781.3 671.4L778.1 656.5L779.0 641.4L784.1 626.8L792.9 613.2L805.2 600.9L820.4 590.6L838.0 582.5L857.3 576.8L877.6 573.8L898.2 573.6L918.4 576.1L937.5 581.3L954.9 589.0L969.8 599.1L981.7 611.0L990.1 624.5L994.6 639.1L995.0 654.2M997.2 638.9L993.2 654.2L985.1 668.8L972.9 682.2L957.2 693.7L938.6 702.9L917.8 709.3L895.7 712.7L873.1 713.0L851.1 710.0L830.6 704.0L812.3 695.2L797.1 684.0L785.5 670.9L778.0 656.5L774.6 641.3L775.6 626.0L780.8 611.1L789.9 597.1L802.5 584.7L818.1 574.1L836.1 565.9L855.9 560.1L876.7 557.0L897.9 556.8L918.6 559.4L938.3 564.6L956.0 572.5L971.3 582.7L983.5 594.9L992.1 608.7L996.8 623.5L997.2 638.9M995.1 623.2L991.2 638.2L983.1 652.5L971.1 665.6L955.6 676.9L937.2 685.9L916.7 692.2L894.9 695.6L872.6 695.8L851.0 692.9L830.7 687.0L812.7 678.4L797.7 667.5L786.3 654.6L778.8 640.5L775.5 625.6L776.4 610.6L781.5 595.9L790.5 582.3L802.9 570.0L818.4 559.7L836.2 551.6L855.7 545.9L876.3 542.9L897.1 542.6L917.6 545.1L937.0 550.3L954.5 558.1L969.6 568.1L981.6 580.0L990.1 593.5L994.7 608.1L995.1 623.2M988.7 607.6L984.9 621.7L977.3 635.2L965.9 647.6L951.2 658.2L933.8 666.6L914.4 672.6L893.7 675.7L872.7 675.9L852.2 673.2L833.0 667.7L816.0 659.6L801.8 649.3L790.9 637.3L783.8 624.0L780.7 610.0L781.5 595.8L786.3 582.0L794.8 569.1L806.6 557.6L821.2 547.8L838.1 540.1L856.6 534.8L876.1 531.9L896.0 531.7L915.4 534.0L933.8 538.9L950.4 546.2L964.7 555.7L976.1 567.0L984.1 579.7L988.3 593.4L988.7 607.6M978.1 592.9L974.7 605.6L967.7 617.7L957.4 628.7L944.1 638.3L928.4 645.8L910.9 651.1L892.3 654.0L873.3 654.2L854.8 651.8L837.5 646.8L822.1 639.6L809.2 630.4L799.4 619.6L792.9 607.6L790.0 595.0L790.7 582.3L795.0 569.9L802.7 558.2L813.3 547.8L826.5 539.0L841.8 532.0L858.6 527.2L876.4 524.6L894.4 524.4L912.0 526.5L928.7 530.9L943.7 537.5L956.6 546.1L966.9 556.3L974.1 567.7L977.9 580.1L978.1 592.9M963.9 579.6L960.9 590.3L954.9 600.6L946.1 610.0L934.7 618.0L921.3 624.4L906.4 628.9L890.5 631.3L874.4 631.5L858.6 629.4L843.9 625.3L830.8 619.2L819.8 611.4L811.3 602.2L805.7 592.1L803.2 581.4L803.8 570.6L807.4 560.0L813.9 550.1L822.9 541.2L834.2 533.6L847.3 527.7L861.8 523.5L877.0 521.3L892.4 521.1L907.5 522.9L921.8 526.7L934.7 532.4L945.7 539.7L954.5 548.4L960.6 558.2L963.8 568.7L963.9 579.6M946.5 568.2L944.1 576.7L939.3 584.7L932.3 592.0L923.4 598.3L912.8 603.3L901.1 606.8L888.6 608.7L875.9 608.8L863.6 607.3L852.0 604.0L841.7 599.3L833.0 593.2L826.3 586.0L821.9 578.1L819.8 569.7L820.2 561.2L823.0 552.9L828.1 545.0L835.2 538.0L844.1 532.0L854.5 527.3L865.9 524.0L877.9 522.3L890.2 522.1L902.2 523.6L913.5 526.6L923.6 531.1L932.3 536.8L939.2 543.7L944.0 551.4L946.4 559.7L946.5 568.2M926.6 559.4L924.9 565.2L921.5 570.7L916.7 575.7L910.5 580.0L903.2 583.4L895.2 585.8L886.6 587.1L877.9 587.2L869.4 586.1L861.4 583.9L854.3 580.7L848.3 576.5L843.7 571.6L840.6 566.2L839.1 560.4L839.3 554.6L841.2 548.8L844.7 543.4L849.6 538.5L855.8 534.4L862.9 531.1L870.9 528.8L879.2 527.6L887.7 527.5L896.1 528.5L903.9 530.6L910.9 533.7L916.9 537.7L921.7 542.5L924.9 547.8L926.6 553.5L926.6 559.4M905.0 553.4L904.1 556.4L902.4 559.2L899.9 561.7L896.7 563.9L893.0 565.6L888.9 566.8L884.6 567.5L880.2 567.5L875.8 567.0L871.8 565.9L868.1 564.2L865.1 562.1L862.7 559.6L861.1 556.9L860.3 553.9L860.4 551.0L861.4 548.0L863.1 545.2L865.6 542.7L868.8 540.6L872.4 538.9L876.5 537.7L880.8 537.1L885.2 537.1L889.4 537.6L893.5 538.7L897.1 540.3L900.1 542.3L902.5 544.8L904.2 547.5L905.0 550.4L905.0 553.4M889.0 709.2L909.9 709.1L930.0 706.1L948.6 700.3L964.9 691.9L978.5 681.2L988.6 668.4L995.0 654.2L997.2 638.9L995.1 623.2L988.7 607.6L978.1 592.9L963.9 579.6L946.5 568.2L926.6 559.4L905.0 553.4L882.6 550.6M889.0 709.2L909.1 712.0L928.4 711.9L946.3 708.7L962.1 702.7L975.2 693.9L985.0 682.6L991.1 669.2L993.2 654.2L991.2 638.2L984.9 621.7L974.7 605.6L960.9 590.3L944.1 576.7L924.9 565.2L904.1 556.4L882.6 550.6M889.0 709.2L907.4 714.8L925.3 717.4L941.8 716.8L956.4 713.0L968.5 706.0L977.5 696.1L983.2 683.5L985.1 668.8L983.1 652.5L977.3 635.2L967.7 617.7L954.9 600.6L939.3 584.7L921.5 570.7L902.4 559.2L882.6 550.6M889.0 709.2L905.1 717.4L920.7 722.4L935.2 724.1L948.0 722.3L958.5 717.0L966.5 708.4L971.3 696.6L972.9 682.2L971.1 665.6L965.9 647.6L957.4 628.7L946.1 610.0L932.3 592.0L916.7 575.7L899.9 561.7L882.6 550.6M889.0 709.2L902.2 719.5L914.9 726.7L926.7 730.4L937.1 730.3L945.7 726.5L952.1 719.0L956.0 707.9L957.2 693.7L955.6 676.9L951.2 658.2L944.1 638.3L934.7 618.0L923.4 598.3L910.5 580.0L896.7 563.9L882.6 550.6M889.0 709.2L898.7 721.3L908.0 730.1L916.7 735.4L924.3 736.7L930.6 734.1L935.2 727.4L937.9 716.9L938.6 702.9L937.2 685.9L933.8 666.6L928.4 645.8L921.3 624.4L912.8 603.3L903.2 583.4L893.0 565.6L882.6 550.6M889.0 709.2L894.8 722.5L900.4 732.5L905.6 738.8L910.0 741.2L913.6 739.4L916.2 733.3L917.6 723.2L917.8 709.3L916.7 692.2L914.4 672.6L910.9 651.1L906.4 628.9L901.1 606.8L895.2 585.8L888.9 566.8L882.6 550.6M889.0 709.2L890.7 723.1L892.3 733.7L893.7 740.7L894.8 743.6L895.6 742.2L896.0 736.5L896.0 726.5L895.7 712.7L894.9 695.6L893.7 675.7L892.3 654.0L890.5 631.3L888.6 608.7L886.6 587.1L884.6 567.5L882.6 550.6M889.0 709.2L886.6 723.1L884.1 733.8L881.7 740.8L879.4 743.7L877.3 742.4L875.5 736.7L874.1 726.8L873.1 713.0L872.6 695.8L872.7 675.9L873.3 654.2L874.4 631.5L875.9 608.8L877.9 587.2L880.2 567.5L882.6 550.6M889.0 709.2L882.5 722.6L876.1 732.7L869.9 739.2L864.3 741.7L859.4 739.9L855.4 733.9L852.6 723.9L851.1 710.0L851.0 692.9L852.2 673.2L854.8 651.8L858.6 629.4L863.6 607.3L869.4 586.1L875.8 567.0L882.6 550.6M889.0 709.2L878.7 721.5L868.6 730.5L858.9 735.9L850.2 737.5L842.7 735.0L836.7 728.4L832.6 718.0L830.6 704.0L830.7 687.0L833.0 667.7L837.5 646.8L843.9 625.3L852.0 604.0L861.4 583.9L871.8 565.9L882.6 550.6M889.0 709.2L875.3 719.8L861.8 727.2L849.1 731.1L837.6 731.3L827.8 727.7L820.1 720.3L814.9 709.3L812.3 695.2L812.7 678.4L816.0 659.6L822.1 639.6L830.8 619.2L841.7 599.3L854.3 580.7L868.1 564.2L882.6 550.6M889.0 709.2L872.4 717.7L856.2 723.1L840.9 725.0L827.1 723.5L815.4 718.5L806.2 710.0L800.0 698.4L797.1 684.0L797.7 667.5L801.8 649.3L809.2 630.4L819.8 611.4L833.0 593.2L848.3 576.5L865.1 562.1L882.6 550.6M889.0 709.2L870.2 715.2L851.8 718.1L834.5 717.9L819.0 714.3L805.9 707.6L795.6 697.9L788.7 685.6L785.5 670.9L786.3 654.6L790.9 637.3L799.4 619.6L811.3 602.2L826.3 586.0L843.7 571.6L862.7 559.6L882.6 550.6M889.0 709.2L868.7 712.4L848.9 712.7L830.3 709.9L813.7 704.2L799.6 695.7L788.7 684.6L781.3 671.4L778.0 656.5L778.8 640.5L783.8 624.0L792.9 607.6L805.7 592.1L821.9 578.1L840.6 566.2L861.1 556.9L882.6 550.6M889.0 709.2L867.9 709.5L847.5 706.9L828.3 701.5L811.2 693.5L796.8 683.0L785.6 670.6L778.1 656.5L774.6 641.3L775.5 625.6L780.7 610.0L790.0 595.0L803.2 581.4L819.8 569.7L839.1 560.4L860.3 553.9L882.6 550.6M889.0 709.2L868.0 706.5L847.7 701.0L828.7 693.0L811.8 682.6L797.5 670.3L786.4 656.4L779.0 641.4L775.6 626.0L776.4 610.6L781.5 595.8L790.7 582.3L803.8 570.6L820.2 561.2L839.3 554.6L860.4 551.0L882.6 550.6M889.0 709.2L868.9 703.6L849.4 695.3L831.3 684.6L815.2 672.0L801.6 657.9L791.1 642.6L784.1 626.8L780.8 611.1L781.5 595.9L786.3 582.0L795.0 569.9L807.4 560.0L823.0 552.9L841.2 548.8L861.4 548.0L882.6 550.6M889.0 709.2L870.5 700.8L852.7 689.9L836.2 676.8L821.4 662.1L809.0 646.2L799.4 629.7L792.9 613.2L789.9 597.1L790.5 582.3L794.8 569.1L802.7 558.2L813.9 550.1L828.1 545.0L844.7 543.4L863.1 545.2L882.6 550.6M889.0 709.2L872.9 698.3L857.3 685.0L842.9 669.8L830.1 653.2L819.3 635.8L810.9 618.2L805.2 600.9L802.5 584.7L802.9 570.0L806.6 557.6L813.3 547.8L822.9 541.2L835.2 538.0L849.6 538.5L865.6 542.7L882.6 550.6M889.0 709.2L875.8 696.2L863.1 680.8L851.4 663.8L840.9 645.7L832.0 627.0L825.1 608.4L820.4 590.6L818.1 574.1L818.4 559.7L821.2 547.8L826.5 539.0L834.2 533.6L844.1 532.0L855.8 534.4L868.8 540.6L882.6 550.6M889.0 709.2L879.3 694.5L869.9 677.6L861.2 659.1L853.4 639.7L846.8 620.0L841.6 600.7L838.0 582.5L836.1 565.9L836.2 551.6L838.1 540.1L841.8 532.0L847.3 527.7L854.5 527.3L862.9 531.1L872.4 538.9L882.6 550.6M889.0 709.2L883.1 693.3L877.4 675.3L872.0 655.8L867.1 635.6L863.0 615.2L859.7 595.4L857.3 576.8L855.9 560.1L855.7 545.9L856.6 534.8L858.6 527.2L861.8 523.5L865.9 524.0L870.9 528.8L876.5 537.7L882.6 550.6M889.0 709.2L887.1 692.7L885.3 674.1L883.4 654.1L881.7 633.4L880.1 612.7L878.7 592.6L877.6 573.8L876.7 557.0L876.3 542.9L876.1 531.9L876.4 524.6L877.0 521.3L877.9 522.3L879.2 527.6L880.8 537.1L882.6 550.6M889.0 709.2L891.2 692.6L893.3 674.0L895.0 654.0L896.4 633.2L897.4 612.5L898.0 592.3L898.2 573.6L897.9 556.8L897.1 542.6L896.0 531.7L894.4 524.4L892.4 521.1L890.2 522.1L887.7 527.5L885.2 537.1L882.6 550.6M889.0 709.2L895.3 693.2L901.1 675.0L906.4 655.5L910.9 635.1L914.5 614.6L917.0 594.7L918.4 576.1L918.6 559.4L917.6 545.1L915.4 534.0L912.0 526.5L907.5 522.9L902.2 523.6L896.1 528.5L889.4 537.6L882.6 550.6M889.0 709.2L899.0 694.3L908.5 677.2L917.1 658.5L924.5 638.9L930.5 619.1L934.9 599.7L937.5 581.3L938.3 564.6L937.0 550.3L933.8 538.9L928.7 530.9L921.8 526.7L913.5 526.6L903.9 530.6L893.5 538.7L882.6 550.6M889.0 709.2L902.4 695.9L915.2 680.3L926.8 663.0L936.9 644.6L945.1 625.7L951.2 607.0L954.9 589.0L956.0 572.5L954.5 558.1L950.4 546.2L943.7 537.5L934.7 532.4L923.6 531.1L910.9 533.7L897.1 540.3L882.6 550.6M889.0 709.2L905.3 698.0L920.8 684.3L935.0 668.8L947.4 651.9L957.6 634.3L965.1 616.5L969.8 599.1L971.3 582.7L969.6 568.1L964.7 555.7L956.6 546.1L945.7 539.7L932.3 536.8L916.9 537.7L900.1 542.3L882.6 550.6M889.0 709.2L907.6 700.4L925.3 689.1L941.6 675.7L955.8 660.7L967.5 644.5L976.3 627.8L981.7 611.0L983.5 594.9L981.6 580.0L976.1 567.0L966.9 556.3L954.5 548.4L939.2 543.7L921.7 542.5L902.5 544.8L882.6 550.6M889.0 709.2L909.1 703.2L928.4 694.5L946.1 683.5L961.7 670.5L974.5 656.0L984.1 640.5L990.1 624.5L992.1 608.7L990.1 593.5L984.1 579.7L974.1 567.7L960.6 558.2L944.0 551.4L924.9 547.8L904.2 547.5L882.6 550.6M889.0 709.2L909.9 706.1L930.0 700.2L948.5 691.7L964.8 681.0L978.2 668.4L988.3 654.2L994.6 639.1L996.8 623.5L994.7 608.1L988.3 593.4L977.9 580.1L963.8 568.7L946.4 559.7L926.6 553.5L905.0 550.4L882.6 550.6" stroke="#ffffff" stroke-width=".85" fill="none" stroke-opacity=".9" shape-rendering="crispEdges"/><path d="M896 589h3v2h-3zM901 739h2v2h-2zM829 678h2v2h-2zM907 656h3v3h-3zM925 633h2v2h-1v1h-1zM988 664h3v2h-3zM848 730h3v2h-3zM798 702h3v2h-1v1h-2zM969 702h3v2h-1v1h-2zM950 543h3v2h-3zM810 696h3v2h-1v1h-2zM803 563h3v2h-1v1h-2zM894 721m1 0h1v1h1v1h-3v-1h1zM846 725h3v2h-1v1h-2zM946 538h2v2h-2zM993 610h3v2h-1v1h-2zM873 742h3v3h-3zM978 654h2v2h-2zM894 603h2v2h-2zM963 648h2v2h-2zM793 680h2v3h-2zM916 733h2v2h-1v1h-1zM798 577h2v2h-2zM811 712h2v2h-2zM987 633h2v3h-2zM800 609h3v3h-3zM838 692h3v2h-1v1h-2zM938 643h2v2h-1v1h-1zM907 705h3v2h-1v1h-2zM993 620h2v2h-1v1h-1zM839 574h3v2h-3zM978 581h3v2h-1v1h-2zM948 698h3v2h-1v1h-2zM941 727h3v3h-3zM799 562h2v2h-2zM938 572h3v2h-3zM945 658h3v2h-3zM966 573h2v2h-2zM844 574h3v2h-3zM815 683h2v2h-2zM800 704h2v3h-2zM821 721h3v3h-3zM933 638h2v2h-1v1h-1zM927 732h2v2h-1v1h-1zM925 528h2v3h-2zM951 589m1 0h1v1h1v1h-3v-1h1zM961 712h2v2h-1v1h-1zM991 606h2v3h-2zM891 694h2v3h-2zM865 698h2v3h-2zM874 547h3v2h-3zM833 705h2v3h-2zM795 566h3v2h-3zM988 596h2v3h-2zM914 557h3v3h-3zM948 561h3v3h-3zM857 565m1 0h1v1h1v1h-3v-1h1zM868 676m1 0h1v1h1v1h-3v-1h1zM929 540h2v3h-2zM866 706h3v2h-1v1h-2zM807 609h3v3h-3zM786 676m1 0h1v1h1v1h-3v-1h1zM841 632m1 0h1v1h1v1h-3v-1h1zM878 530h2v2h-1v1h-1zM802 587m1 0h1v1h1v1h-3v-1h1zM812 710h2v2h-1v1h-1zM804 565h3v3h-3zM829 555h3v2h-1v1h-2zM989 622h2v2h-2zM783 587m1 0h1v1h1v1h-3v-1h1zM958 659h2v3h-2zM927 703h2v2h-2zM815 689h3v2h-1v1h-2zM872 533h2v2h-2zM994 647m1 0h1v1h1v1h-3v-1h1zM862 671h2v2h-2zM962 567h2v2h-2zM778 600h2v2h-2zM943 536h2v2h-2zM928 574h2v2h-2zM837 679h2v3h-2zM858 727h2v3h-2zM946 554h3v2h-3zM795 697h2v3h-2zM959 698h2v3h-2zM848 530h3v2h-3zM844 735h2v3h-2zM950 608h3v3h-3zM970 699h2v3h-2zM934 582h3v2h-3zM914 611h3v2h-3zM883 653h3v2h-3zM814 622h3v3h-3zM871 658h3v2h-3zM954 710h2v2h-2zM981 590h2v2h-2zM784 662h3v2h-3zM784 600h2v2h-2zM930 535h3v2h-3zM909 733h2v3h-2zM880 590h2v3h-2zM978 581h3v2h-3zM881 697h2v3h-2zM787 590h3v2h-1v1h-2zM946 538h2v2h-1v1h-1zM833 723h2v2h-2zM887 739h3v2h-3zM907 524h3v2h-3zM865 570h2v2h-2zM887 718h2v2h-2zM938 711h2v2h-2zM996 638h2v2h-2zM876 681h3v2h-3zM991 633h2v2h-1v1h-1zM885 520h2v2h-2zM877 536h2v2h-2zM966 566h2v2h-1v1h-1zM981 688h2v3h-2zM898 713h2v2h-1v1h-1zM795 687h2v3h-2zM868 539h3v2h-3zM886 557h2v2h-1v1h-1zM914 706h2v2h-2zM925 538h3v2h-3zM986 659h2v2h-1v1h-1zM953 716h3v3h-3zM959 703m1 0h1v1h1v1h-3v-1h1zM864 621h2v2h-1v1h-1zM905 611h3v2h-3zM979 685h2v2h-2zM962 584h2v2h-2zM904 576h3v2h-3zM837 640h2v2h-2zM967 677h2v3h-2zM914 533h2v2h-2zM810 674h2v2h-2zM859 679h3v2h-1v1h-2zM995 645h3v2h-1v1h-2zM906 645h3v2h-1v1h-2zM781 604h2v2h-2zM818 665h3v2h-3zM967 616h2v2h-1v1h-1zM926 637h3v3h-3zM824 582h2v2h-2zM928 723h3v2h-3zM787 655h2v3h-2zM856 650h3v3h-3zM981 677h3v2h-1v1h-2zM777 633h3v3h-3zM811 644h2v3h-2zM802 650h3v2h-3zM927 587h2v2h-2zM949 577h2v2h-2zM835 677m1 0h1v1h1v1h-3v-1h1zM828 692h3v3h-3zM992 601h2v2h-1v1h-1zM845 536h2v3h-2zM936 728h3v2h-1v1h-2zM858 679m1 0h1v1h1v1h-3v-1h1zM947 647m1 0h1v1h1v1h-3v-1h1zM957 688m1 0h1v1h1v1h-3v-1h1zM831 619h2v2h-1v1h-1zM957 619h3v3h-3zM798 643h3v2h-1v1h-2zM943 641h2v2h-2zM821 722h3v2h-3zM988 647h2v2h-2zM841 706h2v3h-2zM789 683h3v2h-3zM872 637h3v2h-1v1h-2zM835 601h2v2h-2zM960 692h3v2h-3zM992 600m1 0h1v1h1v1h-3v-1h1zM821 718h3v3h-3zM862 618h2v3h-2zM876 743h3v2h-3zM810 682h2v2h-2zM860 540h2v2h-2zM876 740h3v2h-3zM931 591h2v2h-2zM896 522h3v3h-3zM837 602h3v2h-1v1h-2zM882 524h3v3h-3zM798 635h2v2h-2zM778 642h2v2h-2zM979 572h3v2h-3zM882 553h2v2h-2zM775 619h3v2h-3zM775 644m1 0h1v1h1v1h-3v-1h1zM914 715m1 0h1v1h1v1h-3v-1h1zM861 715h3v2h-1v1h-2zM814 705h2v2h-2zM931 606h3v2h-3zM812 673m1 0h1v1h1v1h-3v-1h1zM813 623h2v3h-2zM798 562h3v2h-1v1h-2zM983 584h3v2h-1v1h-2zM928 535h3v3h-3zM849 729h2v2h-2zM848 712h2v2h-1v1h-1zM873 559h3v2h-1v1h-2zM817 636h3v3h-3zM877 530h2v2h-2zM862 530h3v2h-1v1h-2zM910 540h3v2h-3zM855 683m1 0h1v1h1v1h-3v-1h1zM964 631h2v3h-2zM829 603h3v3h-3zM971 628h3v2h-3zM982 683h2v2h-2zM833 634h2v3h-2zM920 737h2v2h-2zM936 714m1 0h1v1h1v1h-3v-1h1zM950 663h2v2h-2zM977 677h2v2h-2zM952 542m1 0h1v1h1v1h-3v-1h1zM796 691h2v3h-2zM871 522h3v2h-1v1h-2zM831 667h2v3h-2zM982 585h2v2h-1v1h-1zM781 593h2v2h-2zM917 533h2v2h-2zM857 524h2v2h-1v1h-1zM864 671h2v2h-2zM807 654h2v2h-2zM996 639h2v2h-1v1h-1zM885 729h2v2h-2zM986 596h3v2h-3zM989 639h2v2h-2zM933 604h3v3h-3zM875 684h3v2h-3zM947 711h2v2h-2zM915 725h3v3h-3zM947 620h2v2h-2zM950 600h2v2h-1v1h-1zM778 642h2v2h-2zM871 525m1 0h1v1h1v1h-3v-1h1zM844 531h3v2h-3zM964 700h2v2h-2zM841 659h2v3h-2zM853 738h2v2h-2zM934 710h2v2h-1v1h-1zM793 583h2v2h-2zM949 722h2v2h-2zM789 684h3v2h-1v1h-2zM953 599m1 0h1v1h1v1h-3v-1h1zM881 734h3v3h-3zM970 683h3v2h-1v1h-2zM889 523m1 0h1v1h1v1h-3v-1h1zM965 562h2v3h-2zM841 550h2v2h-1v1h-1zM847 527h2v2h-2zM797 697h3v2h-1v1h-2zM906 724h2v2h-2zM976 665h3v2h-3zM817 654h3v2h-3zM859 605h3v2h-3zM995 650h2v2h-2zM953 589h2v3h-2zM882 617h2v2h-2zM944 693m1 0h1v1h1v1h-3v-1h1zM832 702h3v3h-3zM858 530h3v3h-3zM795 572h2v2h-2zM936 535h3v2h-1v1h-2zM809 556h2v2h-2zM985 611h2v2h-2zM780 662m1 0h1v1h1v1h-3v-1h1zM854 731h2v2h-1v1h-1zM870 640h2v3h-2zM879 630m1 0h1v1h1v1h-3v-1h1zM799 677m1 0h1v1h1v1h-3v-1h1zM955 555h3v2h-1v1h-2zM788 642h3v2h-1v1h-2zM803 573h3v2h-3zM818 552h2v2h-2zM788 582m1 0h1v1h1v1h-3v-1h1zM787 637h2v2h-1v1h-1zM915 525h3v2h-1v1h-2zM814 700h2v2h-1v1h-1zM855 689h3v3h-3zM887 559h3v2h-1v1h-2zM897 736h3v3h-3zM970 704h2v2h-1v1h-1zM843 528h2v2h-1v1h-1zM840 710h3v3h-3zM991 607h3v3h-3zM915 618h3v3h-3zM898 740h3v2h-1v1h-2zM914 648m1 0h1v1h1v1h-3v-1h1zM930 714h2v2h-2zM873 528h2v2h-2zM848 686h2v2h-2zM930 541h2v3h-2zM951 705h3v2h-1v1h-2zM967 558h2v2h-1v1h-1zM892 580h2v2h-1v1h-1zM929 541h3v2h-3zM814 608h3v3h-3zM810 648h3v3h-3zM826 714h3v3h-3zM958 552h2v3h-2zM865 669h2v2h-2zM810 636h2v2h-1v1h-1zM876 548h3v2h-3zM929 631m1 0h1v1h1v1h-3v-1h1zM839 618h3v2h-3zM949 687h3v2h-1v1h-2zM808 552h3v3h-3zM809 706h2v2h-1v1h-1zM983 598h2v3h-2zM950 717m1 0h1v1h1v1h-3v-1h1zM976 632m1 0h1v1h1v1h-3v-1h1zM892 608h2v2h-2zM879 573m1 0h1v1h1v1h-3v-1h1zM853 700h3v2h-1v1h-2zM808 669h3v2h-1v1h-2zM839 689h3v2h-1v1h-2zM810 683h2v2h-1v1h-1zM826 718h3v2h-3zM836 628h2v3h-2zM900 547h2v2h-2zM786 580h3v3h-3zM923 594h3v3h-3zM966 634h3v3h-3zM857 660h3v3h-3zM869 607h2v2h-2zM896 540h2v2h-2zM902 653h3v3h-3zM902 602h2v2h-2zM793 622m1 0h1v1h1v1h-3v-1h1zM882 610h2v2h-1v1h-1zM975 596h2v2h-2zM883 666h2v2h-2zM777 626h2v2h-2zM922 573h2v2h-2zM991 597m1 0h1v1h1v1h-3v-1h1zM920 537h2v2h-1v1h-1zM833 641h3v3h-3zM820 721h2v2h-1v1h-1zM903 522h3v3h-3zM858 677h2v2h-1v1h-1zM914 613h3v3h-3zM803 588h3v2h-1v1h-2zM857 575h2v3h-2zM932 640h2v3h-2zM906 601m1 0h1v1h1v1h-3v-1h1zM966 647h2v2h-1v1h-1zM987 588h3v3h-3zM861 578m1 0h1v1h1v1h-3v-1h1zM988 659h2v2h-2zM788 591h3v3h-3zM825 572m1 0h1v1h1v1h-3v-1h1zM957 652h2v2h-2zM851 719h2v2h-2zM859 710h2v2h-2zM947 635h3v3h-3zM977 685h3v2h-1v1h-2zM977 694h2v3h-2zM882 741h3v3h-3zM920 546h2v2h-2zM787 636m1 0h1v1h1v1h-3v-1h1zM895 648h2v2h-1v1h-1zM793 609h2v2h-2zM798 563m1 0h1v1h1v1h-3v-1h1zM858 602h2v2h-2zM827 603h2v2h-2zM780 638h2v3h-2zM808 712h3v2h-1v1h-2zM911 729h3v3h-3zM853 693h2v2h-2zM858 612h2v3h-2zM848 736h2v2h-1v1h-1zM778 651m1 0h1v1h1v1h-3v-1h1zM885 560h2v3h-2zM813 693m1 0h1v1h1v1h-3v-1h1zM856 620h3v2h-3zM811 595h3v2h-1v1h-2zM956 645h2v3h-2zM895 734h3v3h-3zM826 537h2v2h-1v1h-1zM992 602h3v2h-1v1h-2zM898 538h3v2h-3zM852 604h2v2h-2zM839 703h2v2h-2zM842 613h3v2h-1v1h-2zM834 535m1 0h1v1h1v1h-3v-1h1zM862 716h3v2h-3zM838 727h3v2h-1v1h-2zM822 679m1 0h1v1h1v1h-3v-1h1zM841 668m1 0h1v1h1v1h-3v-1h1zM961 676h3v2h-1v1h-2zM837 566h3v3h-3zM996 642h3v3h-3zM902 540h2v3h-2zM981 576h3v3h-3zM934 537h2v2h-1v1h-1zM977 694h3v2h-3zM779 657h2v3h-2zM824 717h2v3h-2zM946 663h3v2h-1v1h-2zM828 535h2v2h-2zM860 558h3v3h-3zM896 606h3v3h-3zM979 633h2v2h-1v1h-1zM807 624h3v2h-1v1h-2zM863 681h3v2h-3zM787 662m1 0h1v1h1v1h-3v-1h1zM825 610h2v2h-1v1h-1zM885 665m1 0h1v1h1v1h-3v-1h1zM847 682h2v3h-2zM840 534h3v2h-3zM827 677h2v2h-1v1h-1zM850 727h2v3h-2zM915 613h2v2h-2zM839 731h3v2h-3zM907 524h2v2h-1v1h-1zM958 703h2v3h-2zM829 727h2v3h-2zM930 729h2v2h-2zM933 690h2v2h-2zM857 525h3v2h-3zM788 686h3v2h-1v1h-2zM847 733h2v3h-2zM984 668h2v2h-2zM789 605m1 0h1v1h1v1h-3v-1h1zM816 570m1 0h1v1h1v1h-3v-1h1zM915 529h3v2h-3zM990 624h2v2h-2zM983 588h2v2h-2zM941 575h2v2h-1v1h-1zM913 739h3v2h-1v1h-2zM937 616h3v2h-3zM883 734m1 0h1v1h1v1h-3v-1h1zM849 578m1 0h1v1h1v1h-3v-1h1zM870 698h3v3h-3zM977 614h3v2h-1v1h-2zM952 636h2v2h-2zM983 658h2v2h-1v1h-1zM920 639h3v2h-3zM879 610h2v2h-2zM830 659h3v2h-1v1h-2zM905 522h3v3h-3zM851 533h2v2h-2zM928 646h3v2h-1v1h-2zM860 547h3v2h-3zM886 658h3v2h-3zM793 580h2v2h-2zM852 527m1 0h1v1h1v1h-3v-1h1zM916 546h2v2h-2zM929 531h3v2h-3zM862 558h2v2h-1v1h-1zM867 711h2v2h-1v1h-1zM886 581h2v2h-2zM900 731m1 0h1v1h1v1h-3v-1h1zM965 708h2v2h-2zM869 644h2v2h-2zM970 671m1 0h1v1h1v1h-3v-1h1zM787 666h2v2h-1v1h-1zM906 707h2v2h-2zM982 686h2v2h-1v1h-1zM904 694h2v2h-1v1h-1zM941 645h2v2h-1v1h-1zM774 628h2v2h-2zM843 732h2v2h-1v1h-1zM816 550h2v2h-2zM819 558h3v2h-1v1h-2zM949 646h3v3h-3zM885 700h2v2h-2zM979 688h3v2h-3zM878 526h2v2h-2zM958 613h2v2h-2zM987 616h2v3h-2zM886 740h3v3h-3zM950 541h2v2h-1v1h-1zM833 706h3v2h-3zM940 658h2v2h-1v1h-1zM817 711h2v3h-2zM894 687h3v3h-3zM951 704h3v2h-1v1h-2zM943 711h2v2h-2zM915 713h2v2h-1v1h-1zM792 586h2v2h-2zM804 676h3v3h-3zM838 664h2v3h-2zM884 559h2v2h-1v1h-1zM974 690m1 0h1v1h1v1h-3v-1h1zM904 739h2v3h-2zM965 555h2v2h-1v1h-1zM911 532h2v2h-1v1h-1zM911 547h2v2h-1v1h-1zM837 589h2v3h-2zM966 630h2v3h-2zM801 571h3v3h-3zM860 616h3v3h-3zM985 589h2v2h-1v1h-1zM951 719h2v2h-2zM965 572h3v3h-3zM890 593h2v2h-2zM954 612h2v3h-2zM911 544h2v2h-1v1h-1zM883 589h2v2h-2zM850 735h2v2h-1v1h-1zM892 592m1 0h1v1h1v1h-3v-1h1zM968 657h3v2h-3zM905 556h2v3h-2zM945 689h3v2h-1v1h-2zM944 560h2v2h-2zM810 586h3v2h-3zM989 650h2v2h-2zM904 553h3v3h-3zM972 701h3v2h-1v1h-2zM945 633m1 0h1v1h1v1h-3v-1h1zM909 649h2v2h-2zM887 643h3v3h-3zM911 529h2v2h-2zM857 711h3v3h-3zM995 611h3v3h-3zM906 674h2v2h-2zM833 667h2v3h-2zM975 697h3v2h-1v1h-2zM940 572h2v3h-2zM896 520h2v2h-1v1h-1zM963 612m1 0h1v1h1v1h-3v-1h1zM974 577h2v2h-2zM957 688h2v2h-2zM878 691h3v2h-3zM889 575h3v2h-3zM851 527m1 0h1v1h1v1h-3v-1h1zM835 725h3v3h-3zM987 608h2v2h-1v1h-1zM844 630h3v2h-3zM811 551h2v2h-1v1h-1zM836 732h3v3h-3zM783 618h2v2h-1v1h-1zM835 713h3v3h-3zM855 544h3v3h-3zM991 664h2v2h-1v1h-1zM779 628h2v3h-2zM869 588m1 0h1v1h1v1h-3v-1h1zM868 543h2v2h-2zM837 599h3v2h-1v1h-2zM891 742h2v2h-2zM791 660h2v3h-2zM986 660h2v2h-1v1h-1zM866 689h3v2h-3zM915 722h2v3h-2zM981 630h2v2h-2zM905 672h3v3h-3zM849 541h2v2h-1v1h-1zM867 714h2v2h-2zM887 695h2v2h-2zM875 520m1 0h1v1h1v1h-3v-1h1zM785 666h2v2h-1v1h-1zM882 552h3v2h-1v1h-2zM822 549m1 0h1v1h1v1h-3v-1h1zM829 715h2v3h-2zM828 621h3v2h-3zM891 625h2v3h-2zM908 537h2v2h-2zM928 662h2v2h-1v1h-1zM891 628m1 0h1v1h1v1h-3v-1h1zM874 540h3v2h-3zM899 739h2v2h-2zM908 672h2v2h-2zM827 635h3v2h-3zM880 546h2v2h-2zM933 726h3v2h-3zM913 638h2v2h-2zM982 632h2v2h-2zM830 689h2v2h-1v1h-1zM832 677h3v2h-1v1h-2zM879 535h2v2h-1v1h-1zM898 550m1 0h1v1h1v1h-3v-1h1zM894 631m1 0h1v1h1v1h-3v-1h1zM867 527h3v2h-3zM966 706h2v2h-1v1h-1zM937 713h3v3h-3zM860 531h3v3h-3zM984 595h3v3h-3zM791 631h3v2h-3zM963 570h3v2h-1v1h-2zM829 549h2v2h-1v1h-1zM966 690h3v2h-3zM996 639h3v2h-1v1h-2zM875 643h3v2h-1v1h-2zM880 520h3v2h-3zM957 637h2v2h-2zM841 657m1 0h1v1h1v1h-3v-1h1zM823 607h2v2h-2zM987 595m1 0h1v1h1v1h-3v-1h1zM979 687h2v2h-2zM780 623h3v2h-3zM790 580h2v2h-1v1h-1zM784 666h2v2h-1v1h-1zM919 526h3v2h-1v1h-2zM947 607h2v2h-1v1h-1zM993 631h2v2h-2zM816 633h2v2h-2zM938 647h2v2h-1v1h-1zM905 658h2v3h-2zM856 664h2v2h-2zM825 557h2v2h-2zM963 699h3v3h-3zM905 586h2v2h-2zM857 583h2v2h-2zM793 625h3v3h-3zM803 556h2v2h-1v1h-1zM892 662h2v3h-2zM805 642h3v3h-3zM777 651h3v2h-1v1h-2zM904 639h2v2h-2zM812 577h3v2h-1v1h-2zM864 676h2v3h-2zM781 622h3v3h-3zM929 575h3v2h-3zM938 609h3v3h-3zM993 618h3v3h-3zM931 534h2v2h-2zM937 570h3v2h-1v1h-2zM980 585h3v2h-1v1h-2zM985 583h2v2h-1v1h-1zM974 582h3v3h-3zM862 523h3v3h-3zM875 734h3v2h-3zM935 701h2v3h-2zM988 668h2v3h-2zM940 708h3v2h-3zM908 724h2v2h-2zM865 579h2v2h-2zM887 537h3v2h-3zM908 733h3v3h-3zM820 595h3v2h-3zM808 587h3v2h-3zM968 557h3v3h-3zM893 521h2v2h-2zM906 539h3v2h-1v1h-2zM842 712h3v2h-3zM876 735h3v3h-3zM857 564h2v2h-2zM819 576h2v2h-2zM919 571h2v2h-2zM785 648h2v3h-2zM832 542h2v2h-1v1h-1zM964 623m1 0h1v1h1v1h-3v-1h1zM855 559h3v2h-1v1h-2zM817 705m1 0h1v1h1v1h-3v-1h1zM832 726h2v2h-2zM869 695m1 0h1v1h1v1h-3v-1h1zM802 672m1 0h1v1h1v1h-3v-1h1zM872 551h2v3h-2zM944 702h2v3h-2zM836 533h3v2h-1v1h-2zM796 591h2v2h-2zM830 561m1 0h1v1h1v1h-3v-1h1zM856 560h3v2h-1v1h-2zM916 594h3v2h-3zM792 637h3v2h-1v1h-2zM922 662h2v3h-2zM916 736h3v2h-1v1h-2zM910 728h3v2h-1v1h-2zM811 695h2v2h-1v1h-1zM885 549h3v3h-3zM958 700h2v2h-1v1h-1zM892 537m1 0h1v1h1v1h-3v-1h1zM788 632h3v2h-1v1h-2zM838 540h2v3h-2zM774 631h3v2h-3zM890 675h2v3h-2zM886 598h2v2h-2zM851 591m1 0h1v1h1v1h-3v-1h1zM954 687h2v3h-2zM994 656h2v2h-1v1h-1zM983 629h3v2h-1v1h-2zM821 634m1 0h1v1h1v1h-3v-1h1zM807 691h2v2h-2zM786 646h2v2h-2zM863 741h2v2h-2zM918 636h2v3h-2zM979 630m1 0h1v1h1v1h-3v-1h1zM926 528h3v2h-1v1h-2zM814 718h2v3h-2zM900 654h3v3h-3zM934 705m1 0h1v1h1v1h-3v-1h1zM936 539h3v2h-3zM856 739h2v2h-2zM850 582h2v2h-2zM980 574h2v2h-1v1h-1zM884 559h3v2h-1v1h-2zM919 564h2v2h-2zM832 549h2v2h-2zM782 619h2v3h-2zM844 734h2v3h-2zM796 639h2v2h-1v1h-1zM880 726h3v3h-3zM836 658h2v2h-1v1h-1zM875 678h3v2h-1v1h-2zM880 621h3v2h-1v1h-2zM777 646h2v2h-2zM908 596h3v3h-3zM854 582h2v2h-1v1h-1zM996 643h3v2h-1v1h-2zM991 630h3v3h-3zM993 652h2v2h-2zM829 724h3v3h-3zM889 605h2v2h-2zM848 664h2v3h-2zM996 636h2v2h-1v1h-1zM864 585h3v2h-1v1h-2zM882 619h2v2h-2zM944 650h2v2h-2zM854 575h3v3h-3zM901 662h3v2h-3zM851 730h3v2h-3zM893 548h2v3h-2zM956 707h2v2h-1v1h-1zM830 708m1 0h1v1h1v1h-3v-1h1zM811 582h2v3h-2zM941 638h2v2h-2zM984 677h3v2h-1v1h-2zM785 598m1 0h1v1h1v1h-3v-1h1zM973 689h2v2h-2zM958 555h2v2h-2zM983 611h3v3h-3zM947 562h2v2h-2zM994 631h2v2h-2zM906 670h2v2h-2zM781 620h2v3h-2zM869 717h2v3h-2zM800 596h3v3h-3zM955 598h2v2h-1v1h-1zM908 699h3v2h-1v1h-2zM779 644h3v3h-3zM941 558h3v2h-1v1h-2zM918 608h2v3h-2zM983 591h2v3h-2zM962 704h2v2h-1v1h-1zM929 562h3v3h-3zM972 646h2v3h-2zM868 543h3v3h-3zM944 604m1 0h1v1h1v1h-3v-1h1zM958 578h2v2h-2zM904 523h2v2h-2zM856 630h2v2h-2zM969 637h2v3h-2zM981 605h3v3h-3zM832 715h2v2h-2zM777 620h3v2h-3zM974 695h2v3h-2zM974 592h3v2h-1v1h-2zM787 684h2v2h-2zM812 556h3v2h-3zM916 736h3v2h-3zM778 619h2v3h-2zM822 554h2v2h-2zM856 712h2v2h-1v1h-1zM904 557h2v2h-1v1h-1zM918 566h3v2h-3zM838 558h3v2h-1v1h-2zM976 613h2v2h-2zM920 734h3v2h-3zM865 595m1 0h1v1h1v1h-3v-1h1zM980 612h3v2h-1v1h-2zM977 572h2v2h-1v1h-1zM867 587h3v2h-1v1h-2zM854 709h3v2h-1v1h-2zM919 610h3v2h-1v1h-2zM887 525h2v2h-2zM805 637h2v2h-2zM920 528h3v2h-1v1h-2zM879 735m1 0h1v1h1v1h-3v-1h1zM875 710h3v3h-3zM996 640h3v2h-1v1h-2zM881 704m1 0h1v1h1v1h-3v-1h1zM921 526h3v2h-1v1h-2zM943 724h2v2h-1v1h-1zM861 706h2v2h-2zM894 556h2v2h-2zM948 708h2v2h-2zM906 529h2v2h-2zM936 532h3v2h-1v1h-2zM941 702h2v2h-2zM884 541h3v3h-3zM804 675h2v3h-2zM821 564h2v3h-2zM897 607h2v3h-2zM860 665h2v2h-1v1h-1zM896 739m1 0h1v1h1v1h-3v-1h1zM920 535h2v3h-2zM799 692h2v2h-2zM810 706h3v2h-3zM960 655m1 0h1v1h1v1h-3v-1h1zM879 537h2v2h-2zM990 626h3v2h-3zM899 727h3v2h-3zM894 706h2v2h-2zM831 719h2v2h-1v1h-1zM926 642h2v3h-2zM869 701h2v3h-2zM985 660h3v2h-3zM995 634m1 0h1v1h1v1h-3v-1h1zM935 696h2v2h-2zM851 663h2v2h-2zM839 719h2v2h-2zM927 733h2v2h-1v1h-1zM996 639h2v3h-2zM953 562h2v2h-2zM887 604h3v2h-1v1h-2zM961 667h3v2h-1v1h-2zM804 608h2v2h-1v1h-1zM878 523h3v2h-3zM945 543h3v2h-3zM895 673h2v3h-2zM829 573h2v2h-2zM908 526m1 0h1v1h1v1h-3v-1h1zM921 589h2v2h-2zM818 575h2v2h-2zM883 678h2v2h-2zM936 679m1 0h1v1h1v1h-3v-1h1zM989 628h3v3h-3zM837 682h3v2h-3zM816 716h2v2h-2zM937 534h2v3h-2zM818 720h3v2h-1v1h-2zM791 595h3v2h-3zM846 695h2v3h-2zM798 667m1 0h1v1h1v1h-3v-1h1zM828 566h3v3h-3zM781 666h3v3h-3zM954 545h3v3h-3zM881 581h2v2h-2zM919 533m1 0h1v1h1v1h-3v-1h1zM904 670h2v2h-2zM987 633h2v2h-2zM813 546h2v2h-2zM973 679h3v2h-3zM836 538h3v2h-3zM805 695h2v2h-1v1h-1zM977 571h2v2h-2zM919 594h2v2h-2zM882 739h2v2h-1v1h-1zM795 576h2v3h-2zM813 606h2v3h-2zM822 616h2v2h-1v1h-1zM860 705h3v3h-3zM821 665h3v3h-3zM879 597h2v2h-2zM897 576h2v2h-2zM965 681h3v2h-1v1h-2zM871 594h2v2h-2zM963 556m1 0h1v1h1v1h-3v-1h1zM942 537h3v3h-3zM882 717h3v2h-3zM892 521h2v2h-2zM988 598h3v2h-3zM928 540h2v2h-1v1h-1zM935 584h3v2h-3zM786 583h3v2h-1v1h-2zM921 729h3v3h-3zM891 589h2v2h-1v1h-1zM907 528h3v3h-3zM838 703h2v2h-1v1h-1zM867 685h2v2h-2zM926 686h2v2h-2zM914 729m1 0h1v1h1v1h-3v-1h1zM993 641m1 0h1v1h1v1h-3v-1h1zM814 554h2v2h-1v1h-1zM981 575m1 0h1v1h1v1h-3v-1h1zM819 609h2v2h-1v1h-1zM968 574m1 0h1v1h1v1h-3v-1h1zM955 572h3v2h-1v1h-2zM801 631h2v2h-2zM805 675h2v2h-1v1h-1zM844 584m1 0h1v1h1v1h-3v-1h1zM978 628h3v3h-3zM842 576h2v2h-2zM883 549h3v2h-3zM943 576h2v2h-2zM856 573h2v3h-2zM915 726h2v2h-2zM884 705h2v2h-2zM834 729m1 0h1v1h1v1h-3v-1h1zM886 522h3v3h-3zM814 702h2v2h-2zM986 614h2v2h-2zM809 709h2v2h-2zM818 720h3v2h-3zM858 588h2v2h-1v1h-1zM855 657h3v3h-3zM849 526m1 0h1v1h1v1h-3v-1h1zM957 590h3v2h-1v1h-2zM904 672m1 0h1v1h1v1h-3v-1h1zM979 611h2v2h-2zM797 608m1 0h1v1h1v1h-3v-1h1zM776 613h3v2h-1v1h-2zM922 716h2v2h-2zM832 673m1 0h1v1h1v1h-3v-1h1zM774 638m1 0h1v1h1v1h-3v-1h1zM810 696h2v3h-2zM994 654h2v2h-1v1h-1zM778 605h2v3h-2zM781 597m1 0h1v1h1v1h-3v-1h1zM775 632h2v2h-2zM900 586h3v3h-3zM795 697h2v2h-2zM785 669h3v2h-1v1h-2zM807 601h3v2h-3zM988 663h3v2h-3zM897 522m1 0h1v1h1v1h-3v-1h1zM945 725h3v2h-1v1h-2zM806 674h2v2h-2zM776 652h2v2h-2zM808 602h2v2h-1v1h-1zM930 699h3v3h-3zM975 581h3v2h-1v1h-2zM895 637h3v2h-3zM912 589m1 0h1v1h1v1h-3v-1h1zM893 646m1 0h1v1h1v1h-3v-1h1zM975 570h3v2h-1v1h-2zM801 649h2v3h-2zM855 647h2v2h-2zM971 639m1 0h1v1h1v1h-3v-1h1zM916 584h2v2h-2zM870 577h2v3h-2zM787 599h3v3h-3zM931 726h3v3h-3zM898 721h3v2h-3zM926 543h3v2h-1v1h-2zM982 587h2v3h-2zM780 624h3v2h-3zM802 696h3v2h-3zM869 570h3v2h-1v1h-2zM961 668h2v3h-2zM816 633h3v2h-3zM936 596h2v2h-2zM801 601m1 0h1v1h1v1h-3v-1h1zM850 622m1 0h1v1h1v1h-3v-1h1zM832 549m1 0h1v1h1v1h-3v-1h1zM959 661h2v2h-2zM911 642h3v2h-1v1h-2zM821 722h2v2h-2zM798 687h2v2h-1v1h-1zM798 562m1 0h1v1h1v1h-3v-1h1zM897 693h3v3h-3zM781 592h3v2h-1v1h-2zM822 580h2v2h-2zM927 704h2v2h-2zM980 652h2v2h-1v1h-1zM965 554h2v3h-2zM936 670h3v2h-3zM831 554m1 0h1v1h1v1h-3v-1h1zM953 683h2v2h-2zM855 712h3v3h-3zM967 699h2v2h-2zM927 598h2v2h-1v1h-1zM828 619h2v2h-2zM983 683h3v3h-3zM942 546h2v2h-2zM818 580h3v2h-1v1h-2zM921 539h3v3h-3zM941 561m1 0h1v1h1v1h-3v-1h1zM939 720h2v2h-2zM988 651h2v3h-2zM855 722m1 0h1v1h1v1h-3v-1h1zM924 675m1 0h1v1h1v1h-3v-1h1zM971 562h2v2h-2zM806 554m1 0h1v1h1v1h-3v-1h1zM826 713h2v2h-2zM776 617h2v2h-2zM891 521h3v3h-3zM781 605h2v2h-2zM782 589h3v3h-3zM945 538h3v2h-1v1h-2zM993 610m1 0h1v1h1v1h-3v-1h1zM902 742m1 0h1v1h1v1h-3v-1h1zM964 671h2v2h-1v1h-1zM946 627h2v2h-2zM836 731h3v2h-3zM793 595h3v2h-3zM980 574h3v2h-3zM986 606h3v2h-3zM898 636m1 0h1v1h1v1h-3v-1h1zM817 699h3v2h-1v1h-2zM791 571h3v2h-3zM873 711h3v2h-3zM795 650m1 0h1v1h1v1h-3v-1h1zM883 616h2v2h-2zM952 648h2v3h-2zM964 642h3v2h-1v1h-2zM938 574h2v3h-2zM904 733h3v2h-3zM894 533h2v2h-2zM987 592h2v2h-1v1h-1zM929 536h2v2h-1v1h-1zM942 556m1 0h1v1h1v1h-3v-1h1zM946 614h2v2h-1v1h-1zM977 621h2v2h-2zM801 558m1 0h1v1h1v1h-3v-1h1zM868 726h3v3h-3zM810 556h2v3h-2zM913 736h2v2h-2zM952 668h2v2h-2zM983 673m1 0h1v1h1v1h-3v-1h1zM991 657h3v3h-3zM988 593h2v2h-2zM783 626h2v2h-2zM944 631h2v2h-2zM835 728h3v2h-3zM778 601h2v3h-2zM920 679h2v2h-1v1h-1zM824 725h2v2h-2zM980 574h2v2h-1v1h-1zM788 685h2v2h-1v1h-1zM978 666h2v2h-2zM897 613m1 0h1v1h1v1h-3v-1h1zM960 554m1 0h1v1h1v1h-3v-1h1zM960 609h3v2h-3zM888 558h2v2h-2zM947 557m1 0h1v1h1v1h-3v-1h1zM780 595h2v2h-1v1h-1zM788 607h2v3h-2zM834 544h2v2h-1v1h-1zM862 559h3v2h-3zM851 563h3v2h-3zM783 674h2v3h-2zM905 689h3v3h-3zM917 634m1 0h1v1h1v1h-3v-1h1zM864 620h2v2h-2zM801 688h3v2h-3zM990 651h2v2h-2zM845 705m1 0h1v1h1v1h-3v-1h1zM830 589h3v3h-3zM850 730m1 0h1v1h1v1h-3v-1h1zM799 596h2v2h-2zM819 630h2v3h-2zM900 692h2v3h-2zM882 738h3v2h-1v1h-2zM991 632h3v3h-3zM949 696h2v2h-1v1h-1zM836 541m1 0h1v1h1v1h-3v-1h1zM842 538h2v2h-1v1h-1zM785 680h3v2h-1v1h-2zM919 558h2v2h-2zM942 598h2v2h-1v1h-1zM968 676h3v2h-1v1h-2zM918 654h3v2h-3zM783 656h3v2h-1v1h-2zM862 544h3v2h-1v1h-2zM901 527h3v3h-3zM902 741h3v2h-3zM879 522h2v2h-1v1h-1zM912 674h3v3h-3zM963 594m1 0h1v1h1v1h-3v-1h1zM847 730h2v3h-2zM849 732h3v2h-3zM961 551h3v2h-1v1h-2zM867 530h3v2h-3zM905 652h2v2h-1v1h-1zM865 718h2v2h-2zM804 555h2v3h-2zM926 734m1 0h1v1h1v1h-3v-1h1zM800 580h2v2h-2zM805 702m1 0h1v1h1v1h-3v-1h1zM888 732h2v2h-2zM847 529h3v2h-3zM781 641h2v2h-2zM967 678h2v2h-2zM922 588h3v2h-1v1h-2zM974 689h3v2h-3zM811 587h3v3h-3zM960 675h3v2h-1v1h-2zM791 690h3v2h-1v1h-2zM883 695h2v3h-2zM864 543h2v2h-1v1h-1zM803 640h3v2h-1v1h-2zM839 676h2v3h-2zM814 586h3v3h-3zM825 561m1 0h1v1h1v1h-3v-1h1zM779 661h3v2h-1v1h-2zM784 671h3v2h-3zM942 596h2v3h-2zM866 732h3v2h-1v1h-2zM806 569h2v2h-2zM945 661h2v2h-1v1h-1zM803 680h2v3h-2zM900 553m1 0h1v1h1v1h-3v-1h1zM905 684h3v2h-1v1h-2zM904 531h2v3h-2zM781 654h2v2h-2zM921 737h2v2h-2zM851 682m1 0h1v1h1v1h-3v-1h1zM879 522h2v2h-2zM923 647h3v2h-3zM908 528h2v2h-1v1h-1zM843 711h2v2h-1v1h-1zM816 547h3v3h-3zM777 658h3v2h-1v1h-2zM973 637h3v2h-1v1h-2zM875 553h2v2h-2zM949 657h2v3h-2zM799 681h3v3h-3zM987 654h2v3h-2zM957 643h3v2h-3zM876 682m1 0h1v1h1v1h-3v-1h1zM866 709h3v2h-1v1h-2zM843 643h2v2h-2zM982 636h2v2h-1v1h-1zM801 600h3v2h-1v1h-2zM914 543h2v2h-1v1h-1zM868 535h2v3h-2zM807 689h2v2h-2zM973 647h2v2h-2zM970 660h2v2h-1v1h-1zM922 670h3v3h-3zM950 700h3v2h-1v1h-2zM961 617h2v2h-2zM943 537h2v3h-2zM789 682h2v3h-2zM846 647h2v2h-1v1h-1zM858 628m1 0h1v1h1v1h-3v-1h1zM802 701h2v2h-2zM825 713h3v2h-3zM979 691h3v2h-1v1h-2zM873 667h2v2h-2zM948 638m1 0h1v1h1v1h-3v-1h1zM983 615h3v2h-3zM981 628h3v2h-1v1h-2zM926 694m1 0h1v1h1v1h-3v-1h1zM876 521h3v2h-1v1h-2zM948 642h2v2h-2zM965 564h3v3h-3zM981 576m1 0h1v1h1v1h-3v-1h1zM805 697h2v2h-1v1h-1zM810 574h3v2h-1v1h-2zM822 560h2v2h-1v1h-1zM930 531h2v2h-2zM949 665h2v2h-2zM832 534h2v3h-2zM863 537h2v2h-2zM918 681h3v2h-1v1h-2zM847 716h2v2h-2zM819 696h2v2h-1v1h-1zM912 740h2v2h-2zM947 543h2v2h-2zM936 714h2v2h-2zM958 603h3v2h-1v1h-2zM805 684h3v2h-3zM948 609h2v3h-2zM922 627h2v3h-2zM895 532h2v2h-1v1h-1zM797 595h3v3h-3zM935 593h3v2h-3zM852 696m1 0h1v1h1v1h-3v-1h1zM832 559h3v2h-3zM870 568h3v2h-3zM803 593h2v2h-2zM806 565h3v2h-3zM851 736h3v3h-3zM819 719h2v2h-2zM832 664h3v3h-3zM878 708m1 0h1v1h1v1h-3v-1h1zM823 565h3v2h-3zM782 651h3v2h-1v1h-2zM784 587h3v2h-1v1h-2zM994 607m1 0h1v1h1v1h-3v-1h1zM857 733h3v2h-1v1h-2zM935 607h3v3h-3zM883 740h2v3h-2zM778 664h2v2h-2zM863 668h2v2h-2zM952 620h2v2h-2zM796 676h2v3h-2zM838 555h3v2h-1v1h-2zM887 665h3v3h-3zM996 618m1 0h1v1h1v1h-3v-1h1zM923 527h2v2h-2zM873 521h2v2h-1v1h-1zM815 581h2v2h-2zM875 639h2v3h-2zM860 542h3v2h-3zM852 597h2v2h-2zM975 593h2v3h-2zM828 674h3v2h-3zM784 592h2v3h-2zM948 705h3v2h-1v1h-2zM918 625h3v3h-3zM791 617h2v2h-1v1h-1zM964 613h3v3h-3zM797 662h2v2h-1v1h-1zM808 634h2v2h-2zM924 552h2v2h-2zM838 599h2v2h-2zM803 677h2v3h-2zM934 645h3v3h-3zM787 611h3v3h-3zM866 665h3v3h-3zM926 613h2v2h-2zM872 566m1 0h1v1h1v1h-3v-1h1zM795 578h2v2h-2zM888 742h3v3h-3zM841 697h3v3h-3zM945 702h3v2h-3zM869 593h2v3h-2zM992 640h2v2h-2zM986 636h2v2h-1v1h-1zM989 669h3v2h-3zM921 717h2v3h-2zM980 604h2v2h-1v1h-1zM938 725h2v2h-2zM856 561h2v2h-2zM870 626h2v2h-2zM803 629h3v2h-1v1h-2zM880 548m1 0h1v1h1v1h-3v-1h1zM815 684h3v2h-1v1h-2zM822 714m1 0h1v1h1v1h-3v-1h1zM860 730h2v2h-2zM991 664h3v2h-1v1h-2zM974 565h3v2h-3zM831 606h2v3h-2zM971 609h3v3h-3zM781 610h3v2h-1v1h-2zM818 695h3v2h-1v1h-2zM853 704h3v2h-3zM992 663m1 0h1v1h1v1h-3v-1h1zM853 591h2v2h-2zM802 583h3v2h-3zM989 592h2v2h-2zM813 549h3v2h-1v1h-2zM885 532h3v2h-1v1h-2zM879 522h3v2h-3zM900 531h3v3h-3zM862 680m1 0h1v1h1v1h-3v-1h1zM931 653h2v3h-2zM787 606h2v2h-1v1h-1zM924 706h2v2h-2zM916 674h3v2h-3zM924 684h2v3h-2zM963 643h2v2h-2zM975 579h2v2h-2zM832 691h3v2h-3zM953 560h2v2h-1v1h-1zM880 529h3v2h-3zM827 576m1 0h1v1h1v1h-3v-1h1zM988 647h3v2h-3zM968 611h2v2h-2zM903 548h3v2h-3zM842 531h3v2h-1v1h-2zM996 619m1 0h1v1h1v1h-3v-1h1zM911 608h3v2h-1v1h-2zM960 620h2v2h-2zM899 620h3v3h-3zM837 643h2v2h-2zM874 742h2v2h-1v1h-1zM955 600h3v2h-3zM977 598h2v2h-1v1h-1zM896 667h2v2h-2zM925 528h2v2h-1v1h-1zM937 670h2v2h-2zM959 579h3v3h-3zM937 533h2v2h-1v1h-1zM988 590h2v2h-2zM794 681h2v2h-2zM962 710h2v2h-2zM787 649h2v3h-2zM978 693h2v2h-1v1h-1zM940 676h3v2h-1v1h-2zM883 732h3v2h-1v1h-2zM956 674h3v3h-3zM994 617h2v2h-2zM943 646h2v2h-2zM995 632m1 0h1v1h1v1h-3v-1h1zM875 545h2v2h-2zM933 723h2v2h-2zM875 675h2v2h-2zM828 727h2v3h-2zM980 620h3v2h-1v1h-2zM941 638h3v2h-3zM867 534h2v2h-2zM777 625h3v3h-3zM977 695h3v3h-3zM774 647h3v2h-1v1h-2zM883 574h2v2h-2zM966 681h3v2h-3zM969 692h2v3h-2zM916 531h2v2h-1v1h-1zM996 629h2v2h-2zM921 735h2v2h-1v1h-1zM822 719h2v2h-2zM976 643h2v2h-1v1h-1zM901 561h2v3h-2zM836 533h3v2h-3zM888 553m1 0h1v1h1v1h-3v-1h1zM849 734h2v2h-2zM840 711h3v2h-3zM908 732h3v3h-3zM993 604h3v2h-3zM931 731h2v2h-1v1h-1zM977 636m1 0h1v1h1v1h-3v-1h1zM995 627m1 0h1v1h1v1h-3v-1h1zM967 613h3v2h-3zM843 647h3v2h-1v1h-2zM855 529h3v2h-1v1h-2zM916 731h2v2h-1v1h-1zM864 728h2v2h-1v1h-1zM988 632h3v2h-1v1h-2zM814 656h2v3h-2zM793 643h2v2h-1v1h-1zM836 715m1 0h1v1h1v1h-3v-1h1zM987 671m1 0h1v1h1v1h-3v-1h1zM952 674h3v3h-3zM873 738h2v2h-2zM953 551h3v2h-3zM962 677h2v2h-1v1h-1zM985 635h3v2h-3zM853 548h2v2h-1v1h-1zM862 670h2v2h-1v1h-1zM783 675m1 0h1v1h1v1h-3v-1h1zM792 606h2v2h-2zM925 529h2v2h-2zM813 698h3v2h-3zM919 631h3v2h-1v1h-2zM970 694h3v2h-3zM838 717h3v3h-3zM876 727h3v2h-1v1h-2zM874 740h3v3h-3zM860 541h2v2h-2zM973 667h2v2h-2zM916 564m1 0h1v1h1v1h-3v-1h1zM896 696h2v3h-2zM885 629h2v2h-2zM901 536h2v2h-1v1h-1zM900 522h3v3h-3zM958 596h3v3h-3zM798 631h3v2h-3zM936 728h3v2h-3zM993 630h2v2h-2zM955 689h3v2h-1v1h-2zM789 575h2v2h-2zM966 586h3v2h-1v1h-2zM808 698h2v3h-2zM928 734h2v3h-2zM774 639h2v3h-2zM990 601h3v3h-3zM824 586h2v2h-2zM883 609h3v2h-3zM996 638h3v3h-3zM951 586h3v2h-3zM977 653h3v2h-1v1h-2zM795 597h2v2h-2zM927 572h3v3h-3zM934 726h3v3h-3zM935 710h2v2h-2zM795 565h2v3h-2zM892 680h3v3h-3zM853 722h3v2h-3zM977 592h3v2h-1v1h-2zM993 647h3v2h-3zM978 600h2v2h-2zM955 550h2v2h-1v1h-1zM933 654m1 0h1v1h1v1h-3v-1h1zM903 540m1 0h1v1h1v1h-3v-1h1zM775 648h3v2h-1v1h-2zM775 628h2v2h-2zM878 550h3v3h-3zM943 600h3v3h-3zM926 530h2v3h-2zM914 548h3v2h-3zM921 736h2v2h-1v1h-1zM792 657h2v2h-2zM778 646h3v2h-3zM970 696h3v2h-1v1h-2zM887 537h3v2h-1v1h-2zM971 576h2v2h-2zM864 733h3v2h-3zM850 526m1 0h1v1h1v1h-3v-1h1zM867 586h2v2h-2zM847 708h3v2h-3zM957 636h3v2h-1v1h-2zM969 593h3v2h-1v1h-2zM819 677h3v2h-3zM821 555h3v2h-3zM883 629h2v2h-2zM774 636h2v2h-2zM966 708h3v2h-1v1h-2zM775 638h3v3h-3zM964 688h3v3h-3zM904 620h2v2h-2zM854 527h2v2h-2zM826 697h2v3h-2zM956 581h2v3h-2zM876 565h2v3h-2zM783 651h2v2h-1v1h-1zM945 563h2v2h-1v1h-1zM796 675h2v2h-2zM953 701h2v2h-2zM877 545h3v2h-1v1h-2zM845 583h3v2h-1v1h-2zM861 629h3v2h-1v1h-2zM844 602h3v2h-1v1h-2zM857 531m1 0h1v1h1v1h-3v-1h1zM800 573h3v2h-3zM785 667h3v3h-3zM830 597h2v3h-2zM895 724m1 0h1v1h1v1h-3v-1h1zM894 740m1 0h1v1h1v1h-3v-1h1zM929 732h2v3h-2zM958 608h3v2h-1v1h-2zM781 648h3v3h-3zM957 561h3v2h-3zM976 687h2v3h-2zM886 542h2v3h-2zM899 684h3v2h-1v1h-2zM919 721h3v2h-3zM874 699h3v3h-3zM852 718h3v2h-1v1h-2zM779 605h3v3h-3zM906 567m1 0h1v1h1v1h-3v-1h1zM863 737h2v2h-2zM931 730h2v2h-1v1h-1zM900 681h2v2h-2zM801 706h3v3h-3zM979 689h2v2h-2zM886 613h3v2h-1v1h-2zM851 554h3v2h-1v1h-2zM915 662h3v3h-3zM872 543h2v2h-1v1h-1zM919 724h3v2h-1v1h-2zM814 558h3v3h-3zM809 712h3v3h-3zM795 569h2v2h-2zM806 709h3v3h-3zM927 600h2v3h-2zM887 641h2v2h-1v1h-1zM988 674h2v2h-1v1h-1zM829 595h2v2h-1v1h-1zM792 619h2v3h-2zM903 651h3v2h-1v1h-2zM992 640h2v3h-2zM903 570h2v2h-2zM834 628h3v2h-3zM789 654m1 0h1v1h1v1h-3v-1h1zM986 590h3v2h-3zM976 688h2v2h-2zM927 661h2v2h-2zM889 520h2v2h-1v1h-1zM794 692h2v2h-2zM858 732h2v2h-2zM995 616h2v2h-2zM853 597h3v2h-3zM969 625h2v2h-2zM988 603h3v2h-1v1h-2zM987 623h3v2h-1v1h-2zM812 701h2v2h-1v1h-1zM830 555h3v2h-3zM943 570h2v2h-2zM945 672h2v2h-2zM811 703h3v2h-1v1h-2zM977 650h2v3h-2zM995 618h3v2h-3zM871 612h3v2h-3zM869 568h2v2h-1v1h-1zM866 705h2v2h-2zM831 702h2v3h-2zM987 587h3v2h-3zM802 693h2v2h-2zM782 603h3v2h-3zM838 542m1 0h1v1h1v1h-3v-1h1zM969 663h3v2h-1v1h-2zM812 610m1 0h1v1h1v1h-3v-1h1zM949 703h2v2h-2zM896 664h2v2h-1v1h-1zM855 693h3v2h-3zM812 640h2v2h-2zM774 644h3v3h-3zM792 637h3v3h-3zM934 704h2v2h-2zM888 533h2v3h-2zM871 662h2v2h-2zM946 620h2v2h-2zM807 702h2v3h-2zM881 743h2v2h-1v1h-1zM957 717h2v2h-1v1h-1zM956 661h3v2h-1v1h-2zM886 520h3v2h-1v1h-2zM895 682h3v2h-1v1h-2zM811 554h2v2h-2zM859 739h3v3h-3zM786 612h3v3h-3zM944 539h2v2h-2zM939 616h3v2h-1v1h-2zM910 689h3v2h-3zM790 600h2v2h-2zM922 653h3v2h-3zM818 709h2v3h-2zM945 537h2v2h-2zM825 654h2v2h-2zM959 715h2v2h-1v1h-1zM853 582h2v2h-2zM948 693h3v3h-3zM934 703h2v2h-1v1h-1zM940 541h3v2h-1v1h-2zM822 712h2v2h-1v1h-1zM895 647h3v3h-3zM780 601h2v3h-2zM792 691h3v2h-3zM979 690h2v2h-2zM860 537h2v3h-2zM907 528h3v2h-3zM832 627h2v2h-2zM911 654h3v2h-1v1h-2zM863 633h3v2h-3zM992 657h3v2h-1v1h-2zM952 572h3v2h-3zM980 609h2v2h-1v1h-1zM840 627h3v2h-1v1h-2zM838 533h2v2h-2zM891 532h3v2h-3zM968 577h3v2h-1v1h-2zM857 735h2v2h-2zM953 544h2v2h-2zM848 610m1 0h1v1h1v1h-3v-1h1zM983 592h2v2h-1v1h-1zM849 589h2v3h-2zM988 660h2v3h-2zM863 631h3v3h-3zM830 540h3v3h-3zM819 596h2v3h-2zM963 573h2v3h-2zM970 632h2v2h-2zM892 622h2v3h-2zM989 648h2v2h-2zM782 595h2v3h-2zM832 536m1 0h1v1h1v1h-3v-1h1zM834 716h2v2h-2zM818 623m1 0h1v1h1v1h-3v-1h1zM798 565h2v3h-2zM910 671m1 0h1v1h1v1h-3v-1h1zM865 739h2v2h-1v1h-1zM923 527h3v3h-3zM898 555h2v2h-1v1h-1zM868 664h2v3h-2zM890 694m1 0h1v1h1v1h-3v-1h1zM861 693h2v2h-2zM798 627h3v3h-3zM781 640h3v2h-1v1h-2zM807 710h2v2h-2zM837 651h2v2h-2zM911 649h3v2h-1v1h-2zM837 712h2v2h-2zM890 617h3v2h-3zM831 711h2v2h-1v1h-1zM858 554h2v2h-1v1h-1zM875 651h3v2h-1v1h-2zM851 681h3v3h-3zM783 645h2v2h-1v1h-1zM929 665h2v3h-2zM894 639h2v2h-2zM882 560h3v2h-3zM783 636h2v2h-2zM780 595h2v3h-2zM840 680h2v3h-2zM847 535h3v3h-3zM871 586h3v2h-1v1h-2zM872 598h3v3h-3zM915 728h3v3h-3zM980 681h2v2h-2zM861 689h2v2h-1v1h-1zM896 729h2v2h-1v1h-1zM895 743h2v2h-2zM831 543h2v2h-2zM884 600h3v2h-3zM971 568h2v2h-1v1h-1zM878 615m1 0h1v1h1v1h-3v-1h1zM987 586h3v2h-1v1h-2zM954 713h2v2h-1v1h-1zM929 721h3v2h-3zM964 709m1 0h1v1h1v1h-3v-1h1zM854 729h3v2h-3zM953 656h3v3h-3zM911 730h2v2h-2zM884 679h3v2h-1v1h-2zM871 611h3v3h-3zM892 743h2v2h-1v1h-1zM837 730h2v2h-2zM813 572h2v3h-2zM930 692h3v2h-1v1h-2zM829 560h3v2h-3zM789 586h2v2h-1v1h-1zM935 554h2v3h-2zM817 663h2v2h-2zM937 588h2v3h-2zM799 633h2v2h-1v1h-1zM911 547h3v3h-3zM979 689h3v3h-3zM909 740h2v2h-2zM924 541h2v3h-2zM904 554h3v3h-3zM862 525m1 0h1v1h1v1h-3v-1h1zM964 653h3v2h-1v1h-2zM923 586h2v2h-2zM893 695h2v3h-2zM885 723h2v2h-1v1h-1zM826 716h3v3h-3zM932 548h3v2h-1v1h-2zM792 683h2v2h-2zM935 586h2v2h-2zM806 555h3v2h-1v1h-2zM947 539h3v3h-3zM951 560h2v3h-2zM966 655h3v2h-3zM785 656h3v2h-1v1h-2zM935 637h3v2h-1v1h-2zM787 613h2v2h-1v1h-1zM892 614h3v2h-3zM900 526h2v3h-2zM900 656h2v2h-2zM873 736h3v2h-3zM919 713h2v3h-2zM778 630h2v2h-2zM835 704h3v2h-1v1h-2zM798 562h3v2h-3zM964 707h2v3h-2zM947 638h3v2h-3zM994 640h3v2h-1v1h-2zM876 742h2v2h-2zM783 674m1 0h1v1h1v1h-3v-1h1zM817 561h3v3h-3zM924 736h2v3h-2zM876 549m1 0h1v1h1v1h-3v-1h1zM954 717h3v3h-3zM853 530h3v3h-3zM865 688h2v2h-2zM870 686h2v2h-2zM839 636h2v3h-2zM863 533h2v2h-2zM944 630h2v2h-1v1h-1zM969 650h3v2h-3zM835 636h2v2h-2zM899 529h3v2h-1v1h-2zM829 721h3v2h-3zM871 737h3v2h-3zM859 560h3v2h-3zM802 647h3v2h-1v1h-2zM948 665h2v2h-2zM996 625h3v3h-3zM875 549h2v3h-2zM861 651m1 0h1v1h1v1h-3v-1h1zM946 546h3v2h-1v1h-2zM964 579h3v3h-3zM987 658h3v3h-3zM825 657h2v2h-1v1h-1zM797 620h2v2h-1v1h-1zM821 544h3v2h-1v1h-2zM945 538h2v2h-2zM795 680h2v2h-2zM986 667h3v3h-3zM782 596h3v3h-3zM813 597h3v2h-3zM879 742m1 0h1v1h1v1h-3v-1h1zM885 541h3v3h-3zM945 638h2v2h-2zM876 742h3v2h-1v1h-2zM906 538h2v2h-2zM939 623h2v2h-2zM955 704h3v3h-3zM970 642h3v3h-3zM785 674h3v2h-3zM837 729h3v3h-3zM902 533h2v2h-1v1h-1zM910 736h3v2h-1v1h-2zM838 629h2v2h-2zM926 682m1 0h1v1h1v1h-3v-1h1zM963 672h2v2h-2zM907 532h2v3h-2zM828 613h2v3h-2zM973 696h3v3h-3zM909 615m1 0h1v1h1v1h-3v-1h1zM817 716h3v2h-3zM865 671h3v2h-1v1h-2zM927 734h3v2h-3zM815 717h3v2h-3zM876 547h3v2h-3zM925 547h2v2h-2zM900 711h2v3h-2zM904 522h2v2h-1v1h-1zM870 717h2v2h-1v1h-1zM857 633h2v2h-2zM829 638h3v2h-3zM780 611h2v2h-2zM885 621m1 0h1v1h1v1h-3v-1h1zM891 583h3v2h-1v1h-2zM866 521h3v2h-3zM890 724h2v3h-2zM889 709h3v3h-3zM960 714h3v3h-3zM935 532m1 0h1v1h1v1h-3v-1h1zM916 687h2v2h-2zM866 723h3v2h-1v1h-2zM819 585h2v3h-2zM963 561h2v2h-2zM804 699h3v2h-3zM907 529h2v2h-2zM995 618h2v2h-2zM880 534h2v2h-2zM789 670h2v3h-2zM797 566h2v2h-2zM883 527h3v3h-3zM873 736h3v2h-3zM964 571h2v2h-1v1h-1zM911 524h2v2h-2zM977 664h2v2h-2zM883 557h2v2h-2zM804 632h2v3h-2zM860 733h2v2h-2zM926 537h2v2h-2zM822 578h3v2h-3zM864 579h2v2h-2zM934 732h3v2h-1v1h-2zM974 606h2v2h-1v1h-1zM837 567h2v2h-2zM802 557h2v2h-1v1h-1zM893 740h3v2h-3zM936 532h2v3h-2zM989 590h2v2h-2zM944 544h3v3h-3zM857 734h3v2h-1v1h-2zM907 584m1 0h1v1h1v1h-3v-1h1zM866 733h3v2h-1v1h-2zM897 733h3v2h-3zM986 659h3v2h-1v1h-2zM822 713h2v2h-1v1h-1zM792 633h3v2h-1v1h-2zM942 604h3v3h-3zM876 715h2v2h-1v1h-1zM946 721m1 0h1v1h1v1h-3v-1h1zM983 681h3v2h-1v1h-2zM805 620h2v2h-2zM802 587h2v2h-2zM840 729h2v2h-1v1h-1zM931 630h2v3h-2zM955 713h2v2h-2zM845 692h3v2h-3zM929 661h3v3h-3zM883 631h2v2h-2zM983 658h3v2h-1v1h-2zM839 572h2v2h-2zM899 559h2v2h-2zM884 743h3v2h-3zM882 710h3v2h-3zM963 655h3v2h-3zM867 724h2v2h-2zM889 549h3v2h-3zM912 648m1 0h1v1h1v1h-3v-1h1zM856 715h2v2h-1v1h-1zM920 585h2v2h-2zM777 623h3v2h-3zM933 720h3v2h-3zM850 594h3v3h-3zM962 679h3v3h-3zM919 670h2v2h-2zM886 531h3v2h-1v1h-2zM803 645h2v3h-2zM778 662h3v2h-3zM877 695h3v2h-3zM789 686h3v3h-3zM968 663h3v3h-3zM838 732m1 0h1v1h1v1h-3v-1h1zM779 640h3v2h-3zM945 568m1 0h1v1h1v1h-3v-1h1zM921 547h3v2h-3zM871 737h2v3h-2zM779 600m1 0h1v1h1v1h-3v-1h1zM923 528h2v2h-2zM952 543h3v2h-3zM814 705h3v2h-1v1h-2zM799 565h3v3h-3zM817 697h2v3h-2zM779 599h2v2h-2zM784 584h2v2h-1v1h-1zM838 693h2v3h-2zM951 584h3v3h-3zM827 681h3v3h-3zM781 652h2v2h-1v1h-1zM823 667h2v2h-1v1h-1zM814 717h3v3h-3zM972 593h2v2h-2zM784 600m1 0h1v1h1v1h-3v-1h1zM780 614h2v2h-1v1h-1zM780 660h3v2h-1v1h-2zM882 694h3v2h-3zM960 658h3v2h-1v1h-2zM869 545h3v2h-3zM866 597h3v3h-3zM876 520h2v3h-2zM795 582h2v2h-2zM934 558h2v3h-2zM828 721h3v2h-3zM803 635h2v2h-2zM989 662h2v2h-1v1h-1zM992 648h2v2h-2zM928 567h3v2h-3zM838 547h2v2h-2zM790 688h3v2h-1v1h-2zM811 712m1 0h1v1h1v1h-3v-1h1zM831 720h2v3h-2zM955 562h3v2h-3zM890 657h3v2h-1v1h-2zM954 704h3v2h-3zM835 587h2v2h-2zM939 597h2v2h-1v1h-1zM979 649h3v3h-3zM885 550m1 0h1v1h1v1h-3v-1h1zM774 624h2v3h-2zM803 573h2v3h-2zM926 714m1 0h1v1h1v1h-3v-1h1zM889 743h3v3h-3zM931 575m1 0h1v1h1v1h-3v-1h1zM780 647h2v2h-2zM978 684h3v2h-1v1h-2zM777 623m1 0h1v1h1v1h-3v-1h1zM843 612h2v2h-1v1h-1zM855 690h2v2h-2zM951 693h2v2h-2zM832 539h2v3h-2zM962 630h2v2h-2zM919 638h2v2h-2zM933 543m1 0h1v1h1v1h-3v-1h1zM981 596h3v2h-1v1h-2zM791 691h3v2h-1v1h-2zM953 698h2v2h-2zM817 552m1 0h1v1h1v1h-3v-1h1zM804 592h3v2h-1v1h-2zM843 624h3v3h-3zM839 609h2v2h-2zM883 530h2v3h-2zM901 528h3v2h-1v1h-2zM847 734h3v2h-1v1h-2zM805 565h3v2h-3zM785 584h2v2h-2zM932 613m1 0h1v1h1v1h-3v-1h1zM948 606h2v2h-2zM923 733h3v3h-3zM943 611h2v3h-2zM834 717h3v2h-3zM821 636h3v2h-1v1h-2zM949 546h3v2h-3zM935 709m1 0h1v1h1v1h-3v-1h1zM791 664h2v2h-2zM805 566h2v2h-2zM844 566h3v3h-3zM931 583h2v2h-2zM902 554h2v2h-2zM883 540m1 0h1v1h1v1h-3v-1h1zM985 602h2v2h-2zM971 630h2v2h-2zM953 704h3v2h-3zM990 597h2v2h-2zM994 644h3v2h-1v1h-2zM920 526h3v3h-3zM853 690h2v3h-2zM781 651h3v2h-3zM962 564h3v2h-1v1h-2zM897 562h2v2h-2zM789 619h3v2h-3zM914 704h3v2h-1v1h-2zM868 677h2v3h-2zM956 595h2v3h-2zM918 718h3v3h-3zM946 615h3v3h-3zM925 664h3v2h-3zM939 552m1 0h1v1h1v1h-3v-1h1zM943 706h2v2h-2zM775 651h2v2h-2zM869 626h2v3h-2zM906 658h2v2h-2zM846 668h3v2h-3zM861 625h2v3h-2zM892 624m1 0h1v1h1v1h-3v-1h1zM904 657h3v2h-1v1h-2zM931 548h2v2h-2zM822 706h3v2h-1v1h-2zM920 725m1 0h1v1h1v1h-3v-1h1zM967 657m1 0h1v1h1v1h-3v-1h1zM936 532m1 0h1v1h1v1h-3v-1h1zM790 680h3v3h-3zM993 608h2v2h-2zM827 695h2v2h-2zM882 734h3v2h-3zM977 661h2v2h-1v1h-1zM805 603h3v2h-3zM972 677h2v3h-2zM926 697h3v2h-3zM933 683h3v2h-3zM800 574h2v2h-1v1h-1zM906 613h2v3h-2zM934 714m1 0h1v1h1v1h-3v-1h1zM950 692h3v2h-1v1h-2zM846 619h2v2h-2zM922 685h3v2h-1v1h-2zM929 618h2v2h-1v1h-1zM781 611h2v2h-2zM974 684h2v2h-2zM904 718h2v2h-2zM989 662h3v3h-3zM900 665h3v2h-1v1h-2zM940 725h2v2h-1v1h-1zM907 644h3v3h-3zM916 734h2v2h-2zM971 702h3v3h-3zM967 606h2v2h-2zM892 626h2v2h-2zM893 543h2v3h-2zM805 709h2v2h-2zM973 566h3v2h-3zM939 552h2v3h-2zM989 595h2v2h-1v1h-1zM913 591h3v2h-1v1h-2z" fill="#f59a23"/><path d="M900.300 592.800L956.700 602.500 941.600 639.600 892.100 630z" fill="#e8e020" fill-opacity=".42"/><path d="M885.200 606V537" stroke="#1a1a9a" stroke-width="1.500"/><path d="M885.200 591.500L941.600 598.500" stroke="#1a1a9a" stroke-width="1.300"/><path d="M941.600 598.500V639.600" stroke="#c01010" stroke-width="1.300"/><path d="M892.100 630L1008 650.600" stroke="#e8d820" stroke-width="1.200"/><path d="M900.300 592.800L913 552" stroke="#e8d820" stroke-width="1.200"/><path d="M899 590L899.500 553" stroke="#10a010" stroke-width="1.200"/><path d="M886 585l5-12 6 17" stroke="#1a1a9a" stroke-width="1.200" fill="none"/><path d="M881.300 500.800L873.500 538Q881.800 546 890.300 538z" fill="#0a0adc"/><path d="M928.500 514.500L925.900 521.800" stroke="#30b030" stroke-width="1"/><path d="M925.900 521.800L908.500 545.500 924.600 550z" fill="#109a14"/><path d="M908.300 546.500L912.500 541.500 919.500 542 924.800 547 922.500 553 915 554.500 910 552z" fill="#044e08"/><path d="M1054.400 657.500L1008.500 642.400V660.200z" fill="#c40808"/><circle cx="885.9" cy="632.4" r="112.4" fill="none" stroke="#45e0f6" stroke-width="3"/><rect x="874.500" y="619" width="23" height="25" fill="none" stroke="#b0a898" stroke-width="1.200" stroke-dasharray="8 7"/><text x="879.800" y="499.600" font-family="Liberation Sans,sans-serif" font-size="9" font-weight="bold" fill="#2424c8">z</text><text x="926.300" y="516.500" font-family="Liberation Sans,sans-serif" font-size="10" fill="#d8d838">y</text><text x="1056.700" y="657.800" font-family="Liberation Sans,sans-serif" font-size="10" fill="#d8d838">x</text></svg>
<div style="left:131px;top:31px;width:105px;height:31px;background:#454545;box-shadow:0 0 4px rgba(0,0,0,.25)"></div>
<svg style="left:132.500px;top:33px" width="4" height="28" viewBox="0 0 4 28"><rect x="0" y="0" width="1" height="1" fill="#d0d0d0"/><rect x="0" y="2" width="1" height="1" fill="#d0d0d0"/><rect x="0" y="4" width="1" height="1" fill="#d0d0d0"/><rect x="0" y="6" width="1" height="1" fill="#d0d0d0"/><rect x="0" y="8" width="1" height="1" fill="#d0d0d0"/><rect x="0" y="10" width="1" height="1" fill="#d0d0d0"/><rect x="0" y="12" width="1" height="1" fill="#d0d0d0"/><rect x="0" y="14" width="1" height="1" fill="#d0d0d0"/><rect x="0" y="16" width="1" height="1" fill="#d0d0d0"/><rect x="0" y="18" width="1" height="1" fill="#d0d0d0"/><rect x="0" y="20" width="1" height="1" fill="#d0d0d0"/><rect x="0" y="22" width="1" height="1" fill="#d0d0d0"/><rect x="0" y="24" width="1" height="1" fill="#d0d0d0"/><rect x="0" y="26" width="1" height="1" fill="#d0d0d0"/><rect x="2" y="0" width="1" height="1" fill="#d0d0d0"/><rect x="2" y="2" width="1" height="1" fill="#d0d0d0"/><rect x="2" y="4" width="1" height="1" fill="#d0d0d0"/><rect x="2" y="6" width="1" height="1" fill="#d0d0d0"/><rect x="2" y="8" width="1" height="1" fill="#d0d0d0"/><rect x="2" y="10" width="1" height="1" fill="#d0d0d0"/><rect x="2" y="12" width="1" height="1" fill="#d0d0d0"/><rect x="2" y="14" width="1" height="1" fill="#d0d0d0"/><rect x="2" y="16" width="1" height="1" fill="#d0d0d0"/><rect x="2" y="18" width="1" height="1" fill="#d0d0d0"/><rect x="2" y="20" width="1" height="1" fill="#d0d0d0"/><rect x="2" y="22" width="1" height="1" fill="#d0d0d0"/><rect x="2" y="24" width="1" height="1" fill="#d0d0d0"/><rect x="2" y="26" width="1" height="1" fill="#d0d0d0"/></svg>
<svg style="left:140px;top:32px" width="96" height="30" viewBox="0 0 96 30"><path transform="translate(7.5 8) scale(1.05)" d="M0 0L2.200 3.500H1.300L3.200 6.500H2L4.200 10H.7V12H-.7V10H-4.200L-2 6.500H-3.200L-1.300 3.500H-2.200z" fill="#46c8d0"/><path transform="translate(22.5 2.5) scale(1.05)" d="M0 0L2.200 3.500H1.300L3.200 6.500H2L4.200 10H.7V12H-.7V10H-4.200L-2 6.500H-3.200L-1.300 3.500H-2.200z" fill="#f5b812"/><path transform="translate(15.3 7) scale(1.55)" d="M0 0L2.200 3.500H1.300L3.200 6.500H2L4.200 10H.7V12H-.7V10H-4.200L-2 6.500H-3.200L-1.300 3.500H-2.200z" fill="#dcdcdc"/><path d="M35.500 2.800H52a6 6 0 0 1 6 6V25.700H35.500z" fill="none" stroke="#dcdcdc" stroke-width="1.300"/><path d="M40 9.800h14" stroke="#e8a838" stroke-width="1.800"/><path d="M40 14.200h14M40 18.600h14" stroke="#46c0c8" stroke-width="1.800"/><circle cx="79" cy="14" r="11.500" fill="none" stroke="#dcdcdc" stroke-width="1.300"/><text x="79.300" y="21.500" font-family="Liberation Sans,sans-serif" font-size="21" fill="#46c0c8" stroke="#46c0c8" stroke-width=".4" text-anchor="middle">?</text></svg>
<svg style="left:2052px;top:0" width="55" height="60" viewBox="2052 0 55 60"><path d="M2051.8 0L2069.5 0L2074.8 4.7L2078.3 9.4L2080.1 14.7L2080.5 18.5L2078.9 23.6L2075.4 27.7L2070.7 31.3L2064.8 34.2L2057.7 36L2051.8 36.6z" fill="#2c2c2c"/><path d="M2077.7 0L2082.5 4.7L2085.7 9.4L2087.2 14.7L2086.9 19.5L2084.8 24.8L2081.3 29.5L2076 34.2L2069.5 38.3L2062.4 41.3L2051.8 43L2051.8 36.6L2057.7 36L2064.8 34.2L2070.7 31.3L2075.4 27.7L2078.9 23.6L2080.5 18.5L2080.1 14.7L2078.3 9.4L2074.8 4.7L2069.5 0z" fill="#8f949a" stroke="#8f949a" stroke-width=".6" stroke-linejoin="round"/><path d="M2052 0h16.900l-4.100 24.800-10.100-1.200-2.700-.9z" fill="#9c9c9c"/><text x="2053.500" y="17" font-family="Liberation Sans,sans-serif" font-size="5.500" fill="#bdbdbd">NT</text><text x="2083.300" y="24" font-family="Liberation Sans,sans-serif" font-size="8.500" font-weight="bold" fill="#f0f0f0" transform="rotate(8 2086 21)">E</text></svg>
<div style="left:1186px;top:0px;width:865px;height:6px;background:#ffffff;"></div>
<div style="left:1186px;top:6px;width:865px;height:991px;background:#444444;"></div>
<div style="left:2051px;top:6px;width:1px;height:991px;background:#4b4b4b;"></div>
<div style="left:1188px;top:9px;width:62px;height:18px;background:#3c3c3c;border:1.5px solid #232323;border-bottom:none;border-radius:4px 4px 0 0;box-sizing:border-box"></div>
<div style="left:1250.5px;top:8px;width:103.5px;height:19px;background:#484848;border:1.5px solid #232323;border-bottom:none;border-radius:4px 4px 0 0;box-sizing:border-box"></div>
<div style="left:1354.5px;top:9px;width:41.5px;height:18px;background:#3c3c3c;border:1.5px solid #232323;border-bottom:none;border-radius:4px 4px 0 0;box-sizing:border-box"></div>
<span class="t" style="left:1194.00px;top:9.84px;font-size:12px;line-height:16px;color:#f0f0f0;letter-spacing:-0.465px;">tyFlow001</span>
<span class="t" style="left:1273.50px;top:9.84px;font-size:12px;line-height:16px;color:#f0f0f0;letter-spacing:-0.336px;">tyFlow001_ref</span>
<span class="t" style="left:1360.00px;top:9.84px;font-size:12px;line-height:16px;color:#f0f0f0;letter-spacing:-0.535px;">[New]</span>
<svg style="left:1257px;top:11px" width="14" height="13" viewBox="0 0 14 13"><path d="M4 0.5h6v5h3.6L7 12.5 0.4 5.5H4z" fill="#66ee66"/></svg>
<div style="left:1186px;top:26px;width:605px;height:741px;box-sizing:border-box;border:2px solid #6c6ce0;background-color:#283038;background-image:linear-gradient(to right,#2f3a40 1px,transparent 1px),linear-gradient(to bottom,#2f3a40 1px,transparent 1px);background-size:25px 25px;background-position:3px 13px;border-width:2px 2.5px 2.5px 2px;box-shadow:inset 0 0 0 1px rgba(38,38,80,.8)"></div>
<span class="t" style="left:1193.80px;top:746.04px;font-size:12px;line-height:16px;color:#6a6ae0;letter-spacing:-0.158px;">Caching enabled</span>
<span class="t" style="left:1284.00px;top:746.04px;font-size:12px;line-height:16px;color:#8a8a8a;letter-spacing:-0.498px;">| Static: NEVER</span>
<span class="t" style="left:1655.00px;top:746.04px;font-size:12px;line-height:16px;color:#8a8a8a;letter-spacing:-0.330px;">Press TAB for QuickType</span>
<div style="left:1737.2px;top:36px;width:19.500px;height:19.800px;box-sizing:border-box;border:1.3px solid #0c0c0c;border-radius:4px;background:#3d3d3d"></div>
<div style="left:1761.2px;top:36px;width:19.500px;height:19.800px;box-sizing:border-box;border:1.3px solid #0c0c0c;border-radius:4px;background:#3d3d3d"></div>
<div style="left:1741.5px;top:40.5px;width:11px;height:11px;border-radius:6px;background:#22ee44"></div>
<svg style="left:1763.5px;top:38px" width="15" height="16" viewBox="0 0 15 16"><g fill="#22e846"><path d="M2 7.2C2 4.4 4.4 2.9 8 3.1V1l4.6 3.6L8 8.2V5.9C6 5.6 4.3 6 2 7.2z"/><path d="M13 8.8c0 2.8-2.4 4.3-6 4.1V15L2.4 11.4 7 7.8v2.3c2 .3 3.700-.1 6-1.300z"/></g></svg>
<div style="left:1332px;top:421px;width:198.500px;height:151.500px;border-radius:6px;background:#0e1114;box-shadow:2px 3px 3px rgba(0,0,0,.55)"></div>
<div style="left:1333px;top:422px;width:196.500px;height:24px;border-radius:5px 5px 0 0;background:#79a82a"></div>
<div style="left:1333px;top:447px;width:196.500px;height:124.500px;border-radius:0 0 5px 5px;background:#cbcbcb"></div>
<div style="left:1333px;top:517px;width:196.5px;height:21px;background:#6a6ae6;"></div>
<span class="t" style="left:1451.00px;top:424.84px;font-size:12px;line-height:16px;color:#101010;letter-spacing:-0.653px;">Event_001</span>
<span class="t" style="left:1372.00px;top:450.54px;font-size:12px;line-height:16px;color:#101010;letter-spacing:-0.117px;">Birth Flow (tyFlow001 )</span>
<span class="t" style="left:1372.00px;top:473.64px;font-size:12px;line-height:16px;color:#101010;letter-spacing:-0.147px;">Flow Update (tyFlow001)</span>
<span class="t" style="left:1372.00px;top:496.74px;font-size:12px;line-height:16px;color:#101010;letter-spacing:-0.119px;">Find Target</span>
<span class="t" style="left:1372.00px;top:519.84px;font-size:12px;line-height:16px;color:#ffffff;letter-spacing:-0.131px;">Particle Physics (Collid...</span>
<span class="t" style="left:1372.00px;top:542.84px;font-size:12px;line-height:16px;color:#101010;letter-spacing:-0.158px;">Display (Geometry)</span>
<div style="left:1523.2px;top:497.7px;width:13.0px;height:13.0px;border-radius:50%;box-sizing:border-box;background:#cdcdcd;border:1.2px solid #111"></div>
<div style="left:1424.2px;top:566.2px;width:13.0px;height:13.0px;border-radius:50%;box-sizing:border-box;background:#cdcdcd;border:1.2px solid #111"></div>
<div style="left:1507.3px;top:521.6px;width:12px;height:12px;border-radius:50%;box-sizing:border-box;background:#3fd0d0;border:1.2px solid #333"></div>
<div style="left:1507.3px;top:544.7px;width:12px;height:12px;border-radius:50%;box-sizing:border-box;background:#b25cc8;border:1.2px solid #333"></div>
<svg style="left:1343px;top:449.200px" width="18.700" height="18.200" viewBox="0 0 19 19" preserveAspectRatio="none"><rect x=".5" y=".5" width="18" height="18" fill="#79a82a" stroke="#111"/><g stroke="#000" stroke-width="1.100" fill="#fff"><circle cx="4.200" cy="10" r="1.700"/><circle cx="4.200" cy="14.800" r="1.700"/><circle cx="8.900" cy="14.800" r="1.700"/><rect x="10" y="2.500" width="2.800" height="2.800"/><rect x="14.200" y="2.500" width="2.800" height="2.800"/><rect x="14.200" y="6.300" width="2.800" height="2.800"/><path d="M13 6.500L8 11.500M7.700 7.800v4h4" fill="none" stroke-width="1.300"/></g></svg>
<svg style="left:1341.700px;top:471.300px" width="26" height="20.400" viewBox="-1 -1 25 20" preserveAspectRatio="none"><rect x="-.3" y="-.3" width="19.600" height="19.600" fill="#1e9cf0" stroke="#22cc33" stroke-width="1.400"/><rect x=".8" y=".8" width="17.400" height="17.400" fill="none" stroke="#111" stroke-width=".8"/><g stroke="#000" stroke-width="1.100" fill="#fff"><circle cx="4.200" cy="10" r="1.700"/><circle cx="4.200" cy="14.800" r="1.700"/><circle cx="8.900" cy="14.800" r="1.700"/><rect x="10" y="2.500" width="2.800" height="2.800"/><rect x="14.200" y="2.500" width="2.800" height="2.800"/><rect x="14.200" y="6.300" width="2.800" height="2.800"/><path d="M13 6.500L8 11.500M7.700 7.800v4h4" fill="none" stroke-width="1.300"/></g><path d="M19.600 4.300l4.300 5.200-4.300 5.200z" fill="#22dd33"/></svg>
<svg style="left:1341.700px;top:494.200px" width="26" height="20.400" viewBox="-1 -1 25 20" preserveAspectRatio="none"><rect x="-.3" y="-.3" width="19.600" height="19.600" fill="#ffe066" stroke="#f0a020" stroke-width="1.400"/><rect x=".8" y=".8" width="17.400" height="17.400" fill="none" stroke="#111" stroke-width=".8"/><path d="M4 9c0-4 1-6 2.500-6S8.500 4 9 6h1c.5-2 1-3 2.500-3S15 5 15 9z" fill="#111"/><circle cx="6" cy="11.500" r="3" fill="#fff" stroke="#111" stroke-width="1.300"/><circle cx="13" cy="11.500" r="3" fill="#fff" stroke="#111" stroke-width="1.300"/><circle cx="6.500" cy="12" r="1" fill="#111"/><circle cx="13.500" cy="12" r="1" fill="#111"/><rect x="19.800" y="8.500" width="3.500" height="3.500" fill="#f0a020"/></svg>
<svg style="left:1341.700px;top:517px" width="26" height="20.400" viewBox="-1 -1 25 20" preserveAspectRatio="none"><rect x="-.3" y="-.3" width="19.600" height="19.600" fill="#c83cb4" stroke="#22cc33" stroke-width="1.400"/><rect x=".8" y=".8" width="17.400" height="17.400" fill="none" stroke="#111" stroke-width=".8"/><g fill="none" stroke="#fff" stroke-width="1.200"><circle cx="6" cy="5.500" r="3.600"/><circle cx="6" cy="13.500" r="3.600"/><circle cx="13" cy="9.500" r="3.600"/></g><g fill="#fff" stroke="#111" stroke-width="1"><rect x="4.700" y="4.200" width="2.600" height="2.600"/><rect x="4.700" y="12.200" width="2.600" height="2.600"/><rect x="11.700" y="8.200" width="2.600" height="2.600"/></g><path d="M19.600 4.300l4.300 5.200-4.300 5.200z" fill="#22dd33"/></svg>
<svg style="left:1343px;top:541px" width="18.700" height="18.500" viewBox="0 0 19 19" preserveAspectRatio="none"><rect x=".5" y=".5" width="18" height="18" fill="#3cc8c8" stroke="#111"/><path d="M9.500 .5v18M.5 9.500h18" stroke="#111" stroke-width="1"/><rect x="11.500" y="11.500" width="6" height="6" fill="#e8ffff" stroke="#111" stroke-width=".8"/><g fill="#2a8a8a"><rect x="13" y="13" width="1" height="1"/><rect x="15" y="13.500" width="1" height="1"/><rect x="13.500" y="15" width="1" height="1"/><rect x="15.500" y="15.500" width="1" height="1"/></g></svg>
<svg style="left:1512.500px;top:425.500px" width="13" height="16" viewBox="0 0 13 16"><path d="M6.500 .8C3.300 .8 1 3 1 5.800c0 2 1.200 3.200 2.300 4V15h6.400V9.800c1.100-.8 2.300-2 2.300-4C12 3 9.700 .8 6.500 .8z" fill="#fff" stroke="#111" stroke-width="1.200"/><path d="M4 10.500h5M4 12.700h5" stroke="#111" stroke-width="1.100"/></svg>
<div style="left:1188.7px;top:769.2px;width:25px;height:20.3px;background:#484848;border:1.800px solid #161616;border-bottom:none;border-radius:5px 5px 0 0;box-sizing:border-box"></div>
<svg style="left:1195.7px;top:775.3px" width="13" height="13" viewBox="0 0 13 13"><rect x=".5" y=".5" width="4" height="4" fill="#22cc33" stroke="#143"/><rect x="8" y=".5" width="4" height="4" fill="#7a90f0" stroke="#234"/><rect x=".5" y="8" width="4" height="4" fill="#f06060" stroke="#422"/><rect x="8" y="8" width="4" height="4" fill="#a080f0" stroke="#324"/></svg>
<div style="left:1214.7px;top:770.3px;width:25px;height:19.2px;background:#3c3c3c;border:1.800px solid #161616;border-bottom:none;border-radius:5px 5px 0 0;box-sizing:border-box"></div>
<svg style="left:1221.7px;top:775.3px" width="13" height="13" viewBox="0 0 13 13"><rect x=".6" y=".6" width="11.800" height="11.800" fill="#8fb82e" stroke="#101010" stroke-width="1.200"/><rect x="4.700" y="4.700" width="3.600" height="3.600" fill="#fff" stroke="#111"/></svg>
<div style="left:1240.7px;top:770.3px;width:25px;height:19.2px;background:#3c3c3c;border:1.800px solid #161616;border-bottom:none;border-radius:5px 5px 0 0;box-sizing:border-box"></div>
<svg style="left:1247.7px;top:775.3px" width="13" height="13" viewBox="0 0 13 13"><rect x=".6" y=".6" width="11.800" height="11.800" fill="#5fdf8a" stroke="#101010" stroke-width="1.200"/><g fill="#fff" stroke="#111"><rect x="2.500" y="7.500" width="2.500" height="2.500"/><rect x="8" y="7.500" width="2.500" height="2.500"/><rect x="5.200" y="2.500" width="2.600" height="2.600"/></g><path d="M3.700 7V4.500h1.500M9.300 7V4.500H7.800" fill="none" stroke="#111"/></svg>
<div style="left:1266.7px;top:770.3px;width:25px;height:19.2px;background:#3c3c3c;border:1.800px solid #161616;border-bottom:none;border-radius:5px 5px 0 0;box-sizing:border-box"></div>
<svg style="left:1273.7px;top:775.3px" width="13" height="13" viewBox="0 0 13 13"><rect x=".6" y=".6" width="11.800" height="11.800" fill="#f06a7a" stroke="#101010" stroke-width="1.200"/><path d="M3 3l7 7M10 3l-7 7" stroke="#111" stroke-width="2.600"/></svg>
<div style="left:1292.7px;top:770.3px;width:25px;height:19.2px;background:#3c3c3c;border:1.800px solid #161616;border-bottom:none;border-radius:5px 5px 0 0;box-sizing:border-box"></div>
<svg style="left:1299.7px;top:775.3px" width="13" height="13" viewBox="0 0 13 13"><rect x=".6" y=".6" width="11.800" height="11.800" fill="#2e9af0" stroke="#101010" stroke-width="1.200"/><g fill="#fff" stroke="#111" stroke-width=".9"><rect x="2.500" y="2.500" width="2.400" height="2.400"/><rect x="2.500" y="8" width="2.400" height="2.400"/><rect x="8" y="8" width="2.400" height="2.400"/></g><path d="M6.500 6.500L10 3M7.500 2.800H10.200V5.500" fill="none" stroke="#111" stroke-width="1.100"/></svg>
<div style="left:1318.7px;top:770.3px;width:25px;height:19.2px;background:#3c3c3c;border:1.800px solid #161616;border-bottom:none;border-radius:5px 5px 0 0;box-sizing:border-box"></div>
<svg style="left:1325.7px;top:775.3px" width="13" height="13" viewBox="0 0 13 13"><rect x=".6" y=".6" width="11.800" height="11.800" fill="#5fd0c8" stroke="#101010" stroke-width="1.200"/><rect x="4" y="2.500" width="5" height="8" fill="#8ff0a0" stroke="#111"/><path d="M5.500 5h2M5.500 7.500h2" stroke="#111" stroke-width="1.200"/></svg>
<div style="left:1344.7px;top:770.3px;width:25px;height:19.2px;background:#3c3c3c;border:1.800px solid #161616;border-bottom:none;border-radius:5px 5px 0 0;box-sizing:border-box"></div>
<svg style="left:1351.7px;top:775.3px" width="13" height="13" viewBox="0 0 13 13"><rect x=".6" y=".6" width="11.800" height="11.800" fill="#1f4f9f" stroke="#101010" stroke-width="1.200"/><rect x="2.500" y="2.500" width="8" height="8" fill="#333" stroke="#3a6ac0" stroke-width=".8"/><rect x="6.500" y="3" width="3.500" height="3.500" fill="#fff"/><rect x="3" y="6.500" width="3.500" height="3.500" fill="#fff"/></svg>
<div style="left:1370.7px;top:770.3px;width:25px;height:19.2px;background:#3c3c3c;border:1.800px solid #161616;border-bottom:none;border-radius:5px 5px 0 0;box-sizing:border-box"></div>
<svg style="left:1377.7px;top:775.3px" width="13" height="13" viewBox="0 0 13 13"><rect x=".6" y=".6" width="11.800" height="11.800" fill="#e8e8c0" stroke="#101010" stroke-width="1.200"/><path d="M3.500 3.500L9.500 9.500M9.500 3.500L3.500 9.500M3.500 3.500h6v6h-6z" fill="none" stroke="#111" stroke-width="1"/><circle cx="6.500" cy="6.500" r="2.200" fill="#e8e8c0"/><g fill="#fff" stroke="#111" stroke-width=".9"><rect x="2.300" y="2.300" width="2.200" height="2.200"/><rect x="8.500" y="2.300" width="2.200" height="2.200"/><rect x="2.300" y="8.500" width="2.200" height="2.200"/><rect x="8.500" y="8.500" width="2.200" height="2.200"/></g></svg>
<div style="left:1396.7px;top:770.3px;width:25px;height:19.2px;background:#3c3c3c;border:1.800px solid #161616;border-bottom:none;border-radius:5px 5px 0 0;box-sizing:border-box"></div>
<svg style="left:1403.7px;top:775.3px" width="13" height="13" viewBox="0 0 13 13"><rect x=".6" y=".6" width="11.800" height="11.800" fill="#c832c8" stroke="#101010" stroke-width="1.200"/><path d="M4 9l5-5" stroke="#fff" stroke-width="1" stroke-dasharray="1.500 1"/><g fill="#fff" stroke="#111" stroke-width=".9"><rect x="2.500" y="8" width="2.400" height="2.400"/><rect x="8.200" y="2.500" width="2.400" height="2.400"/></g></svg>
<div style="left:1422.7px;top:770.3px;width:25px;height:19.2px;background:#3c3c3c;border:1.800px solid #161616;border-bottom:none;border-radius:5px 5px 0 0;box-sizing:border-box"></div>
<svg style="left:1429.7px;top:775.3px" width="13" height="13" viewBox="0 0 13 13"><rect x=".6" y=".6" width="11.800" height="11.800" fill="#8a5fd0" stroke="#101010" stroke-width="1.200"/><rect x="3.200" y="3.200" width="6.600" height="6.600" fill="#909090" stroke="#fff" stroke-width="1.500"/></svg>
<div style="left:1448.7px;top:770.3px;width:25px;height:19.2px;background:#3c3c3c;border:1.800px solid #161616;border-bottom:none;border-radius:5px 5px 0 0;box-sizing:border-box"></div>
<svg style="left:1455.7px;top:775.3px" width="13" height="13" viewBox="0 0 13 13"><rect x=".6" y=".6" width="11.800" height="11.800" fill="#d0e0ff" stroke="#101010" stroke-width="1.200"/><path d="M6.500 2.200a1.300 1.300 0 1 0 .01 0zM3 5.500h7l.5 2.500-1.500.3V8l-.5 2.800H7.300L6.500 9l-.8 1.800H4.500L4 8v.3L2.500 8z" fill="#2a6ab0"/><path d="M5 6h3v2H5z" fill="#2a9a50"/></svg>
<div style="left:1474.7px;top:770.3px;width:25px;height:19.2px;background:#3c3c3c;border:1.800px solid #161616;border-bottom:none;border-radius:5px 5px 0 0;box-sizing:border-box"></div>
<svg style="left:1481.7px;top:775.3px" width="13" height="13" viewBox="0 0 13 13"><rect x=".6" y=".6" width="11.800" height="11.800" fill="#f0a040" stroke="#101010" stroke-width="1.200"/><rect x="4.500" y="2.500" width="6" height="6" rx="1" fill="none" stroke="#111" stroke-width="1.100"/><rect x="2.500" y="4.500" width="6" height="6" rx="1" fill="#f0b020" stroke="#111" stroke-width="1.100"/></svg>
<div style="left:1500.7px;top:770.3px;width:25px;height:19.2px;background:#3c3c3c;border:1.800px solid #161616;border-bottom:none;border-radius:5px 5px 0 0;box-sizing:border-box"></div>
<svg style="left:1507.7px;top:775.3px" width="13" height="13" viewBox="0 0 13 13"><rect x=".6" y=".6" width="11.800" height="11.800" fill="#fff08a" stroke="#101010" stroke-width="1.200"/><path d="M3.500 2.500h5.500v4l-2 4H3.500z" fill="#fff" stroke="#111" stroke-width="1"/><path d="M5 4.500h2.500M5 6.500h2M6.500 9.500l1-.3 3-4-.8-.6-3 4z" fill="none" stroke="#111" stroke-width=".9"/></svg>
<div style="left:1526.7px;top:770.3px;width:25px;height:19.2px;background:#3c3c3c;border:1.800px solid #161616;border-bottom:none;border-radius:5px 5px 0 0;box-sizing:border-box"></div>
<svg style="left:1533.7px;top:775.3px" width="13" height="13" viewBox="0 0 13 13"><rect x=".6" y=".6" width="11.800" height="11.800" fill="#6fd8d0" stroke="#101010" stroke-width="1.200"/><path d="M1 1l5.500 4L12 1" fill="#e8ffff" stroke="none"/><rect x="5.300" y="1.500" width="2.400" height="2.400" fill="#111"/><path d="M2.500 8c2-3 6-3 8 0-2 3-6 3-8 0z" fill="#e8ffff" stroke="#111" stroke-width="1"/><circle cx="6.500" cy="8" r="1.500" fill="#111"/></svg>
<div style="left:1552.7px;top:770.3px;width:25px;height:19.2px;background:#3c3c3c;border:1.800px solid #161616;border-bottom:none;border-radius:5px 5px 0 0;box-sizing:border-box"></div>
<svg style="left:1559.7px;top:775.3px" width="13" height="13" viewBox="0 0 13 13"><rect x=".6" y=".6" width="11.800" height="11.800" fill="#3848b8" stroke="#101010" stroke-width="1.200"/><path d="M2.500 5.200h4V2.800L11 6.500 6.500 10.200V7.800h-4z" fill="#30f040"/></svg>
<div style="left:1578.7px;top:770.3px;width:25px;height:19.2px;background:#3c3c3c;border:1.800px solid #161616;border-bottom:none;border-radius:5px 5px 0 0;box-sizing:border-box"></div>
<svg style="left:1585.7px;top:775.3px" width="13" height="13" viewBox="0 0 13 13"><rect x=".6" y=".6" width="11.800" height="11.800" fill="#e07868" stroke="#101010" stroke-width="1.200"/><path d="M6.500 2.200L10.800 6.500 6.500 10.800 2.200 6.500z" fill="#80e8c8" stroke="#111" stroke-width="1.100"/></svg>
<div style="left:1604.7px;top:770.3px;width:25px;height:19.2px;background:#3c3c3c;border:1.800px solid #161616;border-bottom:none;border-radius:5px 5px 0 0;box-sizing:border-box"></div>
<svg style="left:1611.7px;top:775.3px" width="13" height="13" viewBox="0 0 13 13"><rect x=".6" y=".6" width="11.800" height="11.800" fill="#c090d0" stroke="#101010" stroke-width="1.200"/><rect x="5" y="2.200" width="3" height="2.600" fill="#111"/><rect x="4.800" y="5.500" width="3.400" height="5" fill="#fff" stroke="#111"/><path d="M2.200 6.500h2.500M8.300 6.500h2.500M2.200 9h2.500M8.300 9h2.500" stroke="#111" stroke-width="1.100"/></svg>
<div style="left:1187px;top:791.200px;width:604px;height:3.700px;border-radius:2px;background:#7d7d7d"></div>
<svg style="left:1196.9px;top:798.3px;overflow:hidden" width="19" height="18.600" viewBox="0 0 18 18" preserveAspectRatio="none"><rect x=".5" y=".5" width="17" height="17" fill="#1e9cf0"/><rect x="2.500" y="2.500" width="13" height="13" fill="#58b6f6"/><path d="M3 3h12v12H3z" fill="none" stroke="#111" stroke-width="1.2" stroke-dasharray="1.100 1.100"/><rect x="5.8" y="4.8" width="2.6" height="2.6" fill="#fff" stroke="#111" stroke-width="1"/><rect x="10.8" y="8.8" width="2.6" height="2.6" fill="#fff" stroke="#111" stroke-width="1"/><rect x="4.8" y="11" width="2.6" height="2.6" fill="#fff" stroke="#111" stroke-width="1"/><rect x=".5" y=".5" width="17" height="17" fill="none" stroke="#0a0a0a" stroke-width="1.100"/></svg>
<span class="t" style="left:1226.40px;top:800.04px;font-size:12px;line-height:16px;color:#f2f2f2;letter-spacing:-0.180px;">Boundary</span>
<svg style="left:1196.9px;top:818.3px;overflow:hidden" width="19" height="18.600" viewBox="0 0 18 18" preserveAspectRatio="none"><rect x=".5" y=".5" width="17" height="17" fill="#1e9cf0"/><circle cx="4.500" cy="5" r="4.500" fill="#7ff09a"/><circle cx="4.500" cy="13.500" r="4.500" fill="#7ff09a"/><circle cx="13" cy="9" r="3.500" fill="#7ff09a"/><rect x="3" y="3.5" width="2.4" height="2.4" fill="#fff" stroke="#111" stroke-width="0.9"/><rect x="3" y="12.3" width="2.4" height="2.4" fill="#fff" stroke="#111" stroke-width="0.9"/><rect x="12.5" y="7.8" width="2.4" height="2.4" fill="#fff" stroke="#111" stroke-width="0.9"/><path d="M6.500 4.700h7M11.500 2.700l2 2-2 2M6.500 13.500h7M11.500 11.500l2 2-2 2M11 9H5M7 7L5 9l2 2" fill="none" stroke="#111" stroke-width="1.1" /><rect x=".5" y=".5" width="17" height="17" fill="none" stroke="#0a0a0a" stroke-width="1.100"/></svg>
<span class="t" style="left:1226.40px;top:820.04px;font-size:12px;line-height:16px;color:#f2f2f2;letter-spacing:-0.155px;">Cluster Force</span>
<svg style="left:1196.9px;top:838.3px;overflow:hidden" width="19" height="18.600" viewBox="0 0 18 18" preserveAspectRatio="none"><rect x=".5" y=".5" width="17" height="17" fill="#1e9cf0"/><path d="M7.3 3.8l1.300 2.800h.7v1.700h-4v-1.700h.7z" fill="#fff" stroke="#111" stroke-width="0.8" /><path d="M13.3 5.8l1.300 2.800h.7v1.700h-4v-1.700h.7z" fill="#fff" stroke="#111" stroke-width="0.8" /><path d="M4.3 9.8l1.300 2.800h.7v1.700h-4v-1.700h.7z" fill="#fff" stroke="#111" stroke-width="0.8" /><path d="M10 11.8l1.300 2.800h.7v1.700h-4v-1.700h.7z" fill="#fff" stroke="#111" stroke-width="0.8" /><circle cx="3" cy="3.7" r="0.8" fill="#fff" stroke="#111" stroke-width="0.7"/><circle cx="14.8" cy="13.8" r="0.8" fill="#fff" stroke="#111" stroke-width="0.7"/><rect x=".5" y=".5" width="17" height="17" fill="none" stroke="#0a0a0a" stroke-width="1.100"/></svg>
<span class="t" style="left:1226.40px;top:840.04px;font-size:12px;line-height:16px;color:#f2f2f2;letter-spacing:-0.161px;">Flock</span>
<svg style="left:1196.9px;top:858.3px;overflow:hidden" width="19" height="18.600" viewBox="0 0 18 18" preserveAspectRatio="none"><rect x=".5" y=".5" width="17" height="17" fill="#1e9cf0"/><circle cx="4" cy="9.5" r="1.5" fill="#fff" stroke="#111" stroke-width="1"/><circle cx="4" cy="14" r="1.5" fill="#fff" stroke="#111" stroke-width="1"/><circle cx="8.4" cy="14" r="1.5" fill="#fff" stroke="#111" stroke-width="1"/><rect x="9.7" y="2.4" width="2.5" height="2.5" fill="#fff" stroke="#111" stroke-width="1"/><rect x="13.5" y="2.4" width="2.5" height="2.5" fill="#fff" stroke="#111" stroke-width="1"/><rect x="13.5" y="6" width="2.5" height="2.5" fill="#fff" stroke="#111" stroke-width="1"/><path d="M12.300 6.200L7.600 10.900M7.300 7.400v3.800h3.800" fill="none" stroke="#111" stroke-width="1.2" /><rect x=".5" y=".5" width="17" height="17" fill="none" stroke="#0a0a0a" stroke-width="1.100"/></svg>
<span class="t" style="left:1226.40px;top:860.04px;font-size:12px;line-height:16px;color:#f2f2f2;letter-spacing:-0.171px;">Flow Update</span>
<svg style="left:1196.9px;top:878.3px;overflow:hidden" width="19" height="18.600" viewBox="0 0 18 18" preserveAspectRatio="none"><rect x=".5" y=".5" width="17" height="17" fill="#1e9cf0"/><path d="M4 4.500c0 3 3 2 3 4.500s-3 2.500-2 5c1 1.500 4 1 4.500-1s-1-2.500 0-4.500 3.500-1 3.500-4M2.500 6L4 3.500 6 5.500M11.500 5.500l2-2 1.700 2.300" fill="none" stroke="#111" stroke-width="1.1" /><rect x=".5" y=".5" width="17" height="17" fill="none" stroke="#0a0a0a" stroke-width="1.100"/></svg>
<span class="t" style="left:1226.40px;top:880.04px;font-size:12px;line-height:16px;color:#f2f2f2;letter-spacing:-0.153px;">Fluid Force</span>
<svg style="left:1196.9px;top:898.3px;overflow:hidden" width="19" height="18.600" viewBox="0 0 18 18" preserveAspectRatio="none"><rect x=".5" y=".5" width="17" height="17" fill="#1e9cf0"/><path d="M3 5.500l6-2.500 6 2.500-6 2.500z" fill="#7ccaff" stroke="#111" stroke-width="0.9" /><path d="M9 8v7.500M6.500 13l2.500 2.500 2.500-2.500" fill="none" stroke="#111" stroke-width="1.1" /><rect x=".5" y=".5" width="17" height="17" fill="none" stroke="#0a0a0a" stroke-width="1.100"/></svg>
<span class="t" style="left:1226.40px;top:900.04px;font-size:12px;line-height:16px;color:#f2f2f2;letter-spacing:-0.172px;">Force</span>
<svg style="left:1196.9px;top:918.3px;overflow:hidden" width="19" height="18.600" viewBox="0 0 18 18" preserveAspectRatio="none"><rect x=".5" y=".5" width="17" height="17" fill="#1e9cf0"/><path d="M3.500 5V3.500a1.800 1.800 0 0 1 3.600 0V5" fill="none" stroke="#111" stroke-width="1" /><rect x="2.500" y="5" width="5.600" height="4" fill="#ddd" stroke="#111" stroke-width=".9"/><path d="M4 15.500L9 9.500M9 15.500L15.500 4" fill="none" stroke="#111" stroke-width="1.1" /><circle cx="4.5" cy="14.5" r="1.1" fill="#fff" stroke="#111" stroke-width="0.9"/><circle cx="9.5" cy="14" r="1.1" fill="#fff" stroke="#111" stroke-width="0.9"/><circle cx="12" cy="10" r="1.1" fill="#fff" stroke="#111" stroke-width="0.9"/><rect x=".5" y=".5" width="17" height="17" fill="none" stroke="#0a0a0a" stroke-width="1.100"/></svg>
<span class="t" style="left:1226.40px;top:920.04px;font-size:12px;line-height:16px;color:#f2f2f2;letter-spacing:-0.154px;">Hair Bind</span>
<svg style="left:1196.9px;top:938.3px;overflow:hidden" width="19" height="18.600" viewBox="0 0 18 18" preserveAspectRatio="none"><rect x=".5" y=".5" width="17" height="17" fill="#1e9cf0"/><rect x="3" y="2.8" width="2.8" height="2.8" fill="#7ccaff" stroke="#111" stroke-width="0.9"/><rect x="11.500" y="11.500" width="4" height="4" fill="#fff" stroke="#111" stroke-width=".9"/><path d="M4.500 6.500v8M3 13l1.500 1.500L6 13" fill="none" stroke="#111" stroke-width="0.9" stroke-dasharray="1 1"/><path d="M7 4h4.500c1.500 0 2 .5 2 2v3.500M11.800 7.800l1.700 1.700 1.700-1.700" fill="none" stroke="#111" stroke-width="1.1" /><rect x=".5" y=".5" width="17" height="17" fill="none" stroke="#0a0a0a" stroke-width="1.100"/></svg>
<span class="t" style="left:1226.40px;top:940.04px;font-size:12px;line-height:16px;color:#f2f2f2;letter-spacing:-0.147px;">Integrate</span>
<svg style="left:1196.9px;top:958.3px;overflow:hidden" width="19" height="18.600" viewBox="0 0 18 18" preserveAspectRatio="none"><rect x=".5" y=".5" width="17" height="17" fill="#1e9cf0"/><path d="M1 1l16 16M17 1L1 17" stroke="#c06080" stroke-width="3" opacity=".55"/><path d="M9 2.500L6.500 5.500h5zM9 15.500l-2.500-3h5zM2.500 9l3-2.500v5zM15.500 9l-3-2.500v5zM9 5v8M5 9h8" fill="#111" stroke="#111" stroke-width="0.8" /><rect x="8" y="8" width="2" height="2" fill="#fff"/><rect x=".5" y=".5" width="17" height="17" fill="none" stroke="#0a0a0a" stroke-width="1.100"/></svg>
<span class="t" style="left:1226.40px;top:960.04px;font-size:12px;line-height:16px;color:#f2f2f2;letter-spacing:-0.144px;">Limiter</span>
<svg style="left:1346.9px;top:798.3px;overflow:hidden" width="19" height="18.600" viewBox="0 0 18 18" preserveAspectRatio="none"><rect x=".5" y=".5" width="17" height="17" fill="#1e9cf0"/><path d="M5 6.500h8l2 8H3z" fill="#7ccaff" stroke="#111" stroke-width="1" /><path d="M7 6.500V5a2 2 0 0 1 4 0v1.500" fill="none" stroke="#111" stroke-width="1.1" /><text x="9" y="13" font-family="Liberation Sans,sans-serif" font-size="5.500" font-weight="bold" text-anchor="middle" fill="#111">KG</text><rect x=".5" y=".5" width="17" height="17" fill="none" stroke="#0a0a0a" stroke-width="1.100"/></svg>
<span class="t" style="left:1376.40px;top:800.04px;font-size:12px;line-height:16px;color:#f2f2f2;letter-spacing:-0.201px;">Mass</span>
<svg style="left:1346.9px;top:818.3px;overflow:hidden" width="19" height="18.600" viewBox="0 0 18 18" preserveAspectRatio="none"><rect x=".5" y=".5" width="17" height="17" fill="#1e9cf0"/><path d="M1 17V12C3 7 6 5 9 5s6 2 8 7v5z" fill="#7ccaff"/><rect x="7.700" y="2.500" width="2.600" height="2.600" fill="#fff"/><path d="M7 10.500V9a2 2 0 0 1 4 0v1.500" fill="none" stroke="#111" stroke-width="1" /><rect x="6" y="10.500" width="6" height="4.500" fill="#ddd" stroke="#111" stroke-width=".9"/><rect x=".5" y=".5" width="17" height="17" fill="none" stroke="#0a0a0a" stroke-width="1.100"/></svg>
<span class="t" style="left:1376.40px;top:820.04px;font-size:12px;line-height:16px;color:#f2f2f2;letter-spacing:-0.158px;">Object Bind</span>
<svg style="left:1346.9px;top:838.3px;overflow:hidden" width="19" height="18.600" viewBox="0 0 18 18" preserveAspectRatio="none"><rect x=".5" y=".5" width="17" height="17" fill="#1e9cf0"/><path d="M3 15L15 3M11.500 3H15v3.500" fill="none" stroke="#111" stroke-width="1" /><circle cx="5" cy="4.5" r="0.9" fill="#fff" stroke="#111" stroke-width="0.6"/><circle cx="9" cy="3.5" r="0.9" fill="#fff" stroke="#111" stroke-width="0.6"/><circle cx="4" cy="9" r="0.9" fill="#fff" stroke="#111" stroke-width="0.6"/><circle cx="14" cy="9" r="0.9" fill="#fff" stroke="#111" stroke-width="0.6"/><circle cx="9" cy="14.5" r="0.9" fill="#fff" stroke="#111" stroke-width="0.6"/><circle cx="13" cy="13.5" r="0.9" fill="#fff" stroke="#111" stroke-width="0.6"/><circle cx="5" cy="13" r="0.9" fill="#fff" stroke="#111" stroke-width="0.6"/><rect x="7.500" y="7.500" width="3.200" height="3.200" fill="#fff" stroke="#111" stroke-width=".8"/><rect x=".5" y=".5" width="17" height="17" fill="none" stroke="#0a0a0a" stroke-width="1.100"/></svg>
<span class="t" style="left:1376.40px;top:840.04px;font-size:12px;line-height:16px;color:#f2f2f2;letter-spacing:-0.148px;">Particle Force</span>
<svg style="left:1346.9px;top:858.3px;overflow:hidden" width="19" height="18.600" viewBox="0 0 18 18" preserveAspectRatio="none"><rect x=".5" y=".5" width="17" height="17" fill="#1e9cf0"/><rect x="2" y="2" width="9" height="6.500" fill="#7ccaff" opacity=".6"/><rect x="6.500" y="9.500" width="9.500" height="6.500" fill="#7ccaff" opacity=".6"/><circle cx="4" cy="4" r="0.8" fill="#bfe6ff" stroke="#111" stroke-width="0.5"/><circle cx="7" cy="4" r="0.8" fill="#bfe6ff" stroke="#111" stroke-width="0.5"/><circle cx="9.5" cy="4.5" r="0.8" fill="#bfe6ff" stroke="#111" stroke-width="0.5"/><circle cx="5" cy="6.5" r="0.8" fill="#bfe6ff" stroke="#111" stroke-width="0.5"/><circle cx="8.5" cy="12" r="0.8" fill="#bfe6ff" stroke="#111" stroke-width="0.5"/><circle cx="11.5" cy="12" r="0.8" fill="#bfe6ff" stroke="#111" stroke-width="0.5"/><circle cx="14" cy="12" r="0.8" fill="#bfe6ff" stroke="#111" stroke-width="0.5"/><circle cx="10" cy="14.5" r="0.8" fill="#bfe6ff" stroke="#111" stroke-width="0.5"/><circle cx="13" cy="14.5" r="0.8" fill="#bfe6ff" stroke="#111" stroke-width="0.5"/><rect x=".5" y=".5" width="17" height="17" fill="none" stroke="#0a0a0a" stroke-width="1.100"/></svg>
<span class="t" style="left:1376.40px;top:860.04px;font-size:12px;line-height:16px;color:#f2f2f2;letter-spacing:-0.154px;">Particle Groups</span>
<svg style="left:1346.9px;top:878.3px;overflow:hidden" width="19" height="18.600" viewBox="0 0 18 18" preserveAspectRatio="none"><rect x=".5" y=".5" width="17" height="17" fill="#1e9cf0"/><path d="M4 4h7.500c3 0 3 4 0 4h-4c-3 0-3 4 0 4H14M11.500 9.500L14.500 12.200 11.500 15" fill="none" stroke="#111" stroke-width="1.3" /><rect x=".5" y=".5" width="17" height="17" fill="none" stroke="#0a0a0a" stroke-width="1.100"/></svg>
<span class="t" style="left:1376.40px;top:880.04px;font-size:12px;line-height:16px;color:#f2f2f2;letter-spacing:-0.160px;">Path Follow</span>
<svg style="left:1346.9px;top:898.3px;overflow:hidden" width="19" height="18.600" viewBox="0 0 18 18" preserveAspectRatio="none"><rect x=".5" y=".5" width="17" height="17" fill="#1e9cf0"/><circle cx="6" cy="6" r="2.8" fill="#7ccaff" stroke="#111" stroke-width="1"/><circle cx="6" cy="6" r="1" fill="#fff" stroke="#111" stroke-width="0.7"/><path d="M9 9l6 6" stroke="#dff" stroke-width="1.200" stroke-dasharray="1.200 1.200"/><rect x=".5" y=".5" width="17" height="17" fill="none" stroke="#0a0a0a" stroke-width="1.100"/></svg>
<span class="t" style="left:1376.40px;top:900.04px;font-size:12px;line-height:16px;color:#f2f2f2;letter-spacing:-0.156px;">Point Force</span>
<svg style="left:1346.9px;top:918.3px;overflow:hidden" width="19" height="18.600" viewBox="0 0 18 18" preserveAspectRatio="none"><rect x=".5" y=".5" width="17" height="17" fill="#1e9cf0"/><rect x="1" y="11.5" width="2.700" height="2.700" fill="#bfe6ff"/><rect x="6.4" y="11.5" width="2.700" height="2.700" fill="#bfe6ff"/><rect x="11.8" y="11.5" width="2.700" height="2.700" fill="#bfe6ff"/><rect x="3.7" y="14.2" width="2.700" height="2.700" fill="#bfe6ff"/><rect x="9.1" y="14.2" width="2.700" height="2.700" fill="#bfe6ff"/><rect x="14.5" y="14.2" width="2.700" height="2.700" fill="#bfe6ff"/><path d="M1 11h16" fill="none" stroke="#111" stroke-width="0.8" stroke-dasharray="1 1"/><circle cx="3.5" cy="4" r="1" fill="#fff" stroke="#111" stroke-width="0.7"/><path d="M3.5 5.5v3" fill="none" stroke="#111" stroke-width="0.7" stroke-dasharray="1 .8"/><circle cx="8" cy="3" r="1" fill="#fff" stroke="#111" stroke-width="0.7"/><path d="M8 4.5v3" fill="none" stroke="#111" stroke-width="0.7" stroke-dasharray="1 .8"/><circle cx="12.5" cy="4.5" r="1" fill="#fff" stroke="#111" stroke-width="0.7"/><path d="M12.5 6.0v3" fill="none" stroke="#111" stroke-width="0.7" stroke-dasharray="1 .8"/><circle cx="15.5" cy="3" r="1" fill="#fff" stroke="#111" stroke-width="0.7"/><path d="M15.5 4.5v3" fill="none" stroke="#111" stroke-width="0.7" stroke-dasharray="1 .8"/><rect x=".5" y=".5" width="17" height="17" fill="none" stroke="#0a0a0a" stroke-width="1.100"/></svg>
<span class="t" style="left:1376.40px;top:920.04px;font-size:12px;line-height:16px;color:#f2f2f2;letter-spacing:-0.152px;">Position Displace</span>
<svg style="left:1346.9px;top:938.3px;overflow:hidden" width="19" height="18.600" viewBox="0 0 18 18" preserveAspectRatio="none"><rect x=".5" y=".5" width="17" height="17" fill="#1e9cf0"/><path d="M3 16c0-5 2-8 1-13M7 16c0-4 3-7 3-12M11 16c0-4-2-6-1-9M15 16c0-5-2-8 0-13M5 16v-4M13 16v-3" fill="none" stroke="#111" stroke-width="0.9" /><circle cx="5.5" cy="8" r="1.3" fill="#fff" stroke="#111" stroke-width="0.9"/><circle cx="10" cy="5.5" r="1.3" fill="#fff" stroke="#111" stroke-width="0.9"/><circle cx="9" cy="11" r="1.3" fill="#fff" stroke="#111" stroke-width="0.9"/><circle cx="13.5" cy="9.5" r="1.3" fill="#fff" stroke="#111" stroke-width="0.9"/><circle cx="4" cy="13.5" r="1.3" fill="#fff" stroke="#111" stroke-width="0.9"/><rect x=".5" y=".5" width="17" height="17" fill="none" stroke="#0a0a0a" stroke-width="1.100"/></svg>
<span class="t" style="left:1376.40px;top:940.04px;font-size:12px;line-height:16px;color:#f2f2f2;letter-spacing:-0.147px;">Position Hair</span>
<svg style="left:1346.9px;top:958.3px;overflow:hidden" width="19" height="18.600" viewBox="0 0 18 18" preserveAspectRatio="none"><rect x=".5" y=".5" width="17" height="17" fill="#1e9cf0"/><path d="M4 4h10v10H4z" fill="none" stroke="#111" stroke-width="1" /><rect x="2.7" y="2.7" width="2.4" height="2.4" fill="#fff" stroke="#111" stroke-width="0.9"/><rect x="12.9" y="2.7" width="2.4" height="2.4" fill="#fff" stroke="#111" stroke-width="0.9"/><rect x="2.7" y="12.9" width="2.4" height="2.4" fill="#fff" stroke="#111" stroke-width="0.9"/><rect x="12.9" y="12.9" width="2.4" height="2.4" fill="#fff" stroke="#111" stroke-width="0.9"/><rect x="6.300" y="6.300" width="5.400" height="5.400" rx="1" fill="#7ccaff" stroke="#111" stroke-width=".9"/><rect x="8" y="8" width="2" height="2" fill="#fff" stroke="#111" stroke-width="0.9"/><rect x=".5" y=".5" width="17" height="17" fill="none" stroke="#0a0a0a" stroke-width="1.100"/></svg>
<span class="t" style="left:1376.40px;top:960.04px;font-size:12px;line-height:16px;color:#f2f2f2;letter-spacing:-0.148px;">Position Icon</span>
<svg style="left:1496.9px;top:798.3px;overflow:hidden" width="19" height="18.600" viewBox="0 0 18 18" preserveAspectRatio="none"><rect x=".5" y=".5" width="17" height="17" fill="#1e9cf0"/><rect x="4" y="4.500" width="10" height="10" rx="2.500" fill="#ccc" stroke="#111" stroke-width="1"/><path d="M3 13V3h11" fill="none" stroke="#111" stroke-width="0.9" /><rect x="2" y="2" width="2" height="2" fill="#fff" stroke="#111" stroke-width="0.9"/><rect x="13" y="2" width="2" height="2" fill="#fff" stroke="#111" stroke-width="0.9"/><rect x="2" y="13" width="2" height="2" fill="#fff" stroke="#111" stroke-width="0.9"/><rect x="14" y="13" width="2" height="2" fill="#fff" stroke="#111" stroke-width="0.9"/><rect x=".5" y=".5" width="17" height="17" fill="none" stroke="#0a0a0a" stroke-width="1.100"/></svg>
<span class="t" style="left:1526.40px;top:800.04px;font-size:12px;line-height:16px;color:#f2f2f2;letter-spacing:-0.151px;">Position Object</span>
<svg style="left:1496.9px;top:818.3px;overflow:hidden" width="19" height="18.600" viewBox="0 0 18 18" preserveAspectRatio="none"><rect x=".5" y=".5" width="17" height="17" fill="#1e9cf0"/><path d="M1 17v-2c3-4 13-4 16 0v2z" fill="#7ccaff"/><path d="M3 3l4 4M4 7h3V4M15 3l-4 4M14 7h-3V4M9.500 2L6 9M15 8l-3 3" fill="none" stroke="#111" stroke-width="0.9" /><circle cx="9" cy="12" r="1.8" fill="#fff" stroke="#111" stroke-width="0.8"/><rect x=".5" y=".5" width="17" height="17" fill="none" stroke="#0a0a0a" stroke-width="1.100"/></svg>
<span class="t" style="left:1526.40px;top:820.04px;font-size:12px;line-height:16px;color:#f2f2f2;letter-spacing:-0.156px;">Position Raycast</span>
<svg style="left:1496.9px;top:838.3px;overflow:hidden" width="19" height="18.600" viewBox="0 0 18 18" preserveAspectRatio="none"><rect x=".5" y=".5" width="17" height="17" fill="#1e9cf0"/><path d="M17 5v12H5z" fill="#40d8a0"/><path d="M1 17L17 1" fill="none" stroke="#111" stroke-width="1.3" /><rect x="3" y="3" width="2.6" height="2.6" fill="#7ccaff" stroke="#111" stroke-width="0.9"/><rect x="11.5" y="11.5" width="2.6" height="2.6" fill="#fff" stroke="#111" stroke-width="0.9"/><path d="M5.500 5.500l5 5M10.500 7.500v3h-3" fill="none" stroke="#111" stroke-width="0.9" /><rect x=".5" y=".5" width="17" height="17" fill="none" stroke="#0a0a0a" stroke-width="1.100"/></svg>
<span class="t" style="left:1526.40px;top:840.04px;font-size:12px;line-height:16px;color:#f2f2f2;letter-spacing:-0.148px;">Position Transfer</span>
<svg style="left:1496.9px;top:858.3px;overflow:hidden" width="19" height="18.600" viewBox="0 0 18 18" preserveAspectRatio="none"><rect x=".5" y=".5" width="17" height="17" fill="#1e9cf0"/><rect x="5.500" y="2.500" width="7" height="6.500" fill="#fff" stroke="#111" stroke-width="1"/><rect x="7" y="2.500" width="4" height="2.300" fill="#111"/><rect x="7.200" y="6.200" width="3.600" height="1.500" fill="#111"/><text x="9" y="16" font-family="Liberation Sans,sans-serif" font-size="6.500" font-weight="bold" text-anchor="middle" fill="#111">PRT</text><rect x=".5" y=".5" width="17" height="17" fill="none" stroke="#0a0a0a" stroke-width="1.100"/></svg>
<span class="t" style="left:1526.40px;top:860.04px;font-size:12px;line-height:16px;color:#f2f2f2;letter-spacing:-0.184px;">PRT Update</span>
<svg style="left:1496.9px;top:878.3px;overflow:hidden" width="19" height="18.600" viewBox="0 0 18 18" preserveAspectRatio="none"><rect x=".5" y=".5" width="17" height="17" fill="#1e9cf0"/><path d="M1 17c1-5 5-7 8-7s7 2 8 7z" fill="#7ccaff"/><path d="M9 15V4M6.500 7L9 4l2.500 3M1 17c1-5 5-7 8-7s7 2 8 7" fill="none" stroke="#111" stroke-width="0.9" /><circle cx="9" cy="2.5" r="0.8" fill="#fff" stroke="#111" stroke-width="0.6"/><rect x=".5" y=".5" width="17" height="17" fill="none" stroke="#0a0a0a" stroke-width="1.100"/></svg>
<span class="t" style="left:1526.40px;top:880.04px;font-size:12px;line-height:16px;color:#f2f2f2;letter-spacing:-0.161px;">Push In/Out</span>
<svg style="left:1496.9px;top:898.3px;overflow:hidden" width="19" height="18.600" viewBox="0 0 18 18" preserveAspectRatio="none"><rect x=".5" y=".5" width="17" height="17" fill="#1e9cf0"/><path d="M4 2v14M9 2v14M14 2v14M2 4h14M2 9h14M2 14h14" fill="none" stroke="#111" stroke-width="0.8" stroke-dasharray="1.200 1"/><rect x="2.9" y="2.9" width="2.2" height="2.2" fill="#dff" stroke="#111" stroke-width="0.7"/><rect x="2.9" y="7.9" width="2.2" height="2.2" fill="#dff" stroke="#111" stroke-width="0.7"/><rect x="2.9" y="12.9" width="2.2" height="2.2" fill="#dff" stroke="#111" stroke-width="0.7"/><rect x="7.9" y="2.9" width="2.2" height="2.2" fill="#dff" stroke="#111" stroke-width="0.7"/><rect x="7.9" y="7.9" width="2.2" height="2.2" fill="#dff" stroke="#111" stroke-width="0.7"/><rect x="7.9" y="12.9" width="2.2" height="2.2" fill="#dff" stroke="#111" stroke-width="0.7"/><rect x="12.9" y="2.9" width="2.2" height="2.2" fill="#dff" stroke="#111" stroke-width="0.7"/><rect x="12.9" y="7.9" width="2.2" height="2.2" fill="#dff" stroke="#111" stroke-width="0.7"/><rect x="12.9" y="12.9" width="2.2" height="2.2" fill="#dff" stroke="#111" stroke-width="0.7"/><rect x=".5" y=".5" width="17" height="17" fill="none" stroke="#0a0a0a" stroke-width="1.100"/></svg>
<span class="t" style="left:1526.40px;top:900.04px;font-size:12px;line-height:16px;color:#f2f2f2;letter-spacing:-0.158px;">Rasterize</span>
<svg style="left:1496.9px;top:918.3px;overflow:hidden" width="19" height="18.600" viewBox="0 0 18 18" preserveAspectRatio="none"><rect x=".5" y=".5" width="17" height="17" fill="#1e9cf0"/><path d="M3.500 8A5.600 5.600 0 0 1 14 6M14.500 10A5.600 5.600 0 0 1 4 12M14.500 3v3.500H11M3.500 15v-3.500H7" fill="none" stroke="#111" stroke-width="1.1" /><circle cx="9" cy="9" r="1.7" fill="#fff" stroke="#111" stroke-width="0.8"/><rect x=".5" y=".5" width="17" height="17" fill="none" stroke="#0a0a0a" stroke-width="1.100"/></svg>
<span class="t" style="left:1526.40px;top:920.04px;font-size:12px;line-height:16px;color:#f2f2f2;letter-spacing:-0.156px;">Rotation</span>
<svg style="left:1496.9px;top:938.3px;overflow:hidden" width="19" height="18.600" viewBox="0 0 18 18" preserveAspectRatio="none"><rect x=".5" y=".5" width="17" height="17" fill="#1e9cf0"/><rect x="2.500" y="2.500" width="13" height="13" fill="#7ccaff" stroke="#111" stroke-width="1"/><rect x="3" y="10" width="5" height="5" fill="#fff" stroke="#111" stroke-width=".9"/><path d="M8.500 9.500L13.500 4.500M10 4.500h3.500V8" fill="none" stroke="#111" stroke-width="1.2" /><rect x=".5" y=".5" width="17" height="17" fill="none" stroke="#0a0a0a" stroke-width="1.100"/></svg>
<span class="t" style="left:1526.40px;top:940.04px;font-size:12px;line-height:16px;color:#f2f2f2;letter-spacing:-0.168px;">Scale</span>
<svg style="left:1496.9px;top:958.3px;overflow:hidden" width="19" height="18.600" viewBox="0 0 18 18" preserveAspectRatio="none"><rect x=".5" y=".5" width="17" height="17" fill="#1e9cf0"/><circle cx="6.500" cy="12" r="4" fill="#f0c030" stroke="#111" stroke-width=".9"/><path d="M6.500 12a1.500 1.500 0 1 1 1.500 1.500" fill="none" stroke="#111" stroke-width="0.8" /><path d="M3 16h11c1.500-1 1-3 1-5.500 0-1.500-1-2-2-2s-2 .5-2 2V13" fill="#60c040" stroke="#111" stroke-width=".9"/><path d="M12 8.500L11 5.500M14 8.500l1-3" fill="none" stroke="#111" stroke-width="0.8" /><rect x=".5" y=".5" width="17" height="17" fill="none" stroke="#0a0a0a" stroke-width="1.100"/></svg>
<span class="t" style="left:1526.40px;top:960.04px;font-size:12px;line-height:16px;color:#f2f2f2;letter-spacing:-0.182px;">Slow</span>
<svg style="left:1646.9px;top:798.3px;overflow:hidden" width="19" height="18.600" viewBox="0 0 18 18" preserveAspectRatio="none"><rect x=".5" y=".5" width="17" height="17" fill="#1e9cf0"/><path d="M2.500 2.500l13 13M11.500 15.500h4v-4" fill="none" stroke="#111" stroke-width="1.8" /><path d="M3 10l3 3M6 10.500V13H3.500M10 3l3 3M13 3.500V6h-2.500" fill="none" stroke="#111" stroke-width="0.9" /><rect x="7.200" y="6.200" width="3.400" height="3.400" fill="#fff" stroke="#111" stroke-width=".8"/><rect x=".5" y=".5" width="17" height="17" fill="none" stroke="#0a0a0a" stroke-width="1.100"/></svg>
<span class="t" style="left:1676.40px;top:800.04px;font-size:12px;line-height:16px;color:#f2f2f2;letter-spacing:-0.194px;">Speed</span>
<svg style="left:1646.9px;top:818.3px;overflow:hidden" width="19" height="18.600" viewBox="0 0 18 18" preserveAspectRatio="none"><rect x=".5" y=".5" width="17" height="17" fill="#1e9cf0"/><rect x="1" y="8" width="5" height="2" fill="#bfe6ff"/><path d="M13.500 5A5.500 5.500 0 1 0 14.500 9M14.800 3v3h-3" fill="none" stroke="#111" stroke-width="1.1" /><circle cx="9" cy="9" r="1.7" fill="#fff" stroke="#111" stroke-width="0.8"/><rect x=".5" y=".5" width="17" height="17" fill="none" stroke="#0a0a0a" stroke-width="1.100"/></svg>
<span class="t" style="left:1676.40px;top:820.04px;font-size:12px;line-height:16px;color:#f2f2f2;letter-spacing:-0.168px;">Spin</span>
<svg style="left:1646.9px;top:838.3px;overflow:hidden" width="19" height="18.600" viewBox="0 0 18 18" preserveAspectRatio="none"><rect x=".5" y=".5" width="17" height="17" fill="#1e9cf0"/><rect x="2.9" y="2.9" width="2.2" height="2.2" fill="#dff" stroke="#111" stroke-width="0.7"/><rect x="7.9" y="2.4" width="2.2" height="2.2" fill="#dff" stroke="#111" stroke-width="0.7"/><rect x="12.9" y="2.9" width="2.2" height="2.2" fill="#dff" stroke="#111" stroke-width="0.7"/><rect x="2.4" y="7.9" width="2.2" height="2.2" fill="#dff" stroke="#111" stroke-width="0.7"/><rect x="13.4" y="7.9" width="2.2" height="2.2" fill="#dff" stroke="#111" stroke-width="0.7"/><rect x="2.9" y="12.9" width="2.2" height="2.2" fill="#dff" stroke="#111" stroke-width="0.7"/><rect x="7.9" y="13.4" width="2.2" height="2.2" fill="#dff" stroke="#111" stroke-width="0.7"/><rect x="12.9" y="12.9" width="2.2" height="2.2" fill="#dff" stroke="#111" stroke-width="0.7"/><rect x="7.300" y="7.300" width="3.400" height="3.400" fill="#fff"/><rect x=".5" y=".5" width="17" height="17" fill="none" stroke="#0a0a0a" stroke-width="1.100"/></svg>
<span class="t" style="left:1676.40px;top:840.04px;font-size:12px;line-height:16px;color:#f2f2f2;letter-spacing:-0.181px;">Spread</span>
<svg style="left:1646.9px;top:858.3px;overflow:hidden" width="19" height="18.600" viewBox="0 0 18 18" preserveAspectRatio="none"><rect x=".5" y=".5" width="17" height="17" fill="#1e9cf0"/><path d="M6 2.500h6l3.500 3.500v6L12 15.500H6L2.500 12V6z" fill="#e85050" stroke="#a02020" stroke-width=".8"/><text x="9" y="11.200" font-family="Liberation Sans,sans-serif" font-size="5.800" font-weight="bold" text-anchor="middle" fill="#fff">STOP</text><rect x=".5" y=".5" width="17" height="17" fill="none" stroke="#0a0a0a" stroke-width="1.100"/></svg>
<span class="t" style="left:1676.40px;top:860.04px;font-size:12px;line-height:16px;color:#f2f2f2;letter-spacing:-0.173px;">Stop</span>
<svg style="left:1646.9px;top:878.3px;overflow:hidden" width="19" height="18.600" viewBox="0 0 18 18" preserveAspectRatio="none"><rect x=".5" y=".5" width="17" height="17" fill="#1e9cf0"/><path d="M1 17c0-5 4-8 8-8s8 3 8 8z" fill="#7ccaff"/><path d="M3 7c2-3 10-3 12 0M13 4.500L15 7l-3 .5" fill="none" stroke="#111" stroke-width="1" /><rect x="7.500" y="2.800" width="3" height="3" fill="#fff"/><rect x=".5" y=".5" width="17" height="17" fill="none" stroke="#0a0a0a" stroke-width="1.100"/></svg>
<span class="t" style="left:1676.40px;top:880.04px;font-size:12px;line-height:16px;color:#f2f2f2;letter-spacing:-0.162px;">Surface Force</span>
<svg style="left:1646.9px;top:898.3px;overflow:hidden" width="19" height="18.600" viewBox="0 0 18 18" preserveAspectRatio="none"><rect x=".5" y=".5" width="17" height="17" fill="#1e9cf0"/><rect x="1" y="9.500" width="16" height="4" fill="#111"/><rect x="1" y="10.500" width="16" height="2" fill="#7ccaff"/><path d="M3 9c1-3 3-4 6-4s5 1 6 4" fill="none" stroke="#111" stroke-width="0.9" /><circle cx="3.5" cy="8" r="1.1" fill="#fff" stroke="#111" stroke-width="0.9"/><circle cx="9" cy="4.5" r="1.1" fill="#fff" stroke="#111" stroke-width="0.9"/><circle cx="14.5" cy="8" r="1.1" fill="#fff" stroke="#111" stroke-width="0.9"/><circle cx="9" cy="11.500" r="3.300" fill="#dde8ff" stroke="#111" stroke-width=".9"/><path d="M9 9.500v2h1.700" fill="none" stroke="#111" stroke-width="0.9" /><rect x=".5" y=".5" width="17" height="17" fill="none" stroke="#0a0a0a" stroke-width="1.100"/></svg>
<span class="t" style="left:1676.40px;top:900.04px;font-size:12px;line-height:16px;color:#f2f2f2;letter-spacing:-0.176px;">Temporal Smooth</span>
<svg style="left:1646.9px;top:918.3px;overflow:hidden" width="19" height="18.600" viewBox="0 0 18 18" preserveAspectRatio="none"><rect x=".5" y=".5" width="17" height="17" fill="#1e9cf0"/><circle cx="7.500" cy="11" r="5" fill="#80e0b0" stroke="#111" stroke-width="1"/><circle cx="7.5" cy="11" r="1.7" fill="#dff" stroke="#111" stroke-width="0.8"/><path d="M9 9.500L15 3.500M11.500 3.500H15V7" fill="none" stroke="#111" stroke-width="1.2" /><rect x=".5" y=".5" width="17" height="17" fill="none" stroke="#0a0a0a" stroke-width="1.100"/></svg>
<span class="t" style="left:1676.40px;top:920.04px;font-size:12px;line-height:16px;color:#f2f2f2;letter-spacing:-0.183px;">VDB Force</span>
<svg style="left:1646.9px;top:938.3px;overflow:hidden" width="19" height="18.600" viewBox="0 0 18 18" preserveAspectRatio="none"><rect x=".5" y=".5" width="17" height="17" fill="#5fdc8a"/><path d="M1 1l8 8 8-8zM1 17l8-8 8 8z" fill="#9ff0b8"/><path d="M1 1l16 16M17 1L1 17" fill="none" stroke="#111" stroke-width="0.8" /><rect x="4.9" y="2.4" width="2.2" height="2.2" fill="#dff" stroke="#111" stroke-width="0.7"/><rect x="10.9" y="2.4" width="2.2" height="2.2" fill="#dff" stroke="#111" stroke-width="0.7"/><rect x="2.4" y="7.9" width="2.2" height="2.2" fill="#dff" stroke="#111" stroke-width="0.7"/><rect x="7.9" y="7.9" width="2.2" height="2.2" fill="#dff" stroke="#111" stroke-width="0.7"/><rect x="13.4" y="7.9" width="2.2" height="2.2" fill="#dff" stroke="#111" stroke-width="0.7"/><rect x="4.9" y="13.4" width="2.2" height="2.2" fill="#dff" stroke="#111" stroke-width="0.7"/><rect x="10.9" y="13.4" width="2.2" height="2.2" fill="#dff" stroke="#111" stroke-width="0.7"/><rect x=".5" y=".5" width="17" height="17" fill="none" stroke="#0a0a0a" stroke-width="1.100"/></svg>
<span class="t" style="left:1676.40px;top:940.04px;font-size:12px;line-height:16px;color:#f2f2f2;letter-spacing:-0.152px;">Cluster</span>
<svg style="left:1646.9px;top:958.3px;overflow:hidden" width="19" height="18.600" viewBox="0 0 18 18" preserveAspectRatio="none"><rect x=".5" y=".5" width="17" height="17" fill="#4fd0d0"/><text x="9" y="5.800" font-family="Liberation Sans,sans-serif" font-size="5.200" font-weight="bold" text-anchor="middle" fill="#111" letter-spacing=".8">XYZ</text><path d="M5 7v5M9 7v5M13 7v5" fill="none" stroke="#111" stroke-width="0.8" stroke-dasharray="1 1"/><rect x="3" y="12.500" width="12" height="2.500" fill="#7ff09a" stroke="#111" stroke-width=".8"/><rect x="5.500" y="15" width="7" height="2" fill="#7ff09a" stroke="#111" stroke-width=".7"/><rect x=".5" y=".5" width="17" height="17" fill="none" stroke="#0a0a0a" stroke-width="1.100"/></svg>
<span class="t" style="left:1676.40px;top:960.04px;font-size:12px;line-height:16px;color:#f2f2f2;letter-spacing:-0.164px;">Custom Properties</span>
<div style="left:1186px;top:980px;width:607px;height:17px;background:#f0f0f0;"></div>
<div style="left:1275px;top:981px;width:142.5px;height:15.5px;background:#cdcdcd;"></div>
<svg style="left:1186px;top:980px" width="608" height="17" viewBox="0 0 608 17"><path d="M9.500 4.500L5.500 8.500l4 4M598.500 4.500l4 4-4 4" fill="none" stroke="#505050" stroke-width="1.800"/></svg>
<div style="left:1794px;top:7px;width:248px;height:18.5px;background:#515151;border-radius:3px"></div>
<svg style="left:1800.5px;top:12.8px" width="5" height="7" viewBox="0 0 5 7"><path d="M.3 .2v6.600L4.700 3.500z" fill="#b4b4b4"/></svg>
<span class="t" style="left:1812.70px;top:9.79px;font-size:11px;line-height:14px;color:#ffffff;letter-spacing:0.213px;font-weight:bold;">Filters</span>
<svg style="left:2029.0px;top:13.3px" width="5" height="5" viewBox="0 0 5 5"><rect x="0" y="0" width="1" height="1" fill="#8a8a8a"/><rect x="0" y="2" width="1" height="1" fill="#8a8a8a"/><rect x="0" y="4" width="1" height="1" fill="#8a8a8a"/><rect x="2" y="0" width="1" height="1" fill="#8a8a8a"/><rect x="2" y="2" width="1" height="1" fill="#8a8a8a"/><rect x="2" y="4" width="1" height="1" fill="#8a8a8a"/><rect x="4" y="0" width="1" height="1" fill="#8a8a8a"/><rect x="4" y="2" width="1" height="1" fill="#8a8a8a"/><rect x="4" y="4" width="1" height="1" fill="#8a8a8a"/></svg>
<div style="left:1794px;top:29px;width:248px;height:18.5px;background:#515151;border-radius:3px"></div>
<svg style="left:1800.5px;top:34.8px" width="5" height="7" viewBox="0 0 5 7"><path d="M.3 .2v6.600L4.700 3.500z" fill="#b4b4b4"/></svg>
<span class="t" style="left:1812.70px;top:31.79px;font-size:11px;line-height:14px;color:#ffffff;letter-spacing:0.275px;font-weight:bold;">Timing</span>
<svg style="left:2029.0px;top:35.3px" width="5" height="5" viewBox="0 0 5 5"><rect x="0" y="0" width="1" height="1" fill="#8a8a8a"/><rect x="0" y="2" width="1" height="1" fill="#8a8a8a"/><rect x="0" y="4" width="1" height="1" fill="#8a8a8a"/><rect x="2" y="0" width="1" height="1" fill="#8a8a8a"/><rect x="2" y="2" width="1" height="1" fill="#8a8a8a"/><rect x="2" y="4" width="1" height="1" fill="#8a8a8a"/><rect x="4" y="0" width="1" height="1" fill="#8a8a8a"/><rect x="4" y="2" width="1" height="1" fill="#8a8a8a"/><rect x="4" y="4" width="1" height="1" fill="#8a8a8a"/></svg>
<div style="left:1794px;top:51px;width:248px;height:88.5px;background:#515151;border-radius:3px"></div>
<svg style="left:1799.5px;top:57.8px" width="7" height="5" viewBox="0 0 7 5"><path d="M.2 .3h6.600L3.500 4.700z" fill="#b4b4b4"/></svg>
<span class="t" style="left:1812.70px;top:53.79px;font-size:11px;line-height:14px;color:#ffffff;letter-spacing:0.546px;font-weight:bold;">Types</span>
<svg style="left:2029.0px;top:57.3px" width="5" height="5" viewBox="0 0 5 5"><rect x="0" y="0" width="1" height="1" fill="#8a8a8a"/><rect x="0" y="2" width="1" height="1" fill="#8a8a8a"/><rect x="0" y="4" width="1" height="1" fill="#8a8a8a"/><rect x="2" y="0" width="1" height="1" fill="#8a8a8a"/><rect x="2" y="2" width="1" height="1" fill="#8a8a8a"/><rect x="2" y="4" width="1" height="1" fill="#8a8a8a"/><rect x="4" y="0" width="1" height="1" fill="#8a8a8a"/><rect x="4" y="2" width="1" height="1" fill="#8a8a8a"/><rect x="4" y="4" width="1" height="1" fill="#8a8a8a"/></svg>
<div style="left:1798.5px;top:79.5px;width:238.5px;height:55px;box-sizing:border-box;border:1px solid #3a3a3a;border-radius:3px;box-shadow:inset 0 0 0 .5px #4a4a4a"></div>
<div style="left:1801.0px;top:77.5px;width:64.8px;height:5px;background:#515151"></div>
<span class="t" style="left:1803.50px;top:72.99px;font-size:11px;line-height:14px;color:#ebebeb;letter-spacing:-0.162px;">Physics type</span>
<div style="left:1808px;top:92.3px;width:10px;height:10px;background:#6b6b6b"><svg style="left:0;top:0" width="10" height="10" viewBox="0 0 10 10"><path d="M1.300 4.800L3.700 7.600 8.800 1.500" fill="none" stroke="#f0f0f0" stroke-width="1.900"/></svg></div>
<span class="t" style="left:1820.50px;top:90.99px;font-size:11px;line-height:14px;color:#ebebeb;letter-spacing:-0.252px;">Enable particle collisions</span>
<div style="left:1808px;top:112.2px;width:10px;height:10px;background:#6b6b6b"></div>
<span class="t" style="left:1820.50px;top:110.89px;font-size:11px;line-height:14px;color:#ebebeb;letter-spacing:-0.062px;">Enable particle attractions</span>
<div style="left:1794px;top:144px;width:248px;height:353px;background:#515151;border-radius:3px"></div>
<svg style="left:1799.5px;top:150.8px" width="7" height="5" viewBox="0 0 7 5"><path d="M.2 .3h6.600L3.500 4.700z" fill="#b4b4b4"/></svg>
<span class="t" style="left:1812.70px;top:146.79px;font-size:11px;line-height:14px;color:#ffffff;letter-spacing:-0.052px;font-weight:bold;">Collide</span>
<svg style="left:2029.0px;top:150.3px" width="5" height="5" viewBox="0 0 5 5"><rect x="0" y="0" width="1" height="1" fill="#8a8a8a"/><rect x="0" y="2" width="1" height="1" fill="#8a8a8a"/><rect x="0" y="4" width="1" height="1" fill="#8a8a8a"/><rect x="2" y="0" width="1" height="1" fill="#8a8a8a"/><rect x="2" y="2" width="1" height="1" fill="#8a8a8a"/><rect x="2" y="4" width="1" height="1" fill="#8a8a8a"/><rect x="4" y="0" width="1" height="1" fill="#8a8a8a"/><rect x="4" y="2" width="1" height="1" fill="#8a8a8a"/><rect x="4" y="4" width="1" height="1" fill="#8a8a8a"/></svg>
<div style="left:1798.5px;top:173px;width:238.5px;height:143.5px;box-sizing:border-box;border:1px solid #3a3a3a;border-radius:3px;box-shadow:inset 0 0 0 .5px #4a4a4a"></div>
<div style="left:1801.0px;top:171px;width:67.8px;height:5px;background:#515151"></div>
<span class="t" style="left:1803.50px;top:166.49px;font-size:11px;line-height:14px;color:#ebebeb;letter-spacing:-0.274px;">Collide radius</span>
<div style="left:1807.5px;top:183px;width:220px;height:20.5px;background:#656565;border-radius:2px"></div>
<span class="t" style="left:1812.50px;top:187.04px;font-size:11px;line-height:14px;color:#ebebeb;letter-spacing:-0.176px;">Absolute</span>
<svg style="left:2013.3px;top:190.75px" width="7" height="5" viewBox="0 0 7 5"><path d="M.2 .3h6.600L3.500 4.500z" fill="#e8e8e8"/></svg>
<span class="t" style="left:1806.60px;top:212.19px;font-size:11px;line-height:14px;color:#8e8e8e;letter-spacing:-0.279px;">Channel:</span>
<div style="left:1854px;top:208.3px;width:154px;height:20px;background:#595959;border-radius:2px"></div>
<span class="t" style="left:1859.50px;top:212.09px;font-size:11px;line-height:14px;color:#8e8e8e;letter-spacing:-0.214px;">0</span>
<div style="left:2013px;top:208.3px;width:14.5px;height:20px;background:#595959;border-radius:2px"></div>
<span class="t" style="left:2017.60px;top:210.99px;font-size:11px;line-height:14px;color:#8e8e8e;letter-spacing:-0.192px;">v</span>
<div style="left:1920.6px;top:236.6px;width:103.5px;height:19.5px;background:#656565;border-radius:2px"></div>
<div style="left:1921.6px;top:237.6px;width:90.5px;height:17.5px;background:#3f5a72"></div>
<span class="t" style="left:1926.60px;top:239.94px;font-size:11px;line-height:14px;color:#ebebeb;letter-spacing:0.146px;">4&#x27;11 7/8&quot;</span>
<svg style="left:2015.3px;top:241.35px" width="5" height="10" viewBox="0 0 5 10"><path d="M2.500 .4L4.900 3.700H.1zM2.500 9.600L4.900 6.300H.1z" fill="#e0e0e0"/></svg>
<span class="t" style="left:1880.30px;top:239.94px;font-size:11px;line-height:14px;color:#ebebeb;letter-spacing:-0.285px;">Radius:</span>
<div style="left:1920.6px;top:261px;width:103.5px;height:19.5px;background:#595959;border-radius:2px"></div>
<span class="t" style="left:1926.60px;top:264.34px;font-size:11px;line-height:14px;color:#8e8e8e;letter-spacing:0.075px;">500.0</span>
<svg style="left:2015.3px;top:265.75px" width="5" height="10" viewBox="0 0 5 10"><path d="M2.500 .4L4.900 3.700H.1zM2.500 9.600L4.900 6.300H.1z" fill="#8a8a8a"/></svg>
<span class="t" style="left:1870.00px;top:264.34px;font-size:11px;line-height:14px;color:#8e8e8e;letter-spacing:-0.133px;">Multiplier:</span>
<div style="left:1920.6px;top:285px;width:103.5px;height:19.5px;background:#656565;border-radius:2px"></div>
<div style="left:1921.6px;top:286px;width:90.5px;height:17.5px;background:#3f5a72"></div>
<span class="t" style="left:1926.60px;top:288.34px;font-size:11px;line-height:14px;color:#ebebeb;letter-spacing:0.148px;">20.0</span>
<svg style="left:2015.3px;top:289.75px" width="5" height="10" viewBox="0 0 5 10"><path d="M2.500 .4L4.900 3.700H.1zM2.500 9.600L4.900 6.300H.1z" fill="#e0e0e0"/></svg>
<span class="t" style="left:1851.90px;top:288.34px;font-size:11px;line-height:14px;color:#ebebeb;letter-spacing:0.010px;">Tolerance %:</span>
<div style="left:1798.5px;top:326.7px;width:238.5px;height:164.6px;box-sizing:border-box;border:1px solid #3a3a3a;border-radius:3px;box-shadow:inset 0 0 0 .5px #4a4a4a"></div>
<div style="left:1801.0px;top:324.7px;width:71.0px;height:5px;background:#515151"></div>
<span class="t" style="left:1803.50px;top:320.19px;font-size:11px;line-height:14px;color:#ebebeb;letter-spacing:-0.205px;">Collision force</span>
<div style="left:1920.6px;top:340.2px;width:103.5px;height:19.5px;background:#656565;border-radius:2px"></div>
<span class="t" style="left:1926.60px;top:343.54px;font-size:11px;line-height:14px;color:#ebebeb;letter-spacing:0.148px;">0.75</span>
<svg style="left:2015.3px;top:344.95px" width="5" height="10" viewBox="0 0 5 10"><path d="M2.500 .4L4.900 3.700H.1zM2.500 9.600L4.900 6.300H.1z" fill="#e0e0e0"/></svg>
<span class="t" style="left:1870.50px;top:343.54px;font-size:11px;line-height:14px;color:#ebebeb;letter-spacing:0.006px;">Stiffness:</span>
<div style="left:1920.6px;top:364.3px;width:103.5px;height:19.5px;background:#656565;border-radius:2px"></div>
<span class="t" style="left:1926.60px;top:367.64px;font-size:11px;line-height:14px;color:#ebebeb;letter-spacing:-0.178px;">0.0</span>
<svg style="left:2015.3px;top:369.05px" width="5" height="10" viewBox="0 0 5 10"><path d="M2.500 .4L4.900 3.700H.1zM2.500 9.600L4.900 6.300H.1z" fill="#e0e0e0"/></svg>
<span class="t" style="left:1862.80px;top:367.64px;font-size:11px;line-height:14px;color:#ebebeb;letter-spacing:0.077px;">Friction %:</span>
<div style="left:1920.6px;top:388.3px;width:103.5px;height:19.5px;background:#656565;border-radius:2px"></div>
<span class="t" style="left:1926.60px;top:391.64px;font-size:11px;line-height:14px;color:#ebebeb;letter-spacing:-0.178px;">0.0</span>
<svg style="left:2015.3px;top:393.05px" width="5" height="10" viewBox="0 0 5 10"><path d="M2.500 .4L4.900 3.700H.1zM2.500 9.600L4.900 6.300H.1z" fill="#e0e0e0"/></svg>
<span class="t" style="left:1861.20px;top:391.64px;font-size:11px;line-height:14px;color:#ebebeb;letter-spacing:-0.343px;">Mass z-bias</span>
<div style="left:1808px;top:418.3px;width:10px;height:10px;background:#6b6b6b"></div>
<span class="t" style="left:1820.50px;top:416.99px;font-size:11px;line-height:14px;color:#ebebeb;letter-spacing:0.078px;">Stiffness affects inertia</span>
<div style="left:1807.3px;top:441.5px;width:221px;height:41px;box-sizing:border-box;border:1px solid #3a3a3a;border-radius:3px;box-shadow:inset 0 0 0 .5px #4a4a4a"></div>
<div style="left:1809.8px;top:439.5px;width:78.7px;height:5px;background:#515151"></div>
<span class="t" style="left:1812.30px;top:434.99px;font-size:11px;line-height:14px;color:#ebebeb;letter-spacing:-0.043px;">Stiffness solver</span>
<div style="left:1850.1px;top:457.5px;width:11px;height:11px;border-radius:50%;background:#666666;box-shadow:0 0 0 .6px #4a4a4a"></div>
<span class="t" style="left:1867.50px;top:456.19px;font-size:11px;line-height:14px;color:#ebebeb;letter-spacing:-0.654px;">Simple</span>
<div style="left:1905.8px;top:457.5px;width:11px;height:11px;border-radius:50%;background:#666666;box-shadow:0 0 0 .6px #4a4a4a"></div>
<div style="left:1908.3px;top:460px;width:6px;height:6px;border-radius:50%;background:#eeeeee"></div>
<span class="t" style="left:1923.50px;top:456.19px;font-size:11px;line-height:14px;color:#ebebeb;letter-spacing:-0.110px;">Constrained</span>
<div style="left:1794px;top:501px;width:248px;height:496px;background:#515151;border-radius:3px 3px 0 0"></div>
<svg style="left:1799.5px;top:507.8px" width="7" height="5" viewBox="0 0 7 5"><path d="M.2 .3h6.600L3.500 4.700z" fill="#b4b4b4"/></svg>
<span class="t" style="left:1812.70px;top:503.79px;font-size:11px;line-height:14px;color:#ffffff;letter-spacing:0.378px;font-weight:bold;">Simulation</span>
<svg style="left:2029.0px;top:507.3px" width="5" height="5" viewBox="0 0 5 5"><rect x="0" y="0" width="1" height="1" fill="#8a8a8a"/><rect x="0" y="2" width="1" height="1" fill="#8a8a8a"/><rect x="0" y="4" width="1" height="1" fill="#8a8a8a"/><rect x="2" y="0" width="1" height="1" fill="#8a8a8a"/><rect x="2" y="2" width="1" height="1" fill="#8a8a8a"/><rect x="2" y="4" width="1" height="1" fill="#8a8a8a"/><rect x="4" y="0" width="1" height="1" fill="#8a8a8a"/><rect x="4" y="2" width="1" height="1" fill="#8a8a8a"/><rect x="4" y="4" width="1" height="1" fill="#8a8a8a"/></svg>
<div style="left:1798.5px;top:529.6px;width:238.5px;height:210.4px;box-sizing:border-box;border:1px solid #3a3a3a;border-radius:3px;box-shadow:inset 0 0 0 .5px #4a4a4a"></div>
<div style="left:1801.0px;top:527.6px;width:54.6px;height:5px;background:#515151"></div>
<span class="t" style="left:1803.50px;top:523.09px;font-size:11px;line-height:14px;color:#ebebeb;letter-spacing:0.252px;">Integrator</span>
<div style="left:1808px;top:542.3px;width:10px;height:10px;background:#6b6b6b"><svg style="left:0;top:0" width="10" height="10" viewBox="0 0 10 10"><path d="M1.300 4.800L3.700 7.600 8.800 1.500" fill="none" stroke="#f0f0f0" stroke-width="1.900"/></svg></div>
<span class="t" style="left:1820.50px;top:540.99px;font-size:11px;line-height:14px;color:#ebebeb;letter-spacing:0.040px;">Integrate into bind solver</span>
<div style="left:1808px;top:562.3px;width:10px;height:10px;background:#6b6b6b"><svg style="left:0;top:0" width="10" height="10" viewBox="0 0 10 10"><path d="M1.300 4.800L3.700 7.600 8.800 1.500" fill="none" stroke="#f0f0f0" stroke-width="1.900"/></svg></div>
<span class="t" style="left:1820.50px;top:560.99px;font-size:11px;line-height:14px;color:#ebebeb;letter-spacing:-0.212px;">OpenCL acceleration</span>
<span class="t" style="left:1806.50px;top:584.19px;font-size:11px;line-height:14px;color:#8e8e8e;letter-spacing:-0.024px;">Accelerator:</span>
<div style="left:1879.5px;top:580.3px;width:148px;height:19.7px;background:#595959;border-radius:2px"></div>
<span class="t" style="left:1884.50px;top:583.94px;font-size:11px;line-height:14px;color:#8e8e8e;letter-spacing:-0.468px;">Hashmap</span>
<svg style="left:2013.3px;top:587.65px" width="7" height="5" viewBox="0 0 7 5"><path d="M.2 .3h6.600L3.500 4.500z" fill="#8a8a8a"/></svg>
<div style="left:1920.6px;top:608px;width:103.5px;height:19.7px;background:#595959;border-radius:2px"></div>
<span class="t" style="left:1926.60px;top:611.44px;font-size:11px;line-height:14px;color:#8e8e8e;letter-spacing:-0.214px;">1</span>
<svg style="left:2015.3px;top:612.85px" width="5" height="10" viewBox="0 0 5 10"><path d="M2.500 .4L4.900 3.700H.1zM2.500 9.600L4.900 6.300H.1z" fill="#8a8a8a"/></svg>
<span class="t" style="left:1868.10px;top:611.44px;font-size:11px;line-height:14px;color:#8e8e8e;letter-spacing:-0.157px;">Substeps:</span>
<span class="t" style="left:1882.40px;top:632.89px;font-size:11px;line-height:14px;color:#8e8e8e;letter-spacing:0.317px;">Affect:</span>
<div style="left:1920.9px;top:634.2px;width:11px;height:11px;border-radius:50%;background:#5a5a5a;box-shadow:0 0 0 .6px #4a4a4a"></div>
<span class="t" style="left:1938.40px;top:632.89px;font-size:11px;line-height:14px;color:#8e8e8e;letter-spacing:-0.254px;">Position</span>
<div style="left:1920.9px;top:653.7px;width:11px;height:11px;border-radius:50%;background:#5a5a5a;box-shadow:0 0 0 .6px #4a4a4a"></div>
<div style="left:1923.4px;top:656.2px;width:6px;height:6px;border-radius:50%;background:#8c8c8c"></div>
<span class="t" style="left:1938.40px;top:652.39px;font-size:11px;line-height:14px;color:#8e8e8e;letter-spacing:-0.164px;">Velocity</span>
<div style="left:1920.9px;top:672.5px;width:11px;height:11px;border-radius:50%;background:#5a5a5a;box-shadow:0 0 0 .6px #4a4a4a"></div>
<span class="t" style="left:1938.40px;top:671.19px;font-size:11px;line-height:14px;color:#8e8e8e;letter-spacing:-0.157px;">Both</span>
<span class="t" style="left:1860.70px;top:690.19px;font-size:11px;line-height:14px;color:#8e8e8e;letter-spacing:0.109px;">Affect axis:</span>
<div style="left:1920.6px;top:692px;width:10px;height:10px;background:#5e5e5e"><svg style="left:0;top:0" width="10" height="10" viewBox="0 0 10 10"><path d="M1.300 4.800L3.700 7.600 8.800 1.500" fill="none" stroke="#9a9a9a" stroke-width="1.900"/></svg></div>
<span class="t" style="left:1933.30px;top:690.69px;font-size:11px;line-height:14px;color:#8e8e8e;letter-spacing:-0.257px;">X</span>
<div style="left:1956.4px;top:692px;width:10px;height:10px;background:#5e5e5e"><svg style="left:0;top:0" width="10" height="10" viewBox="0 0 10 10"><path d="M1.300 4.800L3.700 7.600 8.800 1.500" fill="none" stroke="#9a9a9a" stroke-width="1.900"/></svg></div>
<span class="t" style="left:1969.00px;top:690.69px;font-size:11px;line-height:14px;color:#8e8e8e;letter-spacing:-0.257px;">Y</span>
<div style="left:1991.7px;top:692px;width:10px;height:10px;background:#5e5e5e"><svg style="left:0;top:0" width="10" height="10" viewBox="0 0 10 10"><path d="M1.300 4.800L3.700 7.600 8.800 1.500" fill="none" stroke="#9a9a9a" stroke-width="1.900"/></svg></div>
<span class="t" style="left:2004.70px;top:690.69px;font-size:11px;line-height:14px;color:#8e8e8e;letter-spacing:-0.235px;">Z</span>
<div style="left:1920.6px;top:708.4px;width:103.5px;height:19.7px;background:#656565;border-radius:2px"></div>
<span class="t" style="left:1926.60px;top:711.84px;font-size:11px;line-height:14px;color:#ebebeb;letter-spacing:-0.214px;">128</span>
<svg style="left:2015.3px;top:713.25px" width="5" height="10" viewBox="0 0 5 10"><path d="M2.500 .4L4.900 3.700H.1zM2.500 9.600L4.900 6.300H.1z" fill="#e0e0e0"/></svg>
<span class="t" style="left:1842.10px;top:711.84px;font-size:11px;line-height:14px;color:#ebebeb;letter-spacing:-0.121px;">Max neighbors:</span>
<div style="left:1798.5px;top:751px;width:238.5px;height:212.5px;box-sizing:border-box;border:1px solid #3a3a3a;border-radius:3px;box-shadow:inset 0 0 0 .5px #4a4a4a"></div>
<div style="left:1801.0px;top:749px;width:93.9px;height:5px;background:#515151"></div>
<span class="t" style="left:1803.50px;top:744.49px;font-size:11px;line-height:14px;color:#ebebeb;letter-spacing:-0.079px;">Particle interaction</span>
<div style="left:1808px;top:763.3px;width:10px;height:10px;background:#6b6b6b"></div>
<span class="t" style="left:1820.50px;top:761.99px;font-size:11px;line-height:14px;color:#ebebeb;letter-spacing:-0.109px;">Process only this event</span>
<div style="left:1808px;top:783.3px;width:10px;height:10px;background:#6b6b6b"></div>
<span class="t" style="left:1820.50px;top:781.99px;font-size:11px;line-height:14px;color:#ebebeb;letter-spacing:0.100px;">Affect only this event</span>
<div style="left:1808px;top:803.2px;width:10px;height:10px;background:#6b6b6b"><svg style="left:0;top:0" width="10" height="10" viewBox="0 0 10 10"><path d="M1.300 4.800L3.700 7.600 8.800 1.500" fill="none" stroke="#f0f0f0" stroke-width="1.900"/></svg></div>
<span class="t" style="left:1820.50px;top:801.89px;font-size:11px;line-height:14px;color:#ebebeb;letter-spacing:-0.095px;">Ignore binding neighbors</span>
<div style="left:1808px;top:823.2px;width:10px;height:10px;background:#6b6b6b"><svg style="left:0;top:0" width="10" height="10" viewBox="0 0 10 10"><path d="M1.300 4.800L3.700 7.600 8.800 1.500" fill="none" stroke="#f0f0f0" stroke-width="1.900"/></svg></div>
<span class="t" style="left:1820.50px;top:821.89px;font-size:11px;line-height:14px;color:#ebebeb;letter-spacing:0.064px;">Ignore starting penetrations</span>
<div style="left:1823px;top:843px;width:10px;height:10px;background:#6b6b6b"></div>
<span class="t" style="left:1835.50px;top:841.69px;font-size:11px;line-height:14px;color:#ebebeb;letter-spacing:-0.013px;">Stop ignoring after separation</span>
<div style="left:1822.3px;top:865.7px;width:206px;height:88.3px;box-sizing:border-box;border:1px solid #3a3a3a;border-radius:3px;box-shadow:inset 0 0 0 .5px #4a4a4a"></div>
<div style="left:1824.8px;top:863.7px;width:52.8px;height:5px;background:#515151"></div>
<span class="t" style="left:1827.30px;top:859.19px;font-size:11px;line-height:14px;color:#ebebeb;letter-spacing:-0.172px;">Clustering</span>
<div style="left:1834.6px;top:881px;width:10px;height:10px;background:#6b6b6b"></div>
<span class="t" style="left:1847.10px;top:879.69px;font-size:11px;line-height:14px;color:#ebebeb;letter-spacing:-0.211px;">Enable clustering</span>
<span class="t" style="left:1833.80px;top:902.19px;font-size:11px;line-height:14px;color:#8e8e8e;letter-spacing:-0.279px;">Channel:</span>
<div style="left:1881px;top:897.8px;width:115px;height:20.2px;background:#595959;border-radius:2px"></div>
<span class="t" style="left:1886.50px;top:901.69px;font-size:11px;line-height:14px;color:#8e8e8e;letter-spacing:-0.214px;">0</span>
<div style="left:2001.2px;top:897.8px;width:13.7px;height:20.2px;background:#595959;border-radius:2px"></div>
<span class="t" style="left:2005.40px;top:900.59px;font-size:11px;line-height:14px;color:#8e8e8e;letter-spacing:-0.192px;">v</span>
<div style="left:1834.6px;top:922.4px;width:180.3px;height:19.8px;background:#595959;border-radius:2px"></div>
<span class="t" style="left:1839.60px;top:926.09px;font-size:11px;line-height:14px;color:#8e8e8e;letter-spacing:-0.079px;">Cluster if equal</span>
<svg style="left:2000.0px;top:929.8px" width="7" height="5" viewBox="0 0 7 5"><path d="M.2 .3h6.600L3.500 4.500z" fill="#8a8a8a"/></svg>
<div style="left:1798.5px;top:974px;width:238.5px;height:40px;box-sizing:border-box;border:1px solid #3a3a3a;border-radius:3px;box-shadow:inset 0 0 0 .5px #4a4a4a"></div>
<div style="left:1801.0px;top:972px;width:88.8px;height:5px;background:#515151"></div>
<span class="t" style="left:1803.50px;top:967.49px;font-size:11px;line-height:14px;color:#ebebeb;letter-spacing:-0.250px;">Simulation groups</span>
<div style="left:1838.2px;top:987.2px;width:17.5px;height:14px;background:#5e5e5e;border-radius:3px 3px 0 0"></div>
<span class="t" style="left:1843.95px;top:990.19px;font-size:11px;line-height:14px;color:#ebebeb;letter-spacing:-0.214px;">1</span>
<div style="left:1858.2px;top:987.2px;width:17.5px;height:14px;background:#5e5e5e;border-radius:3px 3px 0 0"></div>
<span class="t" style="left:1863.95px;top:990.19px;font-size:11px;line-height:14px;color:#ebebeb;letter-spacing:-0.214px;">2</span>
<div style="left:1878.2px;top:987.2px;width:17.5px;height:14px;background:#5e5e5e;border-radius:3px 3px 0 0"></div>
<span class="t" style="left:1883.95px;top:990.19px;font-size:11px;line-height:14px;color:#ebebeb;letter-spacing:-0.214px;">3</span>
<div style="left:1898.2px;top:987.2px;width:17.5px;height:14px;background:#5e5e5e;border-radius:3px 3px 0 0"></div>
<span class="t" style="left:1903.95px;top:990.19px;font-size:11px;line-height:14px;color:#ebebeb;letter-spacing:-0.214px;">4</span>
<div style="left:1918.2px;top:987.2px;width:17.5px;height:14px;background:#5e5e5e;border-radius:3px 3px 0 0"></div>
<span class="t" style="left:1923.95px;top:990.19px;font-size:11px;line-height:14px;color:#ebebeb;letter-spacing:-0.214px;">5</span>
<div style="left:1938.2px;top:987.2px;width:17.5px;height:14px;background:#5e5e5e;border-radius:3px 3px 0 0"></div>
<span class="t" style="left:1943.95px;top:990.19px;font-size:11px;line-height:14px;color:#ebebeb;letter-spacing:-0.214px;">6</span>
<div style="left:1958.2px;top:987.2px;width:17.5px;height:14px;background:#5e5e5e;border-radius:3px 3px 0 0"></div>
<span class="t" style="left:1963.95px;top:990.19px;font-size:11px;line-height:14px;color:#ebebeb;letter-spacing:-0.214px;">7</span>
<div style="left:1978.2px;top:987.2px;width:17.5px;height:14px;background:#5e5e5e;border-radius:3px 3px 0 0"></div>
<span class="t" style="left:1983.95px;top:990.19px;font-size:11px;line-height:14px;color:#ebebeb;letter-spacing:-0.214px;">8</span>
<div style="left:2046px;top:6px;width:4.2px;height:991px;background:#3b3b3b;"></div>
<div style="left:2046px;top:6px;width:4.2px;height:805px;background:#585858;"></div>
<div style="left:1186px;top:997px;width:866.5px;height:21px;background:#353535;"></div>
<div style="left:2107px;top:0px;width:1px;height:1018px;background:#3b3a30;"></div>
<div style="left:2108px;top:0px;width:2.2px;height:1018px;background:#7c6934;"></div>
<div style="left:2110.2px;top:0px;width:242px;height:1018px;background:#444444;"></div>
<div style="left:2113.5px;top:0px;width:1px;height:1018px;background:#3d3d3d;"></div>
<div style="left:2120px;top:-4px;width:216.5px;height:12.600px;background:#646464;border-radius:2px"></div>
<span class="t" style="left:2124.00px;top:-7.51px;font-size:11px;line-height:14px;color:#ebebeb;letter-spacing:-0.209px;">Sphere001</span>
<div style="left:2342.3px;top:0px;width:10px;height:9.3px;background:#1fb574;"></div>
<div style="left:2120px;top:20px;width:236px;height:19px;background:#646464;border-radius:2px"></div>
<span class="t" style="left:2122.50px;top:23.19px;font-size:11px;line-height:14px;color:#ebebeb;letter-spacing:-0.169px;">Modifier List</span>
<svg style="left:2346px;top:27.500px" width="7" height="5" viewBox="0 0 7 5"><path d="M.2 .3h6.600L3.500 4.500z" fill="#e8e8e8"/></svg>
<div style="left:2121.8px;top:51px;width:114.200px;height:18.200px;background:#5f5f5f;border-radius:3px"></div>
<div style="left:2241.7px;top:51px;width:114.200px;height:18.200px;background:#5f5f5f;border-radius:3px"></div>
<span class="t" style="left:2150.00px;top:54.39px;font-size:11px;line-height:14px;color:#ebebeb;letter-spacing:-0.375px;">Mesh Select</span>
<span class="t" style="left:2282.30px;top:54.39px;font-size:11px;line-height:14px;color:#8e8e8e;letter-spacing:-0.327px;">Sweep</span>
<div style="left:2121.8px;top:73.6px;width:114.200px;height:18.200px;background:#5f5f5f;border-radius:3px"></div>
<div style="left:2241.7px;top:73.6px;width:114.200px;height:18.200px;background:#5f5f5f;border-radius:3px"></div>
<span class="t" style="left:2157.85px;top:76.99px;font-size:11px;line-height:14px;color:#ebebeb;letter-spacing:-0.301px;">Edit Poly</span>
<span class="t" style="left:2273.75px;top:76.99px;font-size:11px;line-height:14px;color:#8e8e8e;letter-spacing:-0.317px;">Edit Spline</span>
<div style="left:2121.8px;top:96.2px;width:114.200px;height:18.200px;background:#5f5f5f;border-radius:3px"></div>
<div style="left:2241.7px;top:96.2px;width:114.200px;height:18.200px;background:#5f5f5f;border-radius:3px"></div>
<span class="t" style="left:2155.15px;top:99.59px;font-size:11px;line-height:14px;color:#ebebeb;letter-spacing:-0.312px;">Edit Mesh</span>
<span class="t" style="left:2279.30px;top:99.59px;font-size:11px;line-height:14px;color:#8e8e8e;letter-spacing:0.013px;">Extrude</span>
<div style="left:2121.8px;top:118.9px;width:114.200px;height:18.200px;background:#5f5f5f;border-radius:3px"></div>
<div style="left:2241.7px;top:118.9px;width:114.200px;height:18.200px;background:#5f5f5f;border-radius:3px"></div>
<span class="t" style="left:2155.15px;top:122.29px;font-size:11px;line-height:14px;color:#ebebeb;letter-spacing:-0.574px;">UVW Map</span>
<span class="t" style="left:2272.25px;top:122.29px;font-size:11px;line-height:14px;color:#ebebeb;letter-spacing:-0.188px;">FFD 2x2x2</span>
<div style="left:2119.500px;top:146px;width:240px;height:127.300px;box-sizing:border-box;border:1.200px solid #e6e6e6;background:#454545"></div>
<div style="left:2120.7px;top:147.2px;width:234px;height:17.3px;background:#5b8bc6;"></div>
<span class="t" style="left:2142.50px;top:150.19px;font-size:11px;line-height:14px;color:#ffffff;letter-spacing:-0.295px;">Sphere</span>
<div style="left:2156px;top:279.700px;width:22px;height:22.500px;background:#5b8bc6;border-radius:3px"></div>
<svg style="left:2120px;top:278px" width="160" height="28" viewBox="0 0 160 28"><path d="M29.600 5v16M65.500 5v16M125.500 5v16" stroke="#1c1c1c" stroke-width="1.300"/><path d="M5 19.500l5-5" stroke="#d8d8d8" stroke-width="1.300"/><path d="M12.500 5.500l5 4-1.200 1.200-.8-.2-2.800 3.300-.2 1.800-4.200-3.800 1.800-.4 2.800-3.300-.4-.8z" fill="#dcdcdc"/><path d="M44.500 6.900h6.800M46 7.500v11.600a1.900 1.900 0 0 0 3.800 0V7.500" fill="none" stroke="#16283c" stroke-width="2.800"/><path d="M44.500 6.900h6.800M46 7.500v11.600a1.900 1.900 0 0 0 3.800 0V7.500" fill="#6fd8cc" stroke="#e8f4ff" stroke-width="1.200"/><g fill="#5e5e5e" stroke="#2a2a2a" stroke-width="1.300"><circle cx="88" cy="16.800" r="3.300"/><circle cx="78.800" cy="8.900" r="3.300"/><circle cx="82.800" cy="16.800" r="3.600"/><path d="M83.500 8h4.300v4" fill="none"/></g><path d="M101.700 8.800h10.600M104.500 8.500V6.300h5v2.200M103 9.500l.5 10.700h7l.5-10.700M105.500 11.500v6.500M108.500 11.500v6.500" fill="none" stroke="#2a2a2a" stroke-width="1.300"/><rect x="136" y="6.500" width="12" height="13.500" fill="#e4e4e4"/><rect x="136" y="6.500" width="12" height="2.300" fill="#cfcfcf"/><g fill="#3a3a3a"><rect x="137.500" y="10" width="3.600" height="3.300"/><rect x="143" y="10" width="3.600" height="3.300"/><rect x="137.500" y="15" width="3.600" height="3.300"/><rect x="143" y="15" width="3.600" height="3.300"/></g><g fill="#fff"><rect x="138.500" y="10.800" width="1.600" height="1.600"/><rect x="138.500" y="15.800" width="1.600" height="1.600"/><rect x="144" y="15.800" width="1.600" height="1.600"/></g><path d="M141.800 13.500l6.800-7.300 1.700 1.500-6.800 7.300-2.200.6z" fill="#f0b030" stroke="#8a6010" stroke-width=".4"/></svg>
<div style="left:2124px;top:320px;width:108px;height:1px;background:#5a5a5a;"></div>
<div style="left:2248px;top:320px;width:104px;height:1px;background:#5a5a5a;"></div>
<svg style="left:2233px;top:318.500px" width="13" height="3" viewBox="0 0 13 3"><rect x="0" y="0" width="1" height="1" fill="#c8c8c8"/><rect x="0" y="2" width="1" height="1" fill="#c8c8c8"/><rect x="2" y="0" width="1" height="1" fill="#c8c8c8"/><rect x="2" y="2" width="1" height="1" fill="#c8c8c8"/><rect x="4" y="0" width="1" height="1" fill="#c8c8c8"/><rect x="4" y="2" width="1" height="1" fill="#c8c8c8"/><rect x="6" y="0" width="1" height="1" fill="#c8c8c8"/><rect x="6" y="2" width="1" height="1" fill="#c8c8c8"/><rect x="8" y="0" width="1" height="1" fill="#c8c8c8"/><rect x="8" y="2" width="1" height="1" fill="#c8c8c8"/><rect x="10" y="0" width="1" height="1" fill="#c8c8c8"/><rect x="10" y="2" width="1" height="1" fill="#c8c8c8"/><rect x="12" y="0" width="1" height="1" fill="#c8c8c8"/><rect x="12" y="2" width="1" height="1" fill="#c8c8c8"/></svg>
<div style="left:2119.4px;top:328.5px;width:240px;height:293.5px;background:#515151;border-radius:3px"></div>
<svg style="left:2124.9px;top:335.3px" width="7" height="5" viewBox="0 0 7 5"><path d="M.2 .3h6.600L3.500 4.700z" fill="#b4b4b4"/></svg>
<span class="t" style="left:2138.10px;top:331.29px;font-size:11px;line-height:14px;color:#ffffff;letter-spacing:0.687px;font-weight:bold;">Parameters</span>
<svg style="left:2338.5px;top:334.8px" width="5" height="5" viewBox="0 0 5 5"><rect x="0" y="0" width="1" height="1" fill="#8a8a8a"/><rect x="0" y="2" width="1" height="1" fill="#8a8a8a"/><rect x="0" y="4" width="1" height="1" fill="#8a8a8a"/><rect x="2" y="0" width="1" height="1" fill="#8a8a8a"/><rect x="2" y="2" width="1" height="1" fill="#8a8a8a"/><rect x="2" y="4" width="1" height="1" fill="#8a8a8a"/><rect x="4" y="0" width="1" height="1" fill="#8a8a8a"/><rect x="4" y="2" width="1" height="1" fill="#8a8a8a"/><rect x="4" y="4" width="1" height="1" fill="#8a8a8a"/></svg>
<div style="left:2228.5px;top:361px;width:67.8px;height:14.6px;background:#656565;border-radius:2px"></div>
<span class="t" style="left:2231.50px;top:361.89px;font-size:11px;line-height:14px;color:#ebebeb;letter-spacing:0.052px;">2&#x27;5 6/8&quot;</span>
<svg style="left:2287.0px;top:363.3px" width="5" height="10" viewBox="0 0 5 10"><path d="M2.500 .4L4.900 3.700H.1zM2.500 9.600L4.900 6.300H.1z" fill="#e0e0e0"/></svg>
<span class="t" style="left:2188.20px;top:361.89px;font-size:11px;line-height:14px;color:#ebebeb;letter-spacing:-0.285px;">Radius:</span>
<div style="left:2228.5px;top:381.3px;width:67.8px;height:14.6px;background:#656565;border-radius:2px"></div>
<span class="t" style="left:2231.50px;top:382.19px;font-size:11px;line-height:14px;color:#ebebeb;letter-spacing:-0.214px;">32</span>
<svg style="left:2287.0px;top:383.6px" width="5" height="10" viewBox="0 0 5 10"><path d="M2.500 .4L4.900 3.700H.1zM2.500 9.600L4.900 6.300H.1z" fill="#e0e0e0"/></svg>
<span class="t" style="left:2173.80px;top:382.19px;font-size:11px;line-height:14px;color:#ebebeb;letter-spacing:-0.320px;">Segments:</span>
<div style="left:2229.2px;top:408.9px;width:10px;height:10px;background:#6b6b6b"><svg style="left:0;top:0" width="10" height="10" viewBox="0 0 10 10"><path d="M1.300 4.800L3.700 7.600 8.800 1.500" fill="none" stroke="#f0f0f0" stroke-width="1.900"/></svg></div>
<span class="t" style="left:2241.70px;top:407.59px;font-size:11px;line-height:14px;color:#ebebeb;letter-spacing:-0.418px;">Smooth</span>
<div style="left:2228.5px;top:434.5px;width:67.8px;height:14.6px;background:#656565;border-radius:2px"></div>
<span class="t" style="left:2231.50px;top:435.39px;font-size:11px;line-height:14px;color:#ebebeb;letter-spacing:-0.178px;">0.0</span>
<svg style="left:2287.0px;top:436.8px" width="5" height="10" viewBox="0 0 5 10"><path d="M2.500 .4L4.900 3.700H.1zM2.500 9.600L4.900 6.300H.1z" fill="#e0e0e0"/></svg>
<span class="t" style="left:2164.40px;top:435.39px;font-size:11px;line-height:14px;color:#ebebeb;letter-spacing:-0.296px;">Hemisphere:</span>
<div style="left:2171.9px;top:458.7px;width:11px;height:11px;border-radius:50%;background:#666666;box-shadow:0 0 0 .6px #4a4a4a"></div>
<div style="left:2174.4px;top:461.2px;width:6px;height:6px;border-radius:50%;background:#eeeeee"></div>
<span class="t" style="left:2189.50px;top:457.39px;font-size:11px;line-height:14px;color:#ebebeb;letter-spacing:-0.324px;">Chop</span>
<div style="left:2229.0px;top:458.7px;width:11px;height:11px;border-radius:50%;background:#666666;box-shadow:0 0 0 .6px #4a4a4a"></div>
<span class="t" style="left:2246.90px;top:457.39px;font-size:11px;line-height:14px;color:#ebebeb;letter-spacing:-0.484px;">Squash</span>
<div style="left:2231.8px;top:483.6px;width:10px;height:10px;background:#6b6b6b"></div>
<span class="t" style="left:2244.30px;top:482.29px;font-size:11px;line-height:14px;color:#ebebeb;letter-spacing:-0.484px;">Slice On</span>
<div style="left:2228.5px;top:503px;width:67.8px;height:14.6px;background:#595959;border-radius:2px"></div>
<span class="t" style="left:2231.50px;top:503.89px;font-size:11px;line-height:14px;color:#8e8e8e;letter-spacing:-0.178px;">0.0</span>
<svg style="left:2287.0px;top:505.3px" width="5" height="10" viewBox="0 0 5 10"><path d="M2.500 .4L4.900 3.700H.1zM2.500 9.600L4.900 6.300H.1z" fill="#8a8a8a"/></svg>
<span class="t" style="left:2172.50px;top:503.89px;font-size:11px;line-height:14px;color:#ebebeb;letter-spacing:-0.420px;">Slice From:</span>
<div style="left:2228.5px;top:523.7px;width:67.8px;height:14.6px;background:#595959;border-radius:2px"></div>
<span class="t" style="left:2231.50px;top:524.59px;font-size:11px;line-height:14px;color:#8e8e8e;letter-spacing:-0.178px;">0.0</span>
<svg style="left:2287.0px;top:526.0px" width="5" height="10" viewBox="0 0 5 10"><path d="M2.500 .4L4.900 3.700H.1zM2.500 9.600L4.900 6.300H.1z" fill="#8a8a8a"/></svg>
<span class="t" style="left:2184.50px;top:524.59px;font-size:11px;line-height:14px;color:#ebebeb;letter-spacing:-0.264px;">Slice To:</span>
<div style="left:2171.8px;top:553.7px;width:10px;height:10px;background:#6b6b6b"></div>
<span class="t" style="left:2184.30px;top:552.39px;font-size:11px;line-height:14px;color:#ebebeb;letter-spacing:-0.204px;">Base To Pivot</span>
<div style="left:2171.8px;top:574.7px;width:10px;height:10px;background:#6b6b6b"><svg style="left:0;top:0" width="10" height="10" viewBox="0 0 10 10"><path d="M1.300 4.800L3.700 7.600 8.800 1.500" fill="none" stroke="#f0f0f0" stroke-width="1.900"/></svg></div>
<span class="t" style="left:2184.30px;top:573.39px;font-size:11px;line-height:14px;color:#ebebeb;letter-spacing:-0.187px;">Generate Mapping Coords.</span>
<div style="left:2171.8px;top:595.4px;width:10px;height:10px;background:#6b6b6b"></div>
<span class="t" style="left:2184.30px;top:594.09px;font-size:11px;line-height:14px;color:#ebebeb;letter-spacing:-0.311px;">Real-World Map Size</span>
</div></body></html>
